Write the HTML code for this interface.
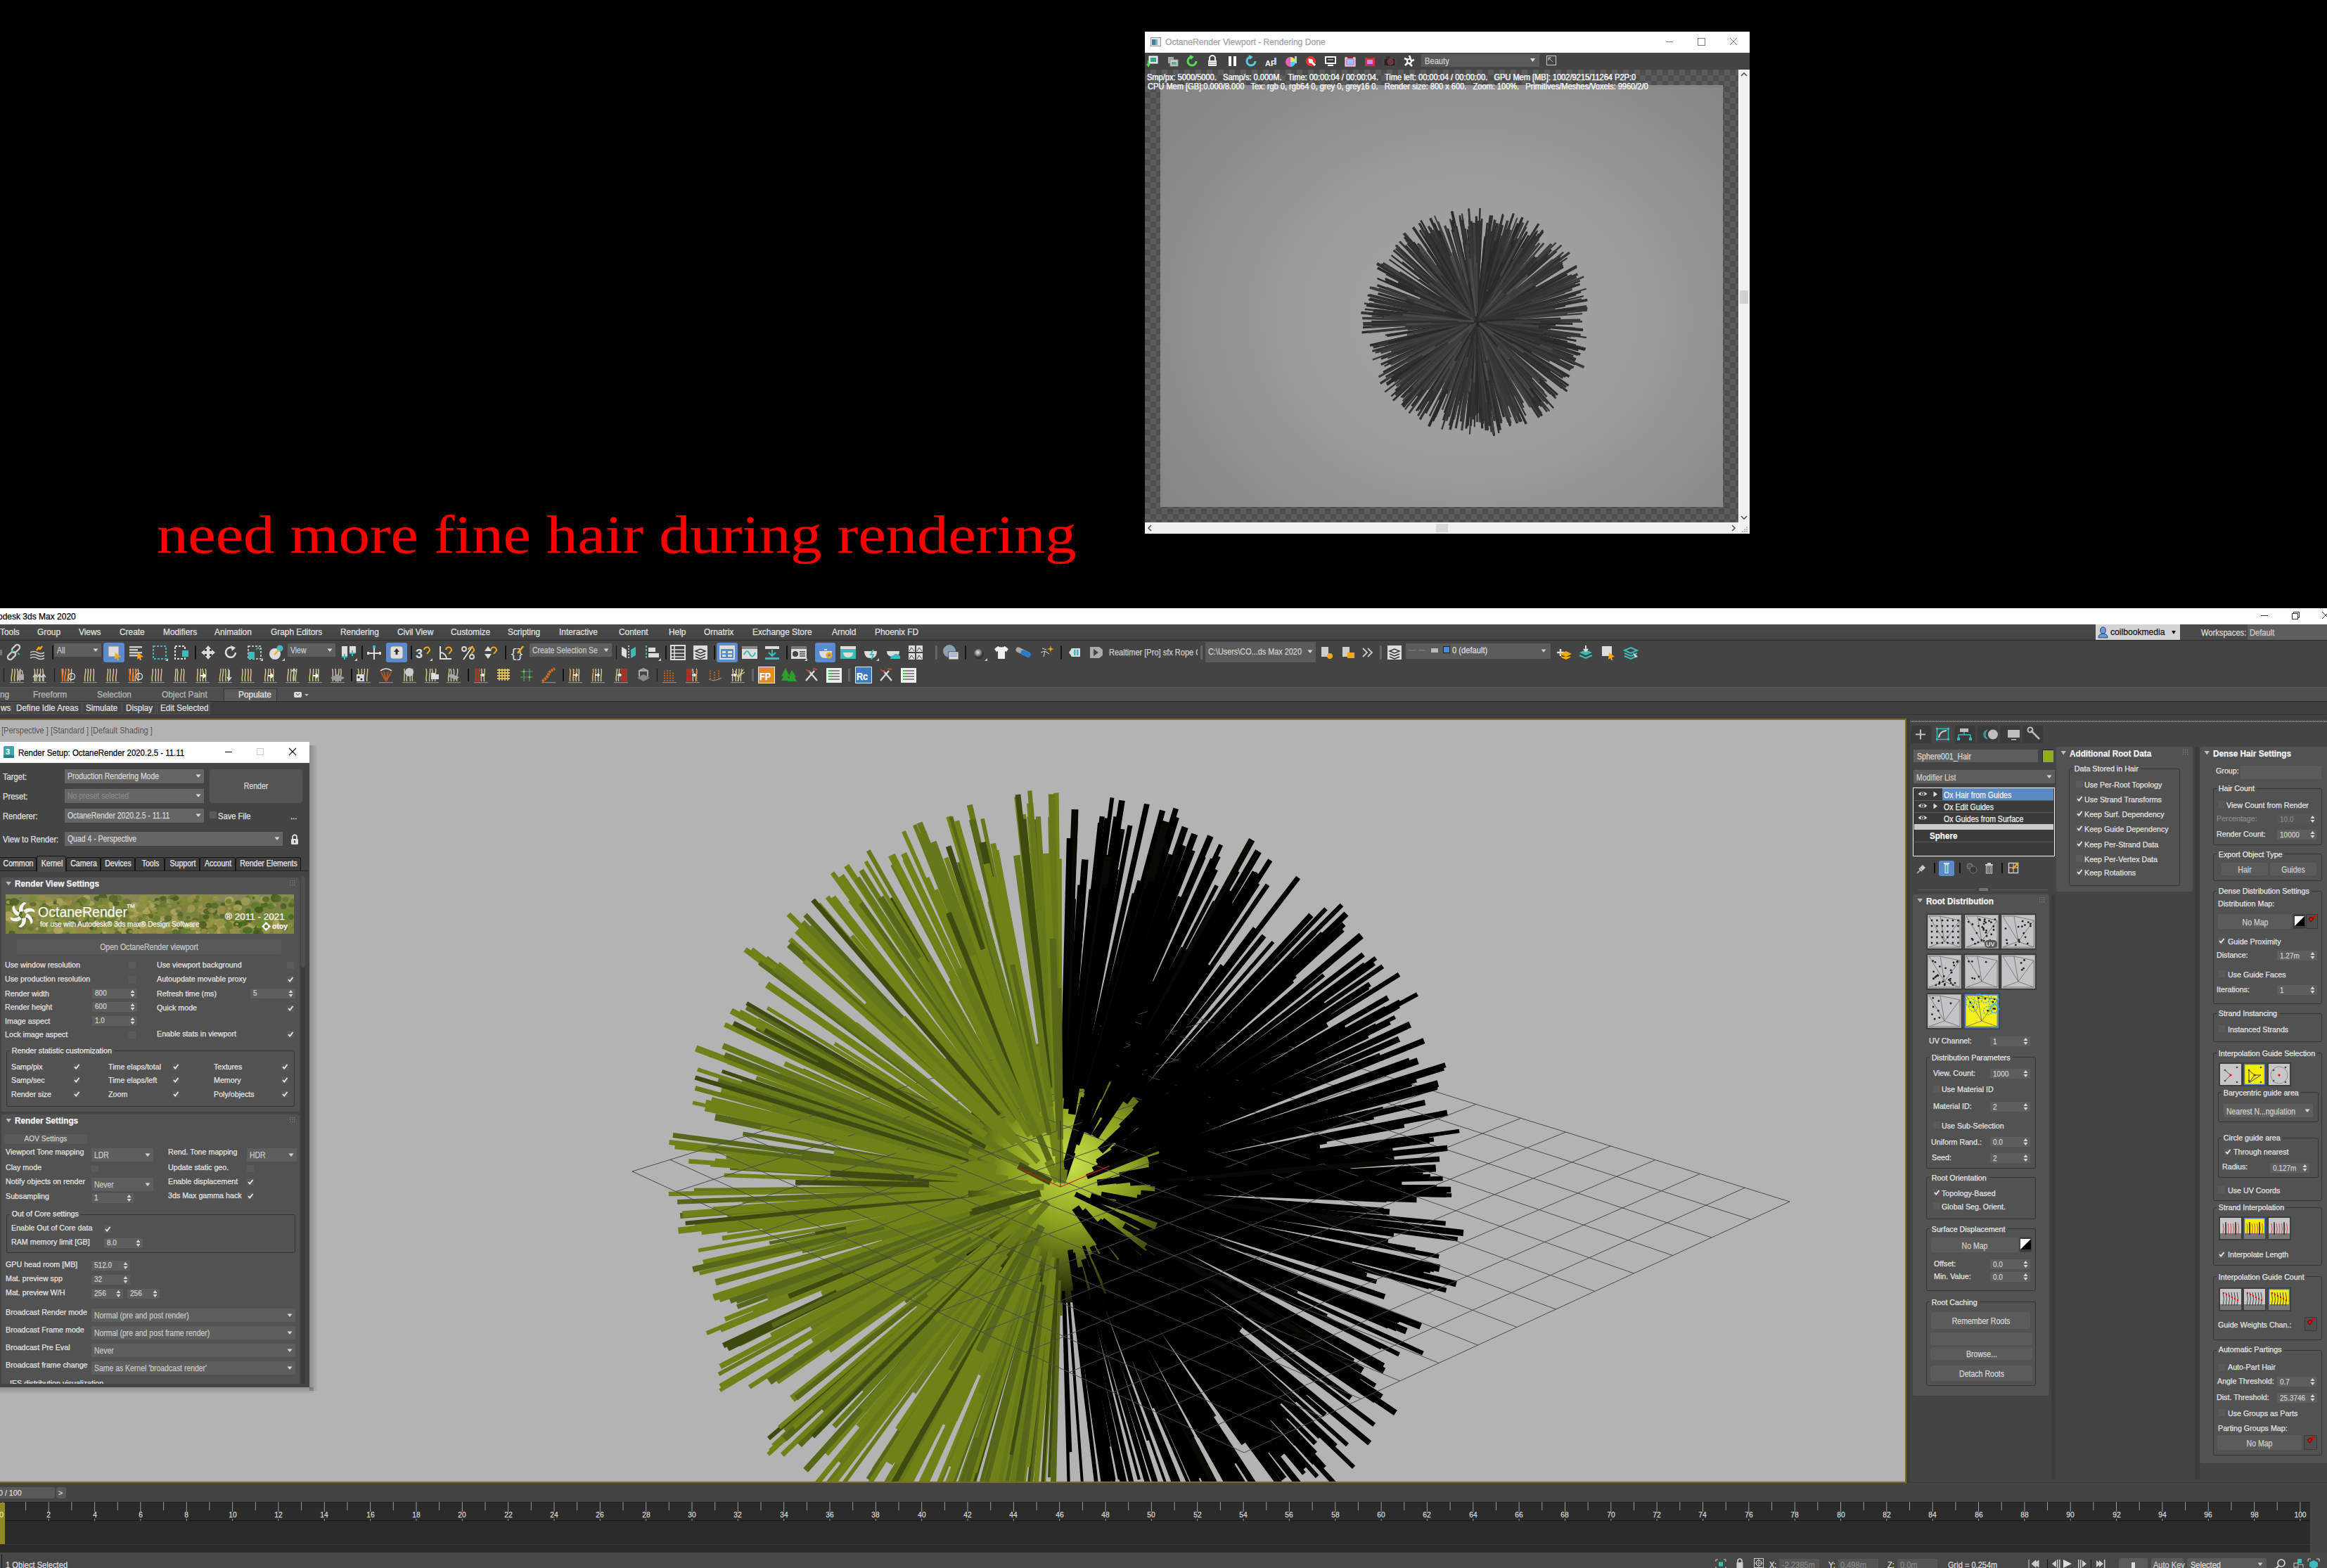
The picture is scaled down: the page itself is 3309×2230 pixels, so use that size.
<!DOCTYPE html>
<html><head><meta charset="utf-8"><style>
html,body{margin:0;padding:0;}
body{width:3309px;height:2230px;background:#000;position:relative;overflow:hidden;font-family:"Liberation Sans",sans-serif;}
.a{position:absolute;box-sizing:border-box;}
svg.a{box-sizing:content-box;overflow:visible;}
.t{position:absolute;white-space:nowrap;font-family:"Liberation Sans",sans-serif;-webkit-text-stroke:0.25px currentColor;}
</style></head><body>
<div class="a" style="left:1628px;top:45px;width:860px;height:30px;background:#ffffff;"></div>
<svg class="a" style="left:1636px;top:52px;" width="16" height="16" viewBox="0 0 16 16"><rect x="0.5" y="1.5" width="14" height="12" fill="#e8e8e8" stroke="#999"/><rect x="2" y="4" width="5" height="8" fill="#3f7f8f"/><rect x="7" y="4" width="3" height="8" fill="#7fb0c0"/></svg>
<div class="t" style="left:1657px;top:53.00px;font-size:13px;line-height:13px;color:#a0a0a8;font-family:'Liberation Sans', sans-serif;transform:scaleX(0.93);transform-origin:0 0;">OctaneRender Viewport - Rendering Done</div>
<svg class="a" style="left:2360px;top:50px;" width="120" height="20" viewBox="0 0 120 20"><line x1="9" y1="9.5" x2="19" y2="9.5" stroke="#777" stroke-width="1"/><rect x="54.5" y="4.5" width="10" height="10" fill="none" stroke="#777"/><line x1="100" y1="4" x2="110" y2="14" stroke="#777"/><line x1="110" y1="4" x2="100" y2="14" stroke="#777"/></svg>
<div class="a" style="left:1628px;top:75px;width:860px;height:24px;background:#444444;"></div>
<svg class="a" style="left:1631px;top:78px;" width="18" height="18" viewBox="0 0 18 18"><rect x="3" y="2" width="12" height="10" fill="#cde" stroke="#fff"/><rect x="5" y="4" width="8" height="6" fill="#3a7"/><path d="M2 8 L2 15 M0 13 L2 16 L4 13" stroke="#5d5" stroke-width="2" fill="none"/></svg>
<svg class="a" style="left:1659px;top:78px;" width="18" height="18" viewBox="0 0 18 18"><rect x="2" y="3" width="8" height="9" fill="#aaa"/><rect x="5" y="7" width="11" height="9" fill="#ccc" stroke="#999"/><rect x="7" y="10" width="7" height="4" fill="#6a8"/></svg>
<svg class="a" style="left:1687px;top:78px;" width="18" height="18" viewBox="0 0 18 18"><path d="M8 3 A6 6 0 1 0 14 9" stroke="#5d5" stroke-width="3" fill="none"/><path d="M5 1 L9 3 L6 6" stroke="#5d5" stroke-width="2" fill="none"/></svg>
<svg class="a" style="left:1715px;top:78px;" width="18" height="18" viewBox="0 0 18 18"><path d="M5 8 V5 A4 4 0 0 1 13 5 V8" stroke="#eee" stroke-width="2" fill="none"/><rect x="3" y="8" width="12" height="8" fill="#eee"/><rect x="4" y="10" width="10" height="1" fill="#999"/><rect x="4" y="13" width="10" height="1" fill="#999"/></svg>
<svg class="a" style="left:1743px;top:78px;" width="18" height="18" viewBox="0 0 18 18"><rect x="4" y="2" width="4" height="14" fill="#fff"/><rect x="11" y="2" width="4" height="14" fill="#fff"/></svg>
<svg class="a" style="left:1771px;top:78px;" width="18" height="18" viewBox="0 0 18 18"><path d="M8 3 A6 6 0 1 0 14 9" stroke="#5cd" stroke-width="3" fill="none"/><path d="M5 1 L9 3 L6 6" stroke="#5cd" stroke-width="2" fill="none"/></svg>
<svg class="a" style="left:1799px;top:78px;" width="18" height="18" viewBox="0 0 18 18"><text x="0" y="16" font-size="11" font-weight="bold" fill="#fff" font-family="Liberation Sans">AF</text><rect x="13" y="4" width="3" height="10" fill="#acf"/></svg>
<svg class="a" style="left:1827px;top:78px;" width="18" height="18" viewBox="0 0 18 18"><circle cx="8" cy="10" r="7" fill="#d6a"/><path d="M8 10 L8 3 A7 7 0 0 1 15 10 Z" fill="#fd4"/><path d="M8 10 L15 10 A7 7 0 0 1 8 17 Z" fill="#4cf"/><rect x="14" y="2" width="3" height="10" fill="#acf"/></svg>
<svg class="a" style="left:1855px;top:78px;" width="18" height="18" viewBox="0 0 18 18"><circle cx="9" cy="9" r="7" fill="#e33"/><circle cx="9" cy="9" r="3" fill="#fff"/><path d="M6 6 L15 15" stroke="#fff" stroke-width="3"/></svg>
<svg class="a" style="left:1883px;top:78px;" width="18" height="18" viewBox="0 0 18 18"><rect x="1" y="2" width="16" height="11" fill="#fff"/><rect x="3" y="4" width="12" height="7" fill="#333"/><rect x="5" y="14" width="8" height="2" fill="#fff"/><path d="M5 7 H13" stroke="#fff"/></svg>
<svg class="a" style="left:1911px;top:78px;" width="18" height="18" viewBox="0 0 18 18"><rect x="2" y="4" width="14" height="12" fill="#d8c" stroke="#fff"/><rect x="5" y="7" width="8" height="6" fill="#8cf"/><rect x="5" y="1" width="8" height="4" fill="#733"/></svg>
<svg class="a" style="left:1939px;top:78px;" width="18" height="18" viewBox="0 0 18 18"><rect x="2" y="4" width="14" height="12" fill="#c34"/><rect x="5" y="7" width="8" height="6" fill="#c8f"/><rect x="5" y="1" width="8" height="4" fill="#733"/></svg>
<svg class="a" style="left:1967px;top:78px;" width="18" height="18" viewBox="0 0 18 18"><rect x="1" y="5" width="16" height="11" rx="2" fill="#222" stroke="#555"/><circle cx="10" cy="10" r="4" fill="#444" stroke="#d22"/><rect x="4" y="2" width="6" height="3" fill="#333"/></svg>
<svg class="a" style="left:1995px;top:78px;" width="18" height="18" viewBox="0 0 18 18"><circle cx="9" cy="9" r="3" fill="none" stroke="#fff" stroke-width="2"/><path d="M9 1 L11 6 M16 7 L11 9 M13 16 L9 12 M3 15 L7 11 M2 5 L7 7" stroke="#fff" stroke-width="2.5"/></svg>
<div class="a" style="left:2021px;top:77px;width:168px;height:18px;background:#5a5a5a;"></div>
<div class="t" style="left:2026px;top:80.84px;font-size:12px;line-height:12px;color:#cfcfcf;font-family:'Liberation Sans', sans-serif;transform:scaleX(0.93);transform-origin:0 0;">Beauty</div>
<svg class="a" style="left:2176px;top:83px;" width="8" height="6" viewBox="0 0 8 6"><path d="M0 0 H7 L3.5 5 Z" fill="#ddd"/></svg>
<svg class="a" style="left:2199px;top:79px;" width="15" height="15" viewBox="0 0 15 15"><rect x="0.5" y="0.5" width="13" height="13" fill="none" stroke="#ccc"/><path d="M3 3 L9 9 M3 3 H7 M3 3 V7" stroke="#ccc"/></svg>
<div class="a" style="left:1628px;top:99px;width:844px;height:644px;background-color:#4d4d4d;background-image:linear-gradient(45deg,#5d5d5d 25%,transparent 25%,transparent 75%,#5d5d5d 75%),linear-gradient(45deg,#5d5d5d 25%,transparent 25%,transparent 75%,#5d5d5d 75%);background-size:16px 16px;background-position:0 0,8px 8px;"></div>
<div class="a" style="left:1650px;top:121px;width:800px;height:600px;background:radial-gradient(ellipse 520px 440px at 440px 330px,#a6a6a6 0%,#9c9c9c 45%,#868686 100%);"></div>
<svg class="a" style="left:1900px;top:257px;" width="400" height="400" viewBox="0 0 400 400"><circle cx="200" cy="200" r="60" fill="#303030"/><line x1="199.5" y1="200.4" x2="196.6" y2="202.8" stroke="#282828" stroke-width="3.5"/><line x1="200.4" y1="200.6" x2="202.6" y2="203.7" stroke="#282828" stroke-width="2.0"/><line x1="200.5" y1="201.7" x2="203.5" y2="211.1" stroke="#282828" stroke-width="2.0"/><line x1="201.9" y1="200.4" x2="212.4" y2="202.7" stroke="#282828" stroke-width="2.8"/><line x1="201.4" y1="197.8" x2="209.3" y2="185.5" stroke="#282828" stroke-width="2.8"/><line x1="199.5" y1="202.4" x2="196.9" y2="216.1" stroke="#282828" stroke-width="2.2"/><line x1="200.8" y1="197.3" x2="205.5" y2="182.3" stroke="#282828" stroke-width="3.0"/><line x1="197.2" y1="200.1" x2="181.4" y2="201.0" stroke="#282828" stroke-width="2.3"/><line x1="200.3" y1="196.9" x2="202.0" y2="179.3" stroke="#282828" stroke-width="3.7"/><line x1="197.1" y1="200.2" x2="180.4" y2="201.4" stroke="#282828" stroke-width="3.5"/><line x1="201.5" y1="202.9" x2="210.2" y2="219.5" stroke="#282828" stroke-width="2.4"/><line x1="197.2" y1="197.8" x2="181.4" y2="185.1" stroke="#282828" stroke-width="3.1"/><line x1="202.9" y1="197.9" x2="219.3" y2="186.3" stroke="#282828" stroke-width="2.7"/><line x1="203.3" y1="201.7" x2="222.0" y2="211.2" stroke="#282828" stroke-width="3.1"/><line x1="200.4" y1="195.2" x2="202.7" y2="167.9" stroke="#282828" stroke-width="3.7"/><line x1="197.6" y1="204.5" x2="184.2" y2="230.0" stroke="#282828" stroke-width="2.6"/><line x1="201.2" y1="205.2" x2="208.0" y2="234.8" stroke="#282828" stroke-width="2.0"/><line x1="204.9" y1="197.5" x2="232.6" y2="183.5" stroke="#282828" stroke-width="2.1"/><line x1="195.7" y1="203.6" x2="171.6" y2="224.3" stroke="#282828" stroke-width="3.8"/><line x1="194.3" y1="198.7" x2="161.8" y2="191.5" stroke="#282828" stroke-width="2.1"/><line x1="205.4" y1="198.0" x2="235.7" y2="186.7" stroke="#282828" stroke-width="3.0"/><line x1="200.0" y1="205.9" x2="199.9" y2="239.3" stroke="#282828" stroke-width="3.0"/><line x1="204.5" y1="205.5" x2="230.3" y2="236.3" stroke="#282828" stroke-width="3.7"/><line x1="205.4" y1="204.5" x2="235.8" y2="229.7" stroke="#282828" stroke-width="3.0"/><line x1="206.8" y1="200.1" x2="245.4" y2="200.7" stroke="#282828" stroke-width="2.6"/><line x1="203.5" y1="205.9" x2="223.3" y2="239.2" stroke="#282828" stroke-width="2.4"/><line x1="198.6" y1="207.4" x2="190.8" y2="249.2" stroke="#282828" stroke-width="3.7"/><line x1="196.5" y1="192.7" x2="176.8" y2="151.1" stroke="#282828" stroke-width="2.7"/><line x1="193.6" y1="205.1" x2="157.5" y2="233.7" stroke="#282828" stroke-width="3.6"/><line x1="205.4" y1="205.9" x2="235.8" y2="239.7" stroke="#282828" stroke-width="3.5"/><line x1="197.8" y1="191.6" x2="185.4" y2="143.8" stroke="#282828" stroke-width="3.1"/><line x1="192.9" y1="205.2" x2="152.7" y2="234.8" stroke="#282828" stroke-width="2.9"/><line x1="191.8" y1="196.7" x2="145.5" y2="178.2" stroke="#292929" stroke-width="3.4"/><line x1="205.1" y1="192.7" x2="234.2" y2="151.5" stroke="#282828" stroke-width="3.5"/><line x1="195.7" y1="192.7" x2="171.1" y2="151.7" stroke="#282828" stroke-width="3.3"/><line x1="203.7" y1="208.2" x2="224.8" y2="254.8" stroke="#282828" stroke-width="2.7"/><line x1="209.3" y1="198.9" x2="262.0" y2="192.6" stroke="#282828" stroke-width="2.8"/><line x1="191.7" y1="197.7" x2="144.7" y2="184.6" stroke="#292929" stroke-width="3.7"/><line x1="204.1" y1="192.3" x2="227.1" y2="148.7" stroke="#282828" stroke-width="3.1"/><line x1="191.1" y1="196.3" x2="140.7" y2="175.5" stroke="#282828" stroke-width="3.5"/><line x1="193.0" y1="193.5" x2="153.1" y2="156.9" stroke="#292929" stroke-width="2.6"/><line x1="204.4" y1="191.6" x2="229.1" y2="144.3" stroke="#282828" stroke-width="3.7"/><line x1="192.7" y1="206.8" x2="151.3" y2="245.0" stroke="#292929" stroke-width="2.2"/><line x1="200.3" y1="209.5" x2="202.2" y2="263.2" stroke="#292929" stroke-width="2.4"/><line x1="206.2" y1="192.7" x2="241.6" y2="151.4" stroke="#292929" stroke-width="2.3"/><line x1="197.5" y1="210.4" x2="183.1" y2="269.3" stroke="#282828" stroke-width="2.2"/><line x1="190.0" y1="197.6" x2="133.4" y2="184.3" stroke="#282828" stroke-width="2.9"/><line x1="208.9" y1="193.5" x2="259.1" y2="156.8" stroke="#292929" stroke-width="3.4"/><line x1="190.1" y1="197.1" x2="133.8" y2="180.5" stroke="#282828" stroke-width="2.0"/><line x1="208.3" y1="193.2" x2="255.5" y2="154.4" stroke="#2a2a2a" stroke-width="2.8"/><line x1="208.8" y1="193.2" x2="258.5" y2="154.7" stroke="#282828" stroke-width="2.9"/><line x1="205.7" y1="190.4" x2="237.7" y2="136.1" stroke="#292929" stroke-width="2.8"/><line x1="198.4" y1="189.5" x2="189.5" y2="129.8" stroke="#2a2a2a" stroke-width="2.0"/><line x1="195.9" y1="190.0" x2="172.7" y2="133.2" stroke="#282828" stroke-width="3.7"/><line x1="200.9" y1="210.7" x2="205.9" y2="271.5" stroke="#282828" stroke-width="3.1"/><line x1="201.9" y1="189.8" x2="212.4" y2="132.2" stroke="#292929" stroke-width="3.7"/><line x1="189.7" y1="202.2" x2="131.3" y2="214.4" stroke="#292929" stroke-width="2.9"/><line x1="195.0" y1="189.9" x2="166.4" y2="132.6" stroke="#282828" stroke-width="3.0"/><line x1="188.8" y1="199.9" x2="125.1" y2="199.1" stroke="#282828" stroke-width="3.7"/><line x1="197.9" y1="210.6" x2="186.2" y2="270.3" stroke="#292929" stroke-width="2.8"/><line x1="196.6" y1="189.1" x2="177.2" y2="127.4" stroke="#2a2a2a" stroke-width="3.5"/><line x1="208.3" y1="191.5" x2="255.3" y2="143.2" stroke="#292929" stroke-width="2.9"/><line x1="191.4" y1="207.3" x2="142.9" y2="248.5" stroke="#292929" stroke-width="2.2"/><line x1="202.9" y1="210.3" x2="219.6" y2="268.5" stroke="#2a2a2a" stroke-width="3.3"/><line x1="190.0" y1="206.0" x2="133.6" y2="240.3" stroke="#2a2a2a" stroke-width="3.2"/><line x1="211.5" y1="201.1" x2="276.5" y2="207.0" stroke="#282828" stroke-width="2.2"/><line x1="202.9" y1="210.9" x2="219.2" y2="272.6" stroke="#282828" stroke-width="2.1"/><line x1="198.2" y1="189.0" x2="188.2" y2="126.8" stroke="#292929" stroke-width="2.7"/><line x1="187.7" y1="201.2" x2="117.8" y2="208.0" stroke="#282828" stroke-width="2.5"/><line x1="192.4" y1="209.0" x2="149.6" y2="260.1" stroke="#2a2a2a" stroke-width="3.0"/><line x1="203.5" y1="188.3" x2="223.6" y2="122.1" stroke="#282828" stroke-width="2.8"/><line x1="210.0" y1="206.4" x2="266.5" y2="242.6" stroke="#2a2a2a" stroke-width="2.2"/><line x1="206.2" y1="210.4" x2="241.4" y2="269.0" stroke="#2a2a2a" stroke-width="2.3"/><line x1="211.3" y1="205.1" x2="275.3" y2="234.1" stroke="#282828" stroke-width="2.8"/><line x1="199.3" y1="188.4" x2="195.5" y2="122.3" stroke="#282828" stroke-width="2.2"/><line x1="202.2" y1="212.3" x2="214.3" y2="281.9" stroke="#292929" stroke-width="3.6"/><line x1="212.8" y1="200.9" x2="285.6" y2="205.8" stroke="#2a2a2a" stroke-width="2.2"/><line x1="188.5" y1="193.4" x2="123.1" y2="156.2" stroke="#292929" stroke-width="2.6"/><line x1="189.9" y1="206.6" x2="132.6" y2="244.0" stroke="#292929" stroke-width="3.6"/><line x1="195.4" y1="188.7" x2="169.1" y2="124.7" stroke="#292929" stroke-width="3.7"/><line x1="203.1" y1="187.3" x2="220.6" y2="115.0" stroke="#2a2a2a" stroke-width="3.1"/><line x1="212.4" y1="204.1" x2="282.8" y2="227.5" stroke="#2a2a2a" stroke-width="2.8"/><line x1="206.5" y1="210.5" x2="243.0" y2="270.2" stroke="#2a2a2a" stroke-width="3.3"/><line x1="188.9" y1="194.0" x2="126.0" y2="160.2" stroke="#2a2a2a" stroke-width="3.4"/><line x1="192.7" y1="188.4" x2="151.2" y2="122.4" stroke="#2a2a2a" stroke-width="3.4"/><line x1="194.2" y1="211.7" x2="161.2" y2="277.7" stroke="#2b2b2b" stroke-width="3.6"/><line x1="193.1" y1="189.1" x2="154.2" y2="127.3" stroke="#292929" stroke-width="2.7"/><line x1="212.8" y1="204.1" x2="285.1" y2="227.1" stroke="#282828" stroke-width="3.7"/><line x1="212.9" y1="203.3" x2="286.0" y2="222.0" stroke="#282828" stroke-width="3.3"/><line x1="189.8" y1="207.5" x2="131.9" y2="249.8" stroke="#282828" stroke-width="2.5"/><line x1="197.3" y1="186.9" x2="181.9" y2="112.9" stroke="#282828" stroke-width="3.7"/><line x1="198.3" y1="214.1" x2="188.3" y2="293.8" stroke="#282828" stroke-width="2.8"/><line x1="186.9" y1="197.4" x2="112.8" y2="182.9" stroke="#292929" stroke-width="3.0"/><line x1="190.7" y1="189.0" x2="137.7" y2="126.4" stroke="#2a2a2a" stroke-width="2.7"/><line x1="185.8" y1="200.1" x2="105.2" y2="200.9" stroke="#292929" stroke-width="2.4"/><line x1="195.8" y1="187.3" x2="172.0" y2="115.7" stroke="#282828" stroke-width="3.1"/><line x1="190.2" y1="209.8" x2="135.0" y2="265.5" stroke="#2a2a2a" stroke-width="3.0"/><line x1="206.8" y1="212.4" x2="245.1" y2="282.7" stroke="#2b2b2b" stroke-width="3.1"/><line x1="193.8" y1="211.7" x2="158.8" y2="278.3" stroke="#2b2b2b" stroke-width="2.4"/><line x1="205.6" y1="212.1" x2="237.2" y2="280.8" stroke="#2b2b2b" stroke-width="3.6"/><line x1="212.4" y1="207.7" x2="283.0" y2="251.4" stroke="#2a2a2a" stroke-width="2.1"/><line x1="214.5" y1="197.5" x2="296.6" y2="183.6" stroke="#282828" stroke-width="3.5"/><line x1="198.7" y1="213.5" x2="191.2" y2="289.9" stroke="#2b2b2b" stroke-width="2.5"/><line x1="215.1" y1="201.9" x2="301.0" y2="212.7" stroke="#292929" stroke-width="3.6"/><line x1="201.5" y1="213.5" x2="210.0" y2="290.0" stroke="#292929" stroke-width="3.3"/><line x1="212.9" y1="206.1" x2="286.0" y2="240.5" stroke="#2a2a2a" stroke-width="2.5"/><line x1="210.0" y1="210.4" x2="266.3" y2="269.3" stroke="#282828" stroke-width="2.8"/><line x1="184.9" y1="200.9" x2="99.0" y2="206.0" stroke="#2c2c2c" stroke-width="2.4"/><line x1="200.2" y1="215.3" x2="201.1" y2="302.1" stroke="#292929" stroke-width="2.7"/><line x1="193.3" y1="213.2" x2="155.5" y2="288.1" stroke="#292929" stroke-width="2.3"/><line x1="185.1" y1="203.8" x2="100.4" y2="225.6" stroke="#282828" stroke-width="2.2"/><line x1="187.7" y1="191.1" x2="117.7" y2="140.6" stroke="#2a2a2a" stroke-width="2.6"/><line x1="194.3" y1="214.7" x2="162.3" y2="297.9" stroke="#282828" stroke-width="3.0"/><line x1="205.7" y1="185.8" x2="237.8" y2="105.0" stroke="#2c2c2c" stroke-width="2.8"/><line x1="215.1" y1="198.5" x2="300.9" y2="189.9" stroke="#282828" stroke-width="2.0"/><line x1="214.3" y1="196.3" x2="295.4" y2="175.1" stroke="#2a2a2a" stroke-width="3.2"/><line x1="185.5" y1="201.2" x2="103.1" y2="207.7" stroke="#2a2a2a" stroke-width="2.3"/><line x1="194.1" y1="186.8" x2="160.7" y2="112.3" stroke="#2b2b2b" stroke-width="2.3"/><line x1="191.3" y1="188.0" x2="142.0" y2="120.1" stroke="#2a2a2a" stroke-width="2.2"/><line x1="215.0" y1="198.5" x2="300.2" y2="190.2" stroke="#282828" stroke-width="2.5"/><line x1="185.3" y1="201.7" x2="101.8" y2="211.6" stroke="#292929" stroke-width="2.3"/><line x1="212.5" y1="192.5" x2="283.7" y2="150.0" stroke="#2a2a2a" stroke-width="2.8"/><line x1="207.7" y1="186.8" x2="251.1" y2="112.1" stroke="#2c2c2c" stroke-width="2.5"/><line x1="196.9" y1="185.2" x2="179.0" y2="101.1" stroke="#2a2a2a" stroke-width="3.6"/><line x1="215.5" y1="194.2" x2="303.3" y2="161.4" stroke="#2a2a2a" stroke-width="2.1"/><line x1="201.0" y1="216.3" x2="206.9" y2="308.9" stroke="#2a2a2a" stroke-width="3.6"/><line x1="202.7" y1="183.9" x2="218.1" y2="92.4" stroke="#2b2b2b" stroke-width="2.8"/><line x1="185.4" y1="207.8" x2="102.4" y2="251.9" stroke="#2c2c2c" stroke-width="2.5"/><line x1="184.3" y1="204.7" x2="95.6" y2="231.1" stroke="#2b2b2b" stroke-width="2.8"/><line x1="216.8" y1="200.8" x2="312.0" y2="205.1" stroke="#2a2a2a" stroke-width="2.8"/><line x1="203.7" y1="184.7" x2="224.7" y2="98.3" stroke="#2a2a2a" stroke-width="2.9"/><line x1="185.4" y1="205.0" x2="102.6" y2="233.5" stroke="#2d2d2d" stroke-width="3.5"/><line x1="183.0" y1="198.3" x2="86.9" y2="188.6" stroke="#282828" stroke-width="3.3"/><line x1="208.1" y1="185.5" x2="254.1" y2="103.6" stroke="#282828" stroke-width="2.0"/><line x1="206.0" y1="215.7" x2="240.3" y2="304.7" stroke="#2b2b2b" stroke-width="3.7"/><line x1="215.2" y1="202.8" x2="301.3" y2="218.5" stroke="#2b2b2b" stroke-width="3.1"/><line x1="205.2" y1="215.8" x2="234.6" y2="305.3" stroke="#2a2a2a" stroke-width="3.2"/><line x1="201.7" y1="184.5" x2="211.2" y2="96.8" stroke="#2c2c2c" stroke-width="2.8"/><line x1="216.8" y1="195.3" x2="312.2" y2="168.7" stroke="#2b2b2b" stroke-width="3.4"/><line x1="215.5" y1="202.6" x2="303.2" y2="217.6" stroke="#2d2d2d" stroke-width="2.6"/><line x1="207.6" y1="213.7" x2="250.7" y2="291.1" stroke="#2c2c2c" stroke-width="3.7"/><line x1="200.5" y1="182.6" x2="203.6" y2="83.9" stroke="#2b2b2b" stroke-width="2.5"/><line x1="185.1" y1="192.4" x2="101.0" y2="149.2" stroke="#282828" stroke-width="3.7"/><line x1="205.8" y1="183.5" x2="238.5" y2="90.2" stroke="#2c2c2c" stroke-width="3.5"/><line x1="191.6" y1="214.3" x2="144.1" y2="295.4" stroke="#282828" stroke-width="3.8"/><line x1="192.3" y1="185.8" x2="148.9" y2="105.6" stroke="#292929" stroke-width="2.9"/><line x1="208.1" y1="184.4" x2="254.2" y2="96.1" stroke="#2b2b2b" stroke-width="2.6"/><line x1="184.9" y1="195.8" x2="99.7" y2="172.1" stroke="#2b2b2b" stroke-width="3.8"/><line x1="214.5" y1="209.8" x2="297.0" y2="265.0" stroke="#282828" stroke-width="2.9"/><line x1="214.8" y1="191.8" x2="298.3" y2="145.3" stroke="#2c2c2c" stroke-width="2.2"/><line x1="197.2" y1="183.2" x2="181.6" y2="87.9" stroke="#282828" stroke-width="3.5"/><line x1="193.0" y1="185.1" x2="153.3" y2="100.5" stroke="#2b2b2b" stroke-width="2.4"/><line x1="215.7" y1="201.5" x2="304.8" y2="210.3" stroke="#2c2c2c" stroke-width="2.2"/><line x1="205.5" y1="183.0" x2="236.3" y2="86.6" stroke="#2a2a2a" stroke-width="2.1"/><line x1="212.8" y1="188.6" x2="285.0" y2="124.3" stroke="#2a2a2a" stroke-width="2.7"/><line x1="199.9" y1="216.1" x2="199.0" y2="307.3" stroke="#2a2a2a" stroke-width="3.4"/><line x1="202.9" y1="183.4" x2="219.3" y2="89.2" stroke="#2e2e2e" stroke-width="3.6"/><line x1="196.3" y1="183.1" x2="175.6" y2="87.2" stroke="#282828" stroke-width="3.6"/><line x1="197.7" y1="217.6" x2="184.4" y2="317.2" stroke="#2a2a2a" stroke-width="2.3"/><line x1="203.7" y1="183.8" x2="224.7" y2="92.0" stroke="#2a2a2a" stroke-width="3.5"/><line x1="216.3" y1="193.1" x2="308.4" y2="154.2" stroke="#2d2d2d" stroke-width="2.3"/><line x1="215.8" y1="205.2" x2="305.4" y2="234.5" stroke="#2a2a2a" stroke-width="2.5"/><line x1="184.0" y1="191.8" x2="93.2" y2="145.4" stroke="#2d2d2d" stroke-width="2.6"/><line x1="203.2" y1="216.1" x2="221.5" y2="307.2" stroke="#292929" stroke-width="2.6"/><line x1="217.6" y1="203.2" x2="317.4" y2="221.7" stroke="#292929" stroke-width="3.8"/><line x1="183.6" y1="198.7" x2="90.5" y2="191.6" stroke="#2d2d2d" stroke-width="3.6"/><line x1="187.9" y1="212.7" x2="119.2" y2="284.8" stroke="#282828" stroke-width="2.9"/><line x1="208.9" y1="214.3" x2="259.3" y2="295.7" stroke="#2e2e2e" stroke-width="2.9"/><line x1="199.5" y1="182.8" x2="196.7" y2="85.4" stroke="#2d2d2d" stroke-width="3.2"/><line x1="212.3" y1="211.1" x2="282.0" y2="274.2" stroke="#2d2d2d" stroke-width="2.2"/><line x1="203.9" y1="182.1" x2="226.3" y2="80.9" stroke="#2d2d2d" stroke-width="2.6"/><line x1="191.1" y1="184.6" x2="140.5" y2="97.2" stroke="#2b2b2b" stroke-width="3.4"/><line x1="183.1" y1="206.8" x2="87.4" y2="245.6" stroke="#2b2b2b" stroke-width="2.2"/><line x1="211.8" y1="212.1" x2="278.5" y2="280.5" stroke="#2e2e2e" stroke-width="3.5"/><line x1="193.7" y1="215.4" x2="157.8" y2="302.9" stroke="#2a2a2a" stroke-width="2.7"/><line x1="201.7" y1="182.5" x2="211.0" y2="83.1" stroke="#2a2a2a" stroke-width="2.2"/><line x1="202.0" y1="217.2" x2="213.0" y2="314.5" stroke="#2b2b2b" stroke-width="3.1"/><line x1="183.1" y1="207.0" x2="87.1" y2="246.4" stroke="#2c2c2c" stroke-width="3.3"/><line x1="199.3" y1="183.1" x2="195.5" y2="87.4" stroke="#2d2d2d" stroke-width="2.5"/><line x1="214.2" y1="210.3" x2="294.4" y2="268.7" stroke="#2a2a2a" stroke-width="3.2"/><line x1="209.7" y1="184.6" x2="264.6" y2="97.4" stroke="#2d2d2d" stroke-width="2.5"/><line x1="210.6" y1="213.5" x2="270.8" y2="289.7" stroke="#2f2f2f" stroke-width="2.7"/><line x1="214.0" y1="210.6" x2="293.6" y2="270.4" stroke="#2d2d2d" stroke-width="2.1"/><line x1="218.8" y1="200.5" x2="325.5" y2="203.1" stroke="#292929" stroke-width="2.9"/><line x1="215.4" y1="190.2" x2="303.0" y2="134.8" stroke="#2d2d2d" stroke-width="3.6"/><line x1="208.1" y1="184.2" x2="254.1" y2="94.4" stroke="#2a2a2a" stroke-width="3.0"/><line x1="183.4" y1="209.3" x2="89.3" y2="262.3" stroke="#2e2e2e" stroke-width="3.0"/><line x1="207.7" y1="217.0" x2="251.2" y2="313.3" stroke="#2c2c2c" stroke-width="2.6"/><line x1="216.7" y1="192.0" x2="311.2" y2="146.8" stroke="#282828" stroke-width="2.3"/><line x1="180.8" y1="203.1" x2="72.3" y2="220.4" stroke="#282828" stroke-width="3.5"/><line x1="208.0" y1="217.2" x2="253.3" y2="314.6" stroke="#2a2a2a" stroke-width="3.0"/><line x1="215.3" y1="209.8" x2="301.8" y2="265.3" stroke="#282828" stroke-width="2.4"/><line x1="217.3" y1="208.9" x2="315.1" y2="259.6" stroke="#2c2c2c" stroke-width="2.3"/><line x1="187.2" y1="214.6" x2="114.7" y2="297.7" stroke="#282828" stroke-width="2.7"/><line x1="181.8" y1="206.3" x2="78.4" y2="242.3" stroke="#2c2c2c" stroke-width="2.2"/><line x1="217.0" y1="195.4" x2="313.6" y2="169.5" stroke="#2e2e2e" stroke-width="2.6"/><line x1="188.5" y1="186.5" x2="123.5" y2="109.9" stroke="#292929" stroke-width="2.7"/><line x1="201.8" y1="181.9" x2="212.3" y2="79.4" stroke="#2a2a2a" stroke-width="3.5"/><line x1="198.0" y1="180.4" x2="186.7" y2="69.1" stroke="#2c2c2c" stroke-width="2.1"/><line x1="215.5" y1="208.5" x2="303.7" y2="256.4" stroke="#2c2c2c" stroke-width="2.9"/><line x1="198.2" y1="218.7" x2="187.7" y2="324.7" stroke="#2d2d2d" stroke-width="3.8"/><line x1="192.0" y1="216.7" x2="146.7" y2="311.5" stroke="#282828" stroke-width="2.5"/><line x1="209.8" y1="215.7" x2="265.4" y2="304.8" stroke="#2c2c2c" stroke-width="2.5"/><line x1="219.6" y1="197.3" x2="330.6" y2="181.9" stroke="#282828" stroke-width="2.8"/><line x1="205.3" y1="181.8" x2="235.6" y2="78.4" stroke="#282828" stroke-width="2.2"/><line x1="199.4" y1="219.1" x2="196.1" y2="327.6" stroke="#2d2d2d" stroke-width="2.4"/><line x1="192.1" y1="217.0" x2="147.3" y2="313.5" stroke="#282828" stroke-width="2.5"/><line x1="192.0" y1="183.0" x2="146.9" y2="86.4" stroke="#2a2a2a" stroke-width="3.1"/><line x1="187.9" y1="214.2" x2="119.0" y2="295.0" stroke="#2f2f2f" stroke-width="3.3"/><line x1="210.6" y1="183.2" x2="270.4" y2="88.2" stroke="#2c2c2c" stroke-width="2.1"/><line x1="198.8" y1="220.2" x2="191.9" y2="334.4" stroke="#2d2d2d" stroke-width="3.1"/><line x1="199.8" y1="218.7" x2="198.6" y2="324.4" stroke="#2a2a2a" stroke-width="3.1"/><line x1="212.7" y1="186.8" x2="284.8" y2="112.3" stroke="#2c2c2c" stroke-width="3.0"/><line x1="193.9" y1="218.8" x2="159.4" y2="325.1" stroke="#2b2b2b" stroke-width="3.6"/><line x1="194.0" y1="181.7" x2="159.9" y2="77.9" stroke="#282828" stroke-width="3.1"/><line x1="211.9" y1="186.0" x2="279.3" y2="106.9" stroke="#2f2f2f" stroke-width="2.3"/><line x1="215.3" y1="186.2" x2="302.0" y2="107.9" stroke="#2b2b2b" stroke-width="2.7"/><line x1="190.0" y1="218.0" x2="133.1" y2="319.9" stroke="#303030" stroke-width="3.4"/><line x1="217.2" y1="188.5" x2="314.5" y2="123.5" stroke="#2b2b2b" stroke-width="2.3"/><line x1="202.7" y1="218.5" x2="218.1" y2="323.5" stroke="#292929" stroke-width="3.1"/><line x1="212.9" y1="216.0" x2="285.8" y2="306.6" stroke="#2c2c2c" stroke-width="2.9"/><line x1="185.6" y1="185.2" x2="104.2" y2="101.2" stroke="#2d2d2d" stroke-width="2.7"/><line x1="182.9" y1="190.1" x2="85.8" y2="133.8" stroke="#292929" stroke-width="3.1"/><line x1="219.5" y1="194.9" x2="330.2" y2="166.0" stroke="#292929" stroke-width="2.6"/><line x1="183.2" y1="191.8" x2="88.1" y2="145.0" stroke="#2c2c2c" stroke-width="3.1"/><line x1="182.1" y1="205.5" x2="80.4" y2="236.6" stroke="#2e2e2e" stroke-width="2.5"/><line x1="200.8" y1="181.3" x2="205.2" y2="75.5" stroke="#282828" stroke-width="2.2"/><line x1="182.9" y1="189.8" x2="86.0" y2="132.0" stroke="#2e2e2e" stroke-width="3.2"/><line x1="181.0" y1="208.9" x2="73.2" y2="259.0" stroke="#292929" stroke-width="2.7"/><line x1="203.2" y1="180.8" x2="221.4" y2="71.9" stroke="#292929" stroke-width="3.6"/><line x1="184.1" y1="187.4" x2="94.0" y2="115.7" stroke="#2c2c2c" stroke-width="2.4"/><line x1="185.9" y1="185.1" x2="106.2" y2="100.7" stroke="#2b2b2b" stroke-width="3.3"/><line x1="199.2" y1="179.0" x2="194.6" y2="59.8" stroke="#2f2f2f" stroke-width="2.6"/><line x1="219.3" y1="198.4" x2="328.4" y2="189.4" stroke="#2b2b2b" stroke-width="3.4"/><line x1="210.0" y1="218.4" x2="266.8" y2="322.7" stroke="#2a2a2a" stroke-width="2.1"/><line x1="189.9" y1="217.1" x2="132.4" y2="314.1" stroke="#313131" stroke-width="3.4"/><line x1="218.4" y1="209.1" x2="322.4" y2="260.6" stroke="#2f2f2f" stroke-width="3.6"/><line x1="218.9" y1="196.6" x2="325.8" y2="177.4" stroke="#2a2a2a" stroke-width="3.3"/><line x1="218.3" y1="189.9" x2="322.2" y2="132.4" stroke="#313131" stroke-width="3.3"/><line x1="212.2" y1="214.6" x2="281.7" y2="297.0" stroke="#2f2f2f" stroke-width="3.5"/><line x1="217.5" y1="207.5" x2="316.8" y2="250.3" stroke="#2d2d2d" stroke-width="2.6"/><line x1="183.6" y1="213.4" x2="90.5" y2="289.5" stroke="#282828" stroke-width="2.8"/><line x1="199.3" y1="220.2" x2="195.6" y2="334.5" stroke="#313131" stroke-width="2.3"/><line x1="198.4" y1="220.2" x2="189.6" y2="334.3" stroke="#2a2a2a" stroke-width="2.4"/><line x1="193.8" y1="219.0" x2="158.3" y2="326.7" stroke="#2b2b2b" stroke-width="2.2"/><line x1="200.2" y1="178.8" x2="201.0" y2="58.7" stroke="#2c2c2c" stroke-width="2.2"/><line x1="189.3" y1="181.2" x2="128.5" y2="74.9" stroke="#2a2a2a" stroke-width="2.1"/><line x1="193.5" y1="219.3" x2="156.4" y2="328.4" stroke="#2b2b2b" stroke-width="2.8"/><line x1="180.5" y1="190.9" x2="69.9" y2="139.2" stroke="#2f2f2f" stroke-width="2.7"/><line x1="182.9" y1="209.6" x2="85.7" y2="263.7" stroke="#313131" stroke-width="2.6"/><line x1="188.8" y1="183.3" x2="125.4" y2="88.8" stroke="#2d2d2d" stroke-width="2.7"/><line x1="181.2" y1="191.3" x2="74.7" y2="142.0" stroke="#323232" stroke-width="3.8"/><line x1="220.4" y1="200.5" x2="336.3" y2="203.5" stroke="#2b2b2b" stroke-width="3.0"/><line x1="179.8" y1="199.2" x2="65.4" y2="194.9" stroke="#282828" stroke-width="2.3"/><line x1="205.5" y1="179.5" x2="236.7" y2="63.1" stroke="#2b2b2b" stroke-width="2.9"/><line x1="221.0" y1="201.5" x2="340.1" y2="210.1" stroke="#2d2d2d" stroke-width="2.6"/><line x1="217.7" y1="208.2" x2="318.2" y2="254.6" stroke="#2d2d2d" stroke-width="2.7"/><line x1="194.7" y1="178.7" x2="164.5" y2="57.8" stroke="#282828" stroke-width="2.2"/><line x1="218.3" y1="190.5" x2="322.2" y2="136.9" stroke="#2f2f2f" stroke-width="2.1"/><line x1="200.8" y1="219.6" x2="205.4" y2="330.7" stroke="#2d2d2d" stroke-width="3.4"/><line x1="197.4" y1="180.2" x2="182.8" y2="68.0" stroke="#2f2f2f" stroke-width="3.8"/><line x1="187.4" y1="183.4" x2="116.2" y2="89.3" stroke="#323232" stroke-width="3.0"/><line x1="219.3" y1="204.4" x2="328.7" y2="229.3" stroke="#2c2c2c" stroke-width="2.8"/><line x1="214.4" y1="215.1" x2="295.7" y2="300.9" stroke="#2a2a2a" stroke-width="2.2"/><line x1="190.0" y1="181.2" x2="133.1" y2="74.6" stroke="#2f2f2f" stroke-width="2.5"/><line x1="202.8" y1="179.6" x2="218.7" y2="64.3" stroke="#2f2f2f" stroke-width="3.0"/><line x1="193.7" y1="180.3" x2="158.3" y2="68.4" stroke="#2f2f2f" stroke-width="3.5"/><line x1="219.8" y1="194.6" x2="332.0" y2="164.1" stroke="#2a2a2a" stroke-width="3.6"/><line x1="220.5" y1="194.4" x2="336.4" y2="162.9" stroke="#2a2a2a" stroke-width="3.3"/><line x1="204.6" y1="219.7" x2="230.9" y2="331.0" stroke="#292929" stroke-width="3.2"/><line x1="205.8" y1="220.4" x2="238.6" y2="336.2" stroke="#2f2f2f" stroke-width="3.5"/><line x1="198.4" y1="220.4" x2="189.4" y2="336.0" stroke="#2a2a2a" stroke-width="3.5"/><line x1="219.4" y1="207.6" x2="329.3" y2="250.4" stroke="#2e2e2e" stroke-width="3.5"/><line x1="219.6" y1="196.0" x2="330.8" y2="173.1" stroke="#2d2d2d" stroke-width="3.1"/><line x1="178.0" y1="196.8" x2="53.6" y2="178.4" stroke="#292929" stroke-width="2.0"/><line x1="215.0" y1="214.4" x2="300.0" y2="296.3" stroke="#292929" stroke-width="3.1"/><line x1="195.6" y1="179.7" x2="170.4" y2="64.6" stroke="#2b2b2b" stroke-width="3.7"/><line x1="188.8" y1="182.0" x2="125.5" y2="80.0" stroke="#2c2c2c" stroke-width="2.6"/><line x1="183.7" y1="214.2" x2="91.4" y2="294.8" stroke="#282828" stroke-width="2.8"/><line x1="199.0" y1="220.4" x2="193.3" y2="336.0" stroke="#2c2c2c" stroke-width="3.8"/><line x1="178.7" y1="204.7" x2="57.8" y2="231.6" stroke="#303030" stroke-width="2.2"/><line x1="185.4" y1="215.1" x2="102.7" y2="300.8" stroke="#333333" stroke-width="3.1"/><line x1="191.9" y1="180.6" x2="146.2" y2="70.9" stroke="#292929" stroke-width="3.6"/><line x1="180.2" y1="205.2" x2="68.1" y2="234.4" stroke="#2d2d2d" stroke-width="2.5"/><line x1="181.7" y1="211.9" x2="78.3" y2="279.5" stroke="#313131" stroke-width="2.6"/><line x1="179.8" y1="207.5" x2="65.1" y2="250.3" stroke="#2c2c2c" stroke-width="2.4"/><line x1="208.6" y1="220.1" x2="257.1" y2="333.7" stroke="#323232" stroke-width="3.7"/><line x1="220.2" y1="203.1" x2="334.5" y2="220.8" stroke="#333333" stroke-width="2.0"/><line x1="177.9" y1="205.6" x2="52.7" y2="237.1" stroke="#2f2f2f" stroke-width="3.6"/><line x1="185.1" y1="213.8" x2="100.8" y2="292.3" stroke="#2b2b2b" stroke-width="3.1"/><line x1="192.6" y1="181.1" x2="150.7" y2="73.9" stroke="#2b2b2b" stroke-width="3.5"/><line x1="221.5" y1="203.0" x2="343.0" y2="219.7" stroke="#303030" stroke-width="2.8"/><line x1="205.2" y1="221.4" x2="234.7" y2="342.5" stroke="#282828" stroke-width="3.6"/><line x1="196.8" y1="178.4" x2="178.7" y2="56.1" stroke="#333333" stroke-width="2.6"/><line x1="187.4" y1="216.0" x2="115.8" y2="306.4" stroke="#2c2c2c" stroke-width="2.9"/><line x1="191.1" y1="220.4" x2="140.6" y2="336.3" stroke="#282828" stroke-width="3.1"/><line x1="201.0" y1="220.9" x2="206.8" y2="339.6" stroke="#2e2e2e" stroke-width="2.7"/><line x1="184.1" y1="213.1" x2="94.2" y2="287.6" stroke="#2a2a2a" stroke-width="3.5"/><line x1="189.0" y1="182.0" x2="126.6" y2="80.1" stroke="#292929" stroke-width="2.4"/><line x1="180.5" y1="191.3" x2="69.8" y2="142.2" stroke="#2d2d2d" stroke-width="3.6"/><line x1="185.7" y1="185.1" x2="104.6" y2="100.6" stroke="#2d2d2d" stroke-width="3.4"/><line x1="213.0" y1="218.4" x2="286.6" y2="322.5" stroke="#2d2d2d" stroke-width="3.0"/><line x1="218.2" y1="186.5" x2="321.6" y2="110.3" stroke="#2b2b2b" stroke-width="3.1"/><line x1="196.7" y1="220.2" x2="178.1" y2="334.8" stroke="#313131" stroke-width="3.6"/><line x1="222.5" y1="196.9" x2="350.3" y2="179.5" stroke="#2e2e2e" stroke-width="2.2"/><line x1="181.0" y1="210.8" x2="73.6" y2="272.2" stroke="#2b2b2b" stroke-width="2.1"/><line x1="189.1" y1="182.2" x2="127.6" y2="81.4" stroke="#2f2f2f" stroke-width="2.7"/><line x1="217.2" y1="188.1" x2="314.4" y2="120.6" stroke="#313131" stroke-width="2.1"/><line x1="213.1" y1="218.2" x2="287.1" y2="321.2" stroke="#282828" stroke-width="3.0"/><line x1="212.7" y1="180.9" x2="284.5" y2="72.9" stroke="#343434" stroke-width="2.4"/><line x1="201.2" y1="222.9" x2="207.8" y2="352.4" stroke="#292929" stroke-width="3.1"/><line x1="215.1" y1="217.6" x2="301.0" y2="317.5" stroke="#333333" stroke-width="2.3"/><line x1="179.1" y1="197.1" x2="60.8" y2="180.5" stroke="#2c2c2c" stroke-width="2.3"/><line x1="212.9" y1="219.0" x2="285.8" y2="326.8" stroke="#303030" stroke-width="3.3"/><line x1="199.9" y1="177.6" x2="199.4" y2="50.5" stroke="#2d2d2d" stroke-width="3.2"/><line x1="213.3" y1="181.3" x2="288.6" y2="75.6" stroke="#2b2b2b" stroke-width="2.7"/><line x1="202.9" y1="177.4" x2="219.5" y2="49.2" stroke="#333333" stroke-width="3.4"/><line x1="209.2" y1="221.4" x2="261.1" y2="342.5" stroke="#313131" stroke-width="2.1"/><line x1="198.8" y1="178.6" x2="192.0" y2="57.4" stroke="#313131" stroke-width="3.4"/><line x1="179.6" y1="206.7" x2="64.2" y2="244.5" stroke="#313131" stroke-width="2.3"/><line x1="221.8" y1="202.8" x2="345.6" y2="218.9" stroke="#353535" stroke-width="2.1"/><line x1="177.6" y1="200.8" x2="50.6" y2="205.3" stroke="#2b2b2b" stroke-width="2.8"/><line x1="220.5" y1="207.8" x2="337.0" y2="251.7" stroke="#282828" stroke-width="3.1"/><line x1="180.1" y1="210.9" x2="67.1" y2="272.5" stroke="#2a2a2a" stroke-width="3.4"/><line x1="207.3" y1="220.5" x2="248.4" y2="336.5" stroke="#313131" stroke-width="2.0"/><line x1="189.1" y1="219.6" x2="127.1" y2="330.6" stroke="#2a2a2a" stroke-width="3.4"/><line x1="208.1" y1="220.4" x2="254.1" y2="336.3" stroke="#2b2b2b" stroke-width="2.3"/><line x1="213.0" y1="218.1" x2="286.6" y2="320.7" stroke="#333333" stroke-width="3.4"/><line x1="189.7" y1="181.7" x2="131.7" y2="78.1" stroke="#2d2d2d" stroke-width="2.3"/><line x1="190.6" y1="221.3" x2="137.5" y2="341.8" stroke="#282828" stroke-width="3.4"/><line x1="213.0" y1="180.6" x2="286.4" y2="71.0" stroke="#343434" stroke-width="2.3"/><line x1="210.7" y1="181.1" x2="271.1" y2="74.2" stroke="#353535" stroke-width="2.5"/><line x1="200.8" y1="178.6" x2="205.6" y2="57.1" stroke="#343434" stroke-width="2.5"/><line x1="200.7" y1="221.5" x2="204.6" y2="343.6" stroke="#2b2b2b" stroke-width="2.4"/><line x1="219.3" y1="186.5" x2="328.6" y2="109.9" stroke="#333333" stroke-width="2.1"/><line x1="197.9" y1="221.6" x2="186.3" y2="343.7" stroke="#323232" stroke-width="3.7"/><line x1="189.7" y1="179.7" x2="131.4" y2="64.7" stroke="#333333" stroke-width="3.5"/><line x1="183.8" y1="216.2" x2="92.3" y2="308.1" stroke="#2a2a2a" stroke-width="2.3"/><line x1="176.4" y1="200.6" x2="42.6" y2="203.7" stroke="#2c2c2c" stroke-width="2.4"/><line x1="212.7" y1="181.1" x2="285.0" y2="74.1" stroke="#2c2c2c" stroke-width="2.2"/><line x1="182.0" y1="212.9" x2="79.7" y2="285.9" stroke="#343434" stroke-width="2.2"/><line x1="180.3" y1="209.6" x2="68.6" y2="263.8" stroke="#282828" stroke-width="2.2"/><line x1="219.3" y1="190.0" x2="328.7" y2="133.4" stroke="#282828" stroke-width="2.9"/><line x1="187.9" y1="180.6" x2="119.0" y2="70.3" stroke="#2d2d2d" stroke-width="2.9"/><line x1="204.3" y1="179.1" x2="228.7" y2="60.4" stroke="#2a2a2a" stroke-width="3.4"/><line x1="216.9" y1="216.4" x2="312.6" y2="309.6" stroke="#363636" stroke-width="2.8"/><line x1="179.0" y1="195.9" x2="60.2" y2="172.6" stroke="#2e2e2e" stroke-width="2.9"/><line x1="185.8" y1="182.5" x2="105.3" y2="83.4" stroke="#343434" stroke-width="2.1"/><line x1="212.8" y1="217.5" x2="285.5" y2="316.7" stroke="#323232" stroke-width="3.7"/><line x1="221.1" y1="208.1" x2="341.0" y2="253.8" stroke="#282828" stroke-width="2.8"/><line x1="176.7" y1="194.4" x2="44.7" y2="162.9" stroke="#2a2a2a" stroke-width="3.0"/><line x1="217.8" y1="187.5" x2="318.7" y2="116.8" stroke="#2b2b2b" stroke-width="3.1"/><line x1="210.7" y1="180.9" x2="271.5" y2="72.6" stroke="#282828" stroke-width="3.0"/><line x1="188.0" y1="218.9" x2="120.1" y2="325.7" stroke="#282828" stroke-width="2.4"/><line x1="221.7" y1="206.1" x2="344.5" y2="240.9" stroke="#2d2d2d" stroke-width="3.3"/><line x1="198.4" y1="178.2" x2="189.1" y2="54.8" stroke="#2b2b2b" stroke-width="2.4"/><line x1="218.1" y1="214.3" x2="321.0" y2="295.2" stroke="#333333" stroke-width="2.3"/><line x1="186.5" y1="217.9" x2="110.1" y2="319.1" stroke="#292929" stroke-width="2.4"/><line x1="199.5" y1="222.5" x2="196.7" y2="350.2" stroke="#2a2a2a" stroke-width="2.0"/><line x1="221.2" y1="194.3" x2="341.2" y2="162.2" stroke="#363636" stroke-width="2.9"/><line x1="201.3" y1="221.9" x2="208.5" y2="345.7" stroke="#292929" stroke-width="3.5"/><line x1="178.3" y1="206.7" x2="55.7" y2="244.6" stroke="#323232" stroke-width="2.5"/><line x1="186.1" y1="183.0" x2="107.1" y2="86.5" stroke="#303030" stroke-width="2.2"/><line x1="222.8" y1="194.6" x2="351.7" y2="164.1" stroke="#323232" stroke-width="2.5"/><line x1="218.3" y1="214.0" x2="322.1" y2="293.5" stroke="#292929" stroke-width="2.4"/><line x1="215.8" y1="215.4" x2="305.5" y2="302.9" stroke="#333333" stroke-width="3.6"/><line x1="223.6" y1="197.6" x2="357.0" y2="184.0" stroke="#333333" stroke-width="2.8"/><line x1="178.8" y1="188.6" x2="58.8" y2="123.9" stroke="#2a2a2a" stroke-width="3.7"/><line x1="182.3" y1="212.3" x2="81.8" y2="282.3" stroke="#292929" stroke-width="3.5"/><line x1="183.0" y1="214.9" x2="86.7" y2="299.4" stroke="#2a2a2a" stroke-width="3.8"/><line x1="178.8" y1="192.3" x2="58.5" y2="148.7" stroke="#2d2d2d" stroke-width="3.4"/><line x1="213.8" y1="219.6" x2="292.0" y2="330.6" stroke="#303030" stroke-width="2.0"/><line x1="182.5" y1="212.9" x2="83.0" y2="286.1" stroke="#313131" stroke-width="2.1"/><line x1="177.1" y1="196.2" x2="47.1" y2="174.5" stroke="#323232" stroke-width="2.6"/><line x1="181.7" y1="216.0" x2="78.3" y2="306.6" stroke="#2c2c2c" stroke-width="2.4"/><line x1="222.0" y1="191.3" x2="346.7" y2="142.3" stroke="#2d2d2d" stroke-width="2.7"/><line x1="177.8" y1="192.8" x2="52.0" y2="151.8" stroke="#292929" stroke-width="2.3"/><line x1="207.1" y1="222.2" x2="247.7" y2="347.8" stroke="#353535" stroke-width="3.2"/><line x1="222.7" y1="201.9" x2="351.2" y2="212.7" stroke="#2e2e2e" stroke-width="3.3"/><line x1="179.6" y1="209.2" x2="63.7" y2="261.5" stroke="#303030" stroke-width="3.2"/><line x1="222.8" y1="205.9" x2="351.8" y2="239.6" stroke="#303030" stroke-width="3.4"/><line x1="207.9" y1="177.0" x2="252.4" y2="46.6" stroke="#2c2c2c" stroke-width="3.1"/><line x1="190.7" y1="180.5" x2="137.9" y2="70.0" stroke="#373737" stroke-width="2.4"/><line x1="178.1" y1="197.6" x2="54.1" y2="184.2" stroke="#282828" stroke-width="3.8"/><line x1="186.1" y1="218.1" x2="107.5" y2="320.7" stroke="#2d2d2d" stroke-width="3.2"/><line x1="221.0" y1="208.4" x2="339.8" y2="255.8" stroke="#2d2d2d" stroke-width="3.8"/><line x1="194.7" y1="221.7" x2="164.5" y2="344.5" stroke="#292929" stroke-width="3.0"/><line x1="221.3" y1="188.1" x2="342.0" y2="120.9" stroke="#323232" stroke-width="2.4"/><line x1="216.0" y1="215.3" x2="306.5" y2="301.9" stroke="#343434" stroke-width="2.2"/><line x1="206.8" y1="221.5" x2="245.2" y2="343.4" stroke="#2a2a2a" stroke-width="3.3"/><line x1="181.7" y1="212.1" x2="78.1" y2="280.5" stroke="#2c2c2c" stroke-width="3.3"/><line x1="222.1" y1="202.9" x2="347.6" y2="219.5" stroke="#363636" stroke-width="3.7"/><line x1="177.5" y1="196.6" x2="50.0" y2="177.0" stroke="#2d2d2d" stroke-width="2.1"/><line x1="184.7" y1="218.8" x2="97.9" y2="325.3" stroke="#373737" stroke-width="2.3"/><line x1="182.8" y1="183.8" x2="85.3" y2="91.9" stroke="#343434" stroke-width="3.5"/><line x1="178.7" y1="187.6" x2="58.3" y2="117.5" stroke="#353535" stroke-width="3.6"/><line x1="181.8" y1="185.9" x2="78.5" y2="106.1" stroke="#2d2d2d" stroke-width="2.4"/><line x1="180.1" y1="188.6" x2="67.1" y2="124.1" stroke="#333333" stroke-width="2.8"/><line x1="223.4" y1="196.8" x2="355.9" y2="178.5" stroke="#353535" stroke-width="3.2"/><line x1="212.5" y1="218.8" x2="283.5" y2="325.2" stroke="#303030" stroke-width="2.9"/><line x1="203.2" y1="223.6" x2="221.3" y2="357.4" stroke="#363636" stroke-width="3.4"/><line x1="221.5" y1="189.9" x2="343.4" y2="132.8" stroke="#343434" stroke-width="3.5"/><line x1="218.4" y1="188.4" x2="323.0" y2="122.6" stroke="#282828" stroke-width="3.0"/><line x1="184.6" y1="182.0" x2="97.3" y2="80.0" stroke="#2e2e2e" stroke-width="3.7"/><line x1="175.8" y1="200.8" x2="38.6" y2="205.1" stroke="#2e2e2e" stroke-width="2.9"/><line x1="222.1" y1="207.1" x2="347.2" y2="247.1" stroke="#2e2e2e" stroke-width="3.7"/><line x1="208.6" y1="221.7" x2="257.6" y2="344.9" stroke="#282828" stroke-width="3.7"/><line x1="190.8" y1="179.1" x2="139.0" y2="60.6" stroke="#282828" stroke-width="3.5"/><line x1="211.0" y1="178.5" x2="273.1" y2="56.9" stroke="#373737" stroke-width="2.5"/><line x1="205.6" y1="177.3" x2="237.2" y2="48.9" stroke="#2c2c2c" stroke-width="3.2"/><line x1="203.3" y1="177.4" x2="221.9" y2="49.4" stroke="#343434" stroke-width="3.0"/><line x1="219.7" y1="211.8" x2="331.5" y2="278.6" stroke="#292929" stroke-width="3.7"/><line x1="223.4" y1="203.5" x2="355.9" y2="223.1" stroke="#303030" stroke-width="2.4"/><line x1="187.8" y1="179.0" x2="118.7" y2="60.3" stroke="#373737" stroke-width="2.3"/><line x1="190.1" y1="180.0" x2="134.2" y2="67.0" stroke="#353535" stroke-width="2.7"/><line x1="223.6" y1="197.2" x2="357.3" y2="181.0" stroke="#383838" stroke-width="3.4"/><line x1="182.3" y1="184.8" x2="81.7" y2="98.9" stroke="#313131" stroke-width="3.2"/><line x1="215.9" y1="184.7" x2="305.9" y2="98.1" stroke="#2f2f2f" stroke-width="3.2"/><line x1="197.0" y1="178.1" x2="179.9" y2="53.7" stroke="#383838" stroke-width="2.6"/><line x1="177.9" y1="197.8" x2="52.5" y2="185.5" stroke="#343434" stroke-width="3.5"/><line x1="223.3" y1="193.1" x2="355.6" y2="153.7" stroke="#373737" stroke-width="2.0"/><line x1="222.9" y1="190.5" x2="352.3" y2="136.4" stroke="#393939" stroke-width="2.7"/><line x1="198.5" y1="224.1" x2="189.9" y2="360.8" stroke="#383838" stroke-width="2.2"/><line x1="177.2" y1="195.2" x2="48.0" y2="167.7" stroke="#393939" stroke-width="3.3"/><line x1="179.4" y1="213.3" x2="62.7" y2="288.4" stroke="#333333" stroke-width="3.5"/><line x1="190.7" y1="220.5" x2="138.0" y2="336.6" stroke="#343434" stroke-width="2.7"/><line x1="192.5" y1="223.1" x2="150.3" y2="353.7" stroke="#343434" stroke-width="2.4"/><line x1="213.2" y1="179.2" x2="288.1" y2="61.1" stroke="#303030" stroke-width="3.2"/><line x1="179.6" y1="187.8" x2="63.8" y2="118.8" stroke="#343434" stroke-width="2.8"/><line x1="203.7" y1="224.5" x2="224.5" y2="363.0" stroke="#2d2d2d" stroke-width="2.7"/><line x1="179.1" y1="193.0" x2="60.7" y2="153.3" stroke="#363636" stroke-width="2.4"/><line x1="202.0" y1="223.3" x2="213.1" y2="355.2" stroke="#383838" stroke-width="3.2"/><line x1="178.7" y1="187.7" x2="58.1" y2="118.1" stroke="#2f2f2f" stroke-width="3.7"/><line x1="184.5" y1="181.2" x2="96.9" y2="74.6" stroke="#383838" stroke-width="3.6"/><line x1="217.0" y1="185.0" x2="313.3" y2="100.3" stroke="#2b2b2b" stroke-width="2.5"/><line x1="196.8" y1="177.0" x2="178.9" y2="46.7" stroke="#343434" stroke-width="2.2"/><line x1="218.4" y1="212.0" x2="322.5" y2="280.3" stroke="#2e2e2e" stroke-width="3.3"/><line x1="215.5" y1="219.2" x2="303.3" y2="327.7" stroke="#333333" stroke-width="2.1"/><line x1="187.3" y1="219.0" x2="115.5" y2="326.7" stroke="#353535" stroke-width="3.8"/><line x1="216.4" y1="218.5" x2="309.2" y2="323.5" stroke="#2c2c2c" stroke-width="2.3"/><line x1="202.2" y1="222.6" x2="214.5" y2="350.7" stroke="#3a3a3a" stroke-width="3.3"/><line x1="181.0" y1="211.6" x2="73.4" y2="277.7" stroke="#343434" stroke-width="2.4"/><line x1="213.3" y1="220.5" x2="288.8" y2="336.7" stroke="#2f2f2f" stroke-width="3.6"/><line x1="186.4" y1="179.9" x2="109.4" y2="66.1" stroke="#2e2e2e" stroke-width="3.8"/><line x1="175.3" y1="198.2" x2="35.4" y2="187.9" stroke="#313131" stroke-width="3.8"/><line x1="210.5" y1="221.9" x2="270.3" y2="345.9" stroke="#2e2e2e" stroke-width="3.4"/><line x1="210.4" y1="220.1" x2="269.6" y2="334.1" stroke="#303030" stroke-width="2.2"/><line x1="175.7" y1="200.4" x2="38.2" y2="202.7" stroke="#393939" stroke-width="3.4"/><line x1="184.7" y1="216.8" x2="98.3" y2="312.1" stroke="#2c2c2c" stroke-width="2.6"/><line x1="219.1" y1="211.5" x2="327.5" y2="276.4" stroke="#2e2e2e" stroke-width="2.5"/><line x1="185.5" y1="182.6" x2="103.6" y2="84.2" stroke="#2c2c2c" stroke-width="3.6"/><line x1="222.0" y1="192.1" x2="346.6" y2="147.0" stroke="#2b2b2b" stroke-width="3.1"/><line x1="223.2" y1="205.8" x2="354.9" y2="239.0" stroke="#363636" stroke-width="3.0"/><line x1="175.7" y1="201.3" x2="38.0" y2="208.7" stroke="#2b2b2b" stroke-width="2.9"/><line x1="189.8" y1="222.4" x2="131.8" y2="349.5" stroke="#2a2a2a" stroke-width="3.8"/><line x1="175.6" y1="198.2" x2="37.6" y2="187.9" stroke="#353535" stroke-width="3.3"/><line x1="220.3" y1="190.2" x2="335.2" y2="134.4" stroke="#373737" stroke-width="3.3"/><line x1="223.6" y1="195.4" x2="357.2" y2="169.5" stroke="#2d2d2d" stroke-width="3.4"/><line x1="182.7" y1="215.7" x2="84.5" y2="305.0" stroke="#353535" stroke-width="3.4"/><line x1="177.5" y1="200.1" x2="50.2" y2="200.4" stroke="#2d2d2d" stroke-width="3.0"/><line x1="221.3" y1="188.3" x2="342.0" y2="122.3" stroke="#323232" stroke-width="3.8"/><line x1="184.9" y1="182.6" x2="99.3" y2="84.2" stroke="#373737" stroke-width="2.8"/><line x1="193.5" y1="221.2" x2="157.0" y2="341.6" stroke="#2e2e2e" stroke-width="2.4"/><line x1="219.8" y1="185.3" x2="331.9" y2="102.1" stroke="#363636" stroke-width="3.5"/><line x1="182.1" y1="216.9" x2="80.9" y2="312.8" stroke="#2c2c2c" stroke-width="2.8"/><line x1="176.9" y1="195.3" x2="46.2" y2="168.8" stroke="#282828" stroke-width="2.8"/><line x1="182.7" y1="183.8" x2="84.5" y2="91.7" stroke="#383838" stroke-width="2.1"/><line x1="207.1" y1="222.4" x2="247.5" y2="349.2" stroke="#282828" stroke-width="2.5"/><line x1="214.2" y1="180.9" x2="294.4" y2="72.3" stroke="#282828" stroke-width="2.7"/><line x1="196.8" y1="223.3" x2="178.7" y2="355.1" stroke="#3b3b3b" stroke-width="3.2"/><line x1="213.9" y1="218.1" x2="292.6" y2="320.8" stroke="#323232" stroke-width="3.7"/><line x1="209.5" y1="221.4" x2="263.2" y2="342.7" stroke="#303030" stroke-width="3.8"/><line x1="222.5" y1="198.4" x2="350.0" y2="189.2" stroke="#383838" stroke-width="2.3"/><line x1="184.9" y1="216.8" x2="99.1" y2="311.7" stroke="#303030" stroke-width="2.4"/><line x1="223.1" y1="206.0" x2="353.9" y2="240.3" stroke="#292929" stroke-width="3.3"/><line x1="175.5" y1="202.4" x2="36.5" y2="215.8" stroke="#282828" stroke-width="3.3"/><line x1="208.5" y1="221.5" x2="256.8" y2="343.1" stroke="#3b3b3b" stroke-width="3.6"/><line x1="220.1" y1="190.2" x2="334.2" y2="134.9" stroke="#373737" stroke-width="2.1"/><line x1="184.3" y1="181.2" x2="95.6" y2="75.0" stroke="#323232" stroke-width="2.7"/><line x1="222.9" y1="209.8" x2="352.6" y2="265.2" stroke="#383838" stroke-width="3.7"/><line x1="217.7" y1="186.3" x2="318.2" y2="108.9" stroke="#2c2c2c" stroke-width="3.2"/><line x1="219.6" y1="213.7" x2="330.5" y2="291.4" stroke="#2a2a2a" stroke-width="3.0"/><line x1="177.2" y1="205.1" x2="48.1" y2="234.3" stroke="#2a2a2a" stroke-width="3.6"/><line x1="176.1" y1="197.4" x2="40.9" y2="182.7" stroke="#303030" stroke-width="2.6"/><line x1="198.3" y1="175.9" x2="188.6" y2="39.3" stroke="#373737" stroke-width="2.9"/><line x1="176.9" y1="202.3" x2="46.0" y2="215.5" stroke="#3a3a3a" stroke-width="3.2"/><line x1="219.1" y1="214.0" x2="327.0" y2="293.6" stroke="#333333" stroke-width="3.3"/><line x1="177.7" y1="206.4" x2="51.4" y2="242.5" stroke="#343434" stroke-width="3.2"/><line x1="188.1" y1="178.5" x2="120.4" y2="56.4" stroke="#2a2a2a" stroke-width="2.6"/><line x1="184.3" y1="218.3" x2="95.5" y2="321.9" stroke="#333333" stroke-width="3.4"/><line x1="178.7" y1="206.5" x2="58.2" y2="243.3" stroke="#303030" stroke-width="3.8"/><line x1="175.6" y1="199.3" x2="37.2" y2="195.5" stroke="#383838" stroke-width="3.5"/><line x1="202.9" y1="177.6" x2="219.4" y2="50.6" stroke="#313131" stroke-width="2.8"/><line x1="180.4" y1="215.1" x2="69.3" y2="300.5" stroke="#383838" stroke-width="2.6"/><line x1="194.2" y1="222.2" x2="161.2" y2="348.3" stroke="#373737" stroke-width="2.9"/><line x1="221.3" y1="190.6" x2="341.7" y2="137.2" stroke="#3a3a3a" stroke-width="3.5"/><line x1="209.1" y1="221.4" x2="260.8" y2="342.6" stroke="#3b3b3b" stroke-width="2.4"/><line x1="204.7" y1="223.9" x2="231.5" y2="359.1" stroke="#303030" stroke-width="2.4"/><line x1="222.5" y1="200.0" x2="349.9" y2="200.3" stroke="#3b3b3b" stroke-width="2.8"/><line x1="208.8" y1="179.1" x2="258.6" y2="60.7" stroke="#2b2b2b" stroke-width="3.5"/><line x1="194.3" y1="223.1" x2="162.1" y2="354.2" stroke="#2d2d2d" stroke-width="3.4"/><line x1="178.8" y1="190.8" x2="58.4" y2="138.9" stroke="#2a2a2a" stroke-width="2.3"/><line x1="178.6" y1="194.9" x2="57.2" y2="165.9" stroke="#3c3c3c" stroke-width="2.4"/><line x1="200.7" y1="175.8" x2="204.5" y2="39.0" stroke="#353535" stroke-width="2.6"/><line x1="219.3" y1="214.9" x2="328.5" y2="299.5" stroke="#2e2e2e" stroke-width="3.1"/><line x1="213.3" y1="217.9" x2="288.7" y2="319.5" stroke="#2a2a2a" stroke-width="2.5"/><line x1="220.7" y1="209.9" x2="337.7" y2="265.9" stroke="#353535" stroke-width="3.6"/><line x1="217.2" y1="215.7" x2="314.9" y2="304.7" stroke="#2b2b2b" stroke-width="3.0"/><line x1="216.9" y1="183.2" x2="312.6" y2="88.0" stroke="#3b3b3b" stroke-width="2.4"/><line x1="202.3" y1="223.3" x2="215.6" y2="355.2" stroke="#343434" stroke-width="3.2"/><line x1="191.0" y1="177.4" x2="139.9" y2="49.5" stroke="#3c3c3c" stroke-width="2.0"/><line x1="180.0" y1="187.6" x2="66.6" y2="117.1" stroke="#363636" stroke-width="3.1"/><line x1="214.3" y1="183.3" x2="295.3" y2="88.9" stroke="#3a3a3a" stroke-width="2.8"/><line x1="219.0" y1="211.8" x2="326.5" y2="278.6" stroke="#2d2d2d" stroke-width="3.6"/><line x1="177.2" y1="192.8" x2="47.9" y2="151.8" stroke="#3d3d3d" stroke-width="3.6"/><line x1="221.7" y1="207.0" x2="344.6" y2="246.7" stroke="#282828" stroke-width="2.3"/><line x1="214.9" y1="216.1" x2="299.5" y2="307.3" stroke="#3d3d3d" stroke-width="3.2"/><line x1="218.1" y1="183.8" x2="320.4" y2="91.7" stroke="#3a3a3a" stroke-width="2.5"/><line x1="194.7" y1="176.5" x2="164.6" y2="43.3" stroke="#2a2a2a" stroke-width="3.8"/><line x1="205.6" y1="177.0" x2="237.2" y2="47.0" stroke="#323232" stroke-width="2.1"/><line x1="215.0" y1="219.3" x2="300.0" y2="328.5" stroke="#2d2d2d" stroke-width="2.7"/><line x1="206.6" y1="178.5" x2="243.9" y2="56.8" stroke="#383838" stroke-width="3.7"/><line x1="210.5" y1="179.9" x2="270.3" y2="65.7" stroke="#3a3a3a" stroke-width="2.7"/><line x1="179.6" y1="208.0" x2="63.9" y2="253.4" stroke="#2f2f2f" stroke-width="3.1"/><line x1="197.9" y1="222.5" x2="186.3" y2="349.7" stroke="#2b2b2b" stroke-width="2.9"/><line x1="177.0" y1="198.4" x2="46.4" y2="189.4" stroke="#292929" stroke-width="2.5"/><line x1="221.6" y1="207.2" x2="344.1" y2="248.0" stroke="#333333" stroke-width="2.7"/><line x1="185.8" y1="216.6" x2="105.1" y2="310.9" stroke="#373737" stroke-width="3.2"/><line x1="177.3" y1="201.2" x2="48.9" y2="208.2" stroke="#3d3d3d" stroke-width="2.5"/><line x1="183.6" y1="183.0" x2="90.3" y2="86.5" stroke="#373737" stroke-width="2.9"/><line x1="214.7" y1="218.6" x2="297.8" y2="324.0" stroke="#393939" stroke-width="2.8"/><line x1="213.9" y1="220.2" x2="292.7" y2="334.5" stroke="#2f2f2f" stroke-width="3.5"/><line x1="194.7" y1="178.4" x2="164.7" y2="56.0" stroke="#2d2d2d" stroke-width="2.2"/><line x1="203.7" y1="224.4" x2="224.7" y2="362.4" stroke="#2f2f2f" stroke-width="3.1"/><line x1="187.7" y1="179.1" x2="117.9" y2="60.5" stroke="#303030" stroke-width="2.8"/><line x1="187.9" y1="220.9" x2="119.1" y2="339.6" stroke="#343434" stroke-width="3.4"/><line x1="177.6" y1="198.9" x2="50.6" y2="192.5" stroke="#2d2d2d" stroke-width="2.0"/><line x1="189.9" y1="220.2" x2="132.8" y2="334.9" stroke="#393939" stroke-width="2.5"/><line x1="214.5" y1="217.1" x2="296.4" y2="313.9" stroke="#353535" stroke-width="2.2"/><line x1="192.8" y1="221.1" x2="152.0" y2="340.6" stroke="#292929" stroke-width="2.5"/><line x1="213.4" y1="220.2" x2="289.6" y2="335.0" stroke="#3b3b3b" stroke-width="2.5"/><line x1="220.9" y1="207.9" x2="339.0" y2="252.8" stroke="#383838" stroke-width="2.5"/><line x1="214.4" y1="217.0" x2="296.2" y2="313.4" stroke="#393939" stroke-width="3.3"/><line x1="179.1" y1="211.9" x2="60.5" y2="279.1" stroke="#3b3b3b" stroke-width="3.1"/><line x1="176.0" y1="196.2" x2="40.0" y2="174.5" stroke="#383838" stroke-width="2.5"/><line x1="176.5" y1="196.6" x2="43.1" y2="177.3" stroke="#2a2a2a" stroke-width="3.6"/><line x1="182.7" y1="214.7" x2="84.3" y2="298.3" stroke="#282828" stroke-width="3.0"/><line x1="180.8" y1="213.3" x2="71.7" y2="288.8" stroke="#2e2e2e" stroke-width="3.5"/><line x1="216.6" y1="185.0" x2="310.4" y2="100.0" stroke="#3c3c3c" stroke-width="2.6"/><line x1="183.0" y1="214.5" x2="86.4" y2="296.3" stroke="#363636" stroke-width="2.0"/><line x1="206.5" y1="220.9" x2="243.1" y2="339.4" stroke="#393939" stroke-width="2.7"/><line x1="184.0" y1="217.9" x2="93.6" y2="319.6" stroke="#2c2c2c" stroke-width="3.7"/><line x1="218.5" y1="185.2" x2="323.3" y2="101.6" stroke="#383838" stroke-width="2.4"/><line x1="222.6" y1="201.7" x2="350.9" y2="211.3" stroke="#3c3c3c" stroke-width="2.4"/><line x1="189.1" y1="180.6" x2="127.0" y2="70.9" stroke="#333333" stroke-width="3.0"/><line x1="209.8" y1="177.8" x2="265.1" y2="52.1" stroke="#282828" stroke-width="3.5"/><line x1="180.7" y1="189.9" x2="71.2" y2="132.6" stroke="#313131" stroke-width="3.3"/><line x1="203.6" y1="223.9" x2="223.9" y2="359.3" stroke="#3f3f3f" stroke-width="3.4"/><line x1="221.3" y1="206.0" x2="342.1" y2="240.0" stroke="#303030" stroke-width="2.8"/><line x1="201.1" y1="178.1" x2="207.3" y2="53.9" stroke="#2f2f2f" stroke-width="2.5"/><line x1="222.2" y1="193.7" x2="348.1" y2="158.1" stroke="#2e2e2e" stroke-width="2.8"/><line x1="185.6" y1="219.6" x2="103.7" y2="330.6" stroke="#383838" stroke-width="2.9"/><line x1="183.8" y1="184.8" x2="92.0" y2="98.6" stroke="#303030" stroke-width="2.3"/><line x1="187.0" y1="219.1" x2="113.6" y2="327.3" stroke="#282828" stroke-width="2.1"/><line x1="214.1" y1="180.5" x2="294.0" y2="70.0" stroke="#363636" stroke-width="2.4"/><line x1="198.7" y1="222.3" x2="191.5" y2="348.6" stroke="#323232" stroke-width="2.9"/><line x1="218.2" y1="187.5" x2="321.5" y2="116.5" stroke="#363636" stroke-width="3.3"/><line x1="190.1" y1="178.0" x2="133.9" y2="53.3" stroke="#303030" stroke-width="3.8"/><line x1="217.8" y1="186.0" x2="318.4" y2="106.9" stroke="#343434" stroke-width="3.7"/><line x1="219.9" y1="210.3" x2="332.7" y2="268.5" stroke="#2d2d2d" stroke-width="3.6"/><line x1="182.7" y1="184.4" x2="84.9" y2="96.3" stroke="#393939" stroke-width="3.1"/><line x1="196.6" y1="221.4" x2="177.4" y2="342.4" stroke="#363636" stroke-width="3.5"/><line x1="196.4" y1="177.9" x2="175.9" y2="52.9" stroke="#2a2a2a" stroke-width="2.3"/><line x1="186.5" y1="183.1" x2="110.1" y2="87.4" stroke="#2b2b2b" stroke-width="2.5"/><line x1="217.9" y1="213.9" x2="319.5" y2="292.6" stroke="#373737" stroke-width="2.5"/><line x1="193.3" y1="220.5" x2="155.6" y2="336.7" stroke="#3a3a3a" stroke-width="3.4"/><line x1="200.1" y1="221.5" x2="200.6" y2="343.2" stroke="#3f3f3f" stroke-width="3.5"/><line x1="215.9" y1="183.5" x2="306.2" y2="89.9" stroke="#3e3e3e" stroke-width="3.6"/><line x1="205.0" y1="223.2" x2="233.2" y2="354.6" stroke="#2d2d2d" stroke-width="3.8"/><line x1="180.4" y1="212.5" x2="69.4" y2="283.7" stroke="#3f3f3f" stroke-width="2.3"/><line x1="187.4" y1="220.2" x2="116.3" y2="334.4" stroke="#313131" stroke-width="2.9"/><line x1="179.5" y1="206.3" x2="63.4" y2="241.8" stroke="#393939" stroke-width="2.8"/><line x1="213.7" y1="217.1" x2="291.1" y2="314.1" stroke="#292929" stroke-width="3.3"/><line x1="209.9" y1="178.9" x2="265.8" y2="59.5" stroke="#3e3e3e" stroke-width="3.7"/><line x1="178.8" y1="206.6" x2="58.4" y2="243.7" stroke="#3c3c3c" stroke-width="2.9"/><line x1="194.3" y1="178.2" x2="161.9" y2="54.4" stroke="#3f3f3f" stroke-width="2.5"/><line x1="209.0" y1="219.6" x2="259.9" y2="330.9" stroke="#3e3e3e" stroke-width="3.3"/><line x1="178.9" y1="194.1" x2="59.4" y2="161.0" stroke="#373737" stroke-width="2.5"/><line x1="196.4" y1="177.4" x2="175.7" y2="49.2" stroke="#323232" stroke-width="2.9"/><line x1="198.1" y1="222.2" x2="187.2" y2="347.8" stroke="#2c2c2c" stroke-width="3.1"/><line x1="195.0" y1="220.9" x2="166.6" y2="339.5" stroke="#2a2a2a" stroke-width="3.4"/><line x1="179.0" y1="204.9" x2="59.7" y2="233.0" stroke="#373737" stroke-width="2.7"/><line x1="185.3" y1="183.4" x2="101.7" y2="89.0" stroke="#2f2f2f" stroke-width="3.4"/><line x1="208.6" y1="177.9" x2="257.5" y2="52.8" stroke="#3e3e3e" stroke-width="2.1"/><line x1="201.3" y1="221.9" x2="208.3" y2="346.0" stroke="#323232" stroke-width="3.0"/><line x1="219.9" y1="192.6" x2="332.9" y2="150.5" stroke="#2d2d2d" stroke-width="2.9"/><line x1="206.8" y1="179.7" x2="245.5" y2="64.6" stroke="#3d3d3d" stroke-width="2.1"/><line x1="204.5" y1="179.2" x2="230.3" y2="61.2" stroke="#3a3a3a" stroke-width="3.6"/><line x1="181.7" y1="212.5" x2="78.0" y2="283.3" stroke="#292929" stroke-width="2.2"/><line x1="193.2" y1="179.6" x2="154.5" y2="64.2" stroke="#292929" stroke-width="2.9"/><line x1="207.2" y1="221.8" x2="248.1" y2="345.1" stroke="#3d3d3d" stroke-width="3.4"/><line x1="179.0" y1="194.0" x2="59.8" y2="160.3" stroke="#292929" stroke-width="2.6"/><line x1="222.1" y1="199.7" x2="347.2" y2="197.8" stroke="#3b3b3b" stroke-width="2.4"/><line x1="184.2" y1="216.3" x2="94.8" y2="308.7" stroke="#292929" stroke-width="2.1"/><line x1="222.7" y1="197.7" x2="351.1" y2="184.8" stroke="#383838" stroke-width="2.6"/><line x1="191.7" y1="178.7" x2="145.0" y2="57.9" stroke="#3f3f3f" stroke-width="2.4"/><line x1="218.0" y1="188.5" x2="320.2" y2="123.5" stroke="#373737" stroke-width="2.7"/><line x1="195.5" y1="222.8" x2="170.1" y2="352.1" stroke="#2f2f2f" stroke-width="3.0"/><line x1="197.7" y1="222.9" x2="184.8" y2="352.7" stroke="#2f2f2f" stroke-width="3.0"/><line x1="219.4" y1="191.4" x2="329.6" y2="142.8" stroke="#363636" stroke-width="2.1"/><line x1="195.2" y1="220.7" x2="168.1" y2="337.7" stroke="#3f3f3f" stroke-width="2.2"/><line x1="183.5" y1="183.0" x2="90.3" y2="86.4" stroke="#383838" stroke-width="2.5"/><line x1="222.4" y1="195.3" x2="349.1" y2="168.9" stroke="#393939" stroke-width="3.4"/><line x1="184.7" y1="183.8" x2="98.3" y2="92.1" stroke="#313131" stroke-width="3.4"/><line x1="180.8" y1="213.6" x2="72.3" y2="290.5" stroke="#292929" stroke-width="3.0"/><line x1="177.8" y1="208.2" x2="51.9" y2="254.6" stroke="#3a3a3a" stroke-width="2.4"/><line x1="179.1" y1="193.4" x2="60.7" y2="155.7" stroke="#414141" stroke-width="2.0"/><line x1="215.5" y1="185.2" x2="303.1" y2="101.6" stroke="#3a3a3a" stroke-width="3.3"/><line x1="177.1" y1="194.4" x2="47.1" y2="162.4" stroke="#323232" stroke-width="3.6"/><line x1="180.4" y1="190.9" x2="69.7" y2="139.0" stroke="#292929" stroke-width="2.0"/><line x1="179.1" y1="198.1" x2="60.5" y2="187.1" stroke="#343434" stroke-width="3.3"/><line x1="203.9" y1="178.3" x2="225.8" y2="55.5" stroke="#343434" stroke-width="3.8"/><line x1="184.2" y1="217.0" x2="94.9" y2="313.5" stroke="#3c3c3c" stroke-width="3.0"/><line x1="181.3" y1="186.8" x2="75.6" y2="112.2" stroke="#2f2f2f" stroke-width="2.1"/><line x1="180.2" y1="188.1" x2="68.1" y2="120.5" stroke="#3f3f3f" stroke-width="3.7"/><line x1="193.2" y1="179.5" x2="155.0" y2="63.6" stroke="#3e3e3e" stroke-width="2.6"/><line x1="221.0" y1="209.2" x2="339.8" y2="261.6" stroke="#2e2e2e" stroke-width="2.1"/><line x1="202.2" y1="179.0" x2="214.9" y2="59.8" stroke="#2d2d2d" stroke-width="2.4"/><line x1="211.1" y1="181.6" x2="273.9" y2="77.6" stroke="#282828" stroke-width="2.8"/><line x1="216.7" y1="215.9" x2="311.5" y2="306.3" stroke="#2f2f2f" stroke-width="3.0"/><line x1="184.2" y1="215.1" x2="94.8" y2="300.5" stroke="#303030" stroke-width="2.3"/><line x1="220.1" y1="193.3" x2="333.9" y2="155.3" stroke="#323232" stroke-width="2.4"/><line x1="220.0" y1="210.3" x2="333.1" y2="268.8" stroke="#333333" stroke-width="3.7"/><line x1="218.0" y1="185.8" x2="320.0" y2="105.6" stroke="#3e3e3e" stroke-width="2.4"/><line x1="203.8" y1="221.3" x2="225.3" y2="341.7" stroke="#343434" stroke-width="3.3"/><line x1="201.6" y1="221.3" x2="210.8" y2="342.0" stroke="#353535" stroke-width="2.8"/><line x1="200.4" y1="178.6" x2="202.4" y2="57.1" stroke="#313131" stroke-width="3.7"/><line x1="206.3" y1="180.3" x2="242.3" y2="68.7" stroke="#343434" stroke-width="3.2"/><line x1="199.4" y1="179.0" x2="196.1" y2="59.9" stroke="#3e3e3e" stroke-width="3.7"/><line x1="195.2" y1="179.2" x2="167.9" y2="61.6" stroke="#393939" stroke-width="3.2"/><line x1="194.1" y1="220.4" x2="160.7" y2="335.7" stroke="#3e3e3e" stroke-width="2.3"/><line x1="211.5" y1="218.3" x2="276.5" y2="322.1" stroke="#424242" stroke-width="3.4"/><line x1="218.3" y1="187.9" x2="322.2" y2="119.4" stroke="#313131" stroke-width="3.8"/><line x1="220.2" y1="210.1" x2="335.0" y2="267.1" stroke="#383838" stroke-width="2.8"/><line x1="222.5" y1="201.8" x2="349.8" y2="211.9" stroke="#2d2d2d" stroke-width="2.1"/><line x1="180.6" y1="211.9" x2="70.4" y2="279.1" stroke="#2b2b2b" stroke-width="2.6"/><line x1="212.5" y1="217.5" x2="283.3" y2="316.6" stroke="#2b2b2b" stroke-width="2.4"/><line x1="205.2" y1="221.7" x2="234.8" y2="344.8" stroke="#343434" stroke-width="3.4"/><line x1="194.7" y1="178.8" x2="164.7" y2="58.8" stroke="#292929" stroke-width="3.2"/><line x1="221.0" y1="191.9" x2="339.8" y2="146.2" stroke="#393939" stroke-width="3.4"/><line x1="218.1" y1="211.5" x2="320.4" y2="276.7" stroke="#414141" stroke-width="3.3"/><line x1="213.4" y1="218.0" x2="289.5" y2="319.9" stroke="#353535" stroke-width="2.2"/><line x1="211.6" y1="217.0" x2="277.2" y2="313.4" stroke="#3b3b3b" stroke-width="2.1"/><line x1="221.2" y1="197.7" x2="341.3" y2="184.3" stroke="#3e3e3e" stroke-width="3.3"/><line x1="202.9" y1="222.2" x2="219.4" y2="348.1" stroke="#2c2c2c" stroke-width="2.5"/><line x1="221.1" y1="205.1" x2="340.8" y2="234.2" stroke="#2e2e2e" stroke-width="2.8"/><line x1="220.2" y1="195.8" x2="334.5" y2="172.1" stroke="#2d2d2d" stroke-width="2.5"/><line x1="199.3" y1="220.9" x2="195.0" y2="339.6" stroke="#323232" stroke-width="2.9"/><line x1="183.3" y1="214.7" x2="88.6" y2="297.9" stroke="#2e2e2e" stroke-width="3.4"/><line x1="178.1" y1="195.7" x2="54.0" y2="171.4" stroke="#343434" stroke-width="3.6"/><line x1="188.3" y1="180.2" x2="122.3" y2="68.2" stroke="#353535" stroke-width="3.5"/><line x1="179.5" y1="206.7" x2="63.5" y2="245.0" stroke="#3e3e3e" stroke-width="3.4"/><line x1="212.5" y1="181.7" x2="283.4" y2="77.9" stroke="#2f2f2f" stroke-width="3.0"/><line x1="182.3" y1="211.3" x2="81.8" y2="275.2" stroke="#303030" stroke-width="3.7"/><line x1="198.3" y1="179.7" x2="188.7" y2="64.5" stroke="#383838" stroke-width="2.7"/><line x1="213.4" y1="183.3" x2="289.2" y2="88.7" stroke="#3c3c3c" stroke-width="3.0"/><line x1="213.2" y1="182.4" x2="288.0" y2="82.7" stroke="#393939" stroke-width="2.8"/><line x1="207.1" y1="180.4" x2="247.6" y2="69.7" stroke="#373737" stroke-width="3.7"/><line x1="211.4" y1="182.9" x2="275.9" y2="86.2" stroke="#2c2c2c" stroke-width="2.4"/><line x1="202.6" y1="222.4" x2="217.5" y2="349.0" stroke="#353535" stroke-width="2.0"/><line x1="181.0" y1="207.9" x2="73.5" y2="252.7" stroke="#353535" stroke-width="2.0"/><line x1="187.7" y1="183.6" x2="118.1" y2="90.9" stroke="#434343" stroke-width="3.4"/><line x1="218.5" y1="191.2" x2="323.6" y2="141.6" stroke="#303030" stroke-width="2.6"/><line x1="179.2" y1="205.2" x2="61.5" y2="234.7" stroke="#393939" stroke-width="2.8"/><line x1="182.8" y1="213.8" x2="85.6" y2="292.3" stroke="#3e3e3e" stroke-width="3.2"/><line x1="207.0" y1="179.6" x2="246.5" y2="64.2" stroke="#343434" stroke-width="3.7"/><line x1="219.1" y1="207.8" x2="327.0" y2="252.3" stroke="#393939" stroke-width="3.8"/><line x1="184.9" y1="215.6" x2="99.4" y2="304.0" stroke="#313131" stroke-width="2.1"/><line x1="219.4" y1="205.0" x2="329.2" y2="233.6" stroke="#2c2c2c" stroke-width="2.4"/><line x1="185.9" y1="185.0" x2="105.9" y2="100.3" stroke="#343434" stroke-width="2.8"/><line x1="187.7" y1="216.1" x2="117.8" y2="307.6" stroke="#2f2f2f" stroke-width="2.2"/><line x1="215.1" y1="185.6" x2="300.9" y2="104.1" stroke="#313131" stroke-width="3.8"/><line x1="221.2" y1="204.1" x2="341.6" y2="227.6" stroke="#404040" stroke-width="2.8"/><line x1="219.3" y1="205.6" x2="328.9" y2="237.6" stroke="#363636" stroke-width="2.9"/><line x1="221.1" y1="197.4" x2="341.0" y2="182.4" stroke="#2b2b2b" stroke-width="2.9"/><line x1="181.9" y1="208.6" x2="79.2" y2="257.5" stroke="#373737" stroke-width="3.5"/><line x1="183.3" y1="212.2" x2="89.0" y2="281.4" stroke="#343434" stroke-width="3.8"/><line x1="203.7" y1="220.3" x2="224.6" y2="335.2" stroke="#414141" stroke-width="2.9"/><line x1="201.1" y1="221.7" x2="207.0" y2="344.6" stroke="#2d2d2d" stroke-width="2.1"/><line x1="220.7" y1="206.6" x2="337.7" y2="244.3" stroke="#343434" stroke-width="3.4"/><line x1="217.6" y1="213.1" x2="317.0" y2="287.4" stroke="#333333" stroke-width="2.3"/><line x1="220.5" y1="207.5" x2="337.0" y2="249.7" stroke="#313131" stroke-width="3.5"/><line x1="220.5" y1="205.8" x2="336.8" y2="238.4" stroke="#2a2a2a" stroke-width="3.0"/><line x1="196.0" y1="220.0" x2="173.5" y2="333.2" stroke="#303030" stroke-width="2.9"/><line x1="221.2" y1="204.2" x2="341.1" y2="227.7" stroke="#2e2e2e" stroke-width="2.5"/><line x1="180.8" y1="192.9" x2="71.8" y2="152.5" stroke="#373737" stroke-width="3.0"/><line x1="208.1" y1="219.3" x2="253.9" y2="328.6" stroke="#363636" stroke-width="3.2"/><line x1="183.9" y1="214.4" x2="92.5" y2="295.8" stroke="#404040" stroke-width="2.2"/><line x1="218.8" y1="193.8" x2="325.3" y2="158.7" stroke="#323232" stroke-width="3.5"/><line x1="179.6" y1="197.9" x2="63.8" y2="186.1" stroke="#2d2d2d" stroke-width="3.3"/><line x1="180.2" y1="199.4" x2="67.7" y2="195.9" stroke="#444444" stroke-width="2.6"/><line x1="179.1" y1="198.8" x2="60.5" y2="192.2" stroke="#323232" stroke-width="3.0"/><line x1="203.0" y1="220.4" x2="220.0" y2="336.1" stroke="#323232" stroke-width="2.1"/><line x1="217.1" y1="188.9" x2="313.8" y2="125.7" stroke="#393939" stroke-width="3.3"/><line x1="193.1" y1="219.5" x2="153.8" y2="329.9" stroke="#282828" stroke-width="2.1"/><line x1="221.1" y1="203.2" x2="340.4" y2="221.4" stroke="#404040" stroke-width="2.8"/><line x1="179.4" y1="204.6" x2="62.8" y2="230.4" stroke="#353535" stroke-width="2.4"/><line x1="212.4" y1="183.7" x2="282.5" y2="91.5" stroke="#393939" stroke-width="3.8"/><line x1="209.4" y1="182.5" x2="262.8" y2="83.6" stroke="#2a2a2a" stroke-width="3.7"/><line x1="220.3" y1="193.2" x2="335.6" y2="154.3" stroke="#3d3d3d" stroke-width="3.3"/><line x1="201.6" y1="219.7" x2="210.7" y2="331.2" stroke="#373737" stroke-width="2.3"/><line x1="195.1" y1="179.7" x2="167.1" y2="64.7" stroke="#303030" stroke-width="3.5"/><line x1="216.2" y1="186.8" x2="307.9" y2="112.0" stroke="#3e3e3e" stroke-width="2.1"/><line x1="208.7" y1="182.3" x2="258.1" y2="82.0" stroke="#313131" stroke-width="2.9"/><line x1="200.2" y1="219.6" x2="201.2" y2="330.8" stroke="#282828" stroke-width="3.2"/><line x1="207.5" y1="181.9" x2="250.3" y2="79.6" stroke="#3b3b3b" stroke-width="2.7"/><line x1="185.3" y1="213.9" x2="102.1" y2="292.7" stroke="#373737" stroke-width="3.6"/><line x1="220.1" y1="203.3" x2="334.0" y2="221.7" stroke="#363636" stroke-width="2.8"/><line x1="187.8" y1="184.7" x2="118.6" y2="98.1" stroke="#464646" stroke-width="2.4"/><line x1="195.0" y1="219.4" x2="166.8" y2="329.6" stroke="#2d2d2d" stroke-width="2.6"/><line x1="212.1" y1="216.2" x2="280.8" y2="308.1" stroke="#454545" stroke-width="3.4"/><line x1="203.7" y1="180.5" x2="224.8" y2="70.1" stroke="#2d2d2d" stroke-width="2.9"/><line x1="203.1" y1="218.9" x2="220.8" y2="326.0" stroke="#2e2e2e" stroke-width="2.7"/><line x1="214.1" y1="212.9" x2="293.7" y2="285.9" stroke="#2a2a2a" stroke-width="3.5"/><line x1="186.4" y1="214.2" x2="109.5" y2="294.4" stroke="#444444" stroke-width="3.7"/><line x1="209.4" y1="182.1" x2="262.8" y2="80.5" stroke="#454545" stroke-width="3.4"/><line x1="180.0" y1="195.9" x2="66.9" y2="172.4" stroke="#323232" stroke-width="2.4"/><line x1="210.1" y1="215.6" x2="267.5" y2="304.2" stroke="#424242" stroke-width="2.8"/><line x1="180.2" y1="199.0" x2="67.9" y2="193.6" stroke="#3f3f3f" stroke-width="3.6"/><line x1="195.3" y1="180.0" x2="169.0" y2="66.9" stroke="#3e3e3e" stroke-width="2.2"/><line x1="215.2" y1="186.2" x2="301.2" y2="108.2" stroke="#2c2c2c" stroke-width="2.5"/><line x1="192.6" y1="218.9" x2="150.9" y2="325.7" stroke="#464646" stroke-width="2.8"/><line x1="195.8" y1="218.0" x2="172.2" y2="319.7" stroke="#424242" stroke-width="3.1"/><line x1="181.6" y1="198.7" x2="77.4" y2="191.1" stroke="#373737" stroke-width="2.7"/><line x1="219.2" y1="203.5" x2="328.1" y2="223.1" stroke="#353535" stroke-width="2.1"/><line x1="181.6" y1="209.2" x2="77.5" y2="261.5" stroke="#3f3f3f" stroke-width="3.5"/><line x1="212.2" y1="185.9" x2="281.4" y2="105.7" stroke="#424242" stroke-width="3.8"/><line x1="212.8" y1="186.4" x2="285.2" y2="109.1" stroke="#323232" stroke-width="2.4"/><line x1="215.3" y1="190.1" x2="302.0" y2="133.9" stroke="#3d3d3d" stroke-width="2.6"/><line x1="215.3" y1="212.0" x2="301.9" y2="280.2" stroke="#2f2f2f" stroke-width="2.5"/><line x1="214.5" y1="212.8" x2="296.8" y2="285.4" stroke="#3b3b3b" stroke-width="2.6"/><line x1="194.8" y1="180.4" x2="165.2" y2="69.3" stroke="#2b2b2b" stroke-width="3.6"/><line x1="195.1" y1="181.0" x2="167.2" y2="73.6" stroke="#464646" stroke-width="2.1"/><line x1="199.7" y1="220.0" x2="198.3" y2="333.4" stroke="#2f2f2f" stroke-width="2.4"/><line x1="194.6" y1="217.3" x2="163.9" y2="315.6" stroke="#393939" stroke-width="2.2"/><line x1="209.7" y1="184.4" x2="264.5" y2="96.1" stroke="#3d3d3d" stroke-width="3.4"/><line x1="188.5" y1="214.5" x2="123.5" y2="296.6" stroke="#3f3f3f" stroke-width="3.4"/><line x1="183.5" y1="189.5" x2="90.2" y2="130.3" stroke="#323232" stroke-width="3.7"/><line x1="209.9" y1="217.4" x2="265.7" y2="316.0" stroke="#3b3b3b" stroke-width="3.4"/><line x1="190.9" y1="216.3" x2="139.6" y2="308.4" stroke="#313131" stroke-width="3.1"/><line x1="200.8" y1="218.2" x2="205.1" y2="321.6" stroke="#333333" stroke-width="2.3"/><line x1="180.5" y1="202.9" x2="70.0" y2="219.6" stroke="#2c2c2c" stroke-width="2.2"/><line x1="215.7" y1="210.6" x2="304.6" y2="270.3" stroke="#2e2e2e" stroke-width="3.3"/><line x1="191.3" y1="184.0" x2="142.2" y2="93.7" stroke="#282828" stroke-width="2.3"/><line x1="214.9" y1="212.8" x2="299.4" y2="285.4" stroke="#3d3d3d" stroke-width="2.5"/><line x1="204.6" y1="182.6" x2="230.8" y2="84.0" stroke="#2b2b2b" stroke-width="3.2"/><line x1="189.5" y1="214.5" x2="130.2" y2="296.4" stroke="#444444" stroke-width="3.0"/><line x1="202.5" y1="182.3" x2="216.6" y2="81.7" stroke="#3a3a3a" stroke-width="3.6"/><line x1="216.1" y1="206.6" x2="307.3" y2="244.2" stroke="#404040" stroke-width="2.6"/><line x1="190.4" y1="214.9" x2="136.2" y2="299.2" stroke="#282828" stroke-width="3.5"/><line x1="192.2" y1="182.1" x2="148.1" y2="80.9" stroke="#333333" stroke-width="2.2"/><line x1="189.4" y1="184.8" x2="129.5" y2="98.4" stroke="#2b2b2b" stroke-width="2.4"/><line x1="196.4" y1="217.0" x2="176.0" y2="313.2" stroke="#303030" stroke-width="2.8"/><line x1="199.9" y1="218.1" x2="199.4" y2="320.7" stroke="#2b2b2b" stroke-width="3.0"/><line x1="212.8" y1="187.3" x2="285.5" y2="115.1" stroke="#2c2c2c" stroke-width="2.3"/><line x1="181.2" y1="204.6" x2="74.6" y2="230.7" stroke="#282828" stroke-width="3.7"/><line x1="219.1" y1="198.2" x2="327.2" y2="187.9" stroke="#424242" stroke-width="3.5"/><line x1="212.4" y1="186.3" x2="282.9" y2="108.5" stroke="#303030" stroke-width="3.5"/><line x1="201.8" y1="182.8" x2="212.1" y2="85.3" stroke="#292929" stroke-width="2.1"/><line x1="186.9" y1="185.9" x2="112.5" y2="105.8" stroke="#464646" stroke-width="3.0"/><line x1="208.1" y1="215.9" x2="254.3" y2="305.9" stroke="#313131" stroke-width="2.1"/><line x1="206.7" y1="218.1" x2="244.6" y2="320.9" stroke="#383838" stroke-width="3.7"/><line x1="211.3" y1="214.3" x2="275.3" y2="295.3" stroke="#464646" stroke-width="2.4"/><line x1="215.5" y1="208.5" x2="303.6" y2="256.7" stroke="#3f3f3f" stroke-width="2.3"/><line x1="208.0" y1="182.8" x2="253.7" y2="85.1" stroke="#2a2a2a" stroke-width="3.6"/><line x1="207.3" y1="183.5" x2="248.5" y2="90.2" stroke="#313131" stroke-width="3.0"/><line x1="217.6" y1="196.4" x2="317.1" y2="176.2" stroke="#303030" stroke-width="2.4"/><line x1="202.1" y1="217.3" x2="214.0" y2="315.2" stroke="#404040" stroke-width="2.5"/><line x1="202.6" y1="182.0" x2="217.3" y2="80.1" stroke="#323232" stroke-width="2.6"/><line x1="187.7" y1="186.3" x2="118.1" y2="108.4" stroke="#292929" stroke-width="2.2"/><line x1="212.6" y1="212.2" x2="283.8" y2="281.4" stroke="#404040" stroke-width="3.7"/><line x1="216.2" y1="193.3" x2="308.1" y2="155.3" stroke="#353535" stroke-width="3.5"/><line x1="218.0" y1="200.0" x2="319.7" y2="200.1" stroke="#303030" stroke-width="2.8"/><line x1="213.4" y1="212.9" x2="289.4" y2="286.2" stroke="#494949" stroke-width="3.7"/><line x1="208.8" y1="214.1" x2="258.5" y2="294.1" stroke="#474747" stroke-width="3.0"/><line x1="207.0" y1="215.6" x2="246.5" y2="303.7" stroke="#353535" stroke-width="2.9"/><line x1="203.9" y1="182.9" x2="226.3" y2="86.0" stroke="#292929" stroke-width="3.6"/><line x1="212.9" y1="211.3" x2="285.9" y2="275.2" stroke="#333333" stroke-width="2.4"/><line x1="217.9" y1="203.5" x2="319.5" y2="223.3" stroke="#2f2f2f" stroke-width="3.5"/><line x1="195.9" y1="217.9" x2="172.8" y2="319.5" stroke="#303030" stroke-width="2.5"/><line x1="188.9" y1="186.2" x2="126.0" y2="108.1" stroke="#3f3f3f" stroke-width="3.7"/><line x1="195.5" y1="216.2" x2="169.7" y2="307.8" stroke="#3b3b3b" stroke-width="2.6"/><line x1="190.6" y1="214.9" x2="137.5" y2="299.1" stroke="#434343" stroke-width="3.4"/><line x1="205.6" y1="184.4" x2="237.5" y2="95.7" stroke="#333333" stroke-width="3.3"/><line x1="217.9" y1="199.4" x2="319.2" y2="195.7" stroke="#313131" stroke-width="2.4"/><line x1="192.6" y1="214.4" x2="150.9" y2="296.2" stroke="#3d3d3d" stroke-width="2.2"/><line x1="213.2" y1="212.4" x2="288.3" y2="282.9" stroke="#3f3f3f" stroke-width="3.6"/><line x1="185.2" y1="208.8" x2="101.5" y2="258.3" stroke="#454545" stroke-width="2.8"/><line x1="211.6" y1="212.9" x2="277.1" y2="285.9" stroke="#333333" stroke-width="3.5"/><line x1="186.6" y1="188.9" x2="110.7" y2="126.2" stroke="#3d3d3d" stroke-width="2.4"/><line x1="210.7" y1="212.4" x2="271.2" y2="283.0" stroke="#363636" stroke-width="2.1"/><line x1="212.0" y1="187.3" x2="280.2" y2="115.1" stroke="#313131" stroke-width="2.4"/><line x1="202.6" y1="217.7" x2="217.0" y2="317.9" stroke="#292929" stroke-width="3.1"/><line x1="197.8" y1="183.7" x2="185.2" y2="91.1" stroke="#3d3d3d" stroke-width="3.7"/><line x1="183.3" y1="200.0" x2="88.9" y2="200.3" stroke="#2e2e2e" stroke-width="2.5"/><line x1="209.2" y1="187.0" x2="261.5" y2="113.4" stroke="#343434" stroke-width="2.5"/><line x1="212.0" y1="212.8" x2="280.3" y2="285.6" stroke="#343434" stroke-width="3.3"/><line x1="216.1" y1="206.0" x2="307.6" y2="240.3" stroke="#464646" stroke-width="3.4"/><line x1="193.1" y1="214.3" x2="154.2" y2="295.4" stroke="#414141" stroke-width="2.6"/><line x1="204.8" y1="215.4" x2="232.3" y2="303.0" stroke="#434343" stroke-width="3.1"/><line x1="184.7" y1="201.3" x2="98.1" y2="208.8" stroke="#343434" stroke-width="3.0"/><line x1="209.9" y1="213.1" x2="265.7" y2="287.2" stroke="#414141" stroke-width="2.3"/><line x1="184.1" y1="198.6" x2="94.2" y2="190.8" stroke="#484848" stroke-width="3.6"/><line x1="184.8" y1="204.5" x2="98.9" y2="230.2" stroke="#3b3b3b" stroke-width="3.7"/><line x1="203.3" y1="215.3" x2="222.2" y2="302.2" stroke="#303030" stroke-width="2.7"/><line x1="194.8" y1="185.2" x2="165.4" y2="101.6" stroke="#343434" stroke-width="2.3"/><line x1="184.9" y1="200.7" x2="99.5" y2="204.4" stroke="#474747" stroke-width="2.9"/><line x1="216.7" y1="197.3" x2="311.5" y2="181.9" stroke="#3d3d3d" stroke-width="3.5"/><line x1="192.9" y1="214.8" x2="152.7" y2="298.9" stroke="#353535" stroke-width="3.4"/><line x1="205.3" y1="184.2" x2="235.6" y2="94.8" stroke="#303030" stroke-width="2.4"/><line x1="185.0" y1="195.4" x2="100.1" y2="169.1" stroke="#333333" stroke-width="3.4"/><line x1="198.5" y1="215.0" x2="189.8" y2="299.9" stroke="#454545" stroke-width="2.7"/><line x1="214.8" y1="194.0" x2="298.8" y2="159.9" stroke="#323232" stroke-width="3.4"/><line x1="185.1" y1="194.6" x2="101.0" y2="164.2" stroke="#464646" stroke-width="2.2"/><line x1="186.7" y1="193.4" x2="111.5" y2="156.1" stroke="#3c3c3c" stroke-width="3.5"/><line x1="188.8" y1="190.2" x2="125.2" y2="134.8" stroke="#303030" stroke-width="2.6"/><line x1="193.8" y1="214.6" x2="158.7" y2="297.5" stroke="#3c3c3c" stroke-width="3.0"/><line x1="214.0" y1="194.7" x2="293.3" y2="164.5" stroke="#3b3b3b" stroke-width="3.7"/><line x1="185.6" y1="203.5" x2="104.0" y2="223.5" stroke="#2c2c2c" stroke-width="2.9"/><line x1="206.9" y1="214.7" x2="246.1" y2="297.7" stroke="#373737" stroke-width="3.3"/><line x1="214.9" y1="196.6" x2="299.1" y2="177.5" stroke="#373737" stroke-width="3.1"/><line x1="193.0" y1="213.0" x2="153.4" y2="286.6" stroke="#474747" stroke-width="3.1"/><line x1="214.1" y1="198.2" x2="294.3" y2="187.9" stroke="#303030" stroke-width="3.4"/><line x1="186.0" y1="203.5" x2="106.5" y2="223.4" stroke="#282828" stroke-width="3.0"/><line x1="185.2" y1="198.0" x2="101.4" y2="186.4" stroke="#3c3c3c" stroke-width="2.3"/><line x1="214.2" y1="202.5" x2="294.5" y2="216.7" stroke="#404040" stroke-width="2.8"/><line x1="213.5" y1="205.0" x2="289.9" y2="233.6" stroke="#2d2d2d" stroke-width="3.1"/><line x1="189.2" y1="210.6" x2="127.9" y2="270.6" stroke="#3d3d3d" stroke-width="3.6"/><line x1="214.1" y1="202.2" x2="293.7" y2="214.9" stroke="#313131" stroke-width="3.6"/><line x1="203.1" y1="185.2" x2="220.7" y2="101.3" stroke="#282828" stroke-width="3.5"/><line x1="186.7" y1="195.8" x2="111.0" y2="172.3" stroke="#464646" stroke-width="2.5"/><line x1="207.9" y1="212.7" x2="252.6" y2="284.8" stroke="#3d3d3d" stroke-width="2.8"/><line x1="212.0" y1="191.8" x2="279.9" y2="145.2" stroke="#4a4a4a" stroke-width="3.1"/><line x1="189.5" y1="189.2" x2="130.3" y2="128.3" stroke="#444444" stroke-width="2.3"/><line x1="194.5" y1="186.1" x2="163.1" y2="107.1" stroke="#4b4b4b" stroke-width="3.6"/><line x1="185.1" y1="202.8" x2="100.9" y2="218.6" stroke="#424242" stroke-width="2.6"/><line x1="210.9" y1="190.2" x2="272.5" y2="134.9" stroke="#4b4b4b" stroke-width="3.7"/><line x1="212.1" y1="191.2" x2="280.9" y2="141.6" stroke="#3a3a3a" stroke-width="3.7"/><line x1="204.7" y1="186.7" x2="231.5" y2="111.7" stroke="#2b2b2b" stroke-width="2.2"/><line x1="188.2" y1="192.7" x2="121.2" y2="151.6" stroke="#303030" stroke-width="3.1"/><line x1="207.5" y1="188.2" x2="250.3" y2="121.2" stroke="#3f3f3f" stroke-width="3.4"/><line x1="211.7" y1="206.6" x2="278.3" y2="244.3" stroke="#292929" stroke-width="2.8"/><line x1="213.4" y1="203.8" x2="289.2" y2="225.3" stroke="#363636" stroke-width="2.4"/><line x1="188.2" y1="193.3" x2="121.3" y2="155.3" stroke="#383838" stroke-width="2.7"/><line x1="199.5" y1="185.7" x2="197.0" y2="104.4" stroke="#454545" stroke-width="3.1"/><line x1="207.7" y1="211.8" x2="251.1" y2="278.4" stroke="#3d3d3d" stroke-width="3.2"/><line x1="213.2" y1="201.1" x2="288.0" y2="207.6" stroke="#414141" stroke-width="3.8"/><line x1="186.3" y1="202.3" x2="108.7" y2="215.5" stroke="#3a3a3a" stroke-width="2.9"/><line x1="186.6" y1="204.3" x2="110.6" y2="228.9" stroke="#3f3f3f" stroke-width="3.4"/><line x1="196.5" y1="186.2" x2="176.5" y2="107.9" stroke="#4b4b4b" stroke-width="2.8"/><line x1="188.4" y1="207.3" x2="122.7" y2="248.6" stroke="#484848" stroke-width="3.4"/><line x1="208.0" y1="211.1" x2="253.4" y2="274.3" stroke="#2b2b2b" stroke-width="2.3"/><line x1="205.5" y1="187.3" x2="236.6" y2="115.4" stroke="#292929" stroke-width="2.9"/><line x1="212.4" y1="203.2" x2="282.6" y2="221.4" stroke="#2c2c2c" stroke-width="2.3"/><line x1="211.7" y1="195.7" x2="278.2" y2="171.5" stroke="#2f2f2f" stroke-width="2.2"/><line x1="200.0" y1="187.6" x2="199.8" y2="117.0" stroke="#414141" stroke-width="2.7"/><line x1="209.8" y1="207.5" x2="265.2" y2="250.0" stroke="#323232" stroke-width="2.5"/><line x1="206.9" y1="211.6" x2="245.7" y2="277.4" stroke="#4a4a4a" stroke-width="2.1"/><line x1="213.6" y1="200.2" x2="290.4" y2="201.3" stroke="#3c3c3c" stroke-width="3.5"/><line x1="198.5" y1="186.6" x2="190.2" y2="110.7" stroke="#494949" stroke-width="3.5"/><line x1="203.3" y1="211.8" x2="221.8" y2="278.7" stroke="#2b2b2b" stroke-width="3.4"/><line x1="199.0" y1="212.2" x2="193.4" y2="281.3" stroke="#282828" stroke-width="3.4"/><line x1="192.4" y1="190.2" x2="149.4" y2="134.4" stroke="#2c2c2c" stroke-width="2.5"/><line x1="199.4" y1="213.1" x2="196.1" y2="287.4" stroke="#494949" stroke-width="2.6"/><line x1="189.6" y1="194.0" x2="130.8" y2="160.1" stroke="#2e2e2e" stroke-width="3.0"/><line x1="190.0" y1="191.9" x2="133.4" y2="145.8" stroke="#454545" stroke-width="3.6"/><line x1="187.9" y1="195.1" x2="119.4" y2="167.5" stroke="#3a3a3a" stroke-width="3.2"/><line x1="191.3" y1="191.7" x2="142.0" y2="144.7" stroke="#3b3b3b" stroke-width="2.8"/><line x1="212.3" y1="204.2" x2="282.3" y2="228.2" stroke="#383838" stroke-width="2.2"/><line x1="190.2" y1="208.4" x2="134.5" y2="255.7" stroke="#3e3e3e" stroke-width="3.5"/><line x1="202.4" y1="212.6" x2="215.7" y2="284.0" stroke="#484848" stroke-width="3.6"/><line x1="210.0" y1="206.6" x2="266.6" y2="244.0" stroke="#484848" stroke-width="3.1"/><line x1="202.3" y1="212.0" x2="215.4" y2="279.7" stroke="#4a4a4a" stroke-width="3.1"/><line x1="210.9" y1="197.9" x2="272.7" y2="186.1" stroke="#343434" stroke-width="2.9"/><line x1="193.3" y1="209.0" x2="155.5" y2="260.1" stroke="#494949" stroke-width="2.3"/><line x1="199.6" y1="188.5" x2="197.2" y2="123.1" stroke="#404040" stroke-width="2.1"/><line x1="194.4" y1="210.0" x2="162.4" y2="266.7" stroke="#484848" stroke-width="2.9"/><line x1="205.0" y1="190.3" x2="233.2" y2="135.6" stroke="#2b2b2b" stroke-width="3.2"/><line x1="202.3" y1="189.5" x2="215.5" y2="129.7" stroke="#333333" stroke-width="2.1"/><line x1="202.6" y1="210.4" x2="217.5" y2="269.5" stroke="#2d2d2d" stroke-width="2.9"/><line x1="208.4" y1="194.7" x2="255.9" y2="164.5" stroke="#3e3e3e" stroke-width="2.7"/><line x1="202.6" y1="210.3" x2="217.6" y2="268.9" stroke="#363636" stroke-width="3.4"/><line x1="197.7" y1="209.6" x2="184.6" y2="264.2" stroke="#404040" stroke-width="2.2"/><line x1="207.0" y1="208.0" x2="246.3" y2="253.4" stroke="#4d4d4d" stroke-width="3.3"/><line x1="191.1" y1="205.3" x2="140.7" y2="235.2" stroke="#313131" stroke-width="3.6"/><line x1="194.6" y1="191.9" x2="163.8" y2="146.1" stroke="#2b2b2b" stroke-width="2.3"/><line x1="190.4" y1="200.3" x2="135.7" y2="201.7" stroke="#303030" stroke-width="2.8"/><line x1="207.0" y1="207.7" x2="246.4" y2="251.1" stroke="#3b3b3b" stroke-width="3.6"/><line x1="189.9" y1="201.2" x2="132.9" y2="208.2" stroke="#333333" stroke-width="2.6"/><line x1="196.4" y1="190.7" x2="175.8" y2="138.3" stroke="#3f3f3f" stroke-width="3.2"/><line x1="195.4" y1="191.7" x2="169.5" y2="144.8" stroke="#393939" stroke-width="2.3"/><line x1="209.0" y1="197.3" x2="260.1" y2="182.1" stroke="#313131" stroke-width="2.8"/><line x1="198.8" y1="210.0" x2="192.0" y2="266.6" stroke="#373737" stroke-width="2.1"/><line x1="208.4" y1="196.3" x2="255.8" y2="175.6" stroke="#383838" stroke-width="3.1"/><line x1="190.3" y1="200.3" x2="135.3" y2="201.8" stroke="#313131" stroke-width="2.7"/><line x1="191.2" y1="196.3" x2="141.5" y2="175.5" stroke="#2d2d2d" stroke-width="3.4"/><line x1="205.2" y1="207.1" x2="234.6" y2="247.0" stroke="#3c3c3c" stroke-width="3.0"/><line x1="208.3" y1="204.2" x2="255.1" y2="228.2" stroke="#404040" stroke-width="2.1"/><line x1="190.6" y1="198.1" x2="137.2" y2="187.3" stroke="#2c2c2c" stroke-width="3.7"/><line x1="195.4" y1="208.4" x2="169.4" y2="256.2" stroke="#2a2a2a" stroke-width="2.9"/><line x1="207.1" y1="194.9" x2="247.1" y2="165.9" stroke="#444444" stroke-width="2.6"/><line x1="208.9" y1="198.5" x2="259.5" y2="189.7" stroke="#313131" stroke-width="3.7"/><line x1="205.3" y1="193.4" x2="235.5" y2="155.9" stroke="#4c4c4c" stroke-width="2.9"/><line x1="199.8" y1="208.3" x2="198.6" y2="255.3" stroke="#2f2f2f" stroke-width="2.3"/><line x1="202.3" y1="208.3" x2="215.1" y2="255.0" stroke="#474747" stroke-width="3.5"/><line x1="198.3" y1="192.0" x2="188.8" y2="146.6" stroke="#282828" stroke-width="3.2"/><line x1="201.9" y1="208.8" x2="212.4" y2="258.8" stroke="#282828" stroke-width="2.5"/><line x1="208.2" y1="199.6" x2="254.8" y2="197.1" stroke="#292929" stroke-width="2.5"/><line x1="207.5" y1="204.7" x2="250.2" y2="231.1" stroke="#2c2c2c" stroke-width="2.0"/><line x1="205.7" y1="194.0" x2="238.1" y2="159.7" stroke="#3c3c3c" stroke-width="3.5"/><line x1="207.8" y1="198.1" x2="252.3" y2="187.3" stroke="#333333" stroke-width="3.7"/><line x1="195.1" y1="207.3" x2="167.2" y2="248.7" stroke="#414141" stroke-width="2.1"/><line x1="206.4" y1="194.3" x2="242.4" y2="161.7" stroke="#323232" stroke-width="2.3"/><line x1="201.7" y1="208.6" x2="211.1" y2="257.5" stroke="#373737" stroke-width="2.9"/><line x1="198.0" y1="207.6" x2="186.7" y2="250.7" stroke="#2c2c2c" stroke-width="3.0"/><line x1="193.9" y1="204.7" x2="159.3" y2="231.2" stroke="#4c4c4c" stroke-width="3.3"/><line x1="200.1" y1="207.3" x2="200.5" y2="248.9" stroke="#2e2e2e" stroke-width="2.9"/><line x1="193.0" y1="196.0" x2="153.7" y2="173.3" stroke="#363636" stroke-width="3.6"/><line x1="197.7" y1="192.5" x2="185.0" y2="150.3" stroke="#343434" stroke-width="3.1"/><line x1="204.4" y1="205.5" x2="229.5" y2="236.5" stroke="#2a2a2a" stroke-width="2.7"/><line x1="202.3" y1="193.2" x2="215.5" y2="154.4" stroke="#434343" stroke-width="2.1"/><line x1="199.1" y1="193.1" x2="193.8" y2="154.1" stroke="#4d4d4d" stroke-width="2.2"/><line x1="202.2" y1="193.6" x2="214.6" y2="157.5" stroke="#292929" stroke-width="2.4"/><line x1="207.2" y1="202.2" x2="247.7" y2="214.4" stroke="#333333" stroke-width="2.3"/><line x1="193.3" y1="198.0" x2="155.4" y2="186.7" stroke="#2b2b2b" stroke-width="3.3"/><line x1="203.5" y1="193.8" x2="223.0" y2="159.0" stroke="#343434" stroke-width="2.8"/><line x1="204.8" y1="204.4" x2="231.8" y2="229.2" stroke="#454545" stroke-width="2.3"/><line x1="205.2" y1="195.4" x2="234.4" y2="169.1" stroke="#323232" stroke-width="2.2"/><line x1="196.6" y1="204.2" x2="177.6" y2="228.2" stroke="#383838" stroke-width="3.6"/><line x1="202.2" y1="196.1" x2="214.9" y2="173.9" stroke="#393939" stroke-width="2.9"/><line x1="203.0" y1="196.6" x2="220.3" y2="177.3" stroke="#3e3e3e" stroke-width="2.5"/><line x1="196.0" y1="197.9" x2="173.6" y2="186.1" stroke="#464646" stroke-width="2.8"/><line x1="203.5" y1="202.7" x2="223.6" y2="217.7" stroke="#484848" stroke-width="3.5"/><line x1="198.6" y1="203.8" x2="190.7" y2="225.5" stroke="#2e2e2e" stroke-width="2.6"/><line x1="196.1" y1="199.8" x2="173.8" y2="198.8" stroke="#484848" stroke-width="3.2"/><line x1="197.3" y1="197.2" x2="182.3" y2="181.2" stroke="#474747" stroke-width="2.5"/><line x1="197.7" y1="197.4" x2="184.8" y2="182.4" stroke="#383838" stroke-width="3.4"/><line x1="198.4" y1="202.4" x2="189.2" y2="216.3" stroke="#484848" stroke-width="2.3"/><line x1="198.3" y1="202.0" x2="188.5" y2="213.2" stroke="#454545" stroke-width="2.4"/><line x1="201.7" y1="199.1" x2="211.6" y2="194.1" stroke="#333333" stroke-width="3.6"/></svg>
<div class="t" style="left:1631px;top:103.84px;font-size:12px;line-height:12px;color:#f6f6f6;font-family:'Liberation Sans', sans-serif;white-space:pre;text-shadow:0.6px 0 0 rgba(230,200,120,0.6),-0.6px 0 0 rgba(100,160,255,0.6);transform:scaleX(0.92);transform-origin:0 0;">Smp/px: 5000/5000.   Samp/s: 0.000M.   Time: 00:00:04 / 00:00:04.   Time left: 00:00:04 / 00:00:00.   GPU Mem [MB]: 1002/9215/11264 P2P:0</div>
<div class="t" style="left:1632px;top:116.84px;font-size:12px;line-height:12px;color:#f6f6f6;font-family:'Liberation Sans', sans-serif;white-space:pre;text-shadow:0.6px 0 0 rgba(230,200,120,0.6),-0.6px 0 0 rgba(100,160,255,0.6);transform:scaleX(0.92);transform-origin:0 0;">CPU Mem [GB]:0.000/8.000   Tex: rgb 0, rgb64 0, grey 0, grey16 0.   Render size: 800 x 600.   Zoom: 100%.   Primitives/Meshes/Voxels: 9960/2/0</div>
<div class="a" style="left:2472px;top:99px;width:16px;height:644px;background:#f0f0f0;"></div>
<svg class="a" style="left:2475px;top:101px;" width="10" height="10" viewBox="0 0 10 10"><path d="M1 7 L5 3 L9 7" stroke="#555" stroke-width="1.6" fill="none"/></svg>
<svg class="a" style="left:2475px;top:731px;" width="10" height="10" viewBox="0 0 10 10"><path d="M1 3 L5 7 L9 3" stroke="#555" stroke-width="1.6" fill="none"/></svg>
<div class="a" style="left:2474px;top:413px;width:12px;height:19px;background:#d0d0d0;"></div>
<div class="a" style="left:1628px;top:743px;width:844px;height:16px;background:#f0f0f0;"></div>
<svg class="a" style="left:1630px;top:746px;" width="10" height="10" viewBox="0 0 10 10"><path d="M7 1 L3 5 L7 9" stroke="#555" stroke-width="1.6" fill="none"/></svg>
<svg class="a" style="left:2460px;top:746px;" width="10" height="10" viewBox="0 0 10 10"><path d="M3 1 L7 5 L3 9" stroke="#555" stroke-width="1.6" fill="none"/></svg>
<div class="a" style="left:2042px;top:745px;width:17px;height:12px;background:#d8d8d8;"></div>
<div class="a" style="left:2472px;top:743px;width:16px;height:16px;background:#f0f0f0;"></div>
<div class="a" style="left:2472px;top:99px;width:1px;height:660px;background:#ffffff;"></div>
<div class="a" style="left:1628px;top:743px;width:860px;height:1px;background:#ffffff;"></div>
<svg class="a" style="left:2478px;top:749px;" width="8" height="8" viewBox="0 0 8 8"><rect x="5" y="0" width="2" height="2" fill="#bbb"/><rect x="2" y="3" width="2" height="2" fill="#bbb"/><rect x="5" y="3" width="2" height="2" fill="#bbb"/><rect x="-1" y="6" width="2" height="2" fill="#bbb"/><rect x="2" y="6" width="2" height="2" fill="#bbb"/><rect x="5" y="6" width="2" height="2" fill="#bbb"/></svg>
<div class="t" style="left:223px;top:722.35px;font-size:76px;line-height:76px;color:#ff0000;font-family:'Liberation Serif', serif;white-space:pre;transform:scaleX(1.167);transform-origin:0 0;">need more fine hair during rendering</div>
<div class="a" style="left:0px;top:865px;width:3309px;height:23px;background:#ffffff;"></div>
<div class="t" style="left:-3px;top:871.42px;font-size:12.5px;line-height:12.5px;color:#000;font-family:'Liberation Sans', sans-serif;transform:scaleX(0.96);transform-origin:0 0;">odesk 3ds Max 2020</div>
<svg class="a" style="left:3205px;top:866px;" width="104" height="18" viewBox="0 0 104 18"><line x1="10" y1="9.5" x2="20" y2="9.5" stroke="#333"/><rect x="54.5" y="6.5" width="8" height="8" fill="none" stroke="#333"/><path d="M56.5 6.5 V4.5 H64.5 V12.5 H62.5" fill="none" stroke="#333"/><line x1="97" y1="4" x2="107" y2="14" stroke="#333"/><line x1="107" y1="4" x2="97" y2="14" stroke="#333"/></svg>
<div class="a" style="left:0px;top:888px;width:3309px;height:22px;background:linear-gradient(#4a4a4a,#434343);"></div>
<div class="a" style="left:0px;top:910px;width:3309px;height:1px;background:#2a2a2a;"></div>
<div class="t" style="left:0px;top:893.42px;font-size:12.5px;line-height:12.5px;color:#e0e0e0;font-family:'Liberation Sans', sans-serif;transform:scaleX(0.95);transform-origin:0 0;">Tools</div>
<div class="t" style="left:53px;top:893.42px;font-size:12.5px;line-height:12.5px;color:#e0e0e0;font-family:'Liberation Sans', sans-serif;transform:scaleX(0.95);transform-origin:0 0;">Group</div>
<div class="t" style="left:112px;top:893.42px;font-size:12.5px;line-height:12.5px;color:#e0e0e0;font-family:'Liberation Sans', sans-serif;transform:scaleX(0.95);transform-origin:0 0;">Views</div>
<div class="t" style="left:170px;top:893.42px;font-size:12.5px;line-height:12.5px;color:#e0e0e0;font-family:'Liberation Sans', sans-serif;transform:scaleX(0.95);transform-origin:0 0;">Create</div>
<div class="t" style="left:232px;top:893.42px;font-size:12.5px;line-height:12.5px;color:#e0e0e0;font-family:'Liberation Sans', sans-serif;transform:scaleX(0.95);transform-origin:0 0;">Modifiers</div>
<div class="t" style="left:305px;top:893.42px;font-size:12.5px;line-height:12.5px;color:#e0e0e0;font-family:'Liberation Sans', sans-serif;transform:scaleX(0.95);transform-origin:0 0;">Animation</div>
<div class="t" style="left:385px;top:893.42px;font-size:12.5px;line-height:12.5px;color:#e0e0e0;font-family:'Liberation Sans', sans-serif;transform:scaleX(0.95);transform-origin:0 0;">Graph Editors</div>
<div class="t" style="left:484px;top:893.42px;font-size:12.5px;line-height:12.5px;color:#e0e0e0;font-family:'Liberation Sans', sans-serif;transform:scaleX(0.95);transform-origin:0 0;">Rendering</div>
<div class="t" style="left:565px;top:893.42px;font-size:12.5px;line-height:12.5px;color:#e0e0e0;font-family:'Liberation Sans', sans-serif;transform:scaleX(0.95);transform-origin:0 0;">Civil View</div>
<div class="t" style="left:641px;top:893.42px;font-size:12.5px;line-height:12.5px;color:#e0e0e0;font-family:'Liberation Sans', sans-serif;transform:scaleX(0.95);transform-origin:0 0;">Customize</div>
<div class="t" style="left:722px;top:893.42px;font-size:12.5px;line-height:12.5px;color:#e0e0e0;font-family:'Liberation Sans', sans-serif;transform:scaleX(0.95);transform-origin:0 0;">Scripting</div>
<div class="t" style="left:795px;top:893.42px;font-size:12.5px;line-height:12.5px;color:#e0e0e0;font-family:'Liberation Sans', sans-serif;transform:scaleX(0.95);transform-origin:0 0;">Interactive</div>
<div class="t" style="left:880px;top:893.42px;font-size:12.5px;line-height:12.5px;color:#e0e0e0;font-family:'Liberation Sans', sans-serif;transform:scaleX(0.95);transform-origin:0 0;">Content</div>
<div class="t" style="left:951px;top:893.42px;font-size:12.5px;line-height:12.5px;color:#e0e0e0;font-family:'Liberation Sans', sans-serif;transform:scaleX(0.95);transform-origin:0 0;">Help</div>
<div class="t" style="left:1001px;top:893.42px;font-size:12.5px;line-height:12.5px;color:#e0e0e0;font-family:'Liberation Sans', sans-serif;transform:scaleX(0.95);transform-origin:0 0;">Ornatrix</div>
<div class="t" style="left:1070px;top:893.42px;font-size:12.5px;line-height:12.5px;color:#e0e0e0;font-family:'Liberation Sans', sans-serif;transform:scaleX(0.95);transform-origin:0 0;">Exchange Store</div>
<div class="t" style="left:1183px;top:893.42px;font-size:12.5px;line-height:12.5px;color:#e0e0e0;font-family:'Liberation Sans', sans-serif;transform:scaleX(0.95);transform-origin:0 0;">Arnold</div>
<div class="t" style="left:1244px;top:893.42px;font-size:12.5px;line-height:12.5px;color:#e0e0e0;font-family:'Liberation Sans', sans-serif;transform:scaleX(0.95);transform-origin:0 0;">Phoenix FD</div>
<div class="a" style="left:2980px;top:888px;width:120px;height:22px;background:#d4d4d4;"></div>
<svg class="a" style="left:2983px;top:891px;" width="15" height="17" viewBox="0 0 15 17"><ellipse cx="7.5" cy="5.5" rx="4" ry="4.8" fill="#6a9ae0" stroke="#223" stroke-width="0.8"/><path d="M1 16 Q1 10 7.5 10.5 Q14 10 14 16Z" fill="#6a9ae0" stroke="#223" stroke-width="0.8"/></svg>
<div class="t" style="left:3001px;top:893.42px;font-size:12.5px;line-height:12.5px;color:#111;font-family:'Liberation Sans', sans-serif;transform:scaleX(0.97);transform-origin:0 0;">coilbookmedia</div>
<svg class="a" style="left:3088px;top:897px;" width="7" height="6" viewBox="0 0 7 6"><path d="M0 0 H6 L3 5Z" fill="#111"/></svg>
<div class="a" style="left:3100px;top:888px;width:95px;height:22px;background:#4a4a4a;"></div>
<div class="t" style="left:3130px;top:893.84px;font-size:12px;line-height:12px;color:#ddd;font-family:'Liberation Sans', sans-serif;transform:scaleX(0.93);transform-origin:0 0;">Workspaces:</div>
<div class="a" style="left:3196px;top:888px;width:113px;height:22px;background:#5e5e5e;"></div>
<div class="t" style="left:3199px;top:893.84px;font-size:12px;line-height:12px;color:#d0d0d0;font-family:'Liberation Sans', sans-serif;transform:scaleX(0.93);transform-origin:0 0;">Default</div>
<div class="a" style="left:0px;top:911px;width:3309px;height:66px;background:#444444;"></div>
<div class="a" style="left:0px;top:977px;width:3309px;height:1px;background:#5a5a5a;"></div>
<div class="a" style="left:0px;top:978px;width:3309px;height:19px;background:#4e4e4e;"></div>
<div class="t" style="left:0px;top:982.42px;font-size:12.5px;line-height:12.5px;color:#bbb;font-family:'Liberation Sans', sans-serif;transform:scaleX(0.95);transform-origin:0 0;">ng</div>
<div class="t" style="left:47px;top:982.42px;font-size:12.5px;line-height:12.5px;color:#bbb;font-family:'Liberation Sans', sans-serif;transform:scaleX(0.95);transform-origin:0 0;">Freeform</div>
<div class="t" style="left:138px;top:982.42px;font-size:12.5px;line-height:12.5px;color:#bbb;font-family:'Liberation Sans', sans-serif;transform:scaleX(0.95);transform-origin:0 0;">Selection</div>
<div class="t" style="left:230px;top:982.42px;font-size:12.5px;line-height:12.5px;color:#bbb;font-family:'Liberation Sans', sans-serif;transform:scaleX(0.95);transform-origin:0 0;">Object Paint</div>
<div class="a" style="left:318px;top:979px;width:76px;height:18px;background:#5a5a5a;border:1px solid #3a3a3a;border-bottom:none;"></div>
<div class="t" style="left:339px;top:982.42px;font-size:12.5px;line-height:12.5px;color:#e8e8e8;font-family:'Liberation Sans', sans-serif;transform:scaleX(0.95);transform-origin:0 0;">Populate</div>
<svg class="a" style="left:418px;top:983px;" width="24" height="10" viewBox="0 0 24 10"><rect x="0" y="1" width="11" height="8" rx="2" fill="#ddd"/><path d="M3 3 L5.5 6 L8 3" stroke="#444" fill="none"/><path d="M15 4 H21 L18 7Z" fill="#bbb"/></svg>
<div class="a" style="left:0px;top:997px;width:3309px;height:1px;background:#2c2c2c;"></div>
<div class="a" style="left:0px;top:998px;width:3309px;height:19px;background:#3e3e3e;"></div>
<div class="a" style="left:-4px;top:998px;width:21px;height:18px;background:#444444;border:1px solid #565656;"></div>
<div class="t" style="left:1px;top:1001.42px;font-size:12.5px;line-height:12.5px;color:#e0e0e0;font-family:'Liberation Sans', sans-serif;transform:scaleX(0.93);transform-origin:0 0;">ws</div>
<div class="a" style="left:18px;top:998px;width:98px;height:18px;background:#444444;border:1px solid #565656;"></div>
<div class="t" style="left:23px;top:1001.42px;font-size:12.5px;line-height:12.5px;color:#e0e0e0;font-family:'Liberation Sans', sans-serif;transform:scaleX(0.93);transform-origin:0 0;">Define Idle Areas</div>
<div class="a" style="left:117px;top:998px;width:56px;height:18px;background:#444444;border:1px solid #565656;"></div>
<div class="t" style="left:122px;top:1001.42px;font-size:12.5px;line-height:12.5px;color:#e0e0e0;font-family:'Liberation Sans', sans-serif;transform:scaleX(0.93);transform-origin:0 0;">Simulate</div>
<div class="a" style="left:174px;top:998px;width:48px;height:18px;background:#444444;border:1px solid #565656;"></div>
<div class="t" style="left:179px;top:1001.42px;font-size:12.5px;line-height:12.5px;color:#e0e0e0;font-family:'Liberation Sans', sans-serif;transform:scaleX(0.93);transform-origin:0 0;">Display</div>
<div class="a" style="left:223px;top:998px;width:76px;height:18px;background:#444444;border:1px solid #565656;"></div>
<div class="t" style="left:228px;top:1001.42px;font-size:12.5px;line-height:12.5px;color:#e0e0e0;font-family:'Liberation Sans', sans-serif;transform:scaleX(0.93);transform-origin:0 0;">Edit Selected</div>
<div class="a" style="left:0px;top:1016px;width:3309px;height:1px;background:#333333;"></div>
<div class="a" style="left:0px;top:1017px;width:3309px;height:5px;background:linear-gradient(#444,#3c3c3c);"></div>
<div class="a" style="left:0px;top:1022px;width:2711px;height:2px;background:#7d6a2a;"></div>
<div class="a" style="left:0px;top:2108px;width:3309px;height:28px;background:#444444;"></div>
<div class="a" style="left:0px;top:2115px;width:78px;height:16px;background:#595959;border-radius:0 3px 3px 0;"></div>
<div class="t" style="left:-2px;top:2118.27px;font-size:11.5px;line-height:11.5px;color:#ddd;font-family:'Liberation Sans', sans-serif;transform:scaleX(0.93);transform-origin:0 0;">0 / 100</div>
<div class="a" style="left:80px;top:2115px;width:14px;height:16px;background:#595959;border-radius:3px;"></div>
<div class="t" style="left:83px;top:2118.27px;font-size:11.5px;line-height:11.5px;color:#ddd;font-family:'Liberation Sans', sans-serif;transform:scaleX(0.93);transform-origin:0 0;">&gt;</div>
<div class="a" style="left:0px;top:2136px;width:3285px;height:72px;background:#2b2b2b;"></div>
<div class="a" style="left:0px;top:2136px;width:3285px;height:1px;background:#1c1c1c;"></div>
<div class="a" style="left:0px;top:2162px;width:3285px;height:1px;background:#161616;"></div>
<div class="a" style="left:0px;top:2196px;width:3285px;height:1px;background:#3a3a3a;"></div>
<div class="a" style="left:3285px;top:2136px;width:24px;height:72px;background:#444444;"></div>
<svg class="a" style="left:0px;top:2136px;" width="3285" height="27" viewBox="0 0 3285 27"><rect x="3.4" y="0" width="1" height="14" fill="#9a9a9a"/><rect x="3.4" y="24" width="1" height="3" fill="#9a9a9a"/><rect x="36.1" y="0" width="1" height="12" fill="#9a9a9a"/><rect x="68.7" y="0" width="1" height="14" fill="#9a9a9a"/><rect x="68.7" y="24" width="1" height="3" fill="#9a9a9a"/><rect x="101.4" y="0" width="1" height="12" fill="#9a9a9a"/><rect x="134.1" y="0" width="1" height="14" fill="#9a9a9a"/><rect x="134.1" y="24" width="1" height="3" fill="#9a9a9a"/><rect x="166.8" y="0" width="1" height="12" fill="#9a9a9a"/><rect x="199.4" y="0" width="1" height="14" fill="#9a9a9a"/><rect x="199.4" y="24" width="1" height="3" fill="#9a9a9a"/><rect x="232.1" y="0" width="1" height="12" fill="#9a9a9a"/><rect x="264.8" y="0" width="1" height="14" fill="#9a9a9a"/><rect x="264.8" y="24" width="1" height="3" fill="#9a9a9a"/><rect x="297.4" y="0" width="1" height="12" fill="#9a9a9a"/><rect x="330.1" y="0" width="1" height="14" fill="#9a9a9a"/><rect x="330.1" y="24" width="1" height="3" fill="#9a9a9a"/><rect x="362.8" y="0" width="1" height="12" fill="#9a9a9a"/><rect x="395.4" y="0" width="1" height="14" fill="#9a9a9a"/><rect x="395.4" y="24" width="1" height="3" fill="#9a9a9a"/><rect x="428.1" y="0" width="1" height="12" fill="#9a9a9a"/><rect x="460.8" y="0" width="1" height="14" fill="#9a9a9a"/><rect x="460.8" y="24" width="1" height="3" fill="#9a9a9a"/><rect x="493.4" y="0" width="1" height="12" fill="#9a9a9a"/><rect x="526.1" y="0" width="1" height="14" fill="#9a9a9a"/><rect x="526.1" y="24" width="1" height="3" fill="#9a9a9a"/><rect x="558.8" y="0" width="1" height="12" fill="#9a9a9a"/><rect x="591.5" y="0" width="1" height="14" fill="#9a9a9a"/><rect x="591.5" y="24" width="1" height="3" fill="#9a9a9a"/><rect x="624.1" y="0" width="1" height="12" fill="#9a9a9a"/><rect x="656.8" y="0" width="1" height="14" fill="#9a9a9a"/><rect x="656.8" y="24" width="1" height="3" fill="#9a9a9a"/><rect x="689.5" y="0" width="1" height="12" fill="#9a9a9a"/><rect x="722.1" y="0" width="1" height="14" fill="#9a9a9a"/><rect x="722.1" y="24" width="1" height="3" fill="#9a9a9a"/><rect x="754.8" y="0" width="1" height="12" fill="#9a9a9a"/><rect x="787.5" y="0" width="1" height="14" fill="#9a9a9a"/><rect x="787.5" y="24" width="1" height="3" fill="#9a9a9a"/><rect x="820.1" y="0" width="1" height="12" fill="#9a9a9a"/><rect x="852.8" y="0" width="1" height="14" fill="#9a9a9a"/><rect x="852.8" y="24" width="1" height="3" fill="#9a9a9a"/><rect x="885.5" y="0" width="1" height="12" fill="#9a9a9a"/><rect x="918.2" y="0" width="1" height="14" fill="#9a9a9a"/><rect x="918.2" y="24" width="1" height="3" fill="#9a9a9a"/><rect x="950.8" y="0" width="1" height="12" fill="#9a9a9a"/><rect x="983.5" y="0" width="1" height="14" fill="#9a9a9a"/><rect x="983.5" y="24" width="1" height="3" fill="#9a9a9a"/><rect x="1016.2" y="0" width="1" height="12" fill="#9a9a9a"/><rect x="1048.8" y="0" width="1" height="14" fill="#9a9a9a"/><rect x="1048.8" y="24" width="1" height="3" fill="#9a9a9a"/><rect x="1081.5" y="0" width="1" height="12" fill="#9a9a9a"/><rect x="1114.2" y="0" width="1" height="14" fill="#9a9a9a"/><rect x="1114.2" y="24" width="1" height="3" fill="#9a9a9a"/><rect x="1146.9" y="0" width="1" height="12" fill="#9a9a9a"/><rect x="1179.5" y="0" width="1" height="14" fill="#9a9a9a"/><rect x="1179.5" y="24" width="1" height="3" fill="#9a9a9a"/><rect x="1212.2" y="0" width="1" height="12" fill="#9a9a9a"/><rect x="1244.9" y="0" width="1" height="14" fill="#9a9a9a"/><rect x="1244.9" y="24" width="1" height="3" fill="#9a9a9a"/><rect x="1277.5" y="0" width="1" height="12" fill="#9a9a9a"/><rect x="1310.2" y="0" width="1" height="14" fill="#9a9a9a"/><rect x="1310.2" y="24" width="1" height="3" fill="#9a9a9a"/><rect x="1342.9" y="0" width="1" height="12" fill="#9a9a9a"/><rect x="1375.5" y="0" width="1" height="14" fill="#9a9a9a"/><rect x="1375.5" y="24" width="1" height="3" fill="#9a9a9a"/><rect x="1408.2" y="0" width="1" height="12" fill="#9a9a9a"/><rect x="1440.9" y="0" width="1" height="14" fill="#9a9a9a"/><rect x="1440.9" y="24" width="1" height="3" fill="#9a9a9a"/><rect x="1473.6" y="0" width="1" height="12" fill="#9a9a9a"/><rect x="1506.2" y="0" width="1" height="14" fill="#9a9a9a"/><rect x="1506.2" y="24" width="1" height="3" fill="#9a9a9a"/><rect x="1538.9" y="0" width="1" height="12" fill="#9a9a9a"/><rect x="1571.6" y="0" width="1" height="14" fill="#9a9a9a"/><rect x="1571.6" y="24" width="1" height="3" fill="#9a9a9a"/><rect x="1604.2" y="0" width="1" height="12" fill="#9a9a9a"/><rect x="1636.9" y="0" width="1" height="14" fill="#9a9a9a"/><rect x="1636.9" y="24" width="1" height="3" fill="#9a9a9a"/><rect x="1669.6" y="0" width="1" height="12" fill="#9a9a9a"/><rect x="1702.2" y="0" width="1" height="14" fill="#9a9a9a"/><rect x="1702.2" y="24" width="1" height="3" fill="#9a9a9a"/><rect x="1734.9" y="0" width="1" height="12" fill="#9a9a9a"/><rect x="1767.6" y="0" width="1" height="14" fill="#9a9a9a"/><rect x="1767.6" y="24" width="1" height="3" fill="#9a9a9a"/><rect x="1800.3" y="0" width="1" height="12" fill="#9a9a9a"/><rect x="1832.9" y="0" width="1" height="14" fill="#9a9a9a"/><rect x="1832.9" y="24" width="1" height="3" fill="#9a9a9a"/><rect x="1865.6" y="0" width="1" height="12" fill="#9a9a9a"/><rect x="1898.3" y="0" width="1" height="14" fill="#9a9a9a"/><rect x="1898.3" y="24" width="1" height="3" fill="#9a9a9a"/><rect x="1930.9" y="0" width="1" height="12" fill="#9a9a9a"/><rect x="1963.6" y="0" width="1" height="14" fill="#9a9a9a"/><rect x="1963.6" y="24" width="1" height="3" fill="#9a9a9a"/><rect x="1996.3" y="0" width="1" height="12" fill="#9a9a9a"/><rect x="2028.9" y="0" width="1" height="14" fill="#9a9a9a"/><rect x="2028.9" y="24" width="1" height="3" fill="#9a9a9a"/><rect x="2061.6" y="0" width="1" height="12" fill="#9a9a9a"/><rect x="2094.3" y="0" width="1" height="14" fill="#9a9a9a"/><rect x="2094.3" y="24" width="1" height="3" fill="#9a9a9a"/><rect x="2127.0" y="0" width="1" height="12" fill="#9a9a9a"/><rect x="2159.6" y="0" width="1" height="14" fill="#9a9a9a"/><rect x="2159.6" y="24" width="1" height="3" fill="#9a9a9a"/><rect x="2192.3" y="0" width="1" height="12" fill="#9a9a9a"/><rect x="2225.0" y="0" width="1" height="14" fill="#9a9a9a"/><rect x="2225.0" y="24" width="1" height="3" fill="#9a9a9a"/><rect x="2257.6" y="0" width="1" height="12" fill="#9a9a9a"/><rect x="2290.3" y="0" width="1" height="14" fill="#9a9a9a"/><rect x="2290.3" y="24" width="1" height="3" fill="#9a9a9a"/><rect x="2323.0" y="0" width="1" height="12" fill="#9a9a9a"/><rect x="2355.6" y="0" width="1" height="14" fill="#9a9a9a"/><rect x="2355.6" y="24" width="1" height="3" fill="#9a9a9a"/><rect x="2388.3" y="0" width="1" height="12" fill="#9a9a9a"/><rect x="2421.0" y="0" width="1" height="14" fill="#9a9a9a"/><rect x="2421.0" y="24" width="1" height="3" fill="#9a9a9a"/><rect x="2453.7" y="0" width="1" height="12" fill="#9a9a9a"/><rect x="2486.3" y="0" width="1" height="14" fill="#9a9a9a"/><rect x="2486.3" y="24" width="1" height="3" fill="#9a9a9a"/><rect x="2519.0" y="0" width="1" height="12" fill="#9a9a9a"/><rect x="2551.7" y="0" width="1" height="14" fill="#9a9a9a"/><rect x="2551.7" y="24" width="1" height="3" fill="#9a9a9a"/><rect x="2584.3" y="0" width="1" height="12" fill="#9a9a9a"/><rect x="2617.0" y="0" width="1" height="14" fill="#9a9a9a"/><rect x="2617.0" y="24" width="1" height="3" fill="#9a9a9a"/><rect x="2649.7" y="0" width="1" height="12" fill="#9a9a9a"/><rect x="2682.3" y="0" width="1" height="14" fill="#9a9a9a"/><rect x="2682.3" y="24" width="1" height="3" fill="#9a9a9a"/><rect x="2715.0" y="0" width="1" height="12" fill="#9a9a9a"/><rect x="2747.7" y="0" width="1" height="14" fill="#9a9a9a"/><rect x="2747.7" y="24" width="1" height="3" fill="#9a9a9a"/><rect x="2780.4" y="0" width="1" height="12" fill="#9a9a9a"/><rect x="2813.0" y="0" width="1" height="14" fill="#9a9a9a"/><rect x="2813.0" y="24" width="1" height="3" fill="#9a9a9a"/><rect x="2845.7" y="0" width="1" height="12" fill="#9a9a9a"/><rect x="2878.4" y="0" width="1" height="14" fill="#9a9a9a"/><rect x="2878.4" y="24" width="1" height="3" fill="#9a9a9a"/><rect x="2911.0" y="0" width="1" height="12" fill="#9a9a9a"/><rect x="2943.7" y="0" width="1" height="14" fill="#9a9a9a"/><rect x="2943.7" y="24" width="1" height="3" fill="#9a9a9a"/><rect x="2976.4" y="0" width="1" height="12" fill="#9a9a9a"/><rect x="3009.0" y="0" width="1" height="14" fill="#9a9a9a"/><rect x="3009.0" y="24" width="1" height="3" fill="#9a9a9a"/><rect x="3041.7" y="0" width="1" height="12" fill="#9a9a9a"/><rect x="3074.4" y="0" width="1" height="14" fill="#9a9a9a"/><rect x="3074.4" y="24" width="1" height="3" fill="#9a9a9a"/><rect x="3107.1" y="0" width="1" height="12" fill="#9a9a9a"/><rect x="3139.7" y="0" width="1" height="14" fill="#9a9a9a"/><rect x="3139.7" y="24" width="1" height="3" fill="#9a9a9a"/><rect x="3172.4" y="0" width="1" height="12" fill="#9a9a9a"/><rect x="3205.1" y="0" width="1" height="14" fill="#9a9a9a"/><rect x="3205.1" y="24" width="1" height="3" fill="#9a9a9a"/><rect x="3237.7" y="0" width="1" height="12" fill="#9a9a9a"/><rect x="3270.4" y="0" width="1" height="14" fill="#9a9a9a"/><rect x="3270.4" y="24" width="1" height="3" fill="#9a9a9a"/></svg>
<div class="t" style="left:-296.1px;width:600px;text-align:center;top:2149.19px;font-size:11px;line-height:11px;color:#d8d8d8;transform:scaleX(0.93);transform-origin:50% 0;">0</div>
<div class="t" style="left:-230.76px;width:600px;text-align:center;top:2149.19px;font-size:11px;line-height:11px;color:#d8d8d8;transform:scaleX(0.93);transform-origin:50% 0;">2</div>
<div class="t" style="left:-165.42px;width:600px;text-align:center;top:2149.19px;font-size:11px;line-height:11px;color:#d8d8d8;transform:scaleX(0.93);transform-origin:50% 0;">4</div>
<div class="t" style="left:-100.07999999999998px;width:600px;text-align:center;top:2149.19px;font-size:11px;line-height:11px;color:#d8d8d8;transform:scaleX(0.93);transform-origin:50% 0;">6</div>
<div class="t" style="left:-34.74000000000001px;width:600px;text-align:center;top:2149.19px;font-size:11px;line-height:11px;color:#d8d8d8;transform:scaleX(0.93);transform-origin:50% 0;">8</div>
<div class="t" style="left:30.600000000000023px;width:600px;text-align:center;top:2149.19px;font-size:11px;line-height:11px;color:#d8d8d8;transform:scaleX(0.93);transform-origin:50% 0;">10</div>
<div class="t" style="left:95.94px;width:600px;text-align:center;top:2149.19px;font-size:11px;line-height:11px;color:#d8d8d8;transform:scaleX(0.93);transform-origin:50% 0;">12</div>
<div class="t" style="left:161.27999999999997px;width:600px;text-align:center;top:2149.19px;font-size:11px;line-height:11px;color:#d8d8d8;transform:scaleX(0.93);transform-origin:50% 0;">14</div>
<div class="t" style="left:226.62px;width:600px;text-align:center;top:2149.19px;font-size:11px;line-height:11px;color:#d8d8d8;transform:scaleX(0.93);transform-origin:50% 0;">16</div>
<div class="t" style="left:291.96000000000004px;width:600px;text-align:center;top:2149.19px;font-size:11px;line-height:11px;color:#d8d8d8;transform:scaleX(0.93);transform-origin:50% 0;">18</div>
<div class="t" style="left:357.30000000000007px;width:600px;text-align:center;top:2149.19px;font-size:11px;line-height:11px;color:#d8d8d8;transform:scaleX(0.93);transform-origin:50% 0;">20</div>
<div class="t" style="left:422.64px;width:600px;text-align:center;top:2149.19px;font-size:11px;line-height:11px;color:#d8d8d8;transform:scaleX(0.93);transform-origin:50% 0;">22</div>
<div class="t" style="left:487.98px;width:600px;text-align:center;top:2149.19px;font-size:11px;line-height:11px;color:#d8d8d8;transform:scaleX(0.93);transform-origin:50% 0;">24</div>
<div class="t" style="left:553.32px;width:600px;text-align:center;top:2149.19px;font-size:11px;line-height:11px;color:#d8d8d8;transform:scaleX(0.93);transform-origin:50% 0;">26</div>
<div class="t" style="left:618.66px;width:600px;text-align:center;top:2149.19px;font-size:11px;line-height:11px;color:#d8d8d8;transform:scaleX(0.93);transform-origin:50% 0;">28</div>
<div class="t" style="left:684.0px;width:600px;text-align:center;top:2149.19px;font-size:11px;line-height:11px;color:#d8d8d8;transform:scaleX(0.93);transform-origin:50% 0;">30</div>
<div class="t" style="left:749.3400000000001px;width:600px;text-align:center;top:2149.19px;font-size:11px;line-height:11px;color:#d8d8d8;transform:scaleX(0.93);transform-origin:50% 0;">32</div>
<div class="t" style="left:814.6800000000001px;width:600px;text-align:center;top:2149.19px;font-size:11px;line-height:11px;color:#d8d8d8;transform:scaleX(0.93);transform-origin:50% 0;">34</div>
<div class="t" style="left:880.0200000000002px;width:600px;text-align:center;top:2149.19px;font-size:11px;line-height:11px;color:#d8d8d8;transform:scaleX(0.93);transform-origin:50% 0;">36</div>
<div class="t" style="left:945.3600000000001px;width:600px;text-align:center;top:2149.19px;font-size:11px;line-height:11px;color:#d8d8d8;transform:scaleX(0.93);transform-origin:50% 0;">38</div>
<div class="t" style="left:1010.7000000000003px;width:600px;text-align:center;top:2149.19px;font-size:11px;line-height:11px;color:#d8d8d8;transform:scaleX(0.93);transform-origin:50% 0;">40</div>
<div class="t" style="left:1076.0400000000002px;width:600px;text-align:center;top:2149.19px;font-size:11px;line-height:11px;color:#d8d8d8;transform:scaleX(0.93);transform-origin:50% 0;">42</div>
<div class="t" style="left:1141.38px;width:600px;text-align:center;top:2149.19px;font-size:11px;line-height:11px;color:#d8d8d8;transform:scaleX(0.93);transform-origin:50% 0;">44</div>
<div class="t" style="left:1206.7200000000003px;width:600px;text-align:center;top:2149.19px;font-size:11px;line-height:11px;color:#d8d8d8;transform:scaleX(0.93);transform-origin:50% 0;">46</div>
<div class="t" style="left:1272.0600000000002px;width:600px;text-align:center;top:2149.19px;font-size:11px;line-height:11px;color:#d8d8d8;transform:scaleX(0.93);transform-origin:50% 0;">48</div>
<div class="t" style="left:1337.4px;width:600px;text-align:center;top:2149.19px;font-size:11px;line-height:11px;color:#d8d8d8;transform:scaleX(0.93);transform-origin:50% 0;">50</div>
<div class="t" style="left:1402.7400000000002px;width:600px;text-align:center;top:2149.19px;font-size:11px;line-height:11px;color:#d8d8d8;transform:scaleX(0.93);transform-origin:50% 0;">52</div>
<div class="t" style="left:1468.0800000000002px;width:600px;text-align:center;top:2149.19px;font-size:11px;line-height:11px;color:#d8d8d8;transform:scaleX(0.93);transform-origin:50% 0;">54</div>
<div class="t" style="left:1533.42px;width:600px;text-align:center;top:2149.19px;font-size:11px;line-height:11px;color:#d8d8d8;transform:scaleX(0.93);transform-origin:50% 0;">56</div>
<div class="t" style="left:1598.7600000000002px;width:600px;text-align:center;top:2149.19px;font-size:11px;line-height:11px;color:#d8d8d8;transform:scaleX(0.93);transform-origin:50% 0;">58</div>
<div class="t" style="left:1664.1000000000001px;width:600px;text-align:center;top:2149.19px;font-size:11px;line-height:11px;color:#d8d8d8;transform:scaleX(0.93);transform-origin:50% 0;">60</div>
<div class="t" style="left:1729.4400000000003px;width:600px;text-align:center;top:2149.19px;font-size:11px;line-height:11px;color:#d8d8d8;transform:scaleX(0.93);transform-origin:50% 0;">62</div>
<div class="t" style="left:1794.7800000000002px;width:600px;text-align:center;top:2149.19px;font-size:11px;line-height:11px;color:#d8d8d8;transform:scaleX(0.93);transform-origin:50% 0;">64</div>
<div class="t" style="left:1860.1200000000003px;width:600px;text-align:center;top:2149.19px;font-size:11px;line-height:11px;color:#d8d8d8;transform:scaleX(0.93);transform-origin:50% 0;">66</div>
<div class="t" style="left:1925.46px;width:600px;text-align:center;top:2149.19px;font-size:11px;line-height:11px;color:#d8d8d8;transform:scaleX(0.93);transform-origin:50% 0;">68</div>
<div class="t" style="left:1990.8000000000002px;width:600px;text-align:center;top:2149.19px;font-size:11px;line-height:11px;color:#d8d8d8;transform:scaleX(0.93);transform-origin:50% 0;">70</div>
<div class="t" style="left:2056.1400000000003px;width:600px;text-align:center;top:2149.19px;font-size:11px;line-height:11px;color:#d8d8d8;transform:scaleX(0.93);transform-origin:50% 0;">72</div>
<div class="t" style="left:2121.48px;width:600px;text-align:center;top:2149.19px;font-size:11px;line-height:11px;color:#d8d8d8;transform:scaleX(0.93);transform-origin:50% 0;">74</div>
<div class="t" style="left:2186.82px;width:600px;text-align:center;top:2149.19px;font-size:11px;line-height:11px;color:#d8d8d8;transform:scaleX(0.93);transform-origin:50% 0;">76</div>
<div class="t" style="left:2252.1600000000003px;width:600px;text-align:center;top:2149.19px;font-size:11px;line-height:11px;color:#d8d8d8;transform:scaleX(0.93);transform-origin:50% 0;">78</div>
<div class="t" style="left:2317.5000000000005px;width:600px;text-align:center;top:2149.19px;font-size:11px;line-height:11px;color:#d8d8d8;transform:scaleX(0.93);transform-origin:50% 0;">80</div>
<div class="t" style="left:2382.84px;width:600px;text-align:center;top:2149.19px;font-size:11px;line-height:11px;color:#d8d8d8;transform:scaleX(0.93);transform-origin:50% 0;">82</div>
<div class="t" style="left:2448.1800000000003px;width:600px;text-align:center;top:2149.19px;font-size:11px;line-height:11px;color:#d8d8d8;transform:scaleX(0.93);transform-origin:50% 0;">84</div>
<div class="t" style="left:2513.5200000000004px;width:600px;text-align:center;top:2149.19px;font-size:11px;line-height:11px;color:#d8d8d8;transform:scaleX(0.93);transform-origin:50% 0;">86</div>
<div class="t" style="left:2578.86px;width:600px;text-align:center;top:2149.19px;font-size:11px;line-height:11px;color:#d8d8d8;transform:scaleX(0.93);transform-origin:50% 0;">88</div>
<div class="t" style="left:2644.2000000000003px;width:600px;text-align:center;top:2149.19px;font-size:11px;line-height:11px;color:#d8d8d8;transform:scaleX(0.93);transform-origin:50% 0;">90</div>
<div class="t" style="left:2709.5400000000004px;width:600px;text-align:center;top:2149.19px;font-size:11px;line-height:11px;color:#d8d8d8;transform:scaleX(0.93);transform-origin:50% 0;">92</div>
<div class="t" style="left:2774.88px;width:600px;text-align:center;top:2149.19px;font-size:11px;line-height:11px;color:#d8d8d8;transform:scaleX(0.93);transform-origin:50% 0;">94</div>
<div class="t" style="left:2840.2200000000003px;width:600px;text-align:center;top:2149.19px;font-size:11px;line-height:11px;color:#d8d8d8;transform:scaleX(0.93);transform-origin:50% 0;">96</div>
<div class="t" style="left:2905.5600000000004px;width:600px;text-align:center;top:2149.19px;font-size:11px;line-height:11px;color:#d8d8d8;transform:scaleX(0.93);transform-origin:50% 0;">98</div>
<div class="t" style="left:2970.9px;width:600px;text-align:center;top:2149.19px;font-size:11px;line-height:11px;color:#d8d8d8;transform:scaleX(0.93);transform-origin:50% 0;">100</div>
<div class="a" style="left:0px;top:2137px;width:7px;height:59px;background:#8f8a28;"></div>
<div class="t" style="left:-1px;top:2149.19px;font-size:11px;line-height:11px;color:#e8e0a0;font-family:'Liberation Sans', sans-serif;">0</div>
<div class="a" style="left:0px;top:2208px;width:3309px;height:22px;background:#474747;"></div>
<div class="a" style="left:2px;top:2211px;width:1px;height:19px;background:#111;"></div>
<div class="t" style="left:8px;top:2219.84px;font-size:12px;line-height:12px;color:#ddd;font-family:'Liberation Sans', sans-serif;transform:scaleX(0.93);transform-origin:0 0;">1 Object Selected</div>
<svg class="a" style="left:0.0px;top:915.5px;" width="4" height="24" viewBox="0 0 4 24"><rect x="0" y="8" width="3" height="8" fill="#777"/></svg>
<svg class="a" style="left:10.0px;top:915.5px;" width="24" height="24" viewBox="0 0 24 24"><rect x="9" y="0" width="7" height="13" rx="3.5" transform="rotate(45 12.5 6.5)" fill="none" stroke="#c9c9c9" stroke-width="2.3"/><rect x="3" y="10" width="7" height="13" rx="3.5" transform="rotate(45 6.5 16.5)" fill="none" stroke="#c9c9c9" stroke-width="2.3"/><path d="M6 9 L9 11 M15 13 L18 15" stroke="#3bbcbc" stroke-width="2"/></svg>
<svg class="a" style="left:41.0px;top:915.5px;" width="24" height="24" viewBox="0 0 24 24"><path d="M2 12 Q7 9 12 12 T22 12 M2 16 Q7 13 12 16 T22 16 M2 20 Q7 17 12 20 T22 20" stroke="#c9c9c9" stroke-width="1.6" fill="none"/><path d="M11 9 L15 4 M15 8 L19 3" stroke="#f2a81a" stroke-width="2.5"/></svg>
<div class="a" style="left:74px;top:918px;width:1.5px;height:20px;background:#151515;"></div>
<div class="a" style="left:77px;top:915px;width:67px;height:19px;background:#5e5e5e;"></div>
<div class="t" style="left:81px;top:918.66px;font-size:12px;line-height:12px;color:#c8c8c8;font-family:'Liberation Sans', sans-serif;transform:scaleX(0.87);transform-origin:0 0;">All</div>
<svg class="a" style="left:132px;top:921.5px;" width="8" height="6" viewBox="0 0 8 6"><path d="M0.5 0.5 H7.5 L4 5Z" fill="#d8d8d8"/></svg>
<div class="a" style="left:147px;top:913.5px;width:30px;height:28px;background:#5a8ad0;border-radius:3px;"></div>
<svg class="a" style="left:150.0px;top:915.5px;" width="24" height="24" viewBox="0 0 24 24"><rect x="4" y="3" width="15" height="15" fill="#ddd" stroke="#888"/><path d="M14 12 L22 18 L18 19 L19 23 L17 23 L16 20 L13 22Z" fill="#f2a81a"/></svg>
<svg class="a" style="left:181.5px;top:915.5px;" width="24" height="24" viewBox="0 0 24 24"><rect x="2" y="3" width="18" height="2.5" fill="#c9c9c9"/><rect x="2" y="7" width="12" height="2.5" fill="#c9c9c9"/><rect x="2" y="11" width="18" height="2.5" fill="#c9c9c9"/><rect x="2" y="15" width="12" height="2.5" fill="#c9c9c9"/><path d="M14 12 L22 18 L18 19 L19 23 L17 23 L16 20 L13 22Z" fill="#f2a81a"/></svg>
<svg class="a" style="left:215.0px;top:915.5px;" width="24" height="24" viewBox="0 0 24 24"><rect x="3" y="3" width="18" height="18" fill="none" stroke="#3bbcbc" stroke-width="2" stroke-dasharray="3 2"/><path d="M20 24 L24 20 V24Z" fill="#ccc"/></svg>
<svg class="a" style="left:246.0px;top:915.5px;" width="24" height="24" viewBox="0 0 24 24"><rect x="3" y="3" width="14" height="18" fill="none" stroke="#ddd" stroke-width="2" stroke-dasharray="3 2"/><rect x="13" y="9" width="9" height="9" fill="#3bbcbc"/></svg>
<div class="a" style="left:277px;top:918px;width:1.5px;height:20px;background:#151515;"></div>
<svg class="a" style="left:284.0px;top:915.5px;" width="24" height="24" viewBox="0 0 24 24"><path d="M12 2 L16 7 H14 V10 H17 V8 L22 12 L17 16 V14 H14 V17 H16 L12 22 L8 17 H10 V14 H7 V16 L2 12 L7 8 V10 H10 V7 H8Z" fill="#ddd"/></svg>
<svg class="a" style="left:316.0px;top:915.5px;" width="24" height="24" viewBox="0 0 24 24"><path d="M19 12 A7 7 0 1 1 15 5.5" stroke="#ddd" stroke-width="2.5" fill="none"/><path d="M12 2 L19 5 L14 10Z" fill="#ddd"/></svg>
<svg class="a" style="left:350.0px;top:915.5px;" width="24" height="24" viewBox="0 0 24 24"><rect x="3" y="3" width="18" height="18" fill="none" stroke="#ddd" stroke-width="1.6" stroke-dasharray="3 2"/><rect x="3" y="11" width="9" height="10" fill="#3bbcbc"/><path d="M14 8 L17 5 L20 8" stroke="#3bbcbc" stroke-width="1.4" fill="none"/><path d="M20 24 L24 20 V24Z" fill="#ccc"/></svg>
<svg class="a" style="left:380.5px;top:915.5px;" width="24" height="24" viewBox="0 0 24 24"><circle cx="10" cy="14" r="8" fill="#ddd"/><circle cx="17" cy="6" r="4.5" fill="#3bbcbc"/><path d="M9 15 L16 8" stroke="#f2a81a" stroke-width="2"/><path d="M20 24 L24 20 V24Z" fill="#ccc"/></svg>
<div class="a" style="left:409px;top:915px;width:68px;height:19px;background:#5e5e5e;"></div>
<div class="t" style="left:413px;top:918.66px;font-size:12px;line-height:12px;color:#c8c8c8;font-family:'Liberation Sans', sans-serif;transform:scaleX(0.87);transform-origin:0 0;">View</div>
<svg class="a" style="left:465px;top:921.5px;" width="8" height="6" viewBox="0 0 8 6"><path d="M0.5 0.5 H7.5 L4 5Z" fill="#d8d8d8"/></svg>
<svg class="a" style="left:483.5px;top:915.5px;" width="24" height="24" viewBox="0 0 24 24"><rect x="2" y="3" width="8" height="14" fill="#ddd"/><rect x="13" y="3" width="9" height="10" fill="#ddd"/><path d="M6 14 V22 M2 18 H10 M17 9 V17 M13 13 H21" stroke="#3bbcbc" stroke-width="2"/><path d="M20 24 L24 20 V24Z" fill="#ccc"/></svg>
<div class="a" style="left:514px;top:918px;width:1.5px;height:20px;background:#151515;"></div>
<svg class="a" style="left:519.5px;top:915.5px;" width="24" height="24" viewBox="0 0 24 24"><path d="M12 4 V22 M3 13 H21" stroke="#ddd" stroke-width="2"/><rect x="10" y="2" width="4" height="4" fill="#3bbcbc"/><rect x="2" y="11" width="3" height="4" fill="#ddd"/><rect x="19" y="11" width="3" height="4" fill="#ddd"/></svg>
<div class="a" style="left:549px;top:913.5px;width:30px;height:28px;background:#5a8ad0;border-radius:3px;"></div>
<svg class="a" style="left:552.0px;top:915.5px;" width="24" height="24" viewBox="0 0 24 24"><rect x="3" y="3" width="18" height="18" rx="3" fill="#ddd" stroke="#888"/><path d="M12 6 L16 11 H13.5 V15 H10.5 V11 H8Z" fill="#333"/></svg>
<div class="a" style="left:584px;top:918px;width:1.5px;height:20px;background:#151515;"></div>
<svg class="a" style="left:590.5px;top:915.5px;" width="24" height="24" viewBox="0 0 24 24"><text x="0" y="20" font-size="18" font-weight="bold" fill="#ddd" font-family="Liberation Sans">3</text><path d="M12 8 A4 4 0 1 1 20 9 L16 14" stroke="#f2a81a" stroke-width="2" fill="none"/><path d="M20 24 L24 20 V24Z" fill="#ccc"/></svg>
<svg class="a" style="left:622.0px;top:915.5px;" width="24" height="24" viewBox="0 0 24 24"><path d="M4 3 V21 H20 M4 12 A9 9 0 0 1 13 21" stroke="#ddd" stroke-width="2" fill="none"/><path d="M12 8 A4 4 0 1 1 20 9 L16 14" stroke="#f2a81a" stroke-width="2" fill="none"/></svg>
<svg class="a" style="left:653.5px;top:915.5px;" width="24" height="24" viewBox="0 0 24 24"><circle cx="6" cy="7" r="3" stroke="#ddd" stroke-width="1.8" fill="none"/><circle cx="17" cy="18" r="3" stroke="#ddd" stroke-width="1.8" fill="none"/><path d="M5 22 L18 3" stroke="#ddd" stroke-width="1.8"/><path d="M12 8 A4 4 0 1 1 20 9 L16 14" stroke="#f2a81a" stroke-width="2" fill="none"/></svg>
<svg class="a" style="left:686.0px;top:915.5px;" width="24" height="24" viewBox="0 0 24 24"><path d="M3 10 L8 3 L13 10Z M3 14 L8 21 L13 14Z" fill="#ddd"/><path d="M12 8 A4 4 0 1 1 20 9 L16 14" stroke="#f2a81a" stroke-width="2" fill="none"/></svg>
<div class="a" style="left:718px;top:918px;width:1.5px;height:20px;background:#151515;"></div>
<svg class="a" style="left:724.5px;top:915.5px;" width="24" height="24" viewBox="0 0 24 24"><text x="0" y="19" font-size="18" fill="#ddd" font-family="Liberation Mono">{</text><text x="9" y="19" font-size="18" fill="#ddd" font-family="Liberation Mono">}</text><path d="M11 13 L19 3" stroke="#f2a81a" stroke-width="2.5"/></svg>
<div class="a" style="left:753px;top:915px;width:117px;height:19px;background:#5e5e5e;"></div>
<div class="t" style="left:757px;top:918.66px;font-size:12px;line-height:12px;color:#c8c8c8;font-family:'Liberation Sans', sans-serif;transform:scaleX(0.87);transform-origin:0 0;">Create Selection Se</div>
<svg class="a" style="left:858px;top:921.5px;" width="8" height="6" viewBox="0 0 8 6"><path d="M0.5 0.5 H7.5 L4 5Z" fill="#d8d8d8"/></svg>
<div class="a" style="left:875.5px;top:918px;width:1.5px;height:20px;background:#151515;"></div>
<svg class="a" style="left:882.0px;top:915.5px;" width="24" height="24" viewBox="0 0 24 24"><path d="M2 4 L9 8 V20 L2 16Z" fill="#ddd"/><path d="M22 4 L15 8 V20 L22 16Z" fill="#3bbcbc"/><path d="M12 2 V22" stroke="#ddd" stroke-width="1.5" stroke-dasharray="2 2"/></svg>
<svg class="a" style="left:915.5px;top:915.5px;" width="24" height="24" viewBox="0 0 24 24"><path d="M3 2 V22" stroke="#3bbcbc" stroke-width="2" stroke-dasharray="3 2"/><rect x="6" y="5" width="10" height="6" fill="#ddd"/><rect x="6" y="13" width="15" height="6" fill="#ddd"/><path d="M20 24 L24 20 V24Z" fill="#ccc"/></svg>
<div class="a" style="left:946px;top:918px;width:1.5px;height:20px;background:#151515;"></div>
<svg class="a" style="left:951.5px;top:915.5px;" width="24" height="24" viewBox="0 0 24 24"><rect x="2" y="2" width="20" height="20" fill="none" stroke="#ddd" stroke-width="2"/><path d="M2 8 H22 M2 13 H22 M2 18 H22 M7 2 V22" stroke="#ddd" stroke-width="1.6"/></svg>
<svg class="a" style="left:983.5px;top:915.5px;" width="24" height="24" viewBox="0 0 24 24"><rect x="2" y="2" width="20" height="20" fill="#ddd"/><path d="M5 10 L12 7 L19 10 L12 13Z M5 14 L12 17 L19 14 M5 18 L12 21 L19 18" stroke="#333" stroke-width="1.5" fill="none"/></svg>
<div class="a" style="left:1015px;top:918px;width:1.5px;height:20px;background:#151515;"></div>
<div class="a" style="left:1019px;top:913.5px;width:29.5px;height:28px;background:#5a8ad0;border-radius:3px;"></div>
<svg class="a" style="left:1022.0px;top:915.5px;" width="24" height="24" viewBox="0 0 24 24"><rect x="2" y="3" width="20" height="18" fill="none" stroke="#ddd" stroke-width="2"/><rect x="2" y="3" width="20" height="4" fill="#ddd"/><rect x="5" y="10" width="5" height="3" fill="#ddd"/><rect x="13" y="10" width="6" height="3" fill="#ddd"/><rect x="5" y="15" width="5" height="3" fill="#ddd"/><rect x="13" y="15" width="6" height="3" fill="#ddd"/></svg>
<svg class="a" style="left:1054.0px;top:915.5px;" width="24" height="24" viewBox="0 0 24 24"><rect x="1" y="3" width="22" height="18" fill="#ddd"/><rect x="1" y="3" width="22" height="4" fill="#888"/><path d="M4 15 Q8 6 12 14 T20 12" stroke="#3bbcbc" stroke-width="2" fill="none"/></svg>
<svg class="a" style="left:1085.5px;top:915.5px;" width="24" height="24" viewBox="0 0 24 24"><rect x="2" y="3" width="20" height="4" fill="#ddd"/><path d="M12 8 V17" stroke="#3bbcbc" stroke-width="2"/><path d="M7 12 L12 17 L17 12" stroke="#3bbcbc" stroke-width="2" fill="none"/><rect x="2" y="19" width="20" height="3" fill="#3bbcbc"/></svg>
<div class="a" style="left:1118px;top:918px;width:1.5px;height:20px;background:#151515;"></div>
<svg class="a" style="left:1124.0px;top:915.5px;" width="24" height="24" viewBox="0 0 24 24"><rect x="1" y="3" width="22" height="18" fill="#ddd"/><rect x="1" y="3" width="22" height="4" fill="#777"/><circle cx="7" cy="14" r="4" fill="#444"/><path d="M13 11 H21 M13 14 H21 M13 17 H21" stroke="#444" stroke-width="1.5"/><path d="M20 24 L24 20 V24Z" fill="#ccc"/></svg>
<div class="a" style="left:1159px;top:913.5px;width:29px;height:28px;background:#5a8ad0;border-radius:3px;"></div>
<svg class="a" style="left:1161.5px;top:915.5px;" width="24" height="24" viewBox="0 0 24 24"><path d="M3 10 Q3 20 12 20 Q21 20 21 10Z" fill="#ddd"/><path d="M10 8 H14" stroke="#ddd" stroke-width="2"/><circle cx="17" cy="16" r="4.5" fill="#f2a81a"/><circle cx="17" cy="16" r="1.8" fill="#5a8ad0"/></svg>
<svg class="a" style="left:1193.5px;top:915.5px;" width="24" height="24" viewBox="0 0 24 24"><rect x="1" y="3" width="22" height="18" fill="#3bbcbc"/><rect x="1" y="3" width="22" height="4" fill="#ddd"/><path d="M5 12 Q5 19 12 19 Q19 19 19 12Z" fill="#ddd"/></svg>
<svg class="a" style="left:1226.0px;top:915.5px;" width="24" height="24" viewBox="0 0 24 24"><path d="M3 10 Q3 20 12 20 Q21 20 21 10Z" fill="#ddd"/><path d="M16 8 L12 15 H16 L13 22" stroke="#3bbcbc" stroke-width="2" fill="none"/><path d="M20 24 L24 20 V24Z" fill="#ccc"/></svg>
<svg class="a" style="left:1258.0px;top:915.5px;" width="24" height="24" viewBox="0 0 24 24"><path d="M3 10 Q3 18 12 18 Q21 18 21 10Z" fill="#ddd"/><path d="M8 21 Q8 16 13 16 Q15 12 19 15 Q23 16 22 21Z" fill="#3bbcbc"/></svg>
<svg class="a" style="left:1290.0px;top:915.5px;" width="24" height="24" viewBox="0 0 24 24"><rect x="2" y="2" width="9" height="9" fill="#ddd"/><rect x="13" y="2" width="9" height="9" fill="#ddd"/><rect x="2" y="13" width="9" height="9" fill="#ddd"/><rect x="13" y="13" width="9" height="9" fill="#ddd"/><path d="M3 10 L6 5 L10 10 M14 10 L17 5 L21 10 M3 21 L6 16 L10 21 M14 21 L17 16 L21 21" stroke="#444" fill="none"/></svg>
<div class="a" style="left:1330px;top:918px;width:3px;height:20px;background-image:radial-gradient(circle,#888 0.6px,transparent 0.8px);background-size:2px 2px;"></div>
<svg class="a" style="left:1340.0px;top:915.5px;" width="24" height="24" viewBox="0 0 24 24"><circle cx="10" cy="10" r="9" fill="#8aa0b0"/><rect x="9" y="11" width="14" height="11" fill="#ddd" stroke="#555"/><path d="M11 14 H21 M11 17 H21" stroke="#3a7ad0"/></svg>
<div class="a" style="left:1372px;top:918px;width:1.5px;height:20px;background:#151515;"></div>
<svg class="a" style="left:1379.5px;top:915.5px;" width="24" height="24" viewBox="0 0 24 24"><defs><radialGradient id="sp1" cx="0.4" cy="0.35"><stop offset="0" stop-color="#eee"/><stop offset="1" stop-color="#333"/></radialGradient></defs><circle cx="12" cy="14" r="7" fill="url(#sp1)"/><path d="M20 24 L24 20 V24Z" fill="#ccc"/></svg>
<svg class="a" style="left:1412.0px;top:915.5px;" width="24" height="24" viewBox="0 0 24 24"><path d="M7 3 L2 7 L5 11 L7 10 V21 H17 V10 L19 11 L22 7 L17 3 Q12 6 7 3Z" fill="#eee"/></svg>
<svg class="a" style="left:1443.5px;top:915.5px;" width="24" height="24" viewBox="0 0 24 24"><path d="M4 8 L18 15" stroke="#aaa" stroke-width="7" stroke-linecap="round"/><path d="M11 12 L18 15" stroke="#2a7ad0" stroke-width="7" stroke-linecap="round"/></svg>
<svg class="a" style="left:1475.5px;top:915.5px;" width="24" height="24" viewBox="0 0 24 24"><path d="M4 12 L10 10 L8 18 M10 10 L16 14 M6 6 L12 8" stroke="#ddd" stroke-width="1" fill="none"/><path d="M18 2 L19 6 L23 7 L19 8 L18 12 L17 8 L13 7 L17 6Z" fill="#f2a81a"/></svg>
<div class="a" style="left:1508px;top:918px;width:1.5px;height:20px;background:#151515;"></div>
<svg class="a" style="left:1516.0px;top:915.5px;" width="24" height="24" viewBox="0 0 24 24"><path d="M4 12 L8 6 H20 V18 H8Z" fill="#ddd"/><rect x="11" y="8" width="2.5" height="8" fill="#3bbcbc"/><rect x="15" y="8" width="2.5" height="8" fill="#3bbcbc"/></svg>
<svg class="a" style="left:1547.0px;top:915.5px;" width="24" height="24" viewBox="0 0 24 24"><path d="M3 4 H16 L21 8 V16 L16 20 H3Z" fill="#aaa"/><path d="M8 7 L15 12 L8 17Z" fill="#444"/></svg>
<div class="t" style="left:1577px;top:921.84px;font-size:12px;line-height:12px;color:#d0d0d0;font-family:'Liberation Sans', sans-serif;transform:scaleX(0.92);transform-origin:0 0;">Realtimer [Pro] sfx Rope C</div>
<div class="a" style="left:1703px;top:913px;width:5px;height:28px;background:#444444;"></div>
<div class="a" style="left:1707px;top:918px;width:3px;height:20px;background-image:radial-gradient(circle,#888 0.6px,transparent 0.8px);background-size:2px 2px;"></div>
<div class="a" style="left:1714px;top:913px;width:157px;height:28.700000000000045px;background:#5b5b5b;"></div>
<div class="t" style="left:1718px;top:921.27px;font-size:12.5px;line-height:12.5px;color:#d0d0d0;font-family:'Liberation Sans', sans-serif;transform:scaleX(0.87);transform-origin:0 0;">C:\Users\CO...ds Max 2020</div>
<svg class="a" style="left:1859px;top:924.35px;" width="8" height="6" viewBox="0 0 8 6"><path d="M0.5 0.5 H7.5 L4 5Z" fill="#d8d8d8"/></svg>
<svg class="a" style="left:1876.0px;top:915.5px;" width="24" height="24" viewBox="0 0 24 24"><path d="M3 4 H13 V18 H3Z" fill="#ccc"/><circle cx="15" cy="17" r="4" fill="#f2a81a"/></svg>
<svg class="a" style="left:1906.0px;top:915.5px;" width="24" height="24" viewBox="0 0 24 24"><path d="M3 4 H13 V18 H3Z" fill="#ccc"/><rect x="10" y="12" width="10" height="8" fill="#f2a81a"/></svg>
<svg class="a" style="left:1934.0px;top:915.5px;" width="24" height="24" viewBox="0 0 24 24"><path d="M4 6 L10 12 L4 18 M11 6 L17 12 L11 18" stroke="#ccc" stroke-width="1.8" fill="none"/></svg>
<div class="a" style="left:1961.6px;top:918px;width:3px;height:20px;background-image:radial-gradient(circle,#888 0.6px,transparent 0.8px);background-size:2px 2px;"></div>
<svg class="a" style="left:1971.0px;top:915.5px;" width="24" height="24" viewBox="0 0 24 24"><rect x="2" y="2" width="20" height="20" fill="#ddd"/><path d="M5 10 L12 7 L19 10 L12 13Z M5 14 L12 17 L19 14 M5 18 L12 21 L19 18" stroke="#333" stroke-width="1.5" fill="none"/></svg>
<div class="a" style="left:1999px;top:914.6px;width:206px;height:22.4px;background:#5b5b5b;"></div>
<svg class="a" style="left:2003px;top:920px;" width="46" height="10" viewBox="0 0 46 10"><path d="M0 5 H10 M14 5 H24" stroke="#888" stroke-width="1.2"/><path d="M32 2 H42 V8 H32Z" fill="#bbb"/></svg>
<div class="a" style="left:2052px;top:919px;width:10px;height:10px;background:#4a8ad8;border:1px solid #222;"></div>
<div class="t" style="left:2065px;top:918.84px;font-size:12px;line-height:12px;color:#ddd;font-family:'Liberation Sans', sans-serif;transform:scaleX(0.93);transform-origin:0 0;">0 (default)</div>
<svg class="a" style="left:2191px;top:923px;" width="8" height="6" viewBox="0 0 8 6"><path d="M0.5 0.5 H7.5 L4 5Z" fill="#ccc"/></svg>
<svg class="a" style="left:2210.0px;top:915.5px;" width="24" height="24" viewBox="0 0 24 24"><path d="M4 12 H14 M9 7 V17" stroke="#ddd" stroke-width="2.5"/><path d="M10 14 L17 11 L23 14 L17 17Z M10 18 L17 21 L23 18" stroke="#f2a81a" stroke-width="1.8" fill="#f2a81a"/></svg>
<svg class="a" style="left:2243.0px;top:915.5px;" width="24" height="24" viewBox="0 0 24 24"><path d="M3 12 L12 8 L21 12 L12 16Z" fill="#3bbcbc"/><path d="M3 16 L12 20 L21 16" stroke="#3bbcbc" stroke-width="2" fill="none"/><path d="M12 2 V10 M9 7 L12 10 L15 7" stroke="#ddd" stroke-width="2" fill="none"/></svg>
<svg class="a" style="left:2275.0px;top:915.5px;" width="24" height="24" viewBox="0 0 24 24"><rect x="3" y="3" width="14" height="14" fill="#ddd"/><path d="M13 12 L21 18 L17 19 L18 23 L16 23 L15 20 L12 22Z" fill="#f2a81a"/></svg>
<svg class="a" style="left:2307.0px;top:915.5px;" width="24" height="24" viewBox="0 0 24 24"><path d="M3 9 L12 5 L21 9 L12 13Z M3 13 L12 17 L21 13 M3 17 L12 21 L21 17" stroke="#3bbcbc" stroke-width="2" fill="none"/><path d="M15 12 L22 18 L18 19 Z" fill="#ddd"/></svg>
<div class="a" style="left:4.6px;top:951px;width:1.5px;height:18px;background:#151515;"></div>
<svg class="a" style="left:12.0px;top:948.0px;" width="24" height="24" viewBox="0 0 24 24"><rect x="2" y="22" width="20" height="1.2" fill="#8a8a8a"/><path d="M4.6 21 C2.6 15 6.7 9 5.2 3" stroke="#d9cc8c" stroke-width="1.4" fill="none"/><path d="M8.8 21 C7.1 15 10.5 9 8.7 3" stroke="#d9cc8c" stroke-width="1.4" fill="none"/><path d="M13.2 21 C11.2 15 15.1 9 12.3 3" stroke="#d9cc8c" stroke-width="1.4" fill="none"/><path d="M16.5 21 C14.5 15 18.6 9 16.4 3" stroke="#d9cc8c" stroke-width="1.4" fill="none"/><rect x="13" y="11" width="9" height="8" fill="#aaa"/><path d="M15 11 V8 A2.5 2.5 0 0 1 20 8 V11" stroke="#aaa" stroke-width="1.6" fill="none"/></svg>
<svg class="a" style="left:44.0px;top:948.0px;" width="24" height="24" viewBox="0 0 24 24"><rect x="2" y="22" width="20" height="1.2" fill="#8a8a8a"/><path d="M5.5 21 C3.3 15 7.6 9 4.6 3" stroke="#d9cc8c" stroke-width="1.4" fill="none"/><path d="M8.6 21 C6.5 15 10.6 9 9.1 3" stroke="#d9cc8c" stroke-width="1.4" fill="none"/><path d="M13.2 21 C11.7 15 14.7 9 13.4 3" stroke="#d9cc8c" stroke-width="1.4" fill="none"/><path d="M17.1 21 C15.3 15 18.9 9 16.4 3" stroke="#d9cc8c" stroke-width="1.4" fill="none"/><path d="M6 21 V12 M3 15 L6 11 L9 15 M12 21 V12 M9 15 L12 11 L15 15 M18 21 V12 M15 15 L18 11 L21 15" stroke="#ccc" stroke-width="1.4" fill="none"/></svg>
<div class="a" style="left:76.5px;top:951px;width:1.5px;height:18px;background:#151515;"></div>
<svg class="a" style="left:84.0px;top:948.0px;" width="24" height="24" viewBox="0 0 24 24"><rect x="2" y="22" width="20" height="1.2" fill="#8a8a8a"/><path d="M5.1 21 C3.4 15 6.7 9 5.2 3" stroke="#d9cc8c" stroke-width="1.4" fill="none"/><path d="M8.7 21 C6.7 15 10.7 9 9.4 3" stroke="#d9cc8c" stroke-width="1.4" fill="none"/><path d="M13.2 21 C11.8 15 14.5 9 13.2 3" stroke="#d9cc8c" stroke-width="1.4" fill="none"/><path d="M16.8 21 C15.4 15 18.3 9 17.7 3" stroke="#d9cc8c" stroke-width="1.4" fill="none"/><path d="M5 21 Q4 10 4 3 M8 21 Q8 10 10 3 M11 21 Q12 12 15 4" stroke="#e0681e" stroke-width="1.6" fill="none"/><circle cx="18" cy="14" r="4.5" fill="none" stroke="#ddd" stroke-width="1.3"/><circle cx="18" cy="14" r="0.8" fill="#ddd"/></svg>
<svg class="a" style="left:116.0px;top:948.0px;" width="24" height="24" viewBox="0 0 24 24"><rect x="2" y="22" width="20" height="1.2" fill="#8a8a8a"/><path d="M5.0 21 C3.2 15 6.7 9 5.8 3" stroke="#d9cc8c" stroke-width="1.4" fill="none"/><path d="M9.0 21 C7.3 15 10.7 9 9.1 3" stroke="#d9cc8c" stroke-width="1.4" fill="none"/><path d="M12.7 21 C11.0 15 14.4 9 12.9 3" stroke="#d9cc8c" stroke-width="1.4" fill="none"/><path d="M17.3 21 C16.0 15 18.6 9 16.9 3" stroke="#d9cc8c" stroke-width="1.4" fill="none"/></svg>
<svg class="a" style="left:148.0px;top:948.0px;" width="24" height="24" viewBox="0 0 24 24"><rect x="2" y="22" width="20" height="1.2" fill="#8a8a8a"/><path d="M5.0 21 C3.1 15 6.8 9 5.3 3" stroke="#d9cc8c" stroke-width="1.4" fill="none"/><path d="M8.6 21 C7.4 15 9.9 9 8.4 3" stroke="#d9cc8c" stroke-width="1.4" fill="none"/><path d="M12.8 21 C10.8 15 14.8 9 13.2 3" stroke="#d9cc8c" stroke-width="1.4" fill="none"/><path d="M17.1 21 C15.3 15 18.9 9 17.4 3" stroke="#d9cc8c" stroke-width="1.4" fill="none"/></svg>
<svg class="a" style="left:180.0px;top:948.0px;" width="24" height="24" viewBox="0 0 24 24"><rect x="2" y="22" width="20" height="1.2" fill="#8a8a8a"/><path d="M4.8 21 C2.9 15 6.6 9 5.1 3" stroke="#d9cc8c" stroke-width="1.4" fill="none"/><path d="M9.3 21 C8.0 15 10.7 9 8.8 3" stroke="#d9cc8c" stroke-width="1.4" fill="none"/><path d="M12.6 21 C11.2 15 14.1 9 13.1 3" stroke="#d9cc8c" stroke-width="1.4" fill="none"/><path d="M16.6 21 C14.9 15 18.4 9 16.1 3" stroke="#d9cc8c" stroke-width="1.4" fill="none"/><path d="M5 21 Q4 10 4 3 M8 21 Q8 10 10 3 M11 21 Q12 12 15 4" stroke="#e0681e" stroke-width="1.6" fill="none"/><circle cx="18" cy="14" r="4.5" fill="none" stroke="#ddd" stroke-width="1.3"/><circle cx="18" cy="14" r="0.8" fill="#ddd"/></svg>
<svg class="a" style="left:212.0px;top:948.0px;" width="24" height="24" viewBox="0 0 24 24"><rect x="2" y="22" width="20" height="1.2" fill="#8a8a8a"/><path d="M4.6 21 C2.7 15 6.5 9 4.9 3" stroke="#d9cc8c" stroke-width="1.4" fill="none"/><path d="M9.4 21 C8.0 15 10.9 9 9.0 3" stroke="#d9cc8c" stroke-width="1.4" fill="none"/><path d="M13.2 21 C11.4 15 15.1 9 12.8 3" stroke="#d9cc8c" stroke-width="1.4" fill="none"/><path d="M17.2 21 C15.6 15 18.8 9 17.7 3" stroke="#d9cc8c" stroke-width="1.4" fill="none"/></svg>
<svg class="a" style="left:244.0px;top:948.0px;" width="24" height="24" viewBox="0 0 24 24"><rect x="2" y="22" width="20" height="1.2" fill="#8a8a8a"/><path d="M5.5 21 C4.3 15 6.7 9 5.9 3" stroke="#d9cc8c" stroke-width="1.4" fill="none"/><path d="M8.7 21 C6.5 15 10.8 9 7.7 3" stroke="#d9cc8c" stroke-width="1.4" fill="none"/><path d="M13.4 21 C11.5 15 15.3 9 14.1 3" stroke="#d9cc8c" stroke-width="1.4" fill="none"/><path d="M17.5 21 C16.1 15 18.9 9 17.2 3" stroke="#d9cc8c" stroke-width="1.4" fill="none"/></svg>
<svg class="a" style="left:276.0px;top:948.0px;" width="24" height="24" viewBox="0 0 24 24"><rect x="2" y="22" width="20" height="1.2" fill="#8a8a8a"/><path d="M4.9 21 C3.2 15 6.5 9 4.7 3" stroke="#d9cc8c" stroke-width="1.4" fill="none"/><path d="M8.9 21 C7.3 15 10.6 9 9.3 3" stroke="#d9cc8c" stroke-width="1.4" fill="none"/><path d="M12.8 21 C10.9 15 14.6 9 11.8 3" stroke="#d9cc8c" stroke-width="1.4" fill="none"/><path d="M16.8 21 C15.3 15 18.3 9 16.1 3" stroke="#d9cc8c" stroke-width="1.4" fill="none"/><path d="M9 13 H16 M13 10 L16 13 L13 16" stroke="#fff" stroke-width="1.8" fill="none"/></svg>
<svg class="a" style="left:308.0px;top:948.0px;" width="24" height="24" viewBox="0 0 24 24"><rect x="2" y="22" width="20" height="1.2" fill="#8a8a8a"/><path d="M5.0 21 C3.0 15 7.0 9 5.9 3" stroke="#d9cc8c" stroke-width="1.4" fill="none"/><path d="M8.8 21 C6.8 15 10.8 9 9.2 3" stroke="#d9cc8c" stroke-width="1.4" fill="none"/><path d="M13.2 21 C11.9 15 14.5 9 12.2 3" stroke="#d9cc8c" stroke-width="1.4" fill="none"/><path d="M16.9 21 C14.9 15 18.8 9 16.4 3" stroke="#d9cc8c" stroke-width="1.4" fill="none"/><path d="M18 5 V18 M15 15 L18 19 L21 15" stroke="#ddd" stroke-width="1.5" fill="none"/></svg>
<svg class="a" style="left:340.0px;top:948.0px;" width="24" height="24" viewBox="0 0 24 24"><rect x="2" y="22" width="20" height="1.2" fill="#8a8a8a"/><path d="M4.7 21 C2.8 15 6.5 9 4.4 3" stroke="#d9cc8c" stroke-width="1.4" fill="none"/><path d="M8.7 21 C7.0 15 10.4 9 8.7 3" stroke="#d9cc8c" stroke-width="1.4" fill="none"/><path d="M13.0 21 C11.3 15 14.6 9 12.5 3" stroke="#d9cc8c" stroke-width="1.4" fill="none"/><path d="M16.8 21 C14.9 15 18.6 9 16.4 3" stroke="#d9cc8c" stroke-width="1.4" fill="none"/></svg>
<svg class="a" style="left:372.0px;top:948.0px;" width="24" height="24" viewBox="0 0 24 24"><rect x="2" y="22" width="20" height="1.2" fill="#8a8a8a"/><path d="M5.2 21 C3.2 15 7.2 9 5.2 3" stroke="#d9cc8c" stroke-width="1.4" fill="none"/><path d="M9.0 21 C7.4 15 10.6 9 10.0 3" stroke="#d9cc8c" stroke-width="1.4" fill="none"/><path d="M12.8 21 C11.4 15 14.1 9 12.3 3" stroke="#d9cc8c" stroke-width="1.4" fill="none"/><path d="M16.8 21 C15.2 15 18.3 9 16.3 3" stroke="#d9cc8c" stroke-width="1.4" fill="none"/><path d="M9 13 H16 M13 10 L16 13 L13 16" stroke="#fff" stroke-width="1.8" fill="none"/></svg>
<svg class="a" style="left:404.0px;top:948.0px;" width="24" height="24" viewBox="0 0 24 24"><rect x="2" y="22" width="20" height="1.2" fill="#8a8a8a"/><path d="M5.4 21 C3.5 15 7.3 9 5.9 3" stroke="#d9cc8c" stroke-width="1.4" fill="none"/><path d="M9.4 21 C7.9 15 10.9 9 9.7 3" stroke="#d9cc8c" stroke-width="1.4" fill="none"/><path d="M13.4 21 C11.3 15 15.5 9 13.6 3" stroke="#d9cc8c" stroke-width="1.4" fill="none"/><path d="M16.7 21 C15.1 15 18.3 9 17.7 3" stroke="#d9cc8c" stroke-width="1.4" fill="none"/><path d="M14 20 V4 M11 7 L14 3 L17 7" stroke="#ccc" stroke-width="1.5" fill="none"/></svg>
<svg class="a" style="left:436.0px;top:948.0px;" width="24" height="24" viewBox="0 0 24 24"><rect x="2" y="22" width="20" height="1.2" fill="#8a8a8a"/><path d="M4.7 21 C2.8 15 6.6 9 4.9 3" stroke="#d9cc8c" stroke-width="1.4" fill="none"/><path d="M9.0 21 C7.6 15 10.4 9 9.6 3" stroke="#d9cc8c" stroke-width="1.4" fill="none"/><path d="M13.3 21 C11.6 15 15.0 9 13.3 3" stroke="#d9cc8c" stroke-width="1.4" fill="none"/><path d="M16.7 21 C15.5 15 17.9 9 16.5 3" stroke="#d9cc8c" stroke-width="1.4" fill="none"/><path d="M9 13 H16 M13 10 L16 13 L13 16" stroke="#fff" stroke-width="1.8" fill="none"/></svg>
<svg class="a" style="left:468.0px;top:948.0px;" width="24" height="24" viewBox="0 0 24 24"><rect x="2" y="22" width="20" height="1.2" fill="#8a8a8a"/><path d="M5.5 21 C4.1 15 6.8 9 4.5 3" stroke="#d9cc8c" stroke-width="1.4" fill="none"/><path d="M9.5 21 C8.1 15 10.9 9 8.7 3" stroke="#d9cc8c" stroke-width="1.4" fill="none"/><path d="M13.2 21 C11.6 15 14.7 9 13.9 3" stroke="#d9cc8c" stroke-width="1.4" fill="none"/><path d="M16.7 21 C14.6 15 18.9 9 16.4 3" stroke="#d9cc8c" stroke-width="1.4" fill="none"/><path d="M2 16 L12 11 L22 16 L12 22Z" fill="#9a9a9a"/></svg>
<div class="a" style="left:499px;top:951px;width:1.5px;height:18px;background:#151515;"></div>
<svg class="a" style="left:505.0px;top:948.0px;" width="24" height="24" viewBox="0 0 24 24"><rect x="2" y="22" width="20" height="1.2" fill="#8a8a8a"/><path d="M5.0 21 C2.9 15 7.0 9 4.0 3" stroke="#d9cc8c" stroke-width="1.4" fill="none"/><path d="M8.8 21 C6.6 15 10.9 9 9.1 3" stroke="#d9cc8c" stroke-width="1.4" fill="none"/><path d="M12.6 21 C11.1 15 14.2 9 13.4 3" stroke="#d9cc8c" stroke-width="1.4" fill="none"/><path d="M16.9 21 C15.7 15 18.2 9 17.7 3" stroke="#d9cc8c" stroke-width="1.4" fill="none"/><rect x="2" y="11" width="10" height="10" fill="#ddd"/><circle cx="5" cy="15" r="1.5" fill="#222"/><circle cx="9" cy="18" r="1.5" fill="#222"/></svg>
<svg class="a" style="left:537.0px;top:948.0px;" width="24" height="24" viewBox="0 0 24 24"><rect x="2" y="22" width="20" height="1.2" fill="#8a8a8a"/><path d="M12 21 L5 8 M12 21 L9 7 M12 21 L15 7 M12 21 L19 8" stroke="#c0581a" stroke-width="1.6"/><path d="M4 6 Q12 0 20 6" stroke="#ddd" stroke-width="1.6" fill="none"/></svg>
<svg class="a" style="left:570.0px;top:948.0px;" width="24" height="24" viewBox="0 0 24 24"><rect x="2" y="22" width="20" height="1.2" fill="#8a8a8a"/><path d="M5.1 21 C3.9 15 6.4 9 4.7 3" stroke="#d9cc8c" stroke-width="1.4" fill="none"/><path d="M8.7 21 C6.8 15 10.7 9 9.1 3" stroke="#d9cc8c" stroke-width="1.4" fill="none"/><path d="M13.4 21 C12.1 15 14.7 9 13.2 3" stroke="#d9cc8c" stroke-width="1.4" fill="none"/><path d="M16.5 21 C15.1 15 17.9 9 16.5 3" stroke="#d9cc8c" stroke-width="1.4" fill="none"/><circle cx="12" cy="8" r="6" fill="#ccc"/></svg>
<svg class="a" style="left:602.0px;top:948.0px;" width="24" height="24" viewBox="0 0 24 24"><rect x="2" y="22" width="20" height="1.2" fill="#8a8a8a"/><path d="M4.5 21 C2.6 15 6.4 9 3.8 3" stroke="#d9cc8c" stroke-width="1.4" fill="none"/><path d="M9.0 21 C7.1 15 10.8 9 9.5 3" stroke="#d9cc8c" stroke-width="1.4" fill="none"/><path d="M13.0 21 C11.3 15 14.7 9 12.0 3" stroke="#d9cc8c" stroke-width="1.4" fill="none"/><path d="M16.9 21 C15.4 15 18.5 9 17.6 3" stroke="#d9cc8c" stroke-width="1.4" fill="none"/><path d="M11 9 H16 L17 11 H22 V18 H11Z" fill="#ddd"/></svg>
<svg class="a" style="left:633.0px;top:948.0px;" width="24" height="24" viewBox="0 0 24 24"><rect x="2" y="22" width="20" height="1.2" fill="#8a8a8a"/><path d="M4.9 21 C3.2 15 6.7 9 5.6 3" stroke="#d9cc8c" stroke-width="1.4" fill="none"/><path d="M8.7 21 C7.3 15 10.1 9 7.7 3" stroke="#d9cc8c" stroke-width="1.4" fill="none"/><path d="M12.6 21 C11.4 15 13.8 9 11.9 3" stroke="#d9cc8c" stroke-width="1.4" fill="none"/><path d="M17.0 21 C14.8 15 19.2 9 17.4 3" stroke="#d9cc8c" stroke-width="1.4" fill="none"/><path d="M4 14 L16 19 L20 15 L8 10Z" fill="#aaa"/></svg>
<div class="a" style="left:665px;top:951px;width:1.5px;height:18px;background:#151515;"></div>
<svg class="a" style="left:672.0px;top:948.0px;" width="24" height="24" viewBox="0 0 24 24"><rect x="2" y="22" width="20" height="1.2" fill="#8a8a8a"/><path d="M5.0 21 C3.5 15 6.5 9 5.3 3" stroke="#d9cc8c" stroke-width="1.4" fill="none"/><path d="M8.7 21 C7.1 15 10.4 9 9.7 3" stroke="#d9cc8c" stroke-width="1.4" fill="none"/><path d="M12.6 21 C11.1 15 14.1 9 12.9 3" stroke="#d9cc8c" stroke-width="1.4" fill="none"/><path d="M16.6 21 C15.2 15 17.9 9 17.2 3" stroke="#d9cc8c" stroke-width="1.4" fill="none"/><rect x="3" y="3" width="7" height="18" fill="#b03030"/><path d="M3 8 H10 M3 13 H10 M6.5 3 V21" stroke="#551" stroke-width="0.8"/><path d="M11 12 H16 M14 10 L16 12 L14 14" stroke="#fff" stroke-width="1.6" fill="none"/></svg>
<svg class="a" style="left:704.0px;top:948.0px;" width="24" height="24" viewBox="0 0 24 24"><path d="M3 5 H21 M3 9 H21 M3 13 H21 M3 17 H21 M6 3 V20 M10 3 V20 M14 3 V20 M18 3 V20" stroke="#d9c060" stroke-width="1.8"/></svg>
<svg class="a" style="left:736.5px;top:948.0px;" width="24" height="24" viewBox="0 0 24 24"><path d="M3 7 H21 M3 15 H21 M8 3 V21 M16 3 V21" stroke="#5a9a6a" stroke-width="1.2"/><circle cx="8" cy="7" r="1.5" fill="#6c6"/><circle cx="16" cy="15" r="1.5" fill="#6c6"/></svg>
<svg class="a" style="left:768.0px;top:948.0px;" width="24" height="24" viewBox="0 0 24 24"><path d="M3 21 Q10 16 12 11 T21 3" stroke="#e0681e" stroke-width="4" stroke-dasharray="3 1" fill="none"/><rect x="2" y="22" width="20" height="1.2" fill="#8a8a8a"/></svg>
<div class="a" style="left:800px;top:951px;width:1.5px;height:18px;background:#151515;"></div>
<svg class="a" style="left:806.0px;top:948.0px;" width="24" height="24" viewBox="0 0 24 24"><rect x="2" y="22" width="20" height="1.2" fill="#8a8a8a"/><path d="M4.8 21 C3.0 15 6.6 9 4.3 3" stroke="#d9cc8c" stroke-width="1.4" fill="none"/><path d="M9.3 21 C7.6 15 11.0 9 9.0 3" stroke="#d9cc8c" stroke-width="1.4" fill="none"/><path d="M13.4 21 C11.4 15 15.4 9 14.1 3" stroke="#d9cc8c" stroke-width="1.4" fill="none"/><path d="M17.2 21 C15.8 15 18.6 9 16.9 3" stroke="#d9cc8c" stroke-width="1.4" fill="none"/><path d="M4 20 Q6 10 5 3 M10 20 Q12 10 10 3" stroke="#e0681e" stroke-width="1.5" stroke-dasharray="2 1.5" fill="none"/><path d="M9 12 H15 M13 10 L15 12 L13 14" stroke="#fff" stroke-width="1.6" fill="none"/></svg>
<svg class="a" style="left:838.0px;top:948.0px;" width="24" height="24" viewBox="0 0 24 24"><rect x="2" y="22" width="20" height="1.2" fill="#8a8a8a"/><path d="M5.0 21 C3.2 15 6.8 9 5.6 3" stroke="#d9cc8c" stroke-width="1.4" fill="none"/><path d="M8.8 21 C7.3 15 10.3 9 9.2 3" stroke="#d9cc8c" stroke-width="1.4" fill="none"/><path d="M13.0 21 C11.4 15 14.5 9 12.8 3" stroke="#d9cc8c" stroke-width="1.4" fill="none"/><path d="M16.8 21 C15.5 15 18.2 9 17.1 3" stroke="#d9cc8c" stroke-width="1.4" fill="none"/><path d="M5 20 Q6 10 5 3" stroke="#e0681e" stroke-width="1.5" stroke-dasharray="2 1.5" fill="none"/><path d="M8 12 H14 M12 10 L14 12 L12 14" stroke="#fff" stroke-width="1.6" fill="none"/></svg>
<svg class="a" style="left:870.5px;top:948.0px;" width="24" height="24" viewBox="0 0 24 24"><rect x="2" y="22" width="20" height="1.2" fill="#8a8a8a"/><path d="M5.4 21 C4.1 15 6.8 9 6.4 3" stroke="#d9cc8c" stroke-width="1.4" fill="none"/><path d="M8.7 21 C7.1 15 10.4 9 9.5 3" stroke="#d9cc8c" stroke-width="1.4" fill="none"/><path d="M12.9 21 C11.1 15 14.6 9 12.2 3" stroke="#d9cc8c" stroke-width="1.4" fill="none"/><path d="M17.5 21 C15.3 15 19.6 9 16.8 3" stroke="#d9cc8c" stroke-width="1.4" fill="none"/><rect x="12" y="3" width="9" height="18" fill="#b03030"/><path d="M12 8 H21 M12 13 H21 M16.5 3 V21" stroke="#551" stroke-width="0.8"/><path d="M7 12 H12 M10 10 L12 12 L10 14" stroke="#fff" stroke-width="1.6" fill="none"/></svg>
<svg class="a" style="left:902.5px;top:948.0px;" width="24" height="24" viewBox="0 0 24 24"><path d="M3 16 L12 11 L21 16 L12 21Z" fill="#888"/><path d="M6 14 V6 H18 V14 M6 6 L12 3 L18 6" stroke="#aaa" stroke-width="2" fill="none"/></svg>
<div class="a" style="left:933.6px;top:951px;width:1.5px;height:18px;background:#151515;"></div>
<svg class="a" style="left:940.0px;top:948.0px;" width="24" height="24" viewBox="0 0 24 24"><rect x="2" y="22" width="20" height="1.2" fill="#8a8a8a"/><path d="M5 21 V6 M9 21 V4 M13 21 V5 M17 21 V7" stroke="#e0681e" stroke-width="1.6" stroke-dasharray="2 1.5"/></svg>
<svg class="a" style="left:972.5px;top:948.0px;" width="24" height="24" viewBox="0 0 24 24"><rect x="2" y="22" width="20" height="1.2" fill="#8a8a8a"/><path d="M4.9 21 C3.5 15 6.4 9 5.8 3" stroke="#d9cc8c" stroke-width="1.4" fill="none"/><path d="M9.0 21 C7.7 15 10.3 9 9.5 3" stroke="#d9cc8c" stroke-width="1.4" fill="none"/><path d="M12.6 21 C11.2 15 14.0 9 11.7 3" stroke="#d9cc8c" stroke-width="1.4" fill="none"/><path d="M17.1 21 C15.1 15 19.2 9 17.4 3" stroke="#d9cc8c" stroke-width="1.4" fill="none"/><rect x="3" y="3" width="7" height="18" fill="#b03030"/><path d="M3 8 H10 M3 13 H10 M6.5 3 V21" stroke="#551" stroke-width="0.8"/><path d="M11 12 H16 M14 10 L16 12 L14 14" stroke="#fff" stroke-width="1.6" fill="none"/><path d="M18 21 V5" stroke="#e0681e" stroke-width="1.6" stroke-dasharray="2 1.5"/></svg>
<svg class="a" style="left:1005.0px;top:948.0px;" width="24" height="24" viewBox="0 0 24 24"><path d="M3 18 Q12 22 21 16" stroke="#8a9a5a" stroke-width="1.2" fill="none"/><path d="M5 18 V5 M11 20 V7 M17 18 V5" stroke="#e0681e" stroke-width="1.5" stroke-dasharray="2 1.5"/></svg>
<svg class="a" style="left:1036.5px;top:948.0px;" width="24" height="24" viewBox="0 0 24 24"><rect x="2" y="22" width="20" height="1.2" fill="#8a8a8a"/><path d="M5.0 21 C3.1 15 6.8 9 4.8 3" stroke="#d9cc8c" stroke-width="1.4" fill="none"/><path d="M9.4 21 C8.2 15 10.6 9 10.4 3" stroke="#d9cc8c" stroke-width="1.4" fill="none"/><path d="M13.2 21 C11.2 15 15.2 9 13.8 3" stroke="#d9cc8c" stroke-width="1.4" fill="none"/><path d="M16.7 21 C14.7 15 18.7 9 17.0 3" stroke="#d9cc8c" stroke-width="1.4" fill="none"/><path d="M12 21 Q14 12 20 4 M14 13 Q18 10 22 8 M13 16 Q10 10 8 6" stroke="#d9cc8c" stroke-width="1.3" fill="none"/><path d="M3 12 H9 M7 10 L9 12 L7 14" stroke="#fff" stroke-width="1.6" fill="none"/></svg>
<div class="a" style="left:1068.6px;top:951px;width:3px;height:18px;background-image:radial-gradient(circle,#888 0.6px,transparent 0.8px);background-size:2px 2px;"></div>
<div class="a" style="left:1078px;top:948px;width:24px;height:24px;background:#e08a30;border:1px solid #eee;"></div>
<div class="t" style="left:1080px;top:955.15px;font-size:14px;line-height:14px;color:#fff;font-weight:bold;font-family:'Liberation Sans', sans-serif;transform:scaleX(0.9);transform-origin:0 0;">FP</div>
<svg class="a" style="left:1110.0px;top:948.0px;" width="24" height="24" viewBox="0 0 24 24"><path d="M7 2 L1 14 H4 L1 20 H13 L10 14 H13Z" fill="#2ca02c"/><path d="M16 5 L11 15 H13 L10 21 H23 L20 15 H22Z" fill="#2ca02c"/></svg>
<svg class="a" style="left:1142.0px;top:948.0px;" width="24" height="24" viewBox="0 0 24 24"><path d="M4 20 L16 6 M20 20 L8 6" stroke="#ddd" stroke-width="2.2"/><path d="M4 4 L10 8 M14 3 L20 4" stroke="#c8483a" stroke-width="2"/></svg>
<svg class="a" style="left:1174.0px;top:948.0px;" width="24" height="24" viewBox="0 0 24 24"><rect x="1" y="2" width="22" height="21" fill="#eee"/><path d="M4 6 H20 M4 10 H20 M4 14 H20 M4 18 H20" stroke="#888" stroke-width="2"/><path d="M4 6 H7 M4 10 H7 M4 14 H7 M4 18 H7" stroke="#3c3" stroke-width="2"/></svg>
<div class="a" style="left:1206px;top:951px;width:3px;height:18px;background-image:radial-gradient(circle,#888 0.6px,transparent 0.8px);background-size:2px 2px;"></div>
<div class="a" style="left:1216px;top:948px;width:24px;height:24px;background:#3a7ac0;border:1px solid #eee;"></div>
<div class="t" style="left:1218px;top:955.15px;font-size:14px;line-height:14px;color:#fff;font-weight:bold;font-family:'Liberation Sans', sans-serif;transform:scaleX(0.9);transform-origin:0 0;">Rc</div>
<svg class="a" style="left:1248.0px;top:948.0px;" width="24" height="24" viewBox="0 0 24 24"><path d="M4 20 L16 6 M20 20 L8 6" stroke="#ddd" stroke-width="2.2"/><path d="M4 4 L10 8 M14 3 L20 4" stroke="#c8483a" stroke-width="2"/></svg>
<svg class="a" style="left:1280.0px;top:948.0px;" width="24" height="24" viewBox="0 0 24 24"><rect x="1" y="2" width="22" height="21" fill="#eee"/><path d="M4 6 H20 M4 10 H20 M4 14 H20 M4 18 H20" stroke="#888" stroke-width="2"/><path d="M4 6 H7 M4 10 H7 M4 14 H7 M4 18 H7" stroke="#3c3" stroke-width="2"/></svg>
<div class="a" style="left:0px;top:1024px;width:2709px;height:1084px;background:#b3b3b3;"></div>
<div class="a" style="left:2709px;top:1022px;width:2px;height:1088px;background:#7d6a2a;"></div>
<div class="a" style="left:0px;top:2107px;width:2711px;height:2px;background:#7d6a2a;"></div>
<div class="t" style="left:2px;top:1032.84px;font-size:12px;line-height:12px;color:#505050;font-family:'Liberation Sans', sans-serif;text-shadow:0 0 1px #e8e8e8,0 0 1px #e8e8e8;white-space:pre;transform:scaleX(0.92);transform-origin:0 0;">[Perspective ] [Standard ] [Default Shading ]</div>
<div class="a" style="left:440px;top:1060px;width:12px;height:918px;background:linear-gradient(90deg,rgba(0,0,0,0.22),rgba(0,0,0,0));"></div>
<div class="a" style="left:0px;top:1973px;width:446px;height:10px;background:linear-gradient(180deg,rgba(0,0,0,0.2),rgba(0,0,0,0));"></div>
<div class="a" style="left:0px;top:1024px;width:2709px;height:1083px;overflow:hidden;"><svg style="position:absolute;left:0;top:0" width="2709" height="1083" viewBox="0 0 2709 1083"><defs><radialGradient id="sph" cx="0.55" cy="0.4" r="0.6"><stop offset="0" stop-color="#c8e048"/><stop offset="0.45" stop-color="#8aa020"/><stop offset="1" stop-color="#1a1e04"/></radialGradient></defs><line x1="1543.4" y1="716.1" x2="1611.6" y2="815.1" stroke="#000000" stroke-width="5.9"/><line x1="1508.1" y1="755.0" x2="1508.9" y2="847.0" stroke="#57671a" stroke-width="3.4"/><line x1="1538.3" y1="748.8" x2="1571.7" y2="841.1" stroke="#000000" stroke-width="3.0"/><line x1="1489.8" y1="753.5" x2="1469.0" y2="859.7" stroke="#6f8118" stroke-width="5.3"/><line x1="1545.9" y1="746.1" x2="1598.4" y2="858.3" stroke="#000000" stroke-width="3.2"/><line x1="1570.3" y1="718.7" x2="1702.2" y2="833.9" stroke="#000000" stroke-width="6.7"/><line x1="1486.5" y1="752.1" x2="1450.0" y2="905.9" stroke="#6f8118" stroke-width="3.2"/><line x1="1448.1" y1="724.7" x2="1322.0" y2="853.8" stroke="#66781a" stroke-width="6.1"/><line x1="1542.5" y1="747.3" x2="1611.9" y2="913.2" stroke="#000000" stroke-width="4.1"/><line x1="1438.5" y1="718.0" x2="1292.9" y2="832.2" stroke="#6f8118" stroke-width="6.5"/><line x1="1439.6" y1="719.8" x2="1302.5" y2="832.9" stroke="#6f8118" stroke-width="5.4"/><line x1="1563.5" y1="741.0" x2="1672.9" y2="891.8" stroke="#000000" stroke-width="5.9"/><line x1="1457.9" y1="742.0" x2="1355.0" y2="904.5" stroke="#57671a" stroke-width="5.1"/><line x1="1433.3" y1="719.1" x2="1287.4" y2="827.6" stroke="#57671a" stroke-width="4.8"/><line x1="1593.0" y1="712.5" x2="1762.4" y2="809.1" stroke="#000000" stroke-width="4.7"/><line x1="1560.7" y1="747.5" x2="1672.0" y2="922.6" stroke="#000000" stroke-width="6.1"/><line x1="1492.1" y1="761.2" x2="1459.3" y2="967.7" stroke="#6f8118" stroke-width="4.9"/><line x1="1576.9" y1="737.2" x2="1726.0" y2="894.6" stroke="#000000" stroke-width="6.8"/><line x1="1528.0" y1="762.9" x2="1569.2" y2="961.5" stroke="#000000" stroke-width="4.8"/><line x1="1427.7" y1="720.9" x2="1256.7" y2="843.1" stroke="#6f8118" stroke-width="5.0"/><line x1="1417.9" y1="705.3" x2="1233.1" y2="790.7" stroke="#3e4a10" stroke-width="6.6"/><line x1="1537.6" y1="763.1" x2="1597.5" y2="961.1" stroke="#000000" stroke-width="4.2"/><line x1="1444.6" y1="743.5" x2="1311.0" y2="912.6" stroke="#57671a" stroke-width="4.4"/><line x1="1421.7" y1="718.6" x2="1248.3" y2="829.1" stroke="#6f8118" stroke-width="6.7"/><line x1="1442.1" y1="743.2" x2="1302.1" y2="912.9" stroke="#66781a" stroke-width="5.8"/><line x1="1460.6" y1="756.4" x2="1358.4" y2="957.9" stroke="#6f8118" stroke-width="6.7"/><line x1="1456.1" y1="755.6" x2="1349.3" y2="946.2" stroke="#6f8118" stroke-width="4.5"/><line x1="1489.0" y1="769.7" x2="1448.5" y2="1000.7" stroke="#57671a" stroke-width="2.7"/><line x1="1550.1" y1="764.2" x2="1640.7" y2="978.4" stroke="#000000" stroke-width="4.2"/><line x1="1440.5" y1="746.9" x2="1292.8" y2="930.0" stroke="#6f8118" stroke-width="4.5"/><line x1="1578.7" y1="748.8" x2="1728.5" y2="927.5" stroke="#000000" stroke-width="7.6"/><line x1="1417.7" y1="724.0" x2="1227.8" y2="851.0" stroke="#3e4a10" stroke-width="6.2"/><line x1="1437.2" y1="748.8" x2="1295.9" y2="919.1" stroke="#6f8118" stroke-width="4.8"/><line x1="1581.7" y1="750.4" x2="1744.6" y2="940.7" stroke="#000000" stroke-width="5.4"/><line x1="1501.5" y1="776.5" x2="1488.9" y2="1010.5" stroke="#57671a" stroke-width="4.2"/><line x1="1575.1" y1="756.6" x2="1723.0" y2="960.0" stroke="#000000" stroke-width="7.1"/><line x1="1427.3" y1="743.3" x2="1257.6" y2="911.1" stroke="#57671a" stroke-width="5.8"/><line x1="1479.9" y1="775.4" x2="1423.1" y2="1004.3" stroke="#6f8118" stroke-width="5.3"/><line x1="1496.3" y1="779.3" x2="1473.3" y2="1013.2" stroke="#6f8118" stroke-width="3.0"/><line x1="1460.3" y1="768.9" x2="1357.3" y2="997.7" stroke="#6f8118" stroke-width="2.8"/><line x1="1410.2" y1="723.3" x2="1199.2" y2="852.0" stroke="#6f8118" stroke-width="7.5"/><line x1="1457.8" y1="768.2" x2="1351.3" y2="991.4" stroke="#6f8118" stroke-width="5.7"/><line x1="1616.5" y1="712.9" x2="1844.2" y2="815.5" stroke="#000000" stroke-width="7.2"/><line x1="1546.3" y1="775.7" x2="1632.5" y2="1024.6" stroke="#000000" stroke-width="3.7"/><line x1="1460.1" y1="770.4" x2="1359.5" y2="996.3" stroke="#66781a" stroke-width="3.9"/><line x1="1512.1" y1="781.8" x2="1522.0" y2="1041.1" stroke="#000000" stroke-width="4.6"/><line x1="1481.9" y1="778.3" x2="1425.0" y2="1030.7" stroke="#6f8118" stroke-width="5.5"/><line x1="1440.4" y1="758.9" x2="1300.1" y2="957.0" stroke="#66781a" stroke-width="5.5"/><line x1="1456.0" y1="769.3" x2="1342.1" y2="1001.7" stroke="#6f8118" stroke-width="5.5"/><line x1="1444.3" y1="762.9" x2="1307.0" y2="977.5" stroke="#6f8118" stroke-width="4.9"/><line x1="1454.1" y1="770.0" x2="1344.0" y2="988.4" stroke="#6f8118" stroke-width="7.0"/><line x1="1399.2" y1="712.6" x2="1168.5" y2="816.3" stroke="#6f8118" stroke-width="7.0"/><line x1="1530.2" y1="784.4" x2="1576.9" y2="1033.5" stroke="#080804" stroke-width="5.6"/><line x1="1393.3" y1="704.5" x2="1142.5" y2="793.6" stroke="#57671a" stroke-width="6.7"/><line x1="1422.4" y1="753.3" x2="1228.8" y2="956.4" stroke="#66781a" stroke-width="7.8"/><line x1="1444.2" y1="770.6" x2="1304.5" y2="1005.5" stroke="#6f8118" stroke-width="7.1"/><line x1="1575.6" y1="771.5" x2="1726.8" y2="1011.1" stroke="#000000" stroke-width="6.6"/><line x1="1569.8" y1="774.9" x2="1706.9" y2="1019.9" stroke="#000000" stroke-width="6.6"/><line x1="1563.5" y1="778.6" x2="1681.6" y2="1021.3" stroke="#080804" stroke-width="5.1"/><line x1="1595.3" y1="758.8" x2="1783.1" y2="962.3" stroke="#000000" stroke-width="5.5"/><line x1="1488.4" y1="790.4" x2="1447.7" y2="1057.9" stroke="#6f8118" stroke-width="2.7"/><line x1="1617.6" y1="736.9" x2="1860.4" y2="898.4" stroke="#000000" stroke-width="6.7"/><line x1="1394.6" y1="723.4" x2="1133.3" y2="860.9" stroke="#6f8118" stroke-width="5.0"/><line x1="1635.0" y1="700.3" x2="1909.8" y2="778.9" stroke="#000000" stroke-width="7.9"/><line x1="1636.1" y1="696.5" x2="1923.0" y2="769.5" stroke="#000000" stroke-width="5.1"/><line x1="1402.8" y1="738.3" x2="1179.4" y2="896.8" stroke="#6f8118" stroke-width="7.2"/><line x1="1452.6" y1="782.1" x2="1333.3" y2="1037.6" stroke="#66781a" stroke-width="5.2"/><line x1="1426.8" y1="766.0" x2="1240.7" y2="1000.7" stroke="#66781a" stroke-width="7.0"/><line x1="1394.8" y1="728.3" x2="1154.0" y2="865.5" stroke="#66781a" stroke-width="6.8"/><line x1="1610.2" y1="750.9" x2="1839.9" y2="946.0" stroke="#000000" stroke-width="6.2"/><line x1="1479.6" y1="793.2" x2="1416.2" y2="1084.6" stroke="#66781a" stroke-width="5.1"/><line x1="1453.8" y1="784.2" x2="1338.9" y2="1040.3" stroke="#6f8118" stroke-width="3.3"/><line x1="1534.2" y1="794.9" x2="1591.9" y2="1080.1" stroke="#000000" stroke-width="4.2"/><line x1="1565.0" y1="786.0" x2="1693.5" y2="1060.3" stroke="#000000" stroke-width="4.2"/><line x1="1523.8" y1="797.6" x2="1559.9" y2="1098.3" stroke="#000000" stroke-width="3.3"/><line x1="1542.9" y1="794.3" x2="1619.9" y2="1080.3" stroke="#000000" stroke-width="4.2"/><line x1="1617.8" y1="744.0" x2="1875.6" y2="931.9" stroke="#000000" stroke-width="7.3"/><line x1="1378.4" y1="688.9" x2="1094.2" y2="743.9" stroke="#57671a" stroke-width="4.8"/><line x1="1451.4" y1="785.6" x2="1330.0" y2="1047.3" stroke="#6f8118" stroke-width="5.5"/><line x1="1465.4" y1="791.7" x2="1372.4" y2="1071.9" stroke="#66781a" stroke-width="3.1"/><line x1="1536.8" y1="797.0" x2="1604.1" y2="1104.6" stroke="#000000" stroke-width="5.5"/><line x1="1473.9" y1="794.7" x2="1398.5" y2="1086.1" stroke="#6f8118" stroke-width="3.3"/><line x1="1612.3" y1="753.2" x2="1856.3" y2="961.7" stroke="#000000" stroke-width="6.8"/><line x1="1640.1" y1="701.9" x2="1943.6" y2="789.1" stroke="#000000" stroke-width="5.2"/><line x1="1610.1" y1="756.3" x2="1844.4" y2="968.0" stroke="#000000" stroke-width="7.8"/><line x1="1491.0" y1="799.1" x2="1454.5" y2="1094.2" stroke="#6f8118" stroke-width="5.7"/><line x1="1582.3" y1="779.8" x2="1751.7" y2="1043.2" stroke="#000000" stroke-width="6.1"/><line x1="1606.4" y1="760.9" x2="1821.4" y2="972.4" stroke="#000000" stroke-width="8.1"/><line x1="1460.3" y1="792.0" x2="1356.0" y2="1073.2" stroke="#6f8118" stroke-width="6.0"/><line x1="1559.3" y1="792.5" x2="1678.9" y2="1090.7" stroke="#000000" stroke-width="5.0"/><line x1="1383.4" y1="716.6" x2="1115.2" y2="830.3" stroke="#6f8118" stroke-width="5.0"/><line x1="1643.1" y1="701.9" x2="1940.4" y2="785.3" stroke="#000000" stroke-width="5.6"/><line x1="1642.6" y1="704.5" x2="1957.4" y2="799.0" stroke="#000000" stroke-width="6.2"/><line x1="1637.3" y1="719.2" x2="1920.7" y2="840.1" stroke="#000000" stroke-width="4.8"/><line x1="1645.8" y1="693.6" x2="1956.6" y2="760.4" stroke="#000000" stroke-width="6.6"/><line x1="1478.6" y1="800.0" x2="1414.3" y2="1100.2" stroke="#6f8118" stroke-width="4.1"/><line x1="1484.1" y1="801.3" x2="1430.5" y2="1112.7" stroke="#6f8118" stroke-width="5.6"/><line x1="1594.9" y1="775.4" x2="1803.5" y2="1042.4" stroke="#000000" stroke-width="6.1"/><line x1="1440.6" y1="785.6" x2="1281.4" y2="1074.1" stroke="#6f8118" stroke-width="5.0"/><line x1="1646.6" y1="694.3" x2="1950.0" y2="760.8" stroke="#000000" stroke-width="5.5"/><line x1="1398.9" y1="749.6" x2="1149.2" y2="945.9" stroke="#6f8118" stroke-width="7.0"/><line x1="1648.7" y1="687.2" x2="1973.9" y2="740.9" stroke="#000000" stroke-width="5.9"/><line x1="1628.5" y1="741.3" x2="1915.2" y2="925.2" stroke="#000000" stroke-width="7.3"/><line x1="1608.3" y1="766.5" x2="1830.4" y2="993.1" stroke="#000000" stroke-width="4.8"/><line x1="1390.1" y1="739.3" x2="1129.8" y2="905.9" stroke="#6f8118" stroke-width="6.6"/><line x1="1583.9" y1="785.5" x2="1754.8" y2="1058.5" stroke="#000000" stroke-width="7.2"/><line x1="1369.7" y1="682.1" x2="1033.9" y2="726.2" stroke="#66781a" stroke-width="7.2"/><line x1="1485.3" y1="804.7" x2="1434.5" y2="1122.1" stroke="#6f8118" stroke-width="6.5"/><line x1="1382.4" y1="728.1" x2="1096.2" y2="874.5" stroke="#6f8118" stroke-width="5.8"/><line x1="1582.8" y1="787.6" x2="1763.8" y2="1086.1" stroke="#000000" stroke-width="4.9"/><line x1="1474.8" y1="803.1" x2="1401.7" y2="1110.9" stroke="#6f8118" stroke-width="6.1"/><line x1="1376.1" y1="716.9" x2="1070.6" y2="839.7" stroke="#66781a" stroke-width="5.0"/><line x1="1404.0" y1="762.1" x2="1170.7" y2="982.4" stroke="#57671a" stroke-width="7.5"/><line x1="1373.3" y1="710.5" x2="1050.1" y2="822.3" stroke="#3e4a10" stroke-width="7.5"/><line x1="1434.5" y1="788.6" x2="1262.9" y2="1080.1" stroke="#6f8118" stroke-width="6.8"/><line x1="1466.5" y1="803.3" x2="1366.2" y2="1141.1" stroke="#6f8118" stroke-width="5.9"/><line x1="1389.5" y1="745.7" x2="1105.5" y2="942.0" stroke="#6f8118" stroke-width="5.8"/><line x1="1440.1" y1="792.2" x2="1286.9" y2="1082.3" stroke="#6f8118" stroke-width="8.4"/><line x1="1549.9" y1="804.7" x2="1646.4" y2="1128.2" stroke="#000000" stroke-width="4.9"/><line x1="1473.4" y1="805.5" x2="1390.7" y2="1144.9" stroke="#6f8118" stroke-width="5.9"/><line x1="1602.1" y1="777.7" x2="1823.8" y2="1045.4" stroke="#000000" stroke-width="8.1"/><line x1="1429.3" y1="786.0" x2="1244.6" y2="1073.0" stroke="#6f8118" stroke-width="5.9"/><line x1="1492.6" y1="809.8" x2="1457.1" y2="1148.6" stroke="#3e4a10" stroke-width="5.6"/><line x1="1387.4" y1="744.5" x2="1107.9" y2="931.4" stroke="#6f8118" stroke-width="7.7"/><line x1="1485.6" y1="809.3" x2="1430.6" y2="1168.3" stroke="#3e4a10" stroke-width="3.0"/><line x1="1563.1" y1="801.6" x2="1690.8" y2="1120.3" stroke="#000000" stroke-width="5.1"/><line x1="1427.6" y1="786.0" x2="1242.9" y2="1066.4" stroke="#66781a" stroke-width="7.2"/><line x1="1580.5" y1="793.5" x2="1745.4" y2="1087.8" stroke="#000000" stroke-width="5.5"/><line x1="1447.8" y1="797.6" x2="1310.7" y2="1102.2" stroke="#6f8118" stroke-width="5.0"/><line x1="1377.4" y1="727.7" x2="1050.6" y2="887.5" stroke="#66781a" stroke-width="7.7"/><line x1="1518.8" y1="811.6" x2="1543.8" y2="1151.8" stroke="#000000" stroke-width="4.0"/><line x1="1399.7" y1="762.2" x2="1153.0" y2="985.9" stroke="#6f8118" stroke-width="5.3"/><line x1="1370.7" y1="712.3" x2="1047.0" y2="826.5" stroke="#57671a" stroke-width="7.2"/><line x1="1617.2" y1="766.3" x2="1866.4" y2="999.7" stroke="#000000" stroke-width="6.5"/><line x1="1569.1" y1="800.3" x2="1710.8" y2="1115.8" stroke="#080804" stroke-width="5.7"/><line x1="1376.0" y1="726.6" x2="1064.0" y2="874.9" stroke="#6f8118" stroke-width="5.6"/><line x1="1609.5" y1="774.5" x2="1843.5" y2="1029.3" stroke="#000000" stroke-width="8.1"/><line x1="1622.0" y1="762.2" x2="1884.3" y2="988.3" stroke="#000000" stroke-width="7.3"/><line x1="1474.3" y1="808.7" x2="1390.7" y2="1168.4" stroke="#3e4a10" stroke-width="2.9"/><line x1="1611.1" y1="773.8" x2="1876.2" y2="1056.2" stroke="#000000" stroke-width="8.1"/><line x1="1363.1" y1="686.0" x2="1026.9" y2="737.1" stroke="#6f8118" stroke-width="6.7"/><line x1="1532.4" y1="811.8" x2="1592.1" y2="1173.2" stroke="#000000" stroke-width="5.7"/><line x1="1493.4" y1="812.5" x2="1457.1" y2="1184.2" stroke="#57671a" stroke-width="4.3"/><line x1="1635.0" y1="745.6" x2="1933.9" y2="937.6" stroke="#000000" stroke-width="8.6"/><line x1="1451.9" y1="801.6" x2="1310.7" y2="1148.3" stroke="#66781a" stroke-width="6.7"/><line x1="1567.6" y1="802.1" x2="1718.7" y2="1152.3" stroke="#000000" stroke-width="4.7"/><line x1="1410.6" y1="775.3" x2="1175.2" y2="1044.3" stroke="#6f8118" stroke-width="6.8"/><line x1="1426.4" y1="787.9" x2="1234.4" y2="1079.8" stroke="#57671a" stroke-width="6.6"/><line x1="1550.9" y1="808.2" x2="1650.4" y2="1142.8" stroke="#080804" stroke-width="3.4"/><line x1="1648.7" y1="719.8" x2="1988.6" y2="854.6" stroke="#000000" stroke-width="8.4"/><line x1="1647.4" y1="723.1" x2="1974.3" y2="861.6" stroke="#000000" stroke-width="8.3"/><line x1="1417.1" y1="781.4" x2="1197.5" y2="1065.0" stroke="#6f8118" stroke-width="5.3"/><line x1="1616.8" y1="769.2" x2="1876.7" y2="1020.1" stroke="#000000" stroke-width="6.0"/><line x1="1396.6" y1="761.6" x2="1115.9" y2="1007.8" stroke="#6f8118" stroke-width="6.8"/><line x1="1427.5" y1="789.2" x2="1229.9" y2="1096.4" stroke="#6f8118" stroke-width="6.5"/><line x1="1640.1" y1="738.7" x2="1963.0" y2="921.4" stroke="#000000" stroke-width="7.2"/><line x1="1439.7" y1="796.7" x2="1277.8" y2="1111.5" stroke="#6f8118" stroke-width="8.4"/><line x1="1440.5" y1="797.2" x2="1277.4" y2="1119.1" stroke="#66781a" stroke-width="5.4"/><line x1="1615.0" y1="771.7" x2="1870.6" y2="1028.8" stroke="#000000" stroke-width="6.8"/><line x1="1657.6" y1="690.7" x2="2012.3" y2="753.9" stroke="#000000" stroke-width="7.0"/><line x1="1373.9" y1="727.1" x2="1028.6" y2="889.7" stroke="#3e4a10" stroke-width="7.6"/><line x1="1415.8" y1="781.3" x2="1176.3" y2="1086.0" stroke="#66781a" stroke-width="5.4"/><line x1="1631.0" y1="753.5" x2="1920.8" y2="964.3" stroke="#000000" stroke-width="7.4"/><line x1="1502.8" y1="667.9" x2="1493.6" y2="676.3" stroke="#57671a" stroke-width="4.1"/><line x1="1522.1" y1="663.9" x2="1551.7" y2="664.3" stroke="#000000" stroke-width="6.5"/><line x1="1497.9" y1="664.8" x2="1479.9" y2="666.8" stroke="#6f8118" stroke-width="5.8"/><line x1="1498.9" y1="675.1" x2="1482.8" y2="696.4" stroke="#6f8118" stroke-width="6.4"/><line x1="1490.7" y1="699.1" x2="1488.2" y2="704.4" stroke="#3e4a10" stroke-width="3.2"/><line x1="1513.6" y1="647.9" x2="1526.1" y2="616.5" stroke="#000000" stroke-width="4.4"/><line x1="1522.6" y1="677.7" x2="1551.6" y2="704.2" stroke="#000000" stroke-width="6.5"/><line x1="1523.3" y1="677.1" x2="1555.5" y2="704.0" stroke="#000000" stroke-width="4.3"/><line x1="1505.7" y1="644.1" x2="1502.3" y2="604.5" stroke="#6f8118" stroke-width="5.1"/><line x1="1518.9" y1="644.2" x2="1541.6" y2="605.8" stroke="#000000" stroke-width="5.7"/><line x1="1533.2" y1="661.7" x2="1581.6" y2="657.7" stroke="#000000" stroke-width="5.5"/><line x1="1534.0" y1="674.0" x2="1586.0" y2="694.1" stroke="#000000" stroke-width="4.0"/><line x1="1535.1" y1="672.0" x2="1586.9" y2="687.3" stroke="#000000" stroke-width="6.2"/><line x1="1511.4" y1="636.9" x2="1519.4" y2="583.5" stroke="#000000" stroke-width="4.4"/><line x1="1480.8" y1="664.2" x2="1427.1" y2="665.2" stroke="#66781a" stroke-width="5.0"/><line x1="1484.4" y1="680.3" x2="1439.5" y2="712.6" stroke="#66781a" stroke-width="6.5"/><line x1="1539.2" y1="677.6" x2="1599.2" y2="703.9" stroke="#000000" stroke-width="4.5"/><line x1="1539.9" y1="678.0" x2="1602.6" y2="705.6" stroke="#000000" stroke-width="4.3"/><line x1="1477.8" y1="666.7" x2="1422.7" y2="672.0" stroke="#6f8118" stroke-width="6.4"/><line x1="1501.4" y1="632.9" x2="1489.8" y2="572.2" stroke="#66781a" stroke-width="4.1"/><line x1="1509.3" y1="631.2" x2="1513.1" y2="567.4" stroke="#6f8118" stroke-width="4.0"/><line x1="1543.6" y1="676.4" x2="1614.7" y2="701.3" stroke="#000000" stroke-width="5.7"/><line x1="1480.0" y1="645.3" x2="1424.7" y2="608.0" stroke="#66781a" stroke-width="4.0"/><line x1="1474.3" y1="658.4" x2="1411.9" y2="648.4" stroke="#6f8118" stroke-width="4.9"/><line x1="1507.4" y1="628.3" x2="1507.4" y2="557.6" stroke="#6f8118" stroke-width="6.8"/><line x1="1498.8" y1="629.6" x2="1482.5" y2="565.1" stroke="#6f8118" stroke-width="4.1"/><line x1="1475.3" y1="748.4" x2="1469.0" y2="765.0" stroke="#6f8118" stroke-width="5.4"/><line x1="1488.0" y1="634.5" x2="1448.9" y2="575.5" stroke="#6f8118" stroke-width="4.9"/><line x1="1542.7" y1="645.6" x2="1608.3" y2="611.8" stroke="#000000" stroke-width="6.1"/><line x1="1472.3" y1="662.8" x2="1402.9" y2="660.9" stroke="#3e4a10" stroke-width="5.0"/><line x1="1533.6" y1="694.8" x2="1583.6" y2="754.3" stroke="#000000" stroke-width="4.1"/><line x1="1545.8" y1="680.5" x2="1618.8" y2="712.2" stroke="#000000" stroke-width="4.8"/><line x1="1507.2" y1="625.8" x2="1506.9" y2="553.2" stroke="#57671a" stroke-width="5.8"/><line x1="1550.7" y1="668.6" x2="1636.3" y2="678.2" stroke="#000000" stroke-width="4.7"/><line x1="1545.9" y1="685.3" x2="1621.0" y2="727.1" stroke="#000000" stroke-width="4.8"/><line x1="1500.2" y1="623.3" x2="1486.0" y2="543.7" stroke="#57671a" stroke-width="4.0"/><line x1="1467.7" y1="659.6" x2="1391.0" y2="651.4" stroke="#57671a" stroke-width="6.0"/><line x1="1531.4" y1="626.7" x2="1578.1" y2="554.2" stroke="#000000" stroke-width="5.5"/><line x1="1481.3" y1="632.0" x2="1432.1" y2="572.1" stroke="#3e4a10" stroke-width="5.0"/><line x1="1481.3" y1="750.0" x2="1469.2" y2="790.0" stroke="#57671a" stroke-width="5.3"/><line x1="1552.8" y1="649.6" x2="1641.5" y2="621.9" stroke="#000000" stroke-width="4.5"/><line x1="1484.5" y1="626.7" x2="1440.0" y2="554.8" stroke="#3e4a10" stroke-width="6.4"/><line x1="1464.1" y1="662.0" x2="1378.8" y2="658.4" stroke="#3e4a10" stroke-width="4.1"/><line x1="1500.0" y1="617.3" x2="1485.3" y2="523.8" stroke="#6f8118" stroke-width="6.8"/><line x1="1540.1" y1="704.2" x2="1604.7" y2="784.1" stroke="#000000" stroke-width="4.1"/><line x1="1470.1" y1="694.4" x2="1395.1" y2="756.1" stroke="#66781a" stroke-width="5.5"/><line x1="1472.0" y1="629.2" x2="1404.3" y2="563.2" stroke="#6f8118" stroke-width="5.5"/><line x1="1474.3" y1="626.5" x2="1406.2" y2="549.9" stroke="#6f8118" stroke-width="5.2"/><line x1="1470.1" y1="630.9" x2="1397.7" y2="567.0" stroke="#66781a" stroke-width="6.8"/><line x1="1557.3" y1="639.9" x2="1657.5" y2="592.0" stroke="#080804" stroke-width="4.1"/><line x1="1561.1" y1="681.1" x2="1662.3" y2="713.6" stroke="#000000" stroke-width="4.9"/><line x1="1508.8" y1="611.4" x2="1511.4" y2="510.3" stroke="#6f8118" stroke-width="4.8"/><line x1="1470.5" y1="628.3" x2="1397.2" y2="557.8" stroke="#6f8118" stroke-width="5.9"/><line x1="1562.9" y1="676.9" x2="1672.8" y2="702.8" stroke="#000000" stroke-width="5.4"/><line x1="1551.1" y1="702.9" x2="1640.4" y2="782.9" stroke="#000000" stroke-width="6.7"/><line x1="1493.0" y1="611.7" x2="1465.4" y2="511.9" stroke="#66781a" stroke-width="6.5"/><line x1="1562.1" y1="685.6" x2="1668.9" y2="728.3" stroke="#000000" stroke-width="4.5"/><line x1="1483.6" y1="615.2" x2="1434.8" y2="515.3" stroke="#57671a" stroke-width="5.9"/><line x1="1553.8" y1="701.1" x2="1644.1" y2="773.7" stroke="#000000" stroke-width="7.1"/><line x1="1478.6" y1="617.2" x2="1419.9" y2="522.2" stroke="#57671a" stroke-width="4.0"/><line x1="1452.9" y1="666.1" x2="1348.3" y2="670.5" stroke="#6f8118" stroke-width="5.3"/><line x1="1472.3" y1="621.0" x2="1406.2" y2="540.5" stroke="#57671a" stroke-width="5.7"/><line x1="1451.7" y1="658.2" x2="1346.2" y2="647.6" stroke="#6f8118" stroke-width="5.5"/><line x1="1569.1" y1="669.4" x2="1686.9" y2="680.1" stroke="#000000" stroke-width="6.5"/><line x1="1569.3" y1="655.4" x2="1690.0" y2="639.1" stroke="#000000" stroke-width="5.2"/><line x1="1450.8" y1="655.1" x2="1336.5" y2="637.5" stroke="#66781a" stroke-width="6.1"/><line x1="1449.7" y1="655.1" x2="1336.1" y2="637.9" stroke="#66781a" stroke-width="6.3"/><line x1="1450.1" y1="652.6" x2="1338.3" y2="630.7" stroke="#6f8118" stroke-width="6.9"/><line x1="1472.9" y1="615.2" x2="1402.7" y2="516.4" stroke="#6f8118" stroke-width="6.4"/><line x1="1573.0" y1="666.1" x2="1706.5" y2="670.9" stroke="#000000" stroke-width="5.8"/><line x1="1501.9" y1="601.2" x2="1491.2" y2="481.8" stroke="#57671a" stroke-width="7.1"/><line x1="1555.3" y1="710.6" x2="1651.5" y2="804.9" stroke="#080804" stroke-width="4.8"/><line x1="1459.8" y1="705.1" x2="1361.6" y2="790.4" stroke="#57671a" stroke-width="4.4"/><line x1="1445.0" y1="664.1" x2="1326.4" y2="664.7" stroke="#57671a" stroke-width="6.4"/><line x1="1575.0" y1="672.5" x2="1713.2" y2="690.3" stroke="#000000" stroke-width="4.5"/><line x1="1535.5" y1="604.6" x2="1589.3" y2="491.4" stroke="#080804" stroke-width="4.8"/><line x1="1486.1" y1="603.8" x2="1444.1" y2="485.5" stroke="#66781a" stroke-width="5.0"/><line x1="1449.1" y1="638.9" x2="1328.1" y2="587.2" stroke="#6f8118" stroke-width="5.7"/><line x1="1576.2" y1="657.4" x2="1711.8" y2="644.8" stroke="#000000" stroke-width="4.9"/><line x1="1563.2" y1="623.2" x2="1669.0" y2="546.0" stroke="#000000" stroke-width="5.6"/><line x1="1443.3" y1="655.5" x2="1319.7" y2="639.6" stroke="#6f8118" stroke-width="6.4"/><line x1="1441.9" y1="656.0" x2="1316.1" y2="640.9" stroke="#6f8118" stroke-width="6.8"/><line x1="1554.8" y1="611.0" x2="1650.9" y2="504.1" stroke="#080804" stroke-width="4.2"/><line x1="1462.9" y1="613.0" x2="1370.5" y2="507.5" stroke="#6f8118" stroke-width="6.0"/><line x1="1455.2" y1="710.0" x2="1354.3" y2="799.2" stroke="#6f8118" stroke-width="6.3"/><line x1="1440.3" y1="649.0" x2="1304.5" y2="619.1" stroke="#6f8118" stroke-width="6.0"/><line x1="1482.7" y1="597.2" x2="1431.8" y2="459.9" stroke="#66781a" stroke-width="6.2"/><line x1="1446.4" y1="629.2" x2="1327.8" y2="561.9" stroke="#3e4a10" stroke-width="6.5"/><line x1="1581.6" y1="647.8" x2="1729.3" y2="615.8" stroke="#000000" stroke-width="6.8"/><line x1="1500.0" y1="591.5" x2="1484.7" y2="441.1" stroke="#6f8118" stroke-width="4.9"/><line x1="1584.3" y1="673.2" x2="1735.6" y2="691.8" stroke="#000000" stroke-width="5.6"/><line x1="1445.7" y1="627.4" x2="1327.3" y2="557.7" stroke="#6f8118" stroke-width="6.4"/><line x1="1482.6" y1="595.2" x2="1431.8" y2="455.5" stroke="#6f8118" stroke-width="6.1"/><line x1="1560.0" y1="605.8" x2="1661.5" y2="493.8" stroke="#000000" stroke-width="7.1"/><line x1="1583.4" y1="691.3" x2="1734.7" y2="745.9" stroke="#000000" stroke-width="6.2"/><line x1="1432.3" y1="665.5" x2="1282.8" y2="669.0" stroke="#57671a" stroke-width="5.4"/><line x1="1442.4" y1="626.2" x2="1315.1" y2="552.5" stroke="#3e4a10" stroke-width="4.3"/><line x1="1445.4" y1="708.4" x2="1324.2" y2="795.5" stroke="#57671a" stroke-width="6.5"/><line x1="1584.4" y1="693.0" x2="1741.9" y2="752.6" stroke="#000000" stroke-width="6.6"/><line x1="1466.7" y1="598.3" x2="1382.5" y2="462.8" stroke="#66781a" stroke-width="5.3"/><line x1="1590.0" y1="656.6" x2="1758.2" y2="642.0" stroke="#000000" stroke-width="5.2"/><line x1="1557.8" y1="599.9" x2="1660.0" y2="469.9" stroke="#000000" stroke-width="5.0"/><line x1="1456.9" y1="603.3" x2="1356.8" y2="483.6" stroke="#6f8118" stroke-width="6.8"/><line x1="1454.4" y1="605.3" x2="1343.4" y2="483.0" stroke="#66781a" stroke-width="7.0"/><line x1="1538.7" y1="586.6" x2="1599.3" y2="436.5" stroke="#080804" stroke-width="5.2"/><line x1="1586.0" y1="630.1" x2="1740.9" y2="563.5" stroke="#000000" stroke-width="6.6"/><line x1="1510.1" y1="581.0" x2="1515.7" y2="405.0" stroke="#6f8118" stroke-width="6.3"/><line x1="1468.3" y1="590.4" x2="1390.4" y2="444.5" stroke="#6f8118" stroke-width="5.8"/><line x1="1551.2" y1="589.7" x2="1635.8" y2="446.1" stroke="#000000" stroke-width="5.5"/><line x1="1426.1" y1="688.8" x2="1254.6" y2="741.5" stroke="#66781a" stroke-width="6.7"/><line x1="1596.8" y1="680.8" x2="1779.6" y2="715.6" stroke="#000000" stroke-width="6.4"/><line x1="1593.6" y1="693.8" x2="1772.2" y2="756.1" stroke="#000000" stroke-width="4.8"/><line x1="1599.3" y1="666.8" x2="1782.8" y2="672.8" stroke="#000000" stroke-width="6.4"/><line x1="1583.8" y1="614.3" x2="1735.9" y2="515.6" stroke="#000000" stroke-width="6.5"/><line x1="1586.7" y1="618.7" x2="1747.6" y2="527.2" stroke="#080804" stroke-width="4.1"/><line x1="1425.3" y1="694.4" x2="1257.5" y2="756.8" stroke="#3e4a10" stroke-width="6.3"/><line x1="1543.3" y1="581.2" x2="1619.6" y2="405.4" stroke="#000000" stroke-width="7.0"/><line x1="1599.8" y1="672.9" x2="1795.9" y2="692.4" stroke="#000000" stroke-width="6.8"/><line x1="1425.7" y1="700.4" x2="1260.2" y2="774.2" stroke="#6f8118" stroke-width="4.6"/><line x1="1580.1" y1="605.4" x2="1723.1" y2="490.3" stroke="#080804" stroke-width="7.0"/><line x1="1505.8" y1="572.7" x2="1502.4" y2="390.8" stroke="#6f8118" stroke-width="4.2"/><line x1="1600.3" y1="686.1" x2="1790.8" y2="732.0" stroke="#000000" stroke-width="7.3"/><line x1="1604.1" y1="673.6" x2="1792.6" y2="692.6" stroke="#000000" stroke-width="5.9"/><line x1="1513.3" y1="570.4" x2="1525.7" y2="371.3" stroke="#000000" stroke-width="5.2"/><line x1="1604.2" y1="654.6" x2="1799.1" y2="636.1" stroke="#000000" stroke-width="4.8"/><line x1="1505.4" y1="570.0" x2="1500.9" y2="371.2" stroke="#6f8118" stroke-width="4.2"/><line x1="1418.0" y1="642.0" x2="1241.7" y2="598.9" stroke="#3e4a10" stroke-width="5.2"/><line x1="1420.7" y1="697.5" x2="1242.6" y2="766.7" stroke="#6f8118" stroke-width="6.1"/><line x1="1448.5" y1="592.1" x2="1326.6" y2="444.1" stroke="#6f8118" stroke-width="7.1"/><line x1="1598.5" y1="701.8" x2="1785.5" y2="780.0" stroke="#000000" stroke-width="7.3"/><line x1="1418.4" y1="692.8" x2="1239.7" y2="750.9" stroke="#6f8118" stroke-width="7.4"/><line x1="1520.0" y1="566.7" x2="1546.0" y2="364.7" stroke="#000000" stroke-width="5.5"/><line x1="1418.7" y1="626.6" x2="1230.8" y2="548.0" stroke="#6f8118" stroke-width="4.7"/><line x1="1548.2" y1="572.9" x2="1629.8" y2="390.6" stroke="#000000" stroke-width="5.2"/><line x1="1523.5" y1="565.7" x2="1557.0" y2="358.7" stroke="#000000" stroke-width="7.2"/><line x1="1525.1" y1="565.6" x2="1561.6" y2="361.4" stroke="#000000" stroke-width="7.4"/><line x1="1410.7" y1="649.2" x2="1219.2" y2="620.3" stroke="#57671a" stroke-width="5.8"/><line x1="1513.8" y1="562.3" x2="1526.9" y2="352.2" stroke="#000000" stroke-width="6.0"/><line x1="1569.3" y1="580.4" x2="1692.1" y2="414.4" stroke="#000000" stroke-width="4.3"/><line x1="1518.8" y1="562.0" x2="1542.1" y2="349.6" stroke="#080804" stroke-width="4.4"/><line x1="1505.8" y1="561.4" x2="1502.0" y2="340.9" stroke="#6f8118" stroke-width="6.8"/><line x1="1474.1" y1="566.4" x2="1405.0" y2="365.1" stroke="#6f8118" stroke-width="5.3"/><line x1="1577.1" y1="584.0" x2="1722.4" y2="417.2" stroke="#000000" stroke-width="5.6"/><line x1="1507.5" y1="558.9" x2="1507.2" y2="336.3" stroke="#57671a" stroke-width="4.7"/><line x1="1610.2" y1="628.6" x2="1833.0" y2="552.1" stroke="#000000" stroke-width="6.9"/><line x1="1551.3" y1="566.1" x2="1638.6" y2="371.1" stroke="#000000" stroke-width="5.6"/><line x1="1476.2" y1="563.4" x2="1410.8" y2="353.4" stroke="#66781a" stroke-width="5.4"/><line x1="1614.4" y1="691.8" x2="1836.8" y2="749.9" stroke="#000000" stroke-width="4.3"/><line x1="1558.3" y1="568.4" x2="1661.7" y2="374.2" stroke="#000000" stroke-width="7.4"/><line x1="1608.7" y1="618.8" x2="1828.0" y2="521.2" stroke="#000000" stroke-width="5.4"/><line x1="1561.9" y1="568.7" x2="1673.5" y2="373.3" stroke="#000000" stroke-width="4.4"/><line x1="1400.4" y1="653.9" x2="1170.6" y2="632.6" stroke="#6f8118" stroke-width="7.0"/><line x1="1399.9" y1="662.1" x2="1164.6" y2="658.4" stroke="#6f8118" stroke-width="4.8"/><line x1="1467.5" y1="562.8" x2="1383.5" y2="351.2" stroke="#3e4a10" stroke-width="7.1"/><line x1="1620.5" y1="655.8" x2="1857.7" y2="639.0" stroke="#000000" stroke-width="4.5"/><line x1="1558.4" y1="564.3" x2="1663.7" y2="358.1" stroke="#000000" stroke-width="5.9"/><line x1="1401.1" y1="639.3" x2="1167.0" y2="585.3" stroke="#3e4a10" stroke-width="4.6"/><line x1="1455.8" y1="566.6" x2="1351.6" y2="370.7" stroke="#6f8118" stroke-width="5.4"/><line x1="1589.0" y1="584.4" x2="1766.7" y2="411.1" stroke="#000000" stroke-width="4.5"/><line x1="1575.4" y1="572.8" x2="1726.3" y2="370.0" stroke="#000000" stroke-width="5.2"/><line x1="1538.1" y1="555.2" x2="1600.9" y2="330.8" stroke="#000000" stroke-width="7.0"/><line x1="1593.9" y1="587.7" x2="1772.3" y2="430.3" stroke="#000000" stroke-width="5.2"/><line x1="1619.5" y1="697.2" x2="1867.6" y2="771.3" stroke="#000000" stroke-width="4.6"/><line x1="1622.9" y1="646.1" x2="1865.3" y2="608.8" stroke="#080804" stroke-width="6.3"/><line x1="1409.2" y1="609.4" x2="1189.9" y2="488.0" stroke="#6f8118" stroke-width="7.0"/><line x1="1594.3" y1="585.7" x2="1776.9" y2="421.0" stroke="#000000" stroke-width="5.0"/><line x1="1396.1" y1="684.8" x2="1159.2" y2="729.3" stroke="#3e4a10" stroke-width="5.9"/><line x1="1394.6" y1="652.9" x2="1142.8" y2="628.4" stroke="#6f8118" stroke-width="6.6"/><line x1="1540.4" y1="552.5" x2="1611.4" y2="311.3" stroke="#000000" stroke-width="5.7"/><line x1="1435.7" y1="574.6" x2="1275.2" y2="375.3" stroke="#6f8118" stroke-width="4.5"/><line x1="1395.9" y1="692.3" x2="1152.1" y2="754.3" stroke="#6f8118" stroke-width="4.8"/><line x1="1627.4" y1="680.1" x2="1896.1" y2="716.5" stroke="#000000" stroke-width="5.9"/><line x1="1481.9" y1="549.6" x2="1429.3" y2="316.3" stroke="#66781a" stroke-width="5.7"/><line x1="1517.2" y1="545.4" x2="1537.9" y2="290.1" stroke="#080804" stroke-width="6.4"/><line x1="1416.0" y1="591.1" x2="1216.2" y2="432.4" stroke="#6f8118" stroke-width="7.1"/><line x1="1389.5" y1="677.3" x2="1122.3" y2="707.6" stroke="#66781a" stroke-width="6.2"/><line x1="1596.3" y1="579.1" x2="1779.1" y2="404.0" stroke="#000000" stroke-width="7.3"/><line x1="1573.2" y1="560.7" x2="1721.3" y2="327.6" stroke="#000000" stroke-width="7.5"/><line x1="1568.2" y1="557.4" x2="1694.3" y2="335.8" stroke="#000000" stroke-width="5.4"/><line x1="1630.6" y1="685.0" x2="1898.3" y2="731.1" stroke="#000000" stroke-width="7.1"/><line x1="1406.8" y1="599.8" x2="1186.8" y2="459.9" stroke="#6f8118" stroke-width="5.2"/><line x1="1580.4" y1="564.6" x2="1738.3" y2="348.9" stroke="#000000" stroke-width="6.7"/><line x1="1391.0" y1="692.8" x2="1140.5" y2="754.9" stroke="#66781a" stroke-width="7.5"/><line x1="1542.9" y1="546.3" x2="1618.8" y2="293.1" stroke="#000000" stroke-width="6.8"/><line x1="1389.7" y1="639.8" x2="1129.3" y2="586.8" stroke="#66781a" stroke-width="7.2"/><line x1="1626.1" y1="623.1" x2="1873.1" y2="538.2" stroke="#000000" stroke-width="6.6"/><line x1="1629.6" y1="634.1" x2="1904.4" y2="566.9" stroke="#000000" stroke-width="6.5"/><line x1="1619.0" y1="606.4" x2="1871.3" y2="476.1" stroke="#000000" stroke-width="5.3"/><line x1="1493.5" y1="542.4" x2="1463.5" y2="285.9" stroke="#6f8118" stroke-width="6.6"/><line x1="1604.9" y1="585.2" x2="1806.4" y2="422.0" stroke="#000000" stroke-width="4.8"/><line x1="1463.7" y1="549.4" x2="1369.7" y2="304.5" stroke="#57671a" stroke-width="7.2"/><line x1="1474.7" y1="545.1" x2="1402.8" y2="286.0" stroke="#57671a" stroke-width="4.9"/><line x1="1635.2" y1="660.0" x2="1904.7" y2="651.9" stroke="#000000" stroke-width="4.8"/><line x1="1384.8" y1="672.5" x2="1111.1" y2="691.7" stroke="#6f8118" stroke-width="7.4"/><line x1="1614.4" y1="594.4" x2="1854.7" y2="437.9" stroke="#000000" stroke-width="5.3"/><line x1="1513.4" y1="538.1" x2="1526.3" y2="254.4" stroke="#000000" stroke-width="7.5"/><line x1="1501.9" y1="537.6" x2="1488.9" y2="256.7" stroke="#66781a" stroke-width="6.6"/><line x1="1632.1" y1="625.3" x2="1905.1" y2="540.5" stroke="#000000" stroke-width="5.6"/><line x1="1492.3" y1="537.8" x2="1457.4" y2="251.4" stroke="#66781a" stroke-width="5.5"/><line x1="1638.9" y1="658.6" x2="1935.0" y2="646.8" stroke="#080804" stroke-width="5.9"/><line x1="1512.0" y1="535.8" x2="1521.2" y2="262.5" stroke="#000000" stroke-width="5.8"/><line x1="1619.2" y1="595.8" x2="1875.0" y2="439.7" stroke="#000000" stroke-width="7.9"/><line x1="1539.6" y1="538.4" x2="1613.7" y2="246.9" stroke="#080804" stroke-width="7.7"/><line x1="1437.3" y1="556.6" x2="1275.5" y2="310.1" stroke="#66781a" stroke-width="6.6"/><line x1="1637.5" y1="632.8" x2="1935.3" y2="561.3" stroke="#000000" stroke-width="4.6"/><line x1="1390.4" y1="610.7" x2="1141.7" y2="498.0" stroke="#57671a" stroke-width="5.5"/><line x1="1639.9" y1="688.0" x2="1938.5" y2="742.5" stroke="#000000" stroke-width="7.1"/><line x1="1521.3" y1="533.2" x2="1551.6" y2="240.7" stroke="#000000" stroke-width="5.6"/><line x1="1637.6" y1="629.8" x2="1914.2" y2="557.1" stroke="#000000" stroke-width="5.8"/><line x1="1424.8" y1="563.7" x2="1230.3" y2="329.0" stroke="#6f8118" stroke-width="5.6"/><line x1="1426.5" y1="562.2" x2="1251.8" y2="343.4" stroke="#6f8118" stroke-width="7.7"/><line x1="1517.1" y1="532.1" x2="1537.9" y2="237.9" stroke="#000000" stroke-width="5.7"/><line x1="1606.8" y1="573.4" x2="1826.9" y2="372.1" stroke="#000000" stroke-width="8.0"/><line x1="1380.9" y1="633.1" x2="1107.8" y2="566.7" stroke="#57671a" stroke-width="5.8"/><line x1="1643.8" y1="658.4" x2="1953.6" y2="645.9" stroke="#000000" stroke-width="6.7"/><line x1="1477.5" y1="535.1" x2="1409.4" y2="245.2" stroke="#6f8118" stroke-width="5.6"/><line x1="1638.0" y1="625.3" x2="1942.7" y2="534.9" stroke="#000000" stroke-width="6.8"/><line x1="1558.9" y1="540.1" x2="1678.2" y2="251.2" stroke="#000000" stroke-width="6.6"/><line x1="1415.1" y1="570.4" x2="1206.5" y2="360.2" stroke="#66781a" stroke-width="5.1"/><line x1="1476.1" y1="535.2" x2="1407.9" y2="257.9" stroke="#6f8118" stroke-width="7.5"/><line x1="1641.7" y1="634.4" x2="1953.5" y2="565.6" stroke="#000000" stroke-width="4.8"/><line x1="1541.5" y1="533.5" x2="1617.1" y2="241.7" stroke="#000000" stroke-width="6.8"/><line x1="1644.7" y1="651.6" x2="1952.3" y2="624.0" stroke="#000000" stroke-width="6.0"/><line x1="1645.4" y1="673.8" x2="1967.5" y2="697.0" stroke="#000000" stroke-width="6.5"/><line x1="1375.0" y1="650.3" x2="1075.3" y2="619.4" stroke="#6f8118" stroke-width="4.9"/><line x1="1454.7" y1="540.5" x2="1339.0" y2="271.3" stroke="#6f8118" stroke-width="5.3"/><line x1="1625.9" y1="592.1" x2="1887.3" y2="433.3" stroke="#000000" stroke-width="6.9"/><line x1="1385.4" y1="609.2" x2="1115.6" y2="488.5" stroke="#6f8118" stroke-width="6.9"/><line x1="1516.8" y1="528.3" x2="1536.4" y2="234.8" stroke="#000000" stroke-width="8.0"/><line x1="1531.5" y1="529.6" x2="1587.6" y2="212.3" stroke="#000000" stroke-width="6.9"/><line x1="1590.9" y1="554.0" x2="1771.6" y2="314.9" stroke="#000000" stroke-width="5.4"/><line x1="1380.4" y1="620.6" x2="1101.2" y2="525.7" stroke="#66781a" stroke-width="6.5"/><line x1="1611.7" y1="571.8" x2="1838.1" y2="371.0" stroke="#000000" stroke-width="6.2"/><line x1="1643.9" y1="630.7" x2="1945.6" y2="557.1" stroke="#000000" stroke-width="5.6"/><line x1="1372.0" y1="670.1" x2="1055.7" y2="684.6" stroke="#6f8118" stroke-width="5.6"/><line x1="1648.5" y1="667.5" x2="1986.6" y2="676.3" stroke="#000000" stroke-width="4.6"/><line x1="1542.5" y1="529.8" x2="1620.6" y2="228.5" stroke="#000000" stroke-width="6.6"/><line x1="1626.3" y1="588.1" x2="1892.8" y2="417.5" stroke="#000000" stroke-width="5.4"/><line x1="1529.0" y1="526.8" x2="1579.2" y2="202.5" stroke="#000000" stroke-width="7.4"/><line x1="1596.1" y1="555.0" x2="1797.5" y2="306.8" stroke="#000000" stroke-width="7.5"/><line x1="1608.5" y1="566.0" x2="1840.1" y2="340.7" stroke="#000000" stroke-width="8.2"/><line x1="1620.0" y1="578.7" x2="1864.5" y2="393.0" stroke="#000000" stroke-width="4.7"/><line x1="1612.6" y1="569.6" x2="1841.7" y2="363.6" stroke="#000000" stroke-width="6.6"/><line x1="1527.9" y1="526.0" x2="1572.8" y2="218.5" stroke="#000000" stroke-width="7.8"/><line x1="1574.8" y1="539.9" x2="1727.2" y2="258.0" stroke="#000000" stroke-width="4.9"/><line x1="1650.8" y1="670.0" x2="1971.6" y2="683.6" stroke="#000000" stroke-width="4.7"/><line x1="1377.5" y1="617.3" x2="1075.3" y2="509.2" stroke="#66781a" stroke-width="6.2"/><line x1="1651.3" y1="664.6" x2="1977.0" y2="666.1" stroke="#000000" stroke-width="7.4"/><line x1="1600.9" y1="556.7" x2="1810.4" y2="315.6" stroke="#000000" stroke-width="5.2"/><line x1="1619.1" y1="574.4" x2="1882.4" y2="362.6" stroke="#000000" stroke-width="5.7"/><line x1="1647.6" y1="630.3" x2="1967.1" y2="553.3" stroke="#000000" stroke-width="7.3"/><line x1="1368.8" y1="655.8" x2="1038.2" y2="636.5" stroke="#57671a" stroke-width="6.9"/><line x1="1507.7" y1="522.9" x2="1507.4" y2="197.3" stroke="#6f8118" stroke-width="4.8"/><line x1="1637.0" y1="600.7" x2="1945.4" y2="449.9" stroke="#000000" stroke-width="5.2"/><line x1="1650.0" y1="638.6" x2="1996.8" y2="576.7" stroke="#000000" stroke-width="6.9"/><line x1="1526.8" y1="523.3" x2="1570.7" y2="198.1" stroke="#000000" stroke-width="6.5"/><line x1="1594.1" y1="549.7" x2="1785.2" y2="296.6" stroke="#000000" stroke-width="8.3"/><line x1="1418.2" y1="556.0" x2="1211.4" y2="306.8" stroke="#6f8118" stroke-width="5.8"/><line x1="1448.1" y1="536.0" x2="1314.4" y2="250.1" stroke="#6f8118" stroke-width="6.3"/><line x1="1653.3" y1="662.4" x2="1993.4" y2="658.8" stroke="#000000" stroke-width="6.4"/><line x1="1652.4" y1="647.7" x2="1980.4" y2="610.8" stroke="#080804" stroke-width="7.9"/><line x1="1368.9" y1="640.7" x2="1056.5" y2="588.4" stroke="#57671a" stroke-width="6.0"/><line x1="1465.8" y1="528.5" x2="1364.5" y2="201.9" stroke="#57671a" stroke-width="7.3"/><line x1="1653.6" y1="667.8" x2="1994.7" y2="676.7" stroke="#000000" stroke-width="6.8"/><line x1="1366.9" y1="651.3" x2="1032.6" y2="621.2" stroke="#6f8118" stroke-width="6.5"/><line x1="1366.6" y1="676.2" x2="1033.9" y2="705.2" stroke="#6f8118" stroke-width="4.9"/><line x1="1366.3" y1="673.4" x2="1029.3" y2="695.7" stroke="#3e4a10" stroke-width="6.5"/><line x1="1584.5" y1="541.2" x2="1764.1" y2="253.7" stroke="#000000" stroke-width="4.8"/><line x1="1642.9" y1="608.2" x2="1948.6" y2="481.9" stroke="#000000" stroke-width="6.5"/><line x1="1366.2" y1="654.8" x2="1049.3" y2="634.3" stroke="#6f8118" stroke-width="7.1"/><line x1="1638.6" y1="598.8" x2="1939.7" y2="448.6" stroke="#000000" stroke-width="7.4"/><line x1="1652.1" y1="637.5" x2="1991.6" y2="575.4" stroke="#000000" stroke-width="8.0"/><line x1="1365.9" y1="655.4" x2="1049.4" y2="636.3" stroke="#6f8118" stroke-width="5.7"/><line x1="1571.7" y1="533.9" x2="1729.4" y2="212.8" stroke="#000000" stroke-width="5.8"/><line x1="1548.4" y1="524.7" x2="1639.8" y2="210.7" stroke="#000000" stroke-width="8.3"/><line x1="1575.0" y1="534.6" x2="1730.2" y2="235.3" stroke="#000000" stroke-width="5.9"/><line x1="1655.9" y1="669.3" x2="2014.5" y2="682.3" stroke="#000000" stroke-width="8.1"/><line x1="1364.7" y1="653.4" x2="1016.7" y2="627.7" stroke="#6f8118" stroke-width="8.3"/><line x1="1450.7" y1="531.5" x2="1318.1" y2="224.4" stroke="#6f8118" stroke-width="6.9"/><line x1="1401.8" y1="566.9" x2="1143.6" y2="330.7" stroke="#66781a" stroke-width="5.3"/><line x1="1434.5" y1="539.7" x2="1265.7" y2="253.9" stroke="#3e4a10" stroke-width="7.0"/><line x1="1446.4" y1="533.0" x2="1306.9" y2="236.5" stroke="#6f8118" stroke-width="6.0"/><line x1="1373.1" y1="613.2" x2="1035.4" y2="486.0" stroke="#6f8118" stroke-width="7.1"/><line x1="1363.5" y1="665.5" x2="1011.6" y2="669.4" stroke="#6f8118" stroke-width="5.8"/><line x1="1363.6" y1="659.0" x2="1029.7" y2="647.4" stroke="#6f8118" stroke-width="5.6"/><line x1="1481.0" y1="521.1" x2="1417.7" y2="185.2" stroke="#6f8118" stroke-width="5.2"/><line x1="1532.7" y1="519.8" x2="1595.6" y2="155.1" stroke="#000000" stroke-width="7.9"/><line x1="1588.2" y1="540.1" x2="1788.1" y2="231.8" stroke="#000000" stroke-width="7.8"/><line x1="1622.1" y1="569.2" x2="1890.8" y2="346.3" stroke="#000000" stroke-width="6.2"/><line x1="1370.8" y1="617.3" x2="1054.1" y2="509.4" stroke="#6f8118" stroke-width="5.6"/><line x1="1384.3" y1="588.5" x2="1091.2" y2="409.5" stroke="#6f8118" stroke-width="5.4"/><line x1="1644.7" y1="604.2" x2="1989.5" y2="453.6" stroke="#000000" stroke-width="8.6"/><line x1="1638.7" y1="592.2" x2="1970.5" y2="410.1" stroke="#000000" stroke-width="6.8"/><line x1="1646.3" y1="607.1" x2="1962.9" y2="477.0" stroke="#000000" stroke-width="7.6"/><line x1="1610.6" y1="556.2" x2="1856.1" y2="298.5" stroke="#000000" stroke-width="5.4"/><line x1="1380.4" y1="594.1" x2="1076.8" y2="427.8" stroke="#66781a" stroke-width="8.3"/><line x1="1628.9" y1="576.3" x2="1923.4" y2="363.1" stroke="#000000" stroke-width="4.9"/><line x1="1572.0" y1="530.1" x2="1733.0" y2="193.9" stroke="#000000" stroke-width="5.8"/><line x1="1609.1" y1="554.3" x2="1864.5" y2="277.3" stroke="#000000" stroke-width="8.4"/><line x1="1658.5" y1="663.9" x2="2042.8" y2="663.8" stroke="#000000" stroke-width="5.7"/><line x1="1514.1" y1="516.5" x2="1529.8" y2="139.0" stroke="#000000" stroke-width="6.5"/><line x1="1615.4" y1="560.2" x2="1880.9" y2="304.0" stroke="#000000" stroke-width="8.0"/><line x1="1457.1" y1="526.2" x2="1328.7" y2="177.9" stroke="#6f8118" stroke-width="7.2"/><line x1="1378.6" y1="596.1" x2="1075.8" y2="437.3" stroke="#57671a" stroke-width="7.6"/><line x1="1592.3" y1="541.0" x2="1802.6" y2="234.3" stroke="#000000" stroke-width="6.7"/><line x1="1654.6" y1="629.8" x2="1992.8" y2="550.9" stroke="#000000" stroke-width="7.7"/><line x1="1547.5" y1="521.0" x2="1647.0" y2="160.9" stroke="#000000" stroke-width="6.9"/><line x1="1550.2" y1="521.5" x2="1651.7" y2="179.1" stroke="#000000" stroke-width="4.9"/><line x1="1570.7" y1="528.9" x2="1724.5" y2="198.0" stroke="#000000" stroke-width="7.1"/><line x1="1652.6" y1="621.3" x2="2007.0" y2="516.7" stroke="#000000" stroke-width="8.2"/><line x1="1365.3" y1="630.0" x2="1003.6" y2="543.6" stroke="#6f8118" stroke-width="7.7"/><line x1="1495.4" y1="516.5" x2="1463.0" y2="137.5" stroke="#6f8118" stroke-width="5.5"/><line x1="1361.1" y1="665.5" x2="987.0" y2="669.4" stroke="#66781a" stroke-width="7.3"/><line x1="1642.9" y1="596.8" x2="1976.7" y2="430.6" stroke="#000000" stroke-width="5.5"/><line x1="1658.0" y1="644.1" x2="2027.2" y2="595.0" stroke="#000000" stroke-width="7.3"/><line x1="1571.5" y1="528.6" x2="1736.2" y2="177.5" stroke="#000000" stroke-width="6.4"/><line x1="1405.2" y1="558.5" x2="1160.2" y2="307.3" stroke="#6f8118" stroke-width="5.3"/><line x1="1581.3" y1="533.2" x2="1759.8" y2="214.8" stroke="#000000" stroke-width="6.5"/><line x1="1368.6" y1="616.4" x2="1026.7" y2="499.5" stroke="#3e4a10" stroke-width="5.3"/><line x1="1640.8" y1="591.3" x2="1961.9" y2="415.5" stroke="#000000" stroke-width="5.9"/><circle cx="1508" cy="664" r="165" fill="url(#sph)"/><line x1="1484.9" y1="812.7" x2="1430.5" y2="1162.9" stroke="#66781a" stroke-width="4.7"/><line x1="1600.4" y1="784.7" x2="1825.7" y2="1079.3" stroke="#000000" stroke-width="8.9"/><line x1="1657.8" y1="691.6" x2="2046.1" y2="763.0" stroke="#000000" stroke-width="6.2"/><line x1="1481.1" y1="812.0" x2="1410.9" y2="1198.6" stroke="#6f8118" stroke-width="3.7"/><line x1="1648.6" y1="723.4" x2="1986.2" y2="866.1" stroke="#000000" stroke-width="6.8"/><line x1="1621.3" y1="765.9" x2="1916.1" y2="1031.0" stroke="#000000" stroke-width="6.1"/><line x1="1640.7" y1="739.4" x2="1968.2" y2="925.6" stroke="#080804" stroke-width="8.7"/><line x1="1419.7" y1="784.8" x2="1195.6" y2="1091.2" stroke="#66781a" stroke-width="5.7"/><line x1="1362.8" y1="694.8" x2="1012.0" y2="769.1" stroke="#3e4a10" stroke-width="7.2"/><line x1="1650.1" y1="720.1" x2="1990.2" y2="854.5" stroke="#000000" stroke-width="6.7"/><line x1="1367.0" y1="710.8" x2="1023.2" y2="824.7" stroke="#6f8118" stroke-width="6.8"/><line x1="1485.8" y1="813.2" x2="1427.8" y2="1203.6" stroke="#66781a" stroke-width="6.5"/><line x1="1360.5" y1="679.3" x2="988.1" y2="717.7" stroke="#6f8118" stroke-width="5.7"/><line x1="1359.8" y1="669.8" x2="963.2" y2="685.4" stroke="#57671a" stroke-width="6.8"/><line x1="1576.6" y1="799.9" x2="1747.9" y2="1139.7" stroke="#000000" stroke-width="7.6"/><line x1="1439.7" y1="797.8" x2="1261.5" y2="1146.1" stroke="#3e4a10" stroke-width="8.4"/><line x1="1637.2" y1="745.6" x2="1955.6" y2="946.7" stroke="#000000" stroke-width="6.5"/><line x1="1456.7" y1="805.5" x2="1321.0" y2="1178.9" stroke="#3e4a10" stroke-width="4.8"/><line x1="1394.9" y1="761.6" x2="1093.0" y2="1021.9" stroke="#3e4a10" stroke-width="6.2"/><line x1="1360.8" y1="682.7" x2="997.6" y2="728.6" stroke="#6f8118" stroke-width="7.3"/><line x1="1408.0" y1="775.3" x2="1145.6" y2="1067.0" stroke="#57671a" stroke-width="9.0"/><line x1="1613.5" y1="774.3" x2="1870.4" y2="1042.8" stroke="#000000" stroke-width="6.9"/><line x1="1486.4" y1="813.4" x2="1431.5" y2="1191.5" stroke="#6f8118" stroke-width="3.8"/><line x1="1360.1" y1="675.2" x2="967.2" y2="705.0" stroke="#57671a" stroke-width="7.8"/><line x1="1499.5" y1="814.9" x2="1478.8" y2="1180.6" stroke="#6f8118" stroke-width="5.9"/><line x1="1645.0" y1="731.8" x2="1989.6" y2="902.4" stroke="#000000" stroke-width="6.2"/><line x1="1366.5" y1="709.3" x2="1015.4" y2="821.7" stroke="#6f8118" stroke-width="9.1"/><line x1="1598.5" y1="786.6" x2="1831.3" y2="1102.2" stroke="#000000" stroke-width="8.9"/><line x1="1396.2" y1="762.9" x2="1116.1" y2="1010.6" stroke="#66781a" stroke-width="5.4"/><line x1="1397.0" y1="763.8" x2="1122.1" y2="1010.6" stroke="#6f8118" stroke-width="5.4"/><line x1="1482.0" y1="812.5" x2="1413.0" y2="1205.4" stroke="#6f8118" stroke-width="4.9"/><line x1="1538.6" y1="812.5" x2="1621.3" y2="1215.1" stroke="#000000" stroke-width="3.7"/><line x1="1582.4" y1="796.7" x2="1764.7" y2="1122.2" stroke="#000000" stroke-width="5.2"/><line x1="1532.8" y1="813.4" x2="1596.7" y2="1198.7" stroke="#000000" stroke-width="5.6"/><line x1="1436.2" y1="795.6" x2="1250.9" y2="1135.0" stroke="#66781a" stroke-width="6.5"/><line x1="1550.7" y1="809.4" x2="1663.5" y2="1193.9" stroke="#000000" stroke-width="7.1"/><line x1="1503.7" y1="814.8" x2="1491.9" y2="1223.2" stroke="#6f8118" stroke-width="3.6"/><line x1="1578.1" y1="798.7" x2="1752.2" y2="1133.5" stroke="#000000" stroke-width="6.5"/><line x1="1413.3" y1="779.4" x2="1158.2" y2="1090.0" stroke="#6f8118" stroke-width="7.4"/><line x1="1655.2" y1="703.5" x2="2056.5" y2="811.2" stroke="#000000" stroke-width="6.9"/><line x1="1362.3" y1="689.6" x2="993.1" y2="754.3" stroke="#6f8118" stroke-width="5.4"/><line x1="1455.5" y1="804.4" x2="1322.6" y2="1158.5" stroke="#6f8118" stroke-width="3.3"/><line x1="1659.5" y1="678.4" x2="2055.7" y2="716.0" stroke="#000000" stroke-width="6.5"/><line x1="1440.3" y1="797.4" x2="1268.6" y2="1134.9" stroke="#6f8118" stroke-width="7.8"/><line x1="1584.7" y1="794.8" x2="1795.8" y2="1155.3" stroke="#000000" stroke-width="9.1"/><line x1="1465.2" y1="807.7" x2="1347.9" y2="1200.8" stroke="#6f8118" stroke-width="6.1"/><line x1="1656.3" y1="697.6" x2="2034.3" y2="783.4" stroke="#000000" stroke-width="6.9"/><line x1="1397.7" y1="763.5" x2="1099.2" y2="1032.0" stroke="#6f8118" stroke-width="6.0"/><line x1="1629.0" y1="755.7" x2="1954.1" y2="1002.3" stroke="#000000" stroke-width="6.5"/><line x1="1659.8" y1="665.1" x2="2063.2" y2="667.9" stroke="#000000" stroke-width="8.3"/><line x1="1608.5" y1="777.4" x2="1873.1" y2="1076.1" stroke="#000000" stroke-width="6.3"/><line x1="1454.8" y1="803.2" x2="1311.0" y2="1178.0" stroke="#6f8118" stroke-width="5.6"/><line x1="1402.8" y1="768.1" x2="1136.6" y2="1030.8" stroke="#57671a" stroke-width="9.5"/><line x1="1659.1" y1="665.1" x2="2043.4" y2="667.7" stroke="#000000" stroke-width="8.4"/><line x1="1438.9" y1="795.4" x2="1261.9" y2="1130.9" stroke="#6f8118" stroke-width="7.5"/><line x1="1475.0" y1="809.4" x2="1386.3" y2="1198.2" stroke="#6f8118" stroke-width="5.8"/><line x1="1569.9" y1="801.0" x2="1741.3" y2="1181.1" stroke="#000000" stroke-width="4.8"/><line x1="1461.6" y1="805.2" x2="1342.9" y2="1164.9" stroke="#6f8118" stroke-width="4.8"/><line x1="1362.6" y1="680.7" x2="964.5" y2="726.3" stroke="#6f8118" stroke-width="9.2"/><line x1="1488.1" y1="811.6" x2="1435.6" y2="1198.4" stroke="#6f8118" stroke-width="6.2"/><line x1="1657.7" y1="681.1" x2="2081.0" y2="729.4" stroke="#000000" stroke-width="9.1"/><line x1="1473.7" y1="808.5" x2="1381.6" y2="1194.5" stroke="#6f8118" stroke-width="5.0"/><line x1="1617.4" y1="767.2" x2="1899.0" y2="1033.0" stroke="#000000" stroke-width="8.3"/><line x1="1589.7" y1="789.8" x2="1806.4" y2="1123.7" stroke="#000000" stroke-width="9.3"/><line x1="1376.3" y1="728.1" x2="1034.9" y2="893.9" stroke="#3e4a10" stroke-width="8.2"/><line x1="1623.6" y1="759.8" x2="1947.8" y2="1028.5" stroke="#000000" stroke-width="8.1"/><line x1="1632.6" y1="748.0" x2="1984.4" y2="985.3" stroke="#000000" stroke-width="8.7"/><line x1="1616.4" y1="767.6" x2="1925.1" y2="1062.8" stroke="#000000" stroke-width="6.2"/><line x1="1584.0" y1="792.8" x2="1801.3" y2="1161.6" stroke="#000000" stroke-width="9.3"/><line x1="1478.7" y1="809.0" x2="1400.5" y2="1193.2" stroke="#66781a" stroke-width="6.6"/><line x1="1380.0" y1="734.3" x2="1022.0" y2="930.5" stroke="#66781a" stroke-width="5.6"/><line x1="1479.0" y1="809.0" x2="1400.5" y2="1199.4" stroke="#66781a" stroke-width="6.3"/><line x1="1481.4" y1="809.4" x2="1410.9" y2="1192.9" stroke="#57671a" stroke-width="6.9"/><line x1="1525.9" y1="811.4" x2="1575.1" y2="1219.0" stroke="#000000" stroke-width="5.7"/><line x1="1512.2" y1="812.1" x2="1523.2" y2="1218.4" stroke="#000000" stroke-width="4.3"/><line x1="1363.6" y1="678.1" x2="974.6" y2="715.8" stroke="#3e4a10" stroke-width="6.0"/><line x1="1366.8" y1="697.9" x2="994.6" y2="787.0" stroke="#6f8118" stroke-width="5.7"/><line x1="1570.1" y1="799.2" x2="1737.1" y2="1163.9" stroke="#000000" stroke-width="5.8"/><line x1="1373.7" y1="719.6" x2="1004.9" y2="872.1" stroke="#6f8118" stroke-width="6.2"/><line x1="1434.7" y1="790.7" x2="1241.5" y2="1123.7" stroke="#6f8118" stroke-width="7.9"/><line x1="1652.8" y1="699.5" x2="2070.8" y2="802.0" stroke="#000000" stroke-width="8.8"/><line x1="1488.7" y1="809.9" x2="1433.9" y2="1219.3" stroke="#57671a" stroke-width="6.6"/><line x1="1383.4" y1="738.6" x2="1023.7" y2="953.5" stroke="#6f8118" stroke-width="5.5"/><line x1="1530.2" y1="809.9" x2="1590.3" y2="1208.1" stroke="#000000" stroke-width="7.2"/><line x1="1480.4" y1="808.2" x2="1407.2" y2="1188.6" stroke="#6f8118" stroke-width="3.8"/><line x1="1643.2" y1="726.1" x2="2023.4" y2="900.7" stroke="#000000" stroke-width="6.4"/><line x1="1604.2" y1="777.0" x2="1854.5" y2="1071.7" stroke="#000000" stroke-width="6.2"/><line x1="1363.9" y1="666.6" x2="950.9" y2="673.9" stroke="#6f8118" stroke-width="6.5"/><line x1="1504.1" y1="810.7" x2="1492.3" y2="1234.1" stroke="#57671a" stroke-width="4.9"/><line x1="1504.8" y1="810.7" x2="1495.3" y2="1218.1" stroke="#6f8118" stroke-width="6.2"/><line x1="1419.5" y1="779.2" x2="1178.5" y2="1092.0" stroke="#66781a" stroke-width="9.0"/><line x1="1632.1" y1="745.0" x2="1964.9" y2="962.3" stroke="#000000" stroke-width="7.2"/><line x1="1401.5" y1="761.7" x2="1092.2" y2="1044.7" stroke="#6f8118" stroke-width="5.8"/><line x1="1655.8" y1="667.2" x2="2064.1" y2="675.9" stroke="#000000" stroke-width="5.9"/><line x1="1458.6" y1="800.9" x2="1315.1" y2="1196.6" stroke="#57671a" stroke-width="6.1"/><line x1="1581.3" y1="791.8" x2="1770.6" y2="1122.8" stroke="#000000" stroke-width="6.7"/><line x1="1401.3" y1="761.3" x2="1095.3" y2="1039.7" stroke="#6f8118" stroke-width="6.8"/><line x1="1471.6" y1="804.9" x2="1366.1" y2="1210.8" stroke="#6f8118" stroke-width="3.8"/><line x1="1462.0" y1="801.7" x2="1330.9" y2="1192.7" stroke="#6f8118" stroke-width="6.4"/><line x1="1630.1" y1="746.5" x2="1956.3" y2="967.1" stroke="#000000" stroke-width="9.8"/><line x1="1644.0" y1="720.7" x2="1999.9" y2="869.2" stroke="#000000" stroke-width="9.4"/><line x1="1366.2" y1="647.9" x2="951.6" y2="600.5" stroke="#6f8118" stroke-width="6.8"/><line x1="1655.2" y1="665.6" x2="2049.1" y2="669.6" stroke="#000000" stroke-width="7.9"/><line x1="1384.4" y1="736.8" x2="1024.4" y2="948.0" stroke="#6f8118" stroke-width="8.1"/><line x1="1645.2" y1="717.1" x2="2020.2" y2="862.2" stroke="#000000" stroke-width="9.8"/><line x1="1584.8" y1="788.7" x2="1810.5" y2="1155.9" stroke="#000000" stroke-width="8.6"/><line x1="1654.7" y1="660.9" x2="2051.7" y2="652.1" stroke="#000000" stroke-width="6.6"/><line x1="1405.1" y1="763.3" x2="1112.4" y2="1045.2" stroke="#6f8118" stroke-width="7.2"/><line x1="1388.6" y1="741.0" x2="1065.6" y2="948.7" stroke="#6f8118" stroke-width="6.6"/><line x1="1652.2" y1="643.9" x2="2075.2" y2="584.5" stroke="#000000" stroke-width="5.8"/><line x1="1606.5" y1="771.0" x2="1869.1" y2="1056.8" stroke="#000000" stroke-width="7.0"/><line x1="1559.8" y1="799.2" x2="1706.7" y2="1183.7" stroke="#080804" stroke-width="5.5"/><line x1="1499.6" y1="807.6" x2="1476.5" y2="1189.7" stroke="#3e4a10" stroke-width="4.8"/><line x1="1367.4" y1="674.3" x2="970.5" y2="702.9" stroke="#6f8118" stroke-width="9.4"/><line x1="1606.5" y1="770.5" x2="1899.1" y2="1087.5" stroke="#000000" stroke-width="6.9"/><line x1="1651.9" y1="683.0" x2="2072.8" y2="738.4" stroke="#000000" stroke-width="6.2"/><line x1="1438.4" y1="788.0" x2="1251.7" y2="1119.5" stroke="#3e4a10" stroke-width="8.3"/><line x1="1528.8" y1="806.1" x2="1588.0" y2="1215.5" stroke="#000000" stroke-width="7.0"/><line x1="1422.0" y1="776.4" x2="1177.3" y2="1095.1" stroke="#6f8118" stroke-width="8.6"/><line x1="1369.3" y1="645.5" x2="956.9" y2="590.5" stroke="#57671a" stroke-width="7.3"/><line x1="1581.4" y1="787.5" x2="1785.8" y2="1132.1" stroke="#000000" stroke-width="7.6"/><line x1="1403.7" y1="758.2" x2="1112.4" y2="1020.5" stroke="#66781a" stroke-width="7.1"/><line x1="1648.3" y1="695.3" x2="2039.1" y2="782.3" stroke="#000000" stroke-width="5.9"/><line x1="1404.8" y1="758.8" x2="1114.2" y2="1024.9" stroke="#6f8118" stroke-width="6.5"/><line x1="1378.5" y1="715.3" x2="1030.8" y2="852.3" stroke="#6f8118" stroke-width="6.7"/><line x1="1403.4" y1="753.7" x2="1107.9" y2="1006.2" stroke="#6f8118" stroke-width="5.9"/><line x1="1372.1" y1="649.8" x2="959.6" y2="606.5" stroke="#6f8118" stroke-width="7.3"/><line x1="1645.4" y1="695.5" x2="2025.3" y2="782.4" stroke="#000000" stroke-width="9.0"/><line x1="1374.6" y1="692.5" x2="1000.0" y2="771.9" stroke="#6f8118" stroke-width="8.7"/><line x1="1438.3" y1="782.8" x2="1235.2" y2="1127.3" stroke="#66781a" stroke-width="6.8"/><line x1="1480.4" y1="798.9" x2="1400.5" y2="1184.8" stroke="#66781a" stroke-width="5.0"/><line x1="1379.5" y1="704.9" x2="1014.3" y2="820.5" stroke="#6f8118" stroke-width="8.2"/><line x1="1645.7" y1="646.6" x2="2032.4" y2="597.2" stroke="#000000" stroke-width="9.8"/><line x1="1644.1" y1="638.1" x2="2058.0" y2="558.8" stroke="#000000" stroke-width="8.6"/><line x1="1641.9" y1="700.2" x2="2032.4" y2="805.7" stroke="#000000" stroke-width="8.1"/><line x1="1378.7" y1="700.0" x2="1017.5" y2="799.8" stroke="#66781a" stroke-width="9.2"/><line x1="1470.2" y1="794.9" x2="1356.3" y2="1185.6" stroke="#3e4a10" stroke-width="4.3"/><line x1="1645.8" y1="657.2" x2="2041.8" y2="637.3" stroke="#000000" stroke-width="10.3"/><line x1="1389.5" y1="726.8" x2="1024.2" y2="919.5" stroke="#6f8118" stroke-width="7.9"/><line x1="1568.4" y1="786.7" x2="1743.8" y2="1144.7" stroke="#000000" stroke-width="7.5"/><line x1="1598.3" y1="767.1" x2="1854.4" y2="1060.1" stroke="#000000" stroke-width="6.9"/><line x1="1489.6" y1="797.0" x2="1432.3" y2="1202.1" stroke="#6f8118" stroke-width="5.4"/><line x1="1376.8" y1="673.0" x2="1013.9" y2="697.5" stroke="#6f8118" stroke-width="10.3"/><line x1="1415.0" y1="758.2" x2="1156.0" y2="1019.2" stroke="#3e4a10" stroke-width="6.4"/><line x1="1600.8" y1="762.7" x2="1883.1" y2="1063.4" stroke="#000000" stroke-width="7.4"/><line x1="1377.3" y1="655.1" x2="979.3" y2="627.6" stroke="#6f8118" stroke-width="6.5"/><line x1="1641.6" y1="647.1" x2="2038.9" y2="596.5" stroke="#000000" stroke-width="6.0"/><line x1="1380.6" y1="692.8" x2="985.2" y2="781.4" stroke="#57671a" stroke-width="8.4"/><line x1="1505.2" y1="796.9" x2="1496.3" y2="1179.8" stroke="#57671a" stroke-width="7.0"/><line x1="1642.3" y1="666.4" x2="2057.1" y2="673.3" stroke="#000000" stroke-width="10.7"/><line x1="1638.2" y1="692.0" x2="2047.1" y2="779.9" stroke="#000000" stroke-width="10.6"/><line x1="1387.3" y1="708.9" x2="1048.4" y2="834.4" stroke="#57671a" stroke-width="6.9"/><line x1="1590.8" y1="767.1" x2="1851.4" y2="1092.8" stroke="#000000" stroke-width="9.4"/><line x1="1448.9" y1="779.6" x2="1271.9" y2="1123.3" stroke="#6f8118" stroke-width="6.0"/><line x1="1487.6" y1="792.6" x2="1429.6" y2="1151.8" stroke="#66781a" stroke-width="8.1"/><line x1="1453.9" y1="781.5" x2="1292.2" y2="1129.7" stroke="#6f8118" stroke-width="5.9"/><line x1="1381.3" y1="655.9" x2="1010.3" y2="631.8" stroke="#6f8118" stroke-width="7.0"/><line x1="1625.6" y1="722.7" x2="1964.7" y2="891.9" stroke="#000000" stroke-width="7.7"/><line x1="1413.8" y1="750.4" x2="1115.7" y2="1022.0" stroke="#57671a" stroke-width="9.7"/><line x1="1466.5" y1="786.1" x2="1349.0" y2="1128.9" stroke="#66781a" stroke-width="4.7"/><line x1="1476.9" y1="789.2" x2="1381.5" y2="1168.7" stroke="#57671a" stroke-width="7.1"/><line x1="1597.1" y1="759.8" x2="1873.4" y2="1057.6" stroke="#000000" stroke-width="7.9"/><line x1="1384.5" y1="639.1" x2="1016.9" y2="564.7" stroke="#57671a" stroke-width="9.7"/><line x1="1385.8" y1="633.9" x2="1011.4" y2="541.3" stroke="#6f8118" stroke-width="10.5"/><line x1="1464.1" y1="783.9" x2="1329.9" y2="1147.7" stroke="#6f8118" stroke-width="4.0"/><line x1="1634.0" y1="635.0" x2="2026.5" y2="543.9" stroke="#000000" stroke-width="8.1"/><line x1="1387.9" y1="629.8" x2="1025.6" y2="526.6" stroke="#6f8118" stroke-width="8.2"/><line x1="1562.6" y1="780.5" x2="1726.9" y2="1133.3" stroke="#000000" stroke-width="5.7"/><line x1="1392.6" y1="712.4" x2="1024.1" y2="866.1" stroke="#6f8118" stroke-width="9.9"/><line x1="1415.1" y1="748.1" x2="1129.0" y2="1005.7" stroke="#6f8118" stroke-width="7.0"/><line x1="1591.9" y1="760.5" x2="1855.1" y2="1064.4" stroke="#000000" stroke-width="7.0"/><line x1="1635.8" y1="659.9" x2="2023.5" y2="647.1" stroke="#000000" stroke-width="7.1"/><line x1="1619.7" y1="726.2" x2="1966.6" y2="919.6" stroke="#000000" stroke-width="10.7"/><line x1="1470.4" y1="783.9" x2="1361.1" y2="1128.7" stroke="#57671a" stroke-width="8.3"/><line x1="1635.5" y1="658.2" x2="2004.2" y2="640.8" stroke="#000000" stroke-width="7.7"/><line x1="1566.6" y1="776.6" x2="1748.9" y2="1128.8" stroke="#080804" stroke-width="9.6"/><line x1="1391.5" y1="704.5" x2="1038.3" y2="826.4" stroke="#57671a" stroke-width="7.3"/><line x1="1411.2" y1="740.9" x2="1126.5" y2="965.5" stroke="#6f8118" stroke-width="10.9"/><line x1="1534.1" y1="787.0" x2="1613.8" y2="1166.9" stroke="#000000" stroke-width="6.0"/><line x1="1405.8" y1="732.6" x2="1093.8" y2="940.7" stroke="#57671a" stroke-width="10.7"/><line x1="1431.1" y1="760.7" x2="1194.9" y2="1056.2" stroke="#66781a" stroke-width="7.3"/><line x1="1591.0" y1="758.4" x2="1828.6" y2="1029.1" stroke="#000000" stroke-width="9.5"/><line x1="1469.3" y1="780.4" x2="1353.1" y2="1126.4" stroke="#57671a" stroke-width="5.7"/><line x1="1394.2" y1="628.2" x2="1021.8" y2="510.9" stroke="#57671a" stroke-width="8.0"/><line x1="1456.7" y1="773.3" x2="1302.0" y2="1100.4" stroke="#6f8118" stroke-width="6.7"/><line x1="1612.8" y1="727.7" x2="1937.5" y2="925.3" stroke="#000000" stroke-width="9.2"/><line x1="1548.8" y1="778.5" x2="1677.5" y2="1142.3" stroke="#000000" stroke-width="3.9"/><line x1="1391.0" y1="652.1" x2="1041.4" y2="616.1" stroke="#6f8118" stroke-width="10.4"/><line x1="1612.8" y1="726.2" x2="1924.6" y2="911.5" stroke="#000000" stroke-width="6.4"/><line x1="1477.8" y1="778.0" x2="1376.5" y2="1154.0" stroke="#57671a" stroke-width="5.3"/><line x1="1428.1" y1="749.0" x2="1185.9" y2="1004.8" stroke="#66781a" stroke-width="7.6"/><line x1="1447.0" y1="763.3" x2="1264.8" y2="1057.3" stroke="#6f8118" stroke-width="10.1"/><line x1="1551.5" y1="774.3" x2="1682.0" y2="1108.1" stroke="#000000" stroke-width="4.5"/><line x1="1529.2" y1="780.3" x2="1593.4" y2="1138.7" stroke="#000000" stroke-width="5.5"/><line x1="1620.7" y1="702.2" x2="1969.0" y2="820.3" stroke="#000000" stroke-width="8.0"/><line x1="1498.7" y1="780.8" x2="1469.9" y2="1126.0" stroke="#6f8118" stroke-width="7.4"/><line x1="1535.7" y1="778.2" x2="1620.9" y2="1134.7" stroke="#000000" stroke-width="7.1"/><line x1="1464.4" y1="770.5" x2="1318.3" y2="1123.1" stroke="#6f8118" stroke-width="4.5"/><line x1="1622.4" y1="672.8" x2="1975.9" y2="699.7" stroke="#000000" stroke-width="8.3"/><line x1="1622.0" y1="677.3" x2="1957.6" y2="716.1" stroke="#080804" stroke-width="8.3"/><line x1="1421.8" y1="733.4" x2="1132.0" y2="964.7" stroke="#57671a" stroke-width="7.3"/><line x1="1451.5" y1="759.9" x2="1274.4" y2="1057.6" stroke="#6f8118" stroke-width="10.6"/><line x1="1405.3" y1="702.9" x2="1090.7" y2="820.9" stroke="#66781a" stroke-width="8.7"/><line x1="1492.5" y1="774.7" x2="1440.9" y2="1131.2" stroke="#57671a" stroke-width="7.6"/><line x1="1586.1" y1="745.9" x2="1841.8" y2="1015.3" stroke="#000000" stroke-width="10.7"/><line x1="1618.6" y1="655.2" x2="1982.7" y2="625.3" stroke="#000000" stroke-width="11.0"/><line x1="1563.8" y1="758.8" x2="1730.5" y2="1043.8" stroke="#000000" stroke-width="10.5"/><line x1="1412.6" y1="710.2" x2="1098.1" y2="861.2" stroke="#57671a" stroke-width="7.2"/><line x1="1616.6" y1="679.3" x2="1982.2" y2="730.4" stroke="#000000" stroke-width="9.3"/><line x1="1527.6" y1="770.5" x2="1586.4" y2="1096.4" stroke="#080804" stroke-width="4.2"/><line x1="1469.1" y1="763.7" x2="1351.3" y2="1061.6" stroke="#6f8118" stroke-width="5.6"/><line x1="1541.3" y1="766.8" x2="1651.0" y2="1110.5" stroke="#000000" stroke-width="8.2"/><line x1="1571.2" y1="752.2" x2="1768.6" y2="1029.1" stroke="#000000" stroke-width="7.6"/><line x1="1419.8" y1="719.2" x2="1155.5" y2="883.3" stroke="#6f8118" stroke-width="8.3"/><line x1="1554.0" y1="758.9" x2="1707.1" y2="1077.6" stroke="#000000" stroke-width="8.9"/><line x1="1413.9" y1="626.8" x2="1107.6" y2="505.8" stroke="#6f8118" stroke-width="8.7"/><line x1="1407.8" y1="678.5" x2="1084.2" y2="724.7" stroke="#6f8118" stroke-width="7.8"/><line x1="1442.1" y1="742.5" x2="1220.1" y2="1004.4" stroke="#6f8118" stroke-width="7.0"/><line x1="1598.2" y1="718.7" x2="1878.4" y2="888.9" stroke="#080804" stroke-width="8.1"/><line x1="1576.9" y1="741.5" x2="1802.2" y2="996.4" stroke="#000000" stroke-width="8.1"/><line x1="1479.2" y1="761.5" x2="1386.5" y2="1070.5" stroke="#6f8118" stroke-width="5.7"/><line x1="1410.9" y1="644.9" x2="1081.9" y2="579.8" stroke="#6f8118" stroke-width="6.6"/><line x1="1504.4" y1="765.6" x2="1491.9" y2="1077.2" stroke="#3e4a10" stroke-width="3.9"/><line x1="1576.3" y1="740.5" x2="1804.5" y2="997.3" stroke="#000000" stroke-width="9.0"/><line x1="1417.1" y1="700.9" x2="1121.6" y2="819.6" stroke="#3e4a10" stroke-width="7.3"/><line x1="1496.7" y1="763.5" x2="1461.4" y2="1062.1" stroke="#6f8118" stroke-width="6.8"/><line x1="1414.5" y1="638.4" x2="1097.9" y2="551.5" stroke="#66781a" stroke-width="10.7"/><line x1="1607.1" y1="658.2" x2="1920.5" y2="639.3" stroke="#000000" stroke-width="8.4"/><line x1="1416.8" y1="639.5" x2="1110.3" y2="557.0" stroke="#6f8118" stroke-width="11.3"/><line x1="1444.7" y1="735.8" x2="1226.0" y2="981.3" stroke="#66781a" stroke-width="11.2"/><line x1="1425.4" y1="620.3" x2="1165.4" y2="482.9" stroke="#3e4a10" stroke-width="10.3"/><line x1="1561.7" y1="744.7" x2="1725.1" y2="992.0" stroke="#000000" stroke-width="10.2"/><line x1="1455.8" y1="742.6" x2="1276.4" y2="1009.0" stroke="#6f8118" stroke-width="7.7"/><line x1="1525.3" y1="758.0" x2="1582.9" y2="1080.8" stroke="#000000" stroke-width="7.2"/><line x1="1552.7" y1="748.5" x2="1695.5" y2="1021.1" stroke="#000000" stroke-width="7.2"/><line x1="1593.8" y1="705.9" x2="1886.0" y2="848.8" stroke="#000000" stroke-width="8.7"/><line x1="1419.9" y1="653.1" x2="1140.6" y2="618.0" stroke="#57671a" stroke-width="9.1"/><line x1="1419.5" y1="662.6" x2="1131.1" y2="657.6" stroke="#3e4a10" stroke-width="7.4"/><line x1="1492.0" y1="753.6" x2="1438.1" y2="1045.1" stroke="#3e4a10" stroke-width="4.9"/><line x1="1581.7" y1="612.7" x2="1835.5" y2="434.2" stroke="#000000" stroke-width="9.8"/><line x1="1479.6" y1="750.2" x2="1388.6" y2="1020.9" stroke="#66781a" stroke-width="4.6"/><line x1="1429.3" y1="698.3" x2="1168.0" y2="810.6" stroke="#6f8118" stroke-width="9.5"/><line x1="1571.6" y1="727.2" x2="1770.9" y2="926.4" stroke="#000000" stroke-width="9.7"/><line x1="1596.0" y1="650.7" x2="1877.0" y2="607.4" stroke="#000000" stroke-width="9.3"/><line x1="1468.1" y1="740.3" x2="1343.9" y2="974.6" stroke="#6f8118" stroke-width="7.7"/><line x1="1595.7" y1="653.9" x2="1896.6" y2="618.5" stroke="#000000" stroke-width="8.2"/><line x1="1436.0" y1="626.1" x2="1196.2" y2="500.1" stroke="#66781a" stroke-width="8.1"/><line x1="1592.2" y1="649.2" x2="1886.0" y2="596.6" stroke="#000000" stroke-width="11.8"/><line x1="1469.4" y1="747.6" x2="1361.7" y2="976.7" stroke="#6f8118" stroke-width="8.0"/><line x1="1436.1" y1="697.1" x2="1188.3" y2="809.8" stroke="#6f8118" stroke-width="7.4"/><line x1="1435.7" y1="692.6" x2="1197.4" y2="785.5" stroke="#57671a" stroke-width="6.9"/><line x1="1586.8" y1="683.0" x2="1863.3" y2="749.2" stroke="#000000" stroke-width="12.0"/><line x1="1433.2" y1="652.8" x2="1185.9" y2="615.2" stroke="#6f8118" stroke-width="8.5"/><line x1="1586.7" y1="654.9" x2="1835.7" y2="625.5" stroke="#000000" stroke-width="10.2"/><line x1="1521.8" y1="753.5" x2="1556.3" y2="985.3" stroke="#000000" stroke-width="7.7"/><line x1="1434.3" y1="659.8" x2="1180.9" y2="644.7" stroke="#3e4a10" stroke-width="9.1"/><line x1="1564.4" y1="612.5" x2="1754.8" y2="435.9" stroke="#000000" stroke-width="10.8"/><line x1="1470.4" y1="727.4" x2="1351.4" y2="924.8" stroke="#57671a" stroke-width="7.6"/><line x1="1567.6" y1="711.3" x2="1763.9" y2="867.7" stroke="#000000" stroke-width="7.9"/><line x1="1475.4" y1="749.6" x2="1394.8" y2="957.6" stroke="#66781a" stroke-width="9.2"/><line x1="1447.6" y1="631.5" x2="1249.7" y2="525.2" stroke="#6f8118" stroke-width="8.6"/><line x1="1561.9" y1="713.0" x2="1745.4" y2="880.6" stroke="#000000" stroke-width="10.5"/><line x1="1442.5" y1="677.5" x2="1203.5" y2="725.6" stroke="#6f8118" stroke-width="10.1"/><line x1="1540.9" y1="748.0" x2="1615.4" y2="941.5" stroke="#000000" stroke-width="4.7"/><line x1="1472.2" y1="748.6" x2="1393.3" y2="931.7" stroke="#6f8118" stroke-width="4.7"/><line x1="1573.0" y1="655.7" x2="1796.7" y2="626.3" stroke="#000000" stroke-width="6.9"/><line x1="1466.2" y1="709.0" x2="1329.6" y2="853.4" stroke="#6f8118" stroke-width="9.0"/><line x1="1561.7" y1="629.9" x2="1741.5" y2="513.5" stroke="#000000" stroke-width="11.9"/><line x1="1481.0" y1="719.5" x2="1392.3" y2="897.5" stroke="#57671a" stroke-width="10.7"/><line x1="1475.0" y1="747.9" x2="1408.4" y2="913.7" stroke="#6f8118" stroke-width="6.8"/><line x1="1450.5" y1="677.8" x2="1257.8" y2="722.8" stroke="#6f8118" stroke-width="9.1"/><line x1="1560.4" y1="630.7" x2="1735.3" y2="517.5" stroke="#000000" stroke-width="7.9"/><line x1="1549.3" y1="710.0" x2="1682.7" y2="859.8" stroke="#000000" stroke-width="11.0"/><line x1="1464.0" y1="701.4" x2="1321.0" y2="820.4" stroke="#6f8118" stroke-width="11.7"/><line x1="1461.5" y1="635.2" x2="1295.7" y2="533.2" stroke="#66781a" stroke-width="9.1"/><line x1="1566.0" y1="674.7" x2="1755.1" y2="709.2" stroke="#000000" stroke-width="7.8"/><line x1="1555.3" y1="641.5" x2="1712.1" y2="565.1" stroke="#000000" stroke-width="12.3"/><line x1="1560.3" y1="658.0" x2="1726.9" y2="638.1" stroke="#000000" stroke-width="8.7"/><line x1="1476.4" y1="628.9" x2="1370.7" y2="512.8" stroke="#6f8118" stroke-width="7.4"/><line x1="1461.6" y1="660.2" x2="1299.8" y2="646.5" stroke="#6f8118" stroke-width="9.9"/><line x1="1468.5" y1="687.7" x2="1329.8" y2="768.9" stroke="#57671a" stroke-width="8.9"/><line x1="1501.9" y1="619.6" x2="1477.9" y2="459.9" stroke="#6f8118" stroke-width="10.7"/><line x1="1465.6" y1="663.9" x2="1321.1" y2="662.7" stroke="#6f8118" stroke-width="12.3"/><line x1="1539.0" y1="698.2" x2="1644.0" y2="815.8" stroke="#000000" stroke-width="11.8"/><line x1="1550.8" y1="677.8" x2="1690.6" y2="722.8" stroke="#000000" stroke-width="10.3"/><line x1="1545.5" y1="649.6" x2="1669.7" y2="600.2" stroke="#080804" stroke-width="7.4"/><line x1="1494.5" y1="631.1" x2="1448.7" y2="523.7" stroke="#57671a" stroke-width="8.9"/><line x1="1478.4" y1="681.2" x2="1380.3" y2="736.3" stroke="#6f8118" stroke-width="7.6"/><line x1="1529.3" y1="693.4" x2="1602.1" y2="796.3" stroke="#000000" stroke-width="11.9"/><line x1="1479.4" y1="672.5" x2="1382.9" y2="699.9" stroke="#3e4a10" stroke-width="10.3"/><line x1="1493.7" y1="753.2" x2="1485.3" y2="803.7" stroke="#66781a" stroke-width="7.7"/><line x1="1516.0" y1="636.7" x2="1542.6" y2="537.2" stroke="#080804" stroke-width="11.3"/><line x1="1490.0" y1="685.1" x2="1422.7" y2="760.5" stroke="#66781a" stroke-width="10.4"/><line x1="1484.3" y1="664.1" x2="1399.8" y2="663.4" stroke="#6f8118" stroke-width="8.8"/><line x1="1529.1" y1="674.2" x2="1595.8" y2="706.7" stroke="#000000" stroke-width="7.2"/><line x1="1507.7" y1="646.5" x2="1504.2" y2="582.7" stroke="#6f8118" stroke-width="12.0"/><line x1="1494.4" y1="657.0" x2="1448.2" y2="633.4" stroke="#3e4a10" stroke-width="10.3"/><line x1="1512.5" y1="653.0" x2="1525.6" y2="615.1" stroke="#000000" stroke-width="8.2"/><line x1="1504.7" y1="656.1" x2="1490.7" y2="627.1" stroke="#6f8118" stroke-width="12.5"/><line x1="1509.6" y1="658.7" x2="1512.8" y2="638.8" stroke="#66781a" stroke-width="11.7"/><g stroke="#4a4a4a" stroke-width="1" fill="none"><line x1="899.0" y1="642.0" x2="1769.0" y2="1042.0"/><line x1="899.0" y1="642.0" x2="1653.0" y2="408.0"/><line x1="952.9" y1="625.3" x2="1824.4" y2="1016.5"/><line x1="961.1" y1="670.6" x2="1716.7" y2="427.8"/><line x1="1006.7" y1="608.6" x2="1879.9" y2="991.0"/><line x1="1023.3" y1="699.1" x2="1780.4" y2="447.6"/><line x1="1060.6" y1="591.9" x2="1935.3" y2="965.5"/><line x1="1085.4" y1="727.7" x2="1844.1" y2="467.4"/><line x1="1114.4" y1="575.1" x2="1990.7" y2="940.0"/><line x1="1147.6" y1="756.3" x2="1907.9" y2="487.1"/><line x1="1168.3" y1="558.4" x2="2046.1" y2="914.5"/><line x1="1209.7" y1="784.9" x2="1971.6" y2="506.9"/><line x1="1222.1" y1="541.7" x2="2101.6" y2="889.0"/><line x1="1271.9" y1="813.4" x2="2035.3" y2="526.7"/><line x1="1276.0" y1="525.0" x2="2157.0" y2="863.5"/><line x1="1334.0" y1="842.0" x2="2099.0" y2="546.5"/><line x1="1329.9" y1="508.3" x2="2212.4" y2="838.0"/><line x1="1396.1" y1="870.6" x2="2162.7" y2="566.3"/><line x1="1383.7" y1="491.6" x2="2267.9" y2="812.5"/><line x1="1458.3" y1="899.1" x2="2226.4" y2="586.1"/><line x1="1437.6" y1="474.9" x2="2323.3" y2="787.0"/><line x1="1520.4" y1="927.7" x2="2290.1" y2="605.9"/><line x1="1491.4" y1="458.1" x2="2378.7" y2="761.5"/><line x1="1582.6" y1="956.3" x2="2353.9" y2="625.6"/><line x1="1545.3" y1="441.4" x2="2434.1" y2="736.0"/><line x1="1644.7" y1="984.9" x2="2417.6" y2="645.4"/><line x1="1599.1" y1="424.7" x2="2489.6" y2="710.5"/><line x1="1706.9" y1="1013.4" x2="2481.3" y2="665.2"/><line x1="1653.0" y1="408.0" x2="2545.0" y2="685.0"/><line x1="1769.0" y1="1042.0" x2="2545.0" y2="685.0"/></g><line x1="1398.9" y1="564.2" x2="1123.2" y2="312.0" stroke="#6f8118" stroke-width="7.5"/><line x1="1496.6" y1="515.3" x2="1468.9" y2="156.5" stroke="#57671a" stroke-width="8.7"/><line x1="1589.1" y1="537.0" x2="1788.1" y2="225.6" stroke="#000000" stroke-width="5.6"/><line x1="1635.0" y1="581.2" x2="1945.0" y2="379.2" stroke="#000000" stroke-width="8.5"/><line x1="1411.6" y1="551.4" x2="1163.7" y2="261.9" stroke="#6f8118" stroke-width="7.3"/><line x1="1498.2" y1="515.0" x2="1473.5" y2="141.4" stroke="#57671a" stroke-width="5.5"/><line x1="1643.5" y1="595.2" x2="1983.7" y2="422.4" stroke="#000000" stroke-width="5.6"/><line x1="1567.2" y1="525.7" x2="1721.4" y2="164.9" stroke="#000000" stroke-width="9.0"/><line x1="1461.5" y1="522.6" x2="1348.6" y2="179.6" stroke="#3e4a10" stroke-width="8.0"/><line x1="1588.3" y1="536.3" x2="1788.6" y2="218.0" stroke="#000000" stroke-width="8.2"/><line x1="1567.3" y1="525.7" x2="1712.9" y2="186.1" stroke="#000000" stroke-width="7.5"/><line x1="1653.4" y1="618.6" x2="2009.5" y2="507.3" stroke="#000000" stroke-width="5.6"/><line x1="1439.2" y1="532.2" x2="1268.8" y2="205.8" stroke="#66781a" stroke-width="5.6"/><line x1="1600.1" y1="544.2" x2="1846.1" y2="224.0" stroke="#000000" stroke-width="7.4"/><line x1="1655.3" y1="625.0" x2="2043.4" y2="522.1" stroke="#080804" stroke-width="7.9"/><line x1="1649.2" y1="607.2" x2="2007.4" y2="463.2" stroke="#000000" stroke-width="6.0"/><line x1="1561.1" y1="523.2" x2="1697.4" y2="161.9" stroke="#000000" stroke-width="6.6"/><line x1="1612.5" y1="554.5" x2="1885.5" y2="268.4" stroke="#000000" stroke-width="6.2"/><line x1="1660.6" y1="659.6" x2="2034.0" y2="648.9" stroke="#000000" stroke-width="6.3"/><line x1="1562.9" y1="523.9" x2="1695.6" y2="185.2" stroke="#000000" stroke-width="8.4"/><line x1="1584.7" y1="534.0" x2="1789.1" y2="187.3" stroke="#000000" stroke-width="7.3"/><line x1="1530.6" y1="515.7" x2="1588.0" y2="137.6" stroke="#000000" stroke-width="9.2"/><line x1="1360.7" y1="647.5" x2="1005.4" y2="607.6" stroke="#57671a" stroke-width="5.1"/><line x1="1391.8" y1="572.0" x2="1106.9" y2="346.5" stroke="#6f8118" stroke-width="6.2"/><line x1="1628.4" y1="571.6" x2="1938.6" y2="333.4" stroke="#000000" stroke-width="7.4"/><line x1="1465.0" y1="521.3" x2="1349.3" y2="137.1" stroke="#6f8118" stroke-width="8.2"/><line x1="1633.3" y1="578.3" x2="1966.3" y2="350.2" stroke="#080804" stroke-width="6.8"/><line x1="1365.0" y1="625.3" x2="988.5" y2="523.5" stroke="#66781a" stroke-width="6.8"/><line x1="1524.8" y1="515.1" x2="1567.2" y2="137.2" stroke="#000000" stroke-width="7.2"/><line x1="1416.5" y1="547.2" x2="1184.8" y2="251.7" stroke="#6f8118" stroke-width="7.4"/><line x1="1403.4" y1="559.1" x2="1121.2" y2="276.1" stroke="#6f8118" stroke-width="7.7"/><line x1="1493.3" y1="515.5" x2="1455.3" y2="134.1" stroke="#6f8118" stroke-width="7.1"/><line x1="1660.0" y1="652.8" x2="2047.0" y2="624.3" stroke="#080804" stroke-width="7.7"/><line x1="1425.8" y1="540.5" x2="1203.7" y2="206.9" stroke="#6f8118" stroke-width="8.2"/><line x1="1379.6" y1="590.7" x2="1061.1" y2="409.2" stroke="#57671a" stroke-width="5.9"/><line x1="1444.3" y1="529.9" x2="1286.7" y2="198.2" stroke="#6f8118" stroke-width="6.8"/><line x1="1653.2" y1="619.0" x2="2052.9" y2="495.0" stroke="#000000" stroke-width="7.4"/><line x1="1496.2" y1="515.3" x2="1464.6" y2="118.4" stroke="#6f8118" stroke-width="9.3"/><line x1="1491.6" y1="515.9" x2="1446.3" y2="109.1" stroke="#6f8118" stroke-width="8.3"/><line x1="1364.0" y1="631.0" x2="985.0" y2="544.1" stroke="#6f8118" stroke-width="5.4"/><line x1="1421.0" y1="544.2" x2="1183.6" y2="217.3" stroke="#6f8118" stroke-width="6.7"/><line x1="1367.5" y1="618.5" x2="991.9" y2="497.0" stroke="#6f8118" stroke-width="5.7"/><line x1="1452.6" y1="526.3" x2="1300.7" y2="149.1" stroke="#66781a" stroke-width="5.7"/><line x1="1553.1" y1="521.1" x2="1673.5" y2="138.4" stroke="#000000" stroke-width="7.1"/><line x1="1631.2" y1="576.2" x2="1954.0" y2="345.9" stroke="#000000" stroke-width="7.0"/><line x1="1639.1" y1="588.3" x2="1973.7" y2="394.8" stroke="#000000" stroke-width="7.7"/><line x1="1391.6" y1="573.2" x2="1089.7" y2="338.0" stroke="#66781a" stroke-width="6.1"/><line x1="1432.1" y1="537.0" x2="1231.1" y2="201.2" stroke="#6f8118" stroke-width="5.4"/><line x1="1405.1" y1="558.2" x2="1141.5" y2="287.1" stroke="#66781a" stroke-width="6.8"/><line x1="1636.1" y1="583.7" x2="1989.5" y2="361.9" stroke="#000000" stroke-width="6.8"/><line x1="1402.3" y1="561.1" x2="1133.3" y2="299.5" stroke="#6f8118" stroke-width="8.9"/><line x1="1654.5" y1="625.0" x2="2044.1" y2="521.2" stroke="#080804" stroke-width="5.5"/><line x1="1496.5" y1="515.9" x2="1467.2" y2="140.2" stroke="#57671a" stroke-width="6.3"/><line x1="1527.7" y1="516.3" x2="1581.4" y2="110.5" stroke="#000000" stroke-width="5.9"/><line x1="1658.8" y1="648.9" x2="2058.2" y2="608.9" stroke="#000000" stroke-width="8.4"/><line x1="1650.2" y1="612.4" x2="2004.2" y2="483.8" stroke="#000000" stroke-width="7.0"/><line x1="1381.0" y1="589.7" x2="1061.7" y2="402.8" stroke="#3e4a10" stroke-width="5.9"/><line x1="1376.6" y1="598.3" x2="1042.9" y2="431.4" stroke="#3e4a10" stroke-width="7.6"/><line x1="1390.7" y1="575.7" x2="1059.7" y2="326.4" stroke="#6f8118" stroke-width="7.6"/><line x1="1378.8" y1="594.9" x2="1039.7" y2="413.7" stroke="#6f8118" stroke-width="8.8"/><line x1="1429.9" y1="539.7" x2="1224.7" y2="213.7" stroke="#66781a" stroke-width="7.6"/><line x1="1579.9" y1="533.8" x2="1780.2" y2="170.2" stroke="#080804" stroke-width="9.3"/><line x1="1477.6" y1="520.0" x2="1397.0" y2="140.4" stroke="#66781a" stroke-width="5.7"/><line x1="1365.3" y1="632.8" x2="1002.3" y2="553.5" stroke="#6f8118" stroke-width="5.5"/><line x1="1390.8" y1="576.7" x2="1079.8" y2="345.2" stroke="#57671a" stroke-width="6.5"/><line x1="1392.4" y1="574.9" x2="1069.0" y2="325.9" stroke="#6f8118" stroke-width="6.3"/><line x1="1445.9" y1="531.7" x2="1285.1" y2="189.9" stroke="#6f8118" stroke-width="8.6"/><line x1="1615.7" y1="561.2" x2="1914.5" y2="275.6" stroke="#000000" stroke-width="8.6"/><line x1="1493.6" y1="518.1" x2="1455.9" y2="140.8" stroke="#3e4a10" stroke-width="6.7"/><line x1="1526.5" y1="518.3" x2="1574.0" y2="139.7" stroke="#000000" stroke-width="6.9"/><line x1="1466.9" y1="524.4" x2="1352.3" y2="137.5" stroke="#57671a" stroke-width="5.6"/><line x1="1455.7" y1="528.4" x2="1307.7" y2="146.0" stroke="#66781a" stroke-width="8.3"/><line x1="1648.2" y1="614.7" x2="2016.2" y2="484.8" stroke="#000000" stroke-width="9.6"/><line x1="1425.0" y1="546.1" x2="1196.2" y2="221.5" stroke="#6f8118" stroke-width="8.7"/><line x1="1555.9" y1="526.2" x2="1685.2" y2="152.4" stroke="#080804" stroke-width="9.4"/><line x1="1523.9" y1="519.5" x2="1564.3" y2="146.3" stroke="#000000" stroke-width="6.3"/><line x1="1620.9" y1="569.9" x2="1935.8" y2="306.5" stroke="#000000" stroke-width="9.6"/><line x1="1644.9" y1="609.0" x2="2024.9" y2="456.1" stroke="#000000" stroke-width="8.3"/><line x1="1648.7" y1="619.5" x2="2055.4" y2="490.6" stroke="#000000" stroke-width="7.2"/><line x1="1474.8" y1="523.7" x2="1378.8" y2="120.7" stroke="#66781a" stroke-width="8.0"/><line x1="1637.0" y1="594.5" x2="2015.4" y2="390.1" stroke="#000000" stroke-width="6.3"/><line x1="1374.7" y1="613.3" x2="989.6" y2="466.8" stroke="#6f8118" stroke-width="9.4"/><line x1="1450.3" y1="533.0" x2="1284.9" y2="158.2" stroke="#6f8118" stroke-width="6.0"/><line x1="1506.6" y1="520.1" x2="1501.9" y2="103.6" stroke="#6f8118" stroke-width="7.4"/><line x1="1581.9" y1="539.1" x2="1789.5" y2="186.6" stroke="#000000" stroke-width="10.0"/><line x1="1610.9" y1="561.1" x2="1908.0" y2="263.0" stroke="#000000" stroke-width="6.7"/><line x1="1615.6" y1="566.3" x2="1909.7" y2="298.4" stroke="#000000" stroke-width="6.1"/><line x1="1383.4" y1="596.2" x2="1051.4" y2="415.7" stroke="#6f8118" stroke-width="9.0"/><line x1="1437.5" y1="540.4" x2="1234.6" y2="185.7" stroke="#66781a" stroke-width="6.4"/><line x1="1497.1" y1="521.4" x2="1464.3" y2="100.4" stroke="#66781a" stroke-width="6.3"/><line x1="1614.5" y1="565.5" x2="1911.0" y2="290.3" stroke="#000000" stroke-width="7.3"/><line x1="1377.7" y1="609.5" x2="1028.0" y2="463.3" stroke="#66781a" stroke-width="8.6"/><line x1="1539.7" y1="524.3" x2="1630.9" y2="119.5" stroke="#000000" stroke-width="7.9"/><line x1="1456.9" y1="531.6" x2="1312.3" y2="158.9" stroke="#66781a" stroke-width="9.6"/><line x1="1411.5" y1="561.0" x2="1145.0" y2="277.0" stroke="#57671a" stroke-width="7.1"/><line x1="1492.9" y1="522.8" x2="1447.5" y2="106.0" stroke="#3e4a10" stroke-width="7.8"/><line x1="1635.4" y1="596.0" x2="1985.6" y2="408.7" stroke="#080804" stroke-width="7.1"/><line x1="1535.1" y1="524.2" x2="1607.0" y2="149.8" stroke="#000000" stroke-width="6.9"/><line x1="1545.5" y1="526.5" x2="1653.1" y2="128.6" stroke="#000000" stroke-width="8.3"/><line x1="1624.7" y1="579.5" x2="1956.4" y2="338.5" stroke="#000000" stroke-width="6.4"/><line x1="1504.7" y1="522.8" x2="1495.1" y2="138.1" stroke="#6f8118" stroke-width="10.0"/><line x1="1549.6" y1="528.3" x2="1672.2" y2="125.9" stroke="#000000" stroke-width="7.8"/><line x1="1377.9" y1="612.9" x2="1030.4" y2="476.4" stroke="#57671a" stroke-width="8.3"/><line x1="1382.2" y1="603.1" x2="1030.7" y2="433.1" stroke="#6f8118" stroke-width="6.8"/><line x1="1475.4" y1="527.7" x2="1382.5" y2="141.3" stroke="#57671a" stroke-width="9.2"/><line x1="1397.8" y1="579.9" x2="1102.0" y2="354.2" stroke="#66781a" stroke-width="8.0"/><line x1="1499.8" y1="524.3" x2="1476.3" y2="137.3" stroke="#66781a" stroke-width="7.1"/><line x1="1645.6" y1="626.4" x2="2044.9" y2="516.9" stroke="#000000" stroke-width="9.6"/><line x1="1470.2" y1="530.2" x2="1360.2" y2="143.6" stroke="#6f8118" stroke-width="7.8"/><line x1="1530.2" y1="525.9" x2="1595.5" y2="114.4" stroke="#000000" stroke-width="8.8"/><line x1="1421.5" y1="556.3" x2="1176.4" y2="251.6" stroke="#6f8118" stroke-width="7.0"/><line x1="1513.5" y1="525.4" x2="1528.6" y2="127.1" stroke="#080804" stroke-width="9.8"/><line x1="1505.1" y1="525.5" x2="1495.5" y2="105.5" stroke="#66781a" stroke-width="9.3"/><line x1="1547.3" y1="531.3" x2="1654.0" y2="168.8" stroke="#080804" stroke-width="8.9"/><line x1="1377.8" y1="625.0" x2="988.5" y2="508.5" stroke="#3e4a10" stroke-width="6.5"/><line x1="1634.4" y1="605.5" x2="2005.2" y2="433.0" stroke="#000000" stroke-width="9.2"/><line x1="1433.6" y1="550.7" x2="1218.9" y2="224.6" stroke="#66781a" stroke-width="8.4"/><line x1="1620.2" y1="582.7" x2="1941.7" y2="348.8" stroke="#000000" stroke-width="9.9"/><line x1="1546.1" y1="532.5" x2="1657.8" y2="144.3" stroke="#080804" stroke-width="10.4"/><line x1="1562.4" y1="538.5" x2="1710.8" y2="194.2" stroke="#000000" stroke-width="8.4"/><line x1="1582.3" y1="548.8" x2="1806.3" y2="199.3" stroke="#000000" stroke-width="7.2"/><line x1="1420.4" y1="562.2" x2="1156.0" y2="255.9" stroke="#3e4a10" stroke-width="7.2"/><line x1="1622.6" y1="589.1" x2="1947.9" y2="375.5" stroke="#000000" stroke-width="7.0"/><line x1="1415.7" y1="568.1" x2="1151.4" y2="294.0" stroke="#66781a" stroke-width="6.2"/><line x1="1556.5" y1="538.3" x2="1700.3" y2="162.9" stroke="#000000" stroke-width="6.2"/><line x1="1626.3" y1="600.0" x2="1991.4" y2="401.3" stroke="#000000" stroke-width="8.8"/><line x1="1452.2" y1="545.4" x2="1296.4" y2="215.7" stroke="#6f8118" stroke-width="7.1"/><line x1="1410.9" y1="577.0" x2="1122.3" y2="319.3" stroke="#57671a" stroke-width="9.9"/><line x1="1432.8" y1="557.5" x2="1222.8" y2="261.3" stroke="#57671a" stroke-width="10.0"/><line x1="1401.9" y1="590.8" x2="1090.8" y2="376.2" stroke="#6f8118" stroke-width="10.1"/><line x1="1624.8" y1="601.3" x2="1988.5" y2="405.1" stroke="#000000" stroke-width="9.9"/><line x1="1483.3" y1="536.9" x2="1412.2" y2="175.5" stroke="#6f8118" stroke-width="7.8"/><line x1="1479.7" y1="537.9" x2="1397.0" y2="174.0" stroke="#3e4a10" stroke-width="9.9"/><line x1="1449.8" y1="549.3" x2="1267.8" y2="192.1" stroke="#6f8118" stroke-width="10.4"/><line x1="1548.8" y1="541.8" x2="1664.8" y2="191.2" stroke="#000000" stroke-width="7.7"/><line x1="1633.1" y1="626.3" x2="2013.6" y2="510.7" stroke="#000000" stroke-width="9.5"/><line x1="1464.2" y1="544.9" x2="1326.7" y2="173.5" stroke="#66781a" stroke-width="9.8"/><line x1="1523.3" y1="537.4" x2="1565.5" y2="178.2" stroke="#000000" stroke-width="9.2"/><line x1="1511.6" y1="537.4" x2="1521.0" y2="168.1" stroke="#000000" stroke-width="8.3"/><line x1="1434.4" y1="562.8" x2="1210.1" y2="255.3" stroke="#6f8118" stroke-width="9.2"/><line x1="1575.1" y1="555.8" x2="1784.1" y2="216.2" stroke="#000000" stroke-width="7.2"/><line x1="1389.9" y1="625.4" x2="1054.8" y2="515.7" stroke="#66781a" stroke-width="6.5"/><line x1="1502.9" y1="540.8" x2="1487.3" y2="189.8" stroke="#6f8118" stroke-width="9.9"/><line x1="1401.1" y1="607.4" x2="1087.4" y2="441.3" stroke="#3e4a10" stroke-width="6.7"/><line x1="1618.9" y1="608.2" x2="1958.1" y2="436.3" stroke="#000000" stroke-width="10.9"/><line x1="1524.9" y1="543.9" x2="1573.2" y2="191.6" stroke="#000000" stroke-width="7.9"/><line x1="1549.4" y1="549.5" x2="1682.1" y2="178.2" stroke="#000000" stroke-width="9.4"/><line x1="1525.5" y1="544.2" x2="1575.5" y2="194.6" stroke="#080804" stroke-width="10.8"/><line x1="1418.9" y1="585.1" x2="1144.0" y2="342.4" stroke="#6f8118" stroke-width="7.3"/><line x1="1594.1" y1="578.1" x2="1869.4" y2="301.8" stroke="#000000" stroke-width="7.9"/><line x1="1469.7" y1="553.1" x2="1345.3" y2="195.8" stroke="#6f8118" stroke-width="6.7"/><line x1="1447.5" y1="566.1" x2="1252.4" y2="252.2" stroke="#57671a" stroke-width="9.1"/><line x1="1493.3" y1="549.9" x2="1445.8" y2="192.5" stroke="#66781a" stroke-width="9.5"/><line x1="1441.5" y1="572.0" x2="1233.8" y2="286.2" stroke="#6f8118" stroke-width="8.2"/><line x1="1565.8" y1="563.8" x2="1749.3" y2="242.8" stroke="#000000" stroke-width="10.6"/><line x1="1567.3" y1="566.4" x2="1751.7" y2="260.0" stroke="#000000" stroke-width="8.4"/><line x1="1483.4" y1="555.2" x2="1402.8" y2="204.2" stroke="#6f8118" stroke-width="9.5"/><line x1="1478.1" y1="557.4" x2="1388.7" y2="243.0" stroke="#66781a" stroke-width="8.7"/><line x1="1516.7" y1="553.0" x2="1542.9" y2="198.4" stroke="#000000" stroke-width="9.7"/><line x1="1600.9" y1="599.6" x2="1883.4" y2="402.5" stroke="#000000" stroke-width="6.5"/><line x1="1466.0" y1="563.2" x2="1330.6" y2="241.2" stroke="#6f8118" stroke-width="6.7"/><line x1="1540.2" y1="558.2" x2="1638.4" y2="230.1" stroke="#000000" stroke-width="10.5"/><line x1="1603.4" y1="610.3" x2="1912.1" y2="435.0" stroke="#000000" stroke-width="6.8"/><line x1="1434.5" y1="589.5" x2="1207.6" y2="360.5" stroke="#66781a" stroke-width="10.2"/><line x1="1546.0" y1="565.5" x2="1668.8" y2="243.0" stroke="#000000" stroke-width="7.7"/><line x1="1524.1" y1="560.8" x2="1573.0" y2="238.3" stroke="#000000" stroke-width="10.8"/><line x1="1486.6" y1="563.7" x2="1412.3" y2="222.9" stroke="#6f8118" stroke-width="7.4"/><line x1="1469.7" y1="569.6" x2="1348.7" y2="274.2" stroke="#3e4a10" stroke-width="8.0"/><line x1="1488.9" y1="564.5" x2="1423.5" y2="231.3" stroke="#6f8118" stroke-width="9.4"/><line x1="1536.9" y1="567.2" x2="1632.3" y2="241.5" stroke="#000000" stroke-width="9.9"/><line x1="1585.4" y1="600.4" x2="1851.0" y2="380.2" stroke="#000000" stroke-width="10.3"/><line x1="1585.2" y1="601.1" x2="1841.5" y2="390.6" stroke="#000000" stroke-width="6.6"/><line x1="1544.6" y1="572.7" x2="1658.1" y2="284.9" stroke="#000000" stroke-width="6.5"/><line x1="1443.6" y1="602.2" x2="1232.8" y2="400.9" stroke="#6f8118" stroke-width="11.0"/><line x1="1575.4" y1="600.8" x2="1789.9" y2="397.4" stroke="#000000" stroke-width="8.7"/><line x1="1463.3" y1="586.7" x2="1321.4" y2="343.3" stroke="#66781a" stroke-width="7.1"/><line x1="1464.0" y1="591.5" x2="1308.5" y2="337.9" stroke="#6f8118" stroke-width="7.8"/><line x1="1556.9" y1="592.4" x2="1720.6" y2="349.3" stroke="#000000" stroke-width="11.5"/><line x1="1478.3" y1="585.0" x2="1383.2" y2="335.6" stroke="#6f8118" stroke-width="9.0"/><line x1="1547.6" y1="588.4" x2="1683.4" y2="324.6" stroke="#000000" stroke-width="8.9"/><line x1="1540.6" y1="585.4" x2="1649.5" y2="317.5" stroke="#000000" stroke-width="9.5"/><line x1="1483.5" y1="587.6" x2="1397.7" y2="326.2" stroke="#6f8118" stroke-width="9.1"/><line x1="1474.7" y1="591.6" x2="1364.1" y2="354.3" stroke="#66781a" stroke-width="11.8"/><line x1="1490.6" y1="586.0" x2="1434.6" y2="341.3" stroke="#6f8118" stroke-width="8.5"/><line x1="1506.0" y1="584.3" x2="1497.1" y2="310.8" stroke="#57671a" stroke-width="9.1"/><line x1="1454.8" y1="606.3" x2="1284.6" y2="423.1" stroke="#6f8118" stroke-width="7.5"/><line x1="1492.4" y1="590.1" x2="1439.6" y2="347.9" stroke="#57671a" stroke-width="6.9"/><line x1="1507.9" y1="596.6" x2="1505.9" y2="381.4" stroke="#57671a" stroke-width="8.0"/><line x1="1531.0" y1="603.6" x2="1608.9" y2="393.4" stroke="#000000" stroke-width="8.0"/><path d="M1508 664 L1448 637 M1508 664 L1578 634" stroke="#d02010" stroke-width="1.2"/><path d="M1508 664 V569" stroke="#303030" stroke-width="1"/></svg></div>
<div class="a" style="left:0px;top:1055px;width:440px;height:30px;background:#ffffff;"></div>
<svg class="a" style="left:5px;top:1061px;" width="16" height="18" viewBox="0 0 16 18"><rect x="0" y="0" width="15" height="17" rx="2" fill="#3aa8a8"/><text x="3" y="12" font-size="11" font-weight="bold" fill="#fff" font-family="Liberation Sans">3</text><rect x="0" y="13" width="15" height="4" fill="#2a7f7f"/></svg>
<div class="t" style="left:26px;top:1064.00px;font-size:13px;line-height:13px;color:#000;font-family:'Liberation Sans', sans-serif;transform:scaleX(0.88);transform-origin:0 0;">Render Setup: OctaneRender 2020.2.5 - 11.11</div>
<svg class="a" style="left:315px;top:1060px;" width="120" height="20" viewBox="0 0 120 20"><line x1="5" y1="9.5" x2="15" y2="9.5" stroke="#000" stroke-width="1"/><rect x="50.5" y="4.5" width="9" height="9" fill="none" stroke="#ccc"/><line x1="96" y1="4" x2="106" y2="14" stroke="#000" stroke-width="1.1"/><line x1="106" y1="4" x2="96" y2="14" stroke="#000" stroke-width="1.1"/></svg>
<div class="a" style="left:0px;top:1085px;width:440px;height:888px;background:#444444;"></div>
<div class="t" style="left:4px;top:1098.84px;font-size:12px;line-height:12px;color:#e0e0e0;font-family:'Liberation Sans', sans-serif;transform:scaleX(0.93);transform-origin:0 0;">Target:</div>
<div class="a" style="left:92px;top:1094px;width:198px;height:20px;background:#656565;"></div>
<div class="t" style="left:96px;top:1098.16px;font-size:12px;line-height:12px;color:#d8d8d8;font-family:'Liberation Sans', sans-serif;transform:scaleX(0.87);transform-origin:0 0;">Production Rendering Mode</div>
<svg class="a" style="left:278px;top:1101.0px;" width="8" height="6" viewBox="0 0 8 6"><path d="M0.5 0.5 H7.5 L4 5Z" fill="#d8d8d8"/></svg>
<div class="t" style="left:4px;top:1126.84px;font-size:12px;line-height:12px;color:#e0e0e0;font-family:'Liberation Sans', sans-serif;transform:scaleX(0.93);transform-origin:0 0;">Preset:</div>
<div class="a" style="left:92px;top:1122px;width:198px;height:20px;background:#656565;"></div>
<div class="t" style="left:96px;top:1126.16px;font-size:12px;line-height:12px;color:#8a8a8a;font-family:'Liberation Sans', sans-serif;transform:scaleX(0.87);transform-origin:0 0;">No preset selected</div>
<svg class="a" style="left:278px;top:1129.0px;" width="8" height="6" viewBox="0 0 8 6"><path d="M0.5 0.5 H7.5 L4 5Z" fill="#d8d8d8"/></svg>
<div class="t" style="left:4px;top:1154.84px;font-size:12px;line-height:12px;color:#e0e0e0;font-family:'Liberation Sans', sans-serif;transform:scaleX(0.93);transform-origin:0 0;">Renderer:</div>
<div class="a" style="left:92px;top:1150px;width:198px;height:20px;background:#656565;"></div>
<div class="t" style="left:96px;top:1154.16px;font-size:12px;line-height:12px;color:#d8d8d8;font-family:'Liberation Sans', sans-serif;transform:scaleX(0.87);transform-origin:0 0;">OctaneRender 2020.2.5 - 11.11</div>
<svg class="a" style="left:278px;top:1157.0px;" width="8" height="6" viewBox="0 0 8 6"><path d="M0.5 0.5 H7.5 L4 5Z" fill="#d8d8d8"/></svg>
<div class="a" style="left:298px;top:1094px;width:132px;height:48px;background:#555555;border-radius:4px;"></div>
<div class="t" style="left:64.0px;width:600px;text-align:center;top:1112.16px;font-size:12px;line-height:12px;color:#d8d8d8;transform:scaleX(0.88);transform-origin:50% 0;">Render</div>
<div class="a" style="left:298px;top:1154px;width:10px;height:10px;background:#5a5a5a;"></div>
<div class="t" style="left:310px;top:1154.84px;font-size:12px;line-height:12px;color:#e0e0e0;font-family:'Liberation Sans', sans-serif;transform:scaleX(0.93);transform-origin:0 0;">Save File</div>
<div class="t" style="left:413px;top:1154.84px;font-size:12px;line-height:12px;color:#e0e0e0;font-family:'Liberation Sans', sans-serif;transform:scaleX(0.93);transform-origin:0 0;">...</div>
<div class="t" style="left:4px;top:1187.84px;font-size:12px;line-height:12px;color:#e0e0e0;font-family:'Liberation Sans', sans-serif;transform:scaleX(0.93);transform-origin:0 0;">View to Render:</div>
<div class="a" style="left:92px;top:1183px;width:310px;height:20px;background:#656565;"></div>
<div class="t" style="left:96px;top:1187.16px;font-size:12px;line-height:12px;color:#d8d8d8;font-family:'Liberation Sans', sans-serif;transform:scaleX(0.87);transform-origin:0 0;">Quad 4 - Perspective</div>
<svg class="a" style="left:390px;top:1190.0px;" width="8" height="6" viewBox="0 0 8 6"><path d="M0.5 0.5 H7.5 L4 5Z" fill="#d8d8d8"/></svg>
<svg class="a" style="left:413px;top:1186px;" width="12" height="15" viewBox="0 0 12 15"><path d="M3 7 V4.5 A3 3 0 0 1 9 4.5 V7" stroke="#ddd" stroke-width="1.8" fill="none"/><rect x="1" y="7" width="10" height="8" rx="1" fill="#ddd"/><rect x="5" y="9.5" width="2" height="3" fill="#444"/></svg>
<div class="a" style="left:0px;top:1238px;width:439px;height:1px;background:#222;"></div>
<div class="a" style="left:-2px;top:1219px;width:54px;height:20px;background:#3d3d3d;border:1.5px solid #151515;border-bottom:1px solid #222;border-radius:3px 3px 0 0;"></div>
<div class="t" style="left:-274.5px;width:600px;text-align:center;top:1221.84px;font-size:12px;line-height:12px;color:#e8e8e8;transform:scaleX(0.88);transform-origin:50% 0;">Common</div>
<div class="a" style="left:52px;top:1217px;width:42px;height:23px;background:#4a4a4a;border:1.5px solid #151515;border-bottom:none;border-radius:3px 3px 0 0;"></div>
<div class="t" style="left:-226.5px;width:600px;text-align:center;top:1221.84px;font-size:12px;line-height:12px;color:#e8e8e8;transform:scaleX(0.88);transform-origin:50% 0;">Kernel</div>
<div class="a" style="left:94px;top:1219px;width:49px;height:20px;background:#3d3d3d;border:1.5px solid #151515;border-bottom:1px solid #222;border-radius:3px 3px 0 0;"></div>
<div class="t" style="left:-181.0px;width:600px;text-align:center;top:1221.84px;font-size:12px;line-height:12px;color:#e8e8e8;transform:scaleX(0.88);transform-origin:50% 0;">Camera</div>
<div class="a" style="left:143px;top:1219px;width:49px;height:20px;background:#3d3d3d;border:1.5px solid #151515;border-bottom:1px solid #222;border-radius:3px 3px 0 0;"></div>
<div class="t" style="left:-132.0px;width:600px;text-align:center;top:1221.84px;font-size:12px;line-height:12px;color:#e8e8e8;transform:scaleX(0.88);transform-origin:50% 0;">Devices</div>
<div class="a" style="left:192px;top:1219px;width:42px;height:20px;background:#3d3d3d;border:1.5px solid #151515;border-bottom:1px solid #222;border-radius:3px 3px 0 0;"></div>
<div class="t" style="left:-86.5px;width:600px;text-align:center;top:1221.84px;font-size:12px;line-height:12px;color:#e8e8e8;transform:scaleX(0.88);transform-origin:50% 0;">Tools</div>
<div class="a" style="left:234px;top:1219px;width:50px;height:20px;background:#3d3d3d;border:1.5px solid #151515;border-bottom:1px solid #222;border-radius:3px 3px 0 0;"></div>
<div class="t" style="left:-40.5px;width:600px;text-align:center;top:1221.84px;font-size:12px;line-height:12px;color:#e8e8e8;transform:scaleX(0.88);transform-origin:50% 0;">Support</div>
<div class="a" style="left:284px;top:1219px;width:51px;height:20px;background:#3d3d3d;border:1.5px solid #151515;border-bottom:1px solid #222;border-radius:3px 3px 0 0;"></div>
<div class="t" style="left:10.0px;width:600px;text-align:center;top:1221.84px;font-size:12px;line-height:12px;color:#e8e8e8;transform:scaleX(0.88);transform-origin:50% 0;">Account</div>
<div class="a" style="left:335px;top:1219px;width:93px;height:20px;background:#3d3d3d;border:1.5px solid #151515;border-bottom:1px solid #222;border-radius:3px 3px 0 0;"></div>
<div class="t" style="left:82.0px;width:600px;text-align:center;top:1221.84px;font-size:12px;line-height:12px;color:#e8e8e8;transform:scaleX(0.88);transform-origin:50% 0;">Render Elements</div>
<div class="a" style="left:428px;top:1246px;width:6px;height:722px;background:#3a3a3a;border-radius:3px;"></div>
<div class="a" style="left:428px;top:1246px;width:6px;height:130px;background:#4e4e4e;border-radius:3px;"></div>
<div class="a" style="left:2px;top:1248px;width:424px;height:333px;background:#525252;border-radius:3px;"></div>
<svg class="a" style="left:8px;top:1253px;" width="9" height="8" viewBox="0 0 9 8"><path d="M0.5 1 H8 L4.25 6.5Z" fill="#bdbdbd"/></svg>
<div class="t" style="left:21px;top:1251.42px;font-size:12.5px;line-height:12.5px;color:#f2f2f2;font-weight:bold;font-family:'Liberation Sans', sans-serif;transform:scaleX(0.94);transform-origin:0 0;">Render View Settings</div>
<svg class="a" style="left:412px;top:1252px;" width="8" height="8" viewBox="0 0 8 8"><rect x="0" y="0" width="1.2" height="1.2" fill="#888"/><rect x="0" y="3" width="1.2" height="1.2" fill="#888"/><rect x="0" y="6" width="1.2" height="1.2" fill="#888"/><rect x="3" y="0" width="1.2" height="1.2" fill="#888"/><rect x="3" y="3" width="1.2" height="1.2" fill="#888"/><rect x="3" y="6" width="1.2" height="1.2" fill="#888"/><rect x="6" y="0" width="1.2" height="1.2" fill="#888"/><rect x="6" y="3" width="1.2" height="1.2" fill="#888"/><rect x="6" y="6" width="1.2" height="1.2" fill="#888"/></svg>
<svg class="a" style="left:8px;top:1272px;overflow:hidden;" width="410" height="56" viewBox="0 0 410 56"><rect x="0" y="0" width="410" height="56" fill="#7c8240"/><rect x="0" y="0" width="410" height="10" fill="#8a8a62" opacity="0.7"/><ellipse cx="300" cy="44" rx="50" ry="9" fill="#b0a058" opacity="0.8"/><ellipse cx="150" cy="50" rx="90" ry="6" fill="#a09048" opacity="0.6"/><ellipse cx="166" cy="14" rx="2.9" ry="2.0" fill="#6a7630" opacity="0.85"/><ellipse cx="103" cy="24" rx="5.4" ry="4.4" fill="#687a2e" opacity="0.85"/><ellipse cx="201" cy="26" rx="5.1" ry="3.5" fill="#4a5e22" opacity="0.85"/><ellipse cx="337" cy="49" rx="3.1" ry="2.4" fill="#7c8838" opacity="0.85"/><ellipse cx="139" cy="53" rx="4.6" ry="4.2" fill="#b0a660" opacity="0.85"/><ellipse cx="130" cy="6" rx="4.8" ry="3.7" fill="#4a5e22" opacity="0.85"/><ellipse cx="406" cy="32" rx="4.3" ry="4.1" fill="#4a6a20" opacity="0.85"/><ellipse cx="147" cy="15" rx="6.6" ry="4.4" fill="#b0a660" opacity="0.85"/><ellipse cx="244" cy="55" rx="6.7" ry="5.8" fill="#56682a" opacity="0.85"/><ellipse cx="45" cy="13" rx="5.4" ry="4.2" fill="#84883a" opacity="0.85"/><ellipse cx="259" cy="11" rx="5.1" ry="3.8" fill="#7c8838" opacity="0.85"/><ellipse cx="215" cy="14" rx="5.9" ry="3.7" fill="#8e9444" opacity="0.85"/><ellipse cx="182" cy="32" rx="6.1" ry="4.0" fill="#b0a660" opacity="0.85"/><ellipse cx="378" cy="11" rx="6.3" ry="5.3" fill="#7c8838" opacity="0.85"/><ellipse cx="167" cy="9" rx="2.7" ry="1.8" fill="#7c8838" opacity="0.85"/><ellipse cx="168" cy="52" rx="6.4" ry="4.7" fill="#b0a660" opacity="0.85"/><ellipse cx="327" cy="48" rx="2.6" ry="2.4" fill="#7c8838" opacity="0.85"/><ellipse cx="278" cy="30" rx="2.1" ry="1.9" fill="#4a5e22" opacity="0.85"/><ellipse cx="89" cy="25" rx="6.1" ry="4.6" fill="#84883a" opacity="0.85"/><ellipse cx="334" cy="32" rx="2.9" ry="1.8" fill="#4a5e22" opacity="0.85"/><ellipse cx="163" cy="27" rx="3.6" ry="3.1" fill="#a09c52" opacity="0.85"/><ellipse cx="43" cy="40" rx="3.6" ry="3.2" fill="#8e9444" opacity="0.85"/><ellipse cx="157" cy="27" rx="6.8" ry="6.5" fill="#84883a" opacity="0.85"/><ellipse cx="395" cy="17" rx="4.5" ry="4.3" fill="#4a5e22" opacity="0.85"/><ellipse cx="219" cy="52" rx="3.3" ry="3.1" fill="#84883a" opacity="0.85"/><ellipse cx="397" cy="47" rx="2.8" ry="2.1" fill="#687a2e" opacity="0.85"/><ellipse cx="254" cy="41" rx="3.0" ry="2.2" fill="#8e9444" opacity="0.85"/><ellipse cx="142" cy="39" rx="5.5" ry="5.4" fill="#8e9444" opacity="0.85"/><ellipse cx="365" cy="39" rx="5.9" ry="4.2" fill="#84883a" opacity="0.85"/><ellipse cx="355" cy="16" rx="6.3" ry="4.7" fill="#5a7a28" opacity="0.85"/><ellipse cx="1" cy="20" rx="5.4" ry="4.8" fill="#7c8838" opacity="0.85"/><ellipse cx="210" cy="46" rx="6.7" ry="4.7" fill="#84883a" opacity="0.85"/><ellipse cx="192" cy="32" rx="5.1" ry="4.3" fill="#687a2e" opacity="0.85"/><ellipse cx="315" cy="14" rx="2.1" ry="1.4" fill="#a09c52" opacity="0.85"/><ellipse cx="31" cy="6" rx="2.3" ry="1.6" fill="#9a9048" opacity="0.85"/><ellipse cx="257" cy="41" rx="4.9" ry="3.3" fill="#6a7630" opacity="0.85"/><ellipse cx="407" cy="45" rx="4.0" ry="2.7" fill="#5a7a28" opacity="0.85"/><ellipse cx="370" cy="49" rx="5.5" ry="4.1" fill="#9a9048" opacity="0.85"/><ellipse cx="73" cy="17" rx="3.4" ry="2.8" fill="#84883a" opacity="0.85"/><ellipse cx="75" cy="51" rx="7.0" ry="5.8" fill="#b0a660" opacity="0.85"/><ellipse cx="273" cy="55" rx="4.7" ry="4.7" fill="#9a9048" opacity="0.85"/><ellipse cx="6" cy="21" rx="4.5" ry="3.3" fill="#56682a" opacity="0.85"/><ellipse cx="234" cy="32" rx="5.2" ry="4.3" fill="#84883a" opacity="0.85"/><ellipse cx="107" cy="11" rx="6.6" ry="5.0" fill="#56682a" opacity="0.85"/><ellipse cx="140" cy="16" rx="5.8" ry="3.8" fill="#b0a660" opacity="0.85"/><ellipse cx="24" cy="44" rx="3.1" ry="2.1" fill="#b0a660" opacity="0.85"/><ellipse cx="70" cy="18" rx="3.8" ry="3.2" fill="#8e9444" opacity="0.85"/><ellipse cx="318" cy="13" rx="3.8" ry="3.7" fill="#9a9048" opacity="0.85"/><ellipse cx="33" cy="39" rx="5.6" ry="5.2" fill="#7c8838" opacity="0.85"/><ellipse cx="224" cy="6" rx="4.6" ry="3.4" fill="#4a5e22" opacity="0.85"/><ellipse cx="357" cy="41" rx="5.1" ry="4.6" fill="#4a6a20" opacity="0.85"/><ellipse cx="366" cy="46" rx="4.2" ry="3.0" fill="#4a6a20" opacity="0.85"/><ellipse cx="95" cy="52" rx="6.0" ry="5.4" fill="#8e9444" opacity="0.85"/><ellipse cx="232" cy="42" rx="5.0" ry="4.8" fill="#7c8838" opacity="0.85"/><ellipse cx="359" cy="48" rx="5.9" ry="4.4" fill="#4a5e22" opacity="0.85"/><ellipse cx="240" cy="5" rx="6.7" ry="4.4" fill="#56682a" opacity="0.85"/><ellipse cx="361" cy="46" rx="3.5" ry="2.3" fill="#84883a" opacity="0.85"/><ellipse cx="17" cy="13" rx="5.4" ry="5.1" fill="#4a5e22" opacity="0.85"/><ellipse cx="330" cy="54" rx="3.9" ry="2.8" fill="#8e9444" opacity="0.85"/><ellipse cx="284" cy="5" rx="6.3" ry="4.5" fill="#84883a" opacity="0.85"/><ellipse cx="172" cy="41" rx="5.9" ry="3.9" fill="#84883a" opacity="0.85"/><ellipse cx="407" cy="15" rx="5.2" ry="3.5" fill="#4a6a20" opacity="0.85"/><ellipse cx="232" cy="5" rx="3.0" ry="2.9" fill="#7c8838" opacity="0.85"/><ellipse cx="258" cy="7" rx="6.4" ry="4.3" fill="#84883a" opacity="0.85"/><ellipse cx="61" cy="52" rx="2.2" ry="1.7" fill="#b0a660" opacity="0.85"/><ellipse cx="30" cy="35" rx="3.7" ry="2.4" fill="#687a2e" opacity="0.85"/><ellipse cx="37" cy="30" rx="3.2" ry="2.6" fill="#8e9444" opacity="0.85"/><ellipse cx="293" cy="9" rx="5.1" ry="4.9" fill="#7c8838" opacity="0.85"/><ellipse cx="55" cy="42" rx="3.2" ry="3.0" fill="#a09c52" opacity="0.85"/><ellipse cx="69" cy="31" rx="6.0" ry="5.8" fill="#9a9048" opacity="0.85"/><ellipse cx="32" cy="17" rx="3.1" ry="2.8" fill="#84883a" opacity="0.85"/><ellipse cx="215" cy="8" rx="3.3" ry="2.9" fill="#4a5e22" opacity="0.85"/><ellipse cx="203" cy="9" rx="5.1" ry="5.0" fill="#84883a" opacity="0.85"/><ellipse cx="25" cy="14" rx="2.2" ry="1.6" fill="#a09c52" opacity="0.85"/><ellipse cx="369" cy="39" rx="2.1" ry="1.7" fill="#8e9444" opacity="0.85"/><ellipse cx="47" cy="22" rx="2.7" ry="2.0" fill="#a09c52" opacity="0.85"/><ellipse cx="81" cy="7" rx="6.8" ry="5.0" fill="#7c8838" opacity="0.85"/><ellipse cx="249" cy="47" rx="3.9" ry="2.9" fill="#4a5e22" opacity="0.85"/><ellipse cx="365" cy="17" rx="2.8" ry="1.7" fill="#5a7a28" opacity="0.85"/><ellipse cx="141" cy="17" rx="6.7" ry="5.8" fill="#84883a" opacity="0.85"/><ellipse cx="47" cy="27" rx="5.5" ry="5.4" fill="#4a5e22" opacity="0.85"/><ellipse cx="204" cy="33" rx="3.9" ry="3.2" fill="#a09c52" opacity="0.85"/><ellipse cx="134" cy="22" rx="2.6" ry="2.1" fill="#6a7630" opacity="0.85"/><ellipse cx="381" cy="15" rx="3.6" ry="2.3" fill="#a09c52" opacity="0.85"/><ellipse cx="100" cy="27" rx="4.2" ry="2.6" fill="#a09c52" opacity="0.85"/><ellipse cx="32" cy="24" rx="5.7" ry="4.1" fill="#b0a660" opacity="0.85"/><ellipse cx="175" cy="52" rx="3.6" ry="3.6" fill="#687a2e" opacity="0.85"/><ellipse cx="284" cy="52" rx="6.3" ry="6.1" fill="#84883a" opacity="0.85"/><ellipse cx="318" cy="8" rx="6.6" ry="5.2" fill="#b0a660" opacity="0.85"/><ellipse cx="139" cy="35" rx="5.5" ry="3.4" fill="#6a7630" opacity="0.85"/><ellipse cx="260" cy="49" rx="3.0" ry="2.8" fill="#687a2e" opacity="0.85"/><ellipse cx="237" cy="5" rx="6.0" ry="4.1" fill="#6a7630" opacity="0.85"/><ellipse cx="5" cy="26" rx="6.7" ry="4.8" fill="#7c8838" opacity="0.85"/><ellipse cx="336" cy="40" rx="7.0" ry="6.2" fill="#5a7a28" opacity="0.85"/><ellipse cx="308" cy="24" rx="2.5" ry="1.8" fill="#9a9048" opacity="0.85"/><ellipse cx="125" cy="48" rx="5.6" ry="5.1" fill="#6a7630" opacity="0.85"/><ellipse cx="14" cy="35" rx="2.3" ry="1.9" fill="#7c8838" opacity="0.85"/><ellipse cx="364" cy="35" rx="3.1" ry="3.1" fill="#6a8a30" opacity="0.85"/><ellipse cx="103" cy="17" rx="2.9" ry="2.1" fill="#8e9444" opacity="0.85"/><ellipse cx="135" cy="11" rx="4.5" ry="3.8" fill="#687a2e" opacity="0.85"/><ellipse cx="212" cy="16" rx="4.2" ry="2.7" fill="#56682a" opacity="0.85"/><ellipse cx="138" cy="45" rx="4.0" ry="3.7" fill="#56682a" opacity="0.85"/><ellipse cx="173" cy="26" rx="2.5" ry="1.5" fill="#6a7630" opacity="0.85"/><ellipse cx="318" cy="20" rx="2.6" ry="2.3" fill="#a09c52" opacity="0.85"/><ellipse cx="71" cy="33" rx="5.2" ry="3.3" fill="#6a7630" opacity="0.85"/><ellipse cx="133" cy="54" rx="3.1" ry="2.4" fill="#9a9048" opacity="0.85"/><ellipse cx="18" cy="38" rx="3.3" ry="2.7" fill="#4a5e22" opacity="0.85"/><ellipse cx="89" cy="11" rx="5.5" ry="4.8" fill="#9a9048" opacity="0.85"/><ellipse cx="387" cy="52" rx="6.3" ry="5.8" fill="#9a9048" opacity="0.85"/><ellipse cx="295" cy="54" rx="5.0" ry="4.1" fill="#9a9048" opacity="0.85"/><ellipse cx="346" cy="32" rx="2.1" ry="1.8" fill="#6a8a30" opacity="0.85"/><ellipse cx="19" cy="32" rx="6.8" ry="5.6" fill="#4a5e22" opacity="0.85"/><ellipse cx="71" cy="21" rx="6.8" ry="5.9" fill="#9a9048" opacity="0.85"/><ellipse cx="121" cy="39" rx="3.7" ry="2.5" fill="#7c8838" opacity="0.85"/><ellipse cx="17" cy="37" rx="4.4" ry="3.4" fill="#9a9048" opacity="0.85"/><ellipse cx="223" cy="23" rx="5.2" ry="5.0" fill="#a09c52" opacity="0.85"/><ellipse cx="43" cy="15" rx="5.9" ry="3.9" fill="#a09c52" opacity="0.85"/><ellipse cx="279" cy="52" rx="3.8" ry="2.8" fill="#8e9444" opacity="0.85"/><ellipse cx="243" cy="35" rx="6.9" ry="6.9" fill="#a09c52" opacity="0.85"/><ellipse cx="167" cy="11" rx="5.3" ry="5.3" fill="#7c8838" opacity="0.85"/><ellipse cx="118" cy="40" rx="5.9" ry="5.6" fill="#56682a" opacity="0.85"/><ellipse cx="225" cy="32" rx="2.7" ry="2.1" fill="#9a9048" opacity="0.85"/><ellipse cx="53" cy="20" rx="5.7" ry="3.6" fill="#4a5e22" opacity="0.85"/><ellipse cx="12" cy="30" rx="4.4" ry="2.8" fill="#a09c52" opacity="0.85"/><ellipse cx="99" cy="30" rx="2.2" ry="1.7" fill="#6a7630" opacity="0.85"/><ellipse cx="379" cy="33" rx="2.6" ry="2.3" fill="#4a5e22" opacity="0.85"/><ellipse cx="220" cy="6" rx="2.1" ry="1.4" fill="#56682a" opacity="0.85"/><ellipse cx="185" cy="37" rx="5.8" ry="4.6" fill="#56682a" opacity="0.85"/><ellipse cx="89" cy="6" rx="3.1" ry="3.1" fill="#84883a" opacity="0.85"/><ellipse cx="76" cy="11" rx="6.3" ry="5.8" fill="#b0a660" opacity="0.85"/><ellipse cx="118" cy="36" rx="5.9" ry="5.2" fill="#56682a" opacity="0.85"/><ellipse cx="124" cy="37" rx="5.4" ry="4.5" fill="#4a5e22" opacity="0.85"/><ellipse cx="385" cy="30" rx="2.7" ry="2.2" fill="#7c8838" opacity="0.85"/><ellipse cx="13" cy="21" rx="6.1" ry="5.0" fill="#8e9444" opacity="0.85"/><ellipse cx="273" cy="54" rx="3.3" ry="2.7" fill="#b0a660" opacity="0.85"/><ellipse cx="345" cy="24" rx="4.1" ry="4.0" fill="#4a6a20" opacity="0.85"/><ellipse cx="228" cy="44" rx="2.2" ry="1.5" fill="#7c8838" opacity="0.85"/><ellipse cx="371" cy="50" rx="5.6" ry="3.4" fill="#9a9048" opacity="0.85"/><ellipse cx="123" cy="21" rx="3.8" ry="2.5" fill="#a09c52" opacity="0.85"/><ellipse cx="154" cy="13" rx="2.8" ry="2.2" fill="#a09c52" opacity="0.85"/><ellipse cx="302" cy="29" rx="3.6" ry="3.1" fill="#4a5e22" opacity="0.85"/><ellipse cx="232" cy="40" rx="2.2" ry="1.7" fill="#687a2e" opacity="0.85"/><ellipse cx="63" cy="54" rx="3.1" ry="2.0" fill="#84883a" opacity="0.85"/><ellipse cx="404" cy="44" rx="4.7" ry="3.4" fill="#8e9444" opacity="0.85"/><ellipse cx="37" cy="55" rx="5.8" ry="5.3" fill="#84883a" opacity="0.85"/><ellipse cx="64" cy="17" rx="4.0" ry="4.0" fill="#4a5e22" opacity="0.85"/><ellipse cx="33" cy="7" rx="2.3" ry="1.9" fill="#84883a" opacity="0.85"/><ellipse cx="88" cy="55" rx="4.2" ry="3.4" fill="#7c8838" opacity="0.85"/><ellipse cx="267" cy="56" rx="4.1" ry="3.9" fill="#84883a" opacity="0.85"/><ellipse cx="131" cy="42" rx="2.8" ry="2.8" fill="#b0a660" opacity="0.85"/><ellipse cx="233" cy="40" rx="2.7" ry="2.1" fill="#b0a660" opacity="0.85"/><ellipse cx="190" cy="28" rx="4.6" ry="3.9" fill="#a09c52" opacity="0.85"/><ellipse cx="220" cy="36" rx="5.9" ry="4.7" fill="#b0a660" opacity="0.85"/><ellipse cx="79" cy="22" rx="2.1" ry="1.6" fill="#4a5e22" opacity="0.85"/><ellipse cx="340" cy="42" rx="2.6" ry="2.4" fill="#4a6a20" opacity="0.85"/><ellipse cx="46" cy="35" rx="2.9" ry="2.9" fill="#a09c52" opacity="0.85"/><ellipse cx="8" cy="41" rx="2.3" ry="1.4" fill="#8e9444" opacity="0.85"/><ellipse cx="16" cy="15" rx="5.0" ry="3.4" fill="#9a9048" opacity="0.85"/><ellipse cx="309" cy="14" rx="3.3" ry="2.5" fill="#4a5e22" opacity="0.85"/><ellipse cx="142" cy="51" rx="3.2" ry="2.0" fill="#b0a660" opacity="0.85"/><ellipse cx="43" cy="34" rx="2.2" ry="2.1" fill="#8e9444" opacity="0.85"/><ellipse cx="327" cy="25" rx="6.0" ry="5.4" fill="#4a5e22" opacity="0.85"/><ellipse cx="139" cy="41" rx="4.4" ry="3.8" fill="#b0a660" opacity="0.85"/><ellipse cx="266" cy="5" rx="2.1" ry="1.7" fill="#6a7630" opacity="0.85"/><ellipse cx="136" cy="55" rx="2.1" ry="1.6" fill="#4a5e22" opacity="0.85"/><ellipse cx="283" cy="52" rx="2.0" ry="1.5" fill="#4a5e22" opacity="0.85"/><ellipse cx="242" cy="39" rx="6.8" ry="6.6" fill="#a09c52" opacity="0.85"/><ellipse cx="160" cy="35" rx="3.2" ry="2.3" fill="#9a9048" opacity="0.85"/><ellipse cx="32" cy="39" rx="2.4" ry="1.5" fill="#8e9444" opacity="0.85"/><ellipse cx="46" cy="24" rx="3.6" ry="2.5" fill="#8e9444" opacity="0.85"/><ellipse cx="22" cy="11" rx="3.3" ry="2.7" fill="#7c8838" opacity="0.85"/><ellipse cx="345" cy="4" rx="3.7" ry="2.5" fill="#5a7a28" opacity="0.85"/><ellipse cx="69" cy="41" rx="5.9" ry="5.1" fill="#56682a" opacity="0.85"/><ellipse cx="64" cy="20" rx="3.8" ry="2.5" fill="#7c8838" opacity="0.85"/><ellipse cx="118" cy="22" rx="3.3" ry="2.4" fill="#8e9444" opacity="0.85"/><ellipse cx="26" cy="17" rx="6.7" ry="6.2" fill="#6a7630" opacity="0.85"/><ellipse cx="331" cy="13" rx="5.2" ry="4.5" fill="#3e5a18" opacity="0.85"/><ellipse cx="57" cy="36" rx="6.9" ry="6.3" fill="#8e9444" opacity="0.85"/><ellipse cx="381" cy="46" rx="4.3" ry="3.3" fill="#5a7a28" opacity="0.85"/><ellipse cx="364" cy="19" rx="2.2" ry="1.5" fill="#4a5e22" opacity="0.85"/><ellipse cx="322" cy="15" rx="4.8" ry="4.2" fill="#7c8838" opacity="0.85"/><ellipse cx="13" cy="14" rx="6.3" ry="4.9" fill="#6a7630" opacity="0.85"/><ellipse cx="36" cy="5" rx="2.4" ry="1.5" fill="#6a7630" opacity="0.85"/><ellipse cx="8" cy="49" rx="3.3" ry="3.2" fill="#4a5e22" opacity="0.85"/><ellipse cx="319" cy="13" rx="3.9" ry="2.4" fill="#7c8838" opacity="0.85"/><ellipse cx="192" cy="31" rx="3.6" ry="2.3" fill="#7c8838" opacity="0.85"/><ellipse cx="282" cy="38" rx="3.5" ry="2.2" fill="#8e9444" opacity="0.85"/><ellipse cx="275" cy="6" rx="4.8" ry="4.3" fill="#8e9444" opacity="0.85"/><ellipse cx="251" cy="10" rx="6.3" ry="4.8" fill="#8e9444" opacity="0.85"/><ellipse cx="51" cy="12" rx="6.0" ry="5.5" fill="#7c8838" opacity="0.85"/><ellipse cx="83" cy="13" rx="4.1" ry="2.6" fill="#a09c52" opacity="0.85"/><ellipse cx="33" cy="17" rx="6.2" ry="5.6" fill="#9a9048" opacity="0.85"/><ellipse cx="7" cy="36" rx="5.4" ry="4.2" fill="#a09c52" opacity="0.85"/><ellipse cx="305" cy="55" rx="4.6" ry="3.0" fill="#b0a660" opacity="0.85"/><ellipse cx="220" cy="53" rx="5.8" ry="5.2" fill="#9a9048" opacity="0.85"/><ellipse cx="249" cy="10" rx="2.7" ry="2.5" fill="#6a7630" opacity="0.85"/><ellipse cx="70" cy="16" rx="6.4" ry="4.1" fill="#687a2e" opacity="0.85"/><ellipse cx="172" cy="38" rx="6.0" ry="4.3" fill="#7c8838" opacity="0.85"/><ellipse cx="275" cy="50" rx="5.0" ry="3.1" fill="#8e9444" opacity="0.85"/><ellipse cx="309" cy="43" rx="3.8" ry="3.7" fill="#b0a660" opacity="0.85"/><ellipse cx="143" cy="48" rx="6.8" ry="5.0" fill="#8e9444" opacity="0.85"/><ellipse cx="86" cy="18" rx="3.1" ry="2.5" fill="#6a7630" opacity="0.85"/><ellipse cx="300" cy="29" rx="4.9" ry="3.8" fill="#a09c52" opacity="0.85"/><ellipse cx="188" cy="49" rx="2.9" ry="2.8" fill="#a09c52" opacity="0.85"/><ellipse cx="308" cy="31" rx="3.4" ry="3.2" fill="#56682a" opacity="0.85"/><ellipse cx="316" cy="24" rx="2.6" ry="2.1" fill="#9a9048" opacity="0.85"/><ellipse cx="37" cy="24" rx="4.6" ry="3.8" fill="#7c8838" opacity="0.85"/><ellipse cx="220" cy="14" rx="6.1" ry="5.6" fill="#6a7630" opacity="0.85"/><ellipse cx="198" cy="36" rx="4.2" ry="3.6" fill="#84883a" opacity="0.85"/><ellipse cx="319" cy="50" rx="5.7" ry="5.7" fill="#687a2e" opacity="0.85"/><ellipse cx="34" cy="34" rx="4.9" ry="3.7" fill="#4a5e22" opacity="0.85"/><ellipse cx="133" cy="40" rx="2.1" ry="2.1" fill="#7c8838" opacity="0.85"/><ellipse cx="306" cy="41" rx="6.5" ry="4.4" fill="#8e9444" opacity="0.85"/><ellipse cx="232" cy="45" rx="3.5" ry="2.7" fill="#b0a660" opacity="0.85"/><ellipse cx="344" cy="52" rx="5.6" ry="3.8" fill="#6a8a30" opacity="0.85"/><ellipse cx="75" cy="27" rx="5.1" ry="3.5" fill="#84883a" opacity="0.85"/><ellipse cx="366" cy="46" rx="2.4" ry="1.5" fill="#4a5e22" opacity="0.85"/><ellipse cx="59" cy="47" rx="6.6" ry="4.2" fill="#8e9444" opacity="0.85"/><ellipse cx="210" cy="29" rx="6.3" ry="5.8" fill="#4a5e22" opacity="0.85"/><ellipse cx="241" cy="51" rx="5.0" ry="4.5" fill="#b0a660" opacity="0.85"/><ellipse cx="56" cy="16" rx="4.0" ry="3.2" fill="#4a5e22" opacity="0.85"/><ellipse cx="285" cy="22" rx="5.1" ry="3.2" fill="#b0a660" opacity="0.85"/><ellipse cx="213" cy="32" rx="4.2" ry="4.0" fill="#9a9048" opacity="0.85"/><ellipse cx="23" cy="15" rx="2.5" ry="2.1" fill="#84883a" opacity="0.85"/><ellipse cx="197" cy="14" rx="2.4" ry="1.9" fill="#84883a" opacity="0.85"/><ellipse cx="70" cy="38" rx="3.6" ry="3.1" fill="#4a5e22" opacity="0.85"/><ellipse cx="286" cy="34" rx="4.9" ry="3.8" fill="#8e9444" opacity="0.85"/><ellipse cx="169" cy="25" rx="6.0" ry="5.4" fill="#56682a" opacity="0.85"/><ellipse cx="367" cy="32" rx="3.0" ry="2.2" fill="#6a8a30" opacity="0.85"/><ellipse cx="151" cy="45" rx="6.6" ry="5.8" fill="#7c8838" opacity="0.85"/><ellipse cx="383" cy="5" rx="6.1" ry="6.0" fill="#3e5a18" opacity="0.85"/><ellipse cx="205" cy="19" rx="2.2" ry="2.0" fill="#56682a" opacity="0.85"/><ellipse cx="194" cy="12" rx="3.4" ry="2.9" fill="#4a5e22" opacity="0.85"/><ellipse cx="15" cy="39" rx="4.9" ry="4.0" fill="#687a2e" opacity="0.85"/><ellipse cx="299" cy="6" rx="5.0" ry="3.2" fill="#9a9048" opacity="0.85"/><ellipse cx="63" cy="13" rx="5.9" ry="4.3" fill="#b0a660" opacity="0.85"/><ellipse cx="205" cy="27" rx="5.6" ry="5.3" fill="#687a2e" opacity="0.85"/><ellipse cx="398" cy="7" rx="4.6" ry="3.5" fill="#5a7a28" opacity="0.85"/><ellipse cx="262" cy="5" rx="3.4" ry="2.7" fill="#8e9444" opacity="0.85"/><ellipse cx="157" cy="33" rx="6.3" ry="4.0" fill="#b0a660" opacity="0.85"/><ellipse cx="370" cy="52" rx="6.1" ry="5.3" fill="#8e9444" opacity="0.85"/><ellipse cx="52" cy="5" rx="6.0" ry="3.9" fill="#9a9048" opacity="0.85"/><ellipse cx="3" cy="31" rx="5.9" ry="5.7" fill="#84883a" opacity="0.85"/><ellipse cx="295" cy="48" rx="6.4" ry="5.8" fill="#6a7630" opacity="0.85"/><ellipse cx="141" cy="41" rx="5.1" ry="3.3" fill="#6a7630" opacity="0.85"/><ellipse cx="332" cy="32" rx="4.0" ry="2.9" fill="#a09c52" opacity="0.85"/><ellipse cx="61" cy="8" rx="5.3" ry="3.8" fill="#9a9048" opacity="0.85"/><ellipse cx="35" cy="49" rx="4.6" ry="3.3" fill="#6a7630" opacity="0.85"/><ellipse cx="370" cy="28" rx="2.8" ry="1.8" fill="#4a5e22" opacity="0.85"/><ellipse cx="134" cy="30" rx="6.4" ry="5.0" fill="#8e9444" opacity="0.85"/><ellipse cx="361" cy="56" rx="5.8" ry="5.1" fill="#4a5e22" opacity="0.85"/><ellipse cx="222" cy="18" rx="7.0" ry="5.6" fill="#6a7630" opacity="0.85"/><ellipse cx="246" cy="12" rx="2.2" ry="2.1" fill="#4a5e22" opacity="0.85"/><ellipse cx="210" cy="31" rx="6.4" ry="5.5" fill="#84883a" opacity="0.85"/><ellipse cx="288" cy="13" rx="4.5" ry="3.3" fill="#b0a660" opacity="0.85"/><ellipse cx="356" cy="4" rx="4.9" ry="3.6" fill="#a09c52" opacity="0.85"/><ellipse cx="123" cy="42" rx="6.5" ry="5.4" fill="#6a7630" opacity="0.85"/><ellipse cx="134" cy="52" rx="3.7" ry="3.5" fill="#7c8838" opacity="0.85"/><ellipse cx="93" cy="26" rx="2.9" ry="1.8" fill="#56682a" opacity="0.85"/><ellipse cx="298" cy="4" rx="2.2" ry="1.7" fill="#a09c52" opacity="0.85"/><ellipse cx="291" cy="14" rx="3.1" ry="2.4" fill="#687a2e" opacity="0.85"/><ellipse cx="112" cy="39" rx="6.4" ry="4.1" fill="#56682a" opacity="0.85"/><ellipse cx="1" cy="8" rx="5.0" ry="4.2" fill="#84883a" opacity="0.85"/><ellipse cx="75" cy="32" rx="6.8" ry="6.3" fill="#8e9444" opacity="0.85"/><ellipse cx="143" cy="50" rx="4.0" ry="2.8" fill="#8e9444" opacity="0.85"/><ellipse cx="184" cy="24" rx="5.9" ry="4.1" fill="#b0a660" opacity="0.85"/><ellipse cx="350" cy="45" rx="5.0" ry="3.5" fill="#b0a660" opacity="0.85"/><ellipse cx="226" cy="23" rx="4.9" ry="4.7" fill="#84883a" opacity="0.85"/><ellipse cx="356" cy="54" rx="4.2" ry="3.0" fill="#3e5a18" opacity="0.85"/><ellipse cx="71" cy="9" rx="2.3" ry="2.2" fill="#687a2e" opacity="0.85"/><ellipse cx="79" cy="27" rx="6.2" ry="4.0" fill="#7c8838" opacity="0.85"/><ellipse cx="160" cy="55" rx="5.0" ry="3.4" fill="#56682a" opacity="0.85"/><ellipse cx="231" cy="34" rx="5.4" ry="4.6" fill="#56682a" opacity="0.85"/><ellipse cx="44" cy="20" rx="4.6" ry="3.9" fill="#8e9444" opacity="0.85"/><ellipse cx="281" cy="41" rx="3.7" ry="3.4" fill="#6a7630" opacity="0.85"/><ellipse cx="40" cy="28" rx="6.4" ry="4.4" fill="#8e9444" opacity="0.85"/><ellipse cx="269" cy="4" rx="4.8" ry="4.5" fill="#9a9048" opacity="0.85"/><ellipse cx="88" cy="56" rx="2.8" ry="1.9" fill="#56682a" opacity="0.85"/><ellipse cx="150" cy="18" rx="2.3" ry="1.9" fill="#a09c52" opacity="0.85"/><ellipse cx="166" cy="50" rx="6.4" ry="4.3" fill="#a09c52" opacity="0.85"/><ellipse cx="157" cy="50" rx="2.4" ry="1.9" fill="#6a7630" opacity="0.85"/><ellipse cx="138" cy="4" rx="6.2" ry="5.9" fill="#4a5e22" opacity="0.85"/><ellipse cx="57" cy="47" rx="4.2" ry="3.1" fill="#84883a" opacity="0.85"/><ellipse cx="76" cy="29" rx="3.6" ry="3.0" fill="#84883a" opacity="0.85"/><ellipse cx="77" cy="29" rx="2.6" ry="1.7" fill="#7c8838" opacity="0.85"/><ellipse cx="202" cy="52" rx="2.8" ry="2.7" fill="#9a9048" opacity="0.85"/><ellipse cx="159" cy="5" rx="6.6" ry="4.1" fill="#6a7630" opacity="0.85"/><ellipse cx="238" cy="7" rx="3.9" ry="2.8" fill="#4a5e22" opacity="0.85"/><ellipse cx="270" cy="10" rx="5.2" ry="4.0" fill="#6a7630" opacity="0.85"/><ellipse cx="176" cy="15" rx="2.7" ry="1.7" fill="#b0a660" opacity="0.85"/><ellipse cx="0" cy="18" rx="7.0" ry="4.3" fill="#7c8838" opacity="0.85"/><ellipse cx="13" cy="34" rx="3.6" ry="3.2" fill="#8e9444" opacity="0.85"/><ellipse cx="263" cy="38" rx="5.7" ry="5.4" fill="#6a7630" opacity="0.85"/><ellipse cx="211" cy="41" rx="2.3" ry="2.3" fill="#7c8838" opacity="0.85"/><ellipse cx="147" cy="35" rx="7.0" ry="5.4" fill="#687a2e" opacity="0.85"/><ellipse cx="278" cy="13" rx="2.5" ry="1.5" fill="#a09c52" opacity="0.85"/><ellipse cx="330" cy="43" rx="6.4" ry="6.1" fill="#3e5a18" opacity="0.85"/><ellipse cx="349" cy="5" rx="3.5" ry="2.9" fill="#84883a" opacity="0.85"/><ellipse cx="23" cy="45" rx="6.6" ry="5.5" fill="#6a7630" opacity="0.85"/><ellipse cx="346" cy="36" rx="5.2" ry="4.3" fill="#3e5a18" opacity="0.85"/><ellipse cx="117" cy="44" rx="2.4" ry="1.5" fill="#84883a" opacity="0.85"/><ellipse cx="290" cy="53" rx="5.4" ry="3.7" fill="#a09c52" opacity="0.85"/><ellipse cx="199" cy="42" rx="6.7" ry="4.4" fill="#7c8838" opacity="0.85"/><ellipse cx="170" cy="41" rx="2.1" ry="1.8" fill="#7c8838" opacity="0.85"/><ellipse cx="220" cy="25" rx="2.9" ry="1.9" fill="#84883a" opacity="0.85"/><ellipse cx="216" cy="31" rx="5.4" ry="3.8" fill="#84883a" opacity="0.85"/><ellipse cx="344" cy="10" rx="3.1" ry="2.9" fill="#8e9444" opacity="0.85"/><ellipse cx="248" cy="29" rx="4.5" ry="4.4" fill="#56682a" opacity="0.85"/><ellipse cx="207" cy="31" rx="3.5" ry="3.1" fill="#56682a" opacity="0.85"/><ellipse cx="47" cy="13" rx="4.5" ry="2.7" fill="#8e9444" opacity="0.85"/><ellipse cx="103" cy="14" rx="3.1" ry="2.8" fill="#7c8838" opacity="0.85"/><ellipse cx="176" cy="53" rx="5.6" ry="3.7" fill="#4a5e22" opacity="0.85"/><ellipse cx="100" cy="26" rx="4.5" ry="4.1" fill="#8e9444" opacity="0.85"/><ellipse cx="283" cy="51" rx="6.2" ry="4.0" fill="#56682a" opacity="0.85"/><ellipse cx="283" cy="29" rx="5.9" ry="5.6" fill="#a09c52" opacity="0.85"/><ellipse cx="40" cy="17" rx="3.3" ry="2.8" fill="#56682a" opacity="0.85"/><ellipse cx="226" cy="42" rx="6.0" ry="4.5" fill="#6a7630" opacity="0.85"/><ellipse cx="188" cy="14" rx="4.3" ry="2.8" fill="#9a9048" opacity="0.85"/><ellipse cx="335" cy="53" rx="2.4" ry="1.8" fill="#6a8a30" opacity="0.85"/><ellipse cx="46" cy="49" rx="3.6" ry="2.2" fill="#b0a660" opacity="0.85"/><ellipse cx="183" cy="16" rx="5.4" ry="5.1" fill="#b0a660" opacity="0.85"/><ellipse cx="172" cy="10" rx="6.2" ry="3.9" fill="#6a7630" opacity="0.85"/><ellipse cx="27" cy="39" rx="2.7" ry="2.4" fill="#687a2e" opacity="0.85"/><ellipse cx="396" cy="37" rx="6.3" ry="6.1" fill="#5a7a28" opacity="0.85"/><ellipse cx="98" cy="6" rx="4.4" ry="4.2" fill="#84883a" opacity="0.85"/><ellipse cx="67" cy="38" rx="4.4" ry="3.6" fill="#a09c52" opacity="0.85"/><ellipse cx="287" cy="38" rx="3.4" ry="2.2" fill="#6a7630" opacity="0.85"/><ellipse cx="87" cy="27" rx="4.2" ry="3.8" fill="#687a2e" opacity="0.85"/><ellipse cx="334" cy="35" rx="6.5" ry="4.7" fill="#84883a" opacity="0.85"/><ellipse cx="10" cy="47" rx="6.7" ry="6.0" fill="#84883a" opacity="0.85"/><ellipse cx="188" cy="18" rx="3.7" ry="2.5" fill="#a09c52" opacity="0.85"/><ellipse cx="370" cy="36" rx="4.0" ry="2.6" fill="#6a8a30" opacity="0.85"/><ellipse cx="26" cy="27" rx="6.5" ry="6.4" fill="#7c8838" opacity="0.85"/><ellipse cx="221" cy="22" rx="4.3" ry="3.9" fill="#7c8838" opacity="0.85"/><ellipse cx="14" cy="38" rx="4.8" ry="4.5" fill="#8e9444" opacity="0.85"/><ellipse cx="166" cy="46" rx="2.4" ry="1.7" fill="#56682a" opacity="0.85"/><ellipse cx="344" cy="51" rx="7.0" ry="4.9" fill="#4a6a20" opacity="0.85"/><ellipse cx="184" cy="36" rx="5.9" ry="4.0" fill="#9a9048" opacity="0.85"/><ellipse cx="4" cy="11" rx="5.7" ry="4.9" fill="#4a5e22" opacity="0.85"/><ellipse cx="201" cy="10" rx="2.3" ry="1.4" fill="#7c8838" opacity="0.85"/><ellipse cx="241" cy="54" rx="5.2" ry="4.3" fill="#56682a" opacity="0.85"/><ellipse cx="40" cy="20" rx="6.1" ry="6.1" fill="#8e9444" opacity="0.85"/><ellipse cx="121" cy="13" rx="5.6" ry="3.6" fill="#b0a660" opacity="0.85"/><ellipse cx="340" cy="53" rx="2.2" ry="2.0" fill="#56682a" opacity="0.85"/><ellipse cx="216" cy="12" rx="3.8" ry="3.3" fill="#8e9444" opacity="0.85"/><ellipse cx="38" cy="6" rx="2.6" ry="2.4" fill="#56682a" opacity="0.85"/><ellipse cx="197" cy="20" rx="6.1" ry="4.8" fill="#b0a660" opacity="0.85"/><ellipse cx="403" cy="46" rx="3.1" ry="2.3" fill="#7c8838" opacity="0.85"/><ellipse cx="4" cy="31" rx="6.9" ry="6.8" fill="#b0a660" opacity="0.85"/><ellipse cx="397" cy="48" rx="4.4" ry="3.8" fill="#56682a" opacity="0.85"/><ellipse cx="263" cy="34" rx="3.7" ry="2.6" fill="#8e9444" opacity="0.85"/><ellipse cx="142" cy="26" rx="5.6" ry="3.8" fill="#56682a" opacity="0.85"/><ellipse cx="211" cy="23" rx="3.7" ry="3.5" fill="#9a9048" opacity="0.85"/><ellipse cx="154" cy="32" rx="5.8" ry="5.0" fill="#687a2e" opacity="0.85"/><ellipse cx="273" cy="4" rx="3.1" ry="2.7" fill="#687a2e" opacity="0.85"/><ellipse cx="277" cy="22" rx="4.8" ry="4.1" fill="#9a9048" opacity="0.85"/><ellipse cx="41" cy="14" rx="6.3" ry="5.0" fill="#9a9048" opacity="0.85"/><ellipse cx="330" cy="19" rx="6.2" ry="4.8" fill="#b0a660" opacity="0.85"/><ellipse cx="277" cy="17" rx="3.1" ry="2.9" fill="#a09c52" opacity="0.85"/><ellipse cx="329" cy="42" rx="2.2" ry="1.6" fill="#b0a660" opacity="0.85"/><ellipse cx="4" cy="11" rx="3.2" ry="2.6" fill="#b0a660" opacity="0.85"/><ellipse cx="209" cy="17" rx="6.5" ry="6.1" fill="#a09c52" opacity="0.85"/><ellipse cx="355" cy="41" rx="6.7" ry="4.6" fill="#7c8838" opacity="0.85"/><ellipse cx="328" cy="48" rx="3.9" ry="3.1" fill="#9a9048" opacity="0.85"/><ellipse cx="283" cy="27" rx="2.6" ry="1.7" fill="#b0a660" opacity="0.85"/><ellipse cx="122" cy="35" rx="4.1" ry="4.0" fill="#84883a" opacity="0.85"/><ellipse cx="266" cy="43" rx="5.5" ry="4.5" fill="#b0a660" opacity="0.85"/><ellipse cx="49" cy="33" rx="3.4" ry="2.8" fill="#7c8838" opacity="0.85"/><ellipse cx="134" cy="17" rx="3.7" ry="2.3" fill="#8e9444" opacity="0.85"/><ellipse cx="294" cy="25" rx="6.9" ry="6.5" fill="#4a5e22" opacity="0.85"/><ellipse cx="400" cy="27" rx="4.9" ry="3.9" fill="#6a8a30" opacity="0.85"/><ellipse cx="321" cy="49" rx="3.6" ry="2.3" fill="#84883a" opacity="0.85"/><ellipse cx="136" cy="7" rx="3.6" ry="2.2" fill="#7c8838" opacity="0.85"/><ellipse cx="216" cy="35" rx="2.9" ry="1.9" fill="#7c8838" opacity="0.85"/><ellipse cx="228" cy="10" rx="4.0" ry="2.5" fill="#6a7630" opacity="0.85"/><ellipse cx="203" cy="12" rx="4.6" ry="3.2" fill="#a09c52" opacity="0.85"/><ellipse cx="290" cy="31" rx="5.9" ry="5.0" fill="#84883a" opacity="0.85"/><ellipse cx="178" cy="53" rx="3.0" ry="2.0" fill="#9a9048" opacity="0.85"/><ellipse cx="233" cy="10" rx="4.6" ry="3.2" fill="#a09c52" opacity="0.85"/><ellipse cx="352" cy="29" rx="5.3" ry="4.7" fill="#6a8a30" opacity="0.85"/><ellipse cx="192" cy="21" rx="6.7" ry="4.7" fill="#84883a" opacity="0.85"/><ellipse cx="310" cy="52" rx="5.1" ry="4.6" fill="#84883a" opacity="0.85"/><ellipse cx="323" cy="53" rx="4.3" ry="3.8" fill="#9a9048" opacity="0.85"/><ellipse cx="377" cy="17" rx="5.2" ry="4.3" fill="#5a7a28" opacity="0.85"/><ellipse cx="64" cy="31" rx="3.1" ry="2.2" fill="#a09c52" opacity="0.85"/><ellipse cx="295" cy="21" rx="4.4" ry="3.1" fill="#b0a660" opacity="0.85"/><ellipse cx="396" cy="38" rx="5.3" ry="3.5" fill="#7c8838" opacity="0.85"/><ellipse cx="111" cy="27" rx="6.5" ry="6.3" fill="#b0a660" opacity="0.85"/><ellipse cx="259" cy="45" rx="5.4" ry="3.8" fill="#a09c52" opacity="0.85"/><ellipse cx="300" cy="32" rx="3.5" ry="3.4" fill="#687a2e" opacity="0.85"/><ellipse cx="387" cy="6" rx="5.5" ry="4.9" fill="#56682a" opacity="0.85"/><ellipse cx="19" cy="4" rx="2.1" ry="1.4" fill="#8e9444" opacity="0.85"/><ellipse cx="169" cy="36" rx="5.3" ry="3.3" fill="#6a7630" opacity="0.85"/><ellipse cx="43" cy="27" rx="6.2" ry="5.0" fill="#a09c52" opacity="0.85"/><ellipse cx="364" cy="44" rx="6.2" ry="4.5" fill="#6a8a30" opacity="0.85"/><ellipse cx="182" cy="49" rx="2.3" ry="2.2" fill="#a09c52" opacity="0.85"/><ellipse cx="281" cy="34" rx="6.7" ry="5.9" fill="#687a2e" opacity="0.85"/><ellipse cx="345" cy="35" rx="3.0" ry="1.8" fill="#5a7a28" opacity="0.85"/><ellipse cx="285" cy="32" rx="4.8" ry="3.5" fill="#4a5e22" opacity="0.85"/><ellipse cx="142" cy="10" rx="5.3" ry="4.8" fill="#7c8838" opacity="0.85"/><ellipse cx="337" cy="47" rx="2.4" ry="2.0" fill="#84883a" opacity="0.85"/><ellipse cx="288" cy="43" rx="6.3" ry="4.7" fill="#9a9048" opacity="0.85"/><ellipse cx="273" cy="14" rx="5.3" ry="3.3" fill="#84883a" opacity="0.85"/><ellipse cx="122" cy="55" rx="5.4" ry="3.6" fill="#7c8838" opacity="0.85"/><ellipse cx="353" cy="5" rx="2.3" ry="1.9" fill="#4a6a20" opacity="0.85"/><ellipse cx="273" cy="38" rx="6.4" ry="4.1" fill="#6a7630" opacity="0.85"/><ellipse cx="287" cy="24" rx="6.1" ry="4.6" fill="#4a5e22" opacity="0.85"/><ellipse cx="341" cy="10" rx="6.8" ry="5.9" fill="#a09c52" opacity="0.85"/><ellipse cx="324" cy="26" rx="4.8" ry="4.4" fill="#84883a" opacity="0.85"/><ellipse cx="228" cy="45" rx="6.7" ry="4.1" fill="#8e9444" opacity="0.85"/><ellipse cx="359" cy="46" rx="2.2" ry="1.6" fill="#8e9444" opacity="0.85"/><ellipse cx="368" cy="15" rx="5.3" ry="3.7" fill="#4a6a20" opacity="0.85"/><ellipse cx="39" cy="14" rx="4.9" ry="3.0" fill="#56682a" opacity="0.85"/><ellipse cx="30" cy="55" rx="6.0" ry="5.0" fill="#84883a" opacity="0.85"/><ellipse cx="269" cy="36" rx="4.0" ry="2.8" fill="#56682a" opacity="0.85"/><ellipse cx="39" cy="4" rx="3.8" ry="3.3" fill="#7c8838" opacity="0.85"/><ellipse cx="28" cy="28" rx="4.3" ry="4.3" fill="#8e9444" opacity="0.85"/><ellipse cx="129" cy="39" rx="3.0" ry="2.8" fill="#b0a660" opacity="0.85"/><ellipse cx="73" cy="29" rx="5.5" ry="4.7" fill="#56682a" opacity="0.85"/><ellipse cx="280" cy="43" rx="6.1" ry="5.2" fill="#4a5e22" opacity="0.85"/><ellipse cx="234" cy="55" rx="3.3" ry="2.5" fill="#7c8838" opacity="0.85"/><ellipse cx="260" cy="33" rx="3.1" ry="2.0" fill="#56682a" opacity="0.85"/><ellipse cx="97" cy="40" rx="5.4" ry="4.2" fill="#56682a" opacity="0.85"/><ellipse cx="365" cy="8" rx="5.7" ry="4.8" fill="#a09c52" opacity="0.85"/><ellipse cx="324" cy="34" rx="6.8" ry="4.2" fill="#687a2e" opacity="0.85"/><ellipse cx="115" cy="5" rx="5.2" ry="4.2" fill="#b0a660" opacity="0.85"/><ellipse cx="316" cy="12" rx="4.3" ry="3.3" fill="#a09c52" opacity="0.85"/><ellipse cx="17" cy="18" rx="6.1" ry="5.2" fill="#a09c52" opacity="0.85"/><ellipse cx="269" cy="41" rx="5.8" ry="4.5" fill="#9a9048" opacity="0.85"/><ellipse cx="133" cy="12" rx="3.9" ry="2.5" fill="#7c8838" opacity="0.85"/><ellipse cx="199" cy="14" rx="5.8" ry="4.5" fill="#84883a" opacity="0.85"/><ellipse cx="195" cy="6" rx="6.1" ry="5.6" fill="#8e9444" opacity="0.85"/><ellipse cx="100" cy="23" rx="5.0" ry="4.9" fill="#84883a" opacity="0.85"/><ellipse cx="194" cy="14" rx="6.8" ry="5.7" fill="#8e9444" opacity="0.85"/><ellipse cx="110" cy="32" rx="6.9" ry="5.9" fill="#7c8838" opacity="0.85"/><ellipse cx="261" cy="24" rx="4.1" ry="2.5" fill="#9a9048" opacity="0.85"/><ellipse cx="44" cy="30" rx="3.7" ry="3.0" fill="#9a9048" opacity="0.85"/><ellipse cx="122" cy="48" rx="2.5" ry="2.4" fill="#4a5e22" opacity="0.85"/><ellipse cx="206" cy="48" rx="2.1" ry="1.8" fill="#9a9048" opacity="0.85"/><ellipse cx="264" cy="20" rx="5.6" ry="5.5" fill="#a09c52" opacity="0.85"/><ellipse cx="116" cy="48" rx="2.1" ry="2.0" fill="#8e9444" opacity="0.85"/><ellipse cx="52" cy="50" rx="6.0" ry="5.8" fill="#687a2e" opacity="0.85"/><ellipse cx="153" cy="6" rx="6.3" ry="5.6" fill="#56682a" opacity="0.85"/><ellipse cx="370" cy="7" rx="5.0" ry="3.9" fill="#56682a" opacity="0.85"/><ellipse cx="128" cy="56" rx="5.3" ry="5.1" fill="#84883a" opacity="0.85"/><ellipse cx="358" cy="5" rx="4.0" ry="3.6" fill="#8e9444" opacity="0.85"/><ellipse cx="327" cy="21" rx="3.6" ry="2.3" fill="#9a9048" opacity="0.85"/><ellipse cx="293" cy="38" rx="5.5" ry="4.5" fill="#8e9444" opacity="0.85"/><ellipse cx="379" cy="46" rx="4.8" ry="3.2" fill="#9a9048" opacity="0.85"/><ellipse cx="391" cy="40" rx="4.6" ry="3.3" fill="#687a2e" opacity="0.85"/><ellipse cx="196" cy="45" rx="6.4" ry="3.8" fill="#b0a660" opacity="0.85"/><ellipse cx="384" cy="28" rx="2.6" ry="2.5" fill="#6a8a30" opacity="0.85"/><ellipse cx="293" cy="16" rx="5.7" ry="4.1" fill="#9a9048" opacity="0.85"/><ellipse cx="236" cy="10" rx="3.3" ry="3.1" fill="#7c8838" opacity="0.85"/><ellipse cx="360" cy="22" rx="6.2" ry="4.7" fill="#3e5a18" opacity="0.85"/><ellipse cx="148" cy="29" rx="6.9" ry="5.6" fill="#a09c52" opacity="0.85"/><ellipse cx="9" cy="55" rx="4.5" ry="3.4" fill="#4a5e22" opacity="0.85"/><ellipse cx="266" cy="49" rx="2.3" ry="2.1" fill="#a09c52" opacity="0.85"/><ellipse cx="242" cy="6" rx="3.9" ry="3.0" fill="#4a5e22" opacity="0.85"/><ellipse cx="177" cy="19" rx="3.5" ry="2.7" fill="#8e9444" opacity="0.85"/><ellipse cx="271" cy="10" rx="2.6" ry="1.8" fill="#56682a" opacity="0.85"/><ellipse cx="240" cy="25" rx="5.8" ry="4.5" fill="#b0a660" opacity="0.85"/><ellipse cx="114" cy="11" rx="6.5" ry="5.2" fill="#7c8838" opacity="0.85"/><ellipse cx="288" cy="51" rx="2.0" ry="2.0" fill="#84883a" opacity="0.85"/><ellipse cx="52" cy="35" rx="2.6" ry="2.2" fill="#9a9048" opacity="0.85"/><ellipse cx="315" cy="34" rx="5.3" ry="5.3" fill="#687a2e" opacity="0.85"/><ellipse cx="21" cy="5" rx="2.0" ry="1.5" fill="#687a2e" opacity="0.85"/><ellipse cx="83" cy="40" rx="4.2" ry="3.8" fill="#8e9444" opacity="0.85"/><ellipse cx="246" cy="21" rx="3.7" ry="3.5" fill="#9a9048" opacity="0.85"/><ellipse cx="30" cy="39" rx="5.1" ry="4.0" fill="#7c8838" opacity="0.85"/><ellipse cx="245" cy="24" rx="3.4" ry="2.4" fill="#6a7630" opacity="0.85"/><ellipse cx="293" cy="22" rx="5.6" ry="4.6" fill="#7c8838" opacity="0.85"/><ellipse cx="285" cy="12" rx="6.6" ry="5.8" fill="#84883a" opacity="0.85"/><ellipse cx="253" cy="52" rx="4.8" ry="4.0" fill="#687a2e" opacity="0.85"/><ellipse cx="317" cy="10" rx="4.6" ry="3.7" fill="#687a2e" opacity="0.85"/><ellipse cx="213" cy="16" rx="3.4" ry="3.0" fill="#56682a" opacity="0.85"/><ellipse cx="189" cy="48" rx="2.3" ry="1.5" fill="#56682a" opacity="0.85"/><ellipse cx="157" cy="13" rx="4.9" ry="3.4" fill="#4a5e22" opacity="0.85"/><ellipse cx="320" cy="30" rx="6.5" ry="5.2" fill="#8e9444" opacity="0.85"/><ellipse cx="70" cy="12" rx="2.5" ry="2.5" fill="#4a5e22" opacity="0.85"/><ellipse cx="248" cy="34" rx="3.6" ry="3.2" fill="#6a7630" opacity="0.85"/><ellipse cx="252" cy="11" rx="5.8" ry="5.7" fill="#7c8838" opacity="0.85"/><ellipse cx="56" cy="19" rx="6.7" ry="4.8" fill="#6a7630" opacity="0.85"/><ellipse cx="157" cy="46" rx="2.0" ry="1.6" fill="#7c8838" opacity="0.85"/><ellipse cx="184" cy="54" rx="3.5" ry="2.5" fill="#9a9048" opacity="0.85"/><ellipse cx="192" cy="54" rx="2.5" ry="2.2" fill="#a09c52" opacity="0.85"/><ellipse cx="60" cy="22" rx="4.7" ry="2.8" fill="#7c8838" opacity="0.85"/><ellipse cx="317" cy="44" rx="5.9" ry="5.4" fill="#687a2e" opacity="0.85"/><ellipse cx="14" cy="14" rx="5.6" ry="5.0" fill="#8e9444" opacity="0.85"/><ellipse cx="35" cy="49" rx="2.6" ry="1.7" fill="#687a2e" opacity="0.85"/><ellipse cx="293" cy="53" rx="4.5" ry="4.2" fill="#7c8838" opacity="0.85"/><ellipse cx="282" cy="52" rx="4.4" ry="3.1" fill="#9a9048" opacity="0.85"/><ellipse cx="215" cy="35" rx="4.9" ry="4.7" fill="#687a2e" opacity="0.85"/><ellipse cx="294" cy="24" rx="3.5" ry="2.5" fill="#9a9048" opacity="0.85"/><ellipse cx="339" cy="41" rx="5.9" ry="3.7" fill="#4a6a20" opacity="0.85"/><ellipse cx="19" cy="26" rx="4.6" ry="3.8" fill="#4a5e22" opacity="0.85"/><ellipse cx="71" cy="18" rx="5.5" ry="4.2" fill="#9a9048" opacity="0.85"/><ellipse cx="333" cy="27" rx="3.8" ry="3.6" fill="#84883a" opacity="0.85"/><ellipse cx="385" cy="42" rx="5.6" ry="5.6" fill="#b0a660" opacity="0.85"/><ellipse cx="151" cy="26" rx="2.8" ry="2.6" fill="#6a7630" opacity="0.85"/><ellipse cx="38" cy="7" rx="6.0" ry="4.7" fill="#7c8838" opacity="0.85"/><ellipse cx="125" cy="41" rx="3.9" ry="2.4" fill="#8e9444" opacity="0.85"/><ellipse cx="289" cy="16" rx="4.8" ry="3.9" fill="#4a5e22" opacity="0.85"/><ellipse cx="180" cy="27" rx="3.1" ry="2.9" fill="#84883a" opacity="0.85"/><ellipse cx="307" cy="22" rx="6.2" ry="6.1" fill="#9a9048" opacity="0.85"/><ellipse cx="400" cy="25" rx="4.6" ry="4.2" fill="#6a8a30" opacity="0.85"/><ellipse cx="177" cy="22" rx="3.3" ry="2.3" fill="#a09c52" opacity="0.85"/><ellipse cx="297" cy="16" rx="5.5" ry="4.2" fill="#56682a" opacity="0.85"/><ellipse cx="90" cy="6" rx="2.6" ry="2.2" fill="#84883a" opacity="0.85"/><ellipse cx="157" cy="43" rx="4.1" ry="3.8" fill="#a09c52" opacity="0.85"/><ellipse cx="200" cy="25" rx="6.0" ry="3.7" fill="#b0a660" opacity="0.85"/><ellipse cx="12" cy="11" rx="6.9" ry="5.7" fill="#4a5e22" opacity="0.85"/><ellipse cx="233" cy="17" rx="3.1" ry="2.3" fill="#8e9444" opacity="0.85"/><ellipse cx="380" cy="34" rx="6.2" ry="3.9" fill="#a09c52" opacity="0.85"/><ellipse cx="409" cy="10" rx="4.3" ry="3.8" fill="#687a2e" opacity="0.85"/><ellipse cx="110" cy="8" rx="5.4" ry="4.3" fill="#6a7630" opacity="0.85"/><ellipse cx="47" cy="43" rx="2.1" ry="1.8" fill="#84883a" opacity="0.85"/><ellipse cx="209" cy="16" rx="3.5" ry="2.8" fill="#b0a660" opacity="0.85"/><ellipse cx="263" cy="8" rx="4.9" ry="3.4" fill="#8e9444" opacity="0.85"/><ellipse cx="107" cy="35" rx="4.6" ry="3.9" fill="#9a9048" opacity="0.85"/></svg>
<svg class="a" style="left:14px;top:1281px;" width="36" height="40" viewBox="0 0 36 40"><path d="M13 16 Q12 6 20 2 L24 3 Q17 8 19 15 Z" fill="#f2f2f2" transform="rotate(0 18 20)"/><path d="M13 16 Q12 6 20 2 L24 3 Q17 8 19 15 Z" fill="#f2f2f2" transform="rotate(60 18 20)"/><path d="M13 16 Q12 6 20 2 L24 3 Q17 8 19 15 Z" fill="#f2f2f2" transform="rotate(120 18 20)"/><path d="M13 16 Q12 6 20 2 L24 3 Q17 8 19 15 Z" fill="#f2f2f2" transform="rotate(180 18 20)"/><path d="M13 16 Q12 6 20 2 L24 3 Q17 8 19 15 Z" fill="#f2f2f2" transform="rotate(240 18 20)"/><path d="M13 16 Q12 6 20 2 L24 3 Q17 8 19 15 Z" fill="#f2f2f2" transform="rotate(300 18 20)"/></svg>
<div class="t" style="left:54px;top:1286.22px;font-size:21px;line-height:21px;color:#f4f4f4;font-family:'Liberation Sans', sans-serif;transform:scaleX(0.93);transform-origin:0 0;">OctaneRender</div>
<div class="t" style="left:180px;top:1285.23px;font-size:8px;line-height:8px;color:#f4f4f4;font-family:'Liberation Sans', sans-serif;">TM</div>
<div class="t" style="left:57px;top:1309.54px;font-size:10px;line-height:10px;color:#f4f4f4;font-family:'Liberation Sans', sans-serif;">for use with Autodesk® 3ds max® Design Software</div>
<div class="t" style="left:320px;top:1296.57px;font-size:13.5px;line-height:13.5px;color:#f4f4f4;font-family:'Liberation Sans', sans-serif;">® 2011 - 2021</div>
<div class="t" style="left:387px;top:1312.11px;font-size:10.5px;line-height:10.5px;color:#f4f4f4;font-weight:bold;font-family:'Liberation Sans', sans-serif;">otoy</div>
<svg class="a" style="left:372px;top:1311px;" width="13" height="13" viewBox="0 0 13 13"><path d="M6.5 0 L13 6.5 L6.5 13 L0 6.5Z" fill="#f4f4f4"/><circle cx="6.5" cy="6.5" r="2.5" fill="#6a7a2a"/></svg>
<div class="a" style="left:24px;top:1336px;width:376px;height:21px;background:#595959;border-radius:3px;"></div>
<div class="t" style="left:-88.0px;width:600px;text-align:center;top:1340.66px;font-size:12px;line-height:12px;color:#c8c8c8;transform:scaleX(0.88);transform-origin:50% 0;">Open OctaneRender viewport</div>
<div class="t" style="left:7px;top:1367.27px;font-size:11.5px;line-height:11.5px;color:#e4e4e4;font-family:'Liberation Sans', sans-serif;transform:scaleX(0.93);transform-origin:0 0;">Use window resolution</div>
<div class="a" style="left:183px;top:1368px;width:10px;height:10px;background:#5a5a5a;"></div>
<div class="t" style="left:7px;top:1387.27px;font-size:11.5px;line-height:11.5px;color:#e4e4e4;font-family:'Liberation Sans', sans-serif;transform:scaleX(0.93);transform-origin:0 0;">Use production resolution</div>
<div class="a" style="left:183px;top:1388px;width:10px;height:10px;background:#5a5a5a;"></div>
<div class="t" style="left:7px;top:1408.27px;font-size:11.5px;line-height:11.5px;color:#e4e4e4;font-family:'Liberation Sans', sans-serif;transform:scaleX(0.93);transform-origin:0 0;">Render width</div>
<div class="a" style="left:131px;top:1406px;width:64px;height:14px;background:#5e5e5e;"></div>
<div class="t" style="left:135px;top:1407.41px;font-size:11.5px;line-height:11.5px;color:#d0d0d0;font-family:'Liberation Sans', sans-serif;transform:scaleX(0.87);transform-origin:0 0;">800</div>
<svg class="a" style="left:185px;top:1407.0px;" width="7" height="12" viewBox="0 0 7 12"><path d="M0.5 5 L3.5 1 L6.5 5Z M0.5 7 L3.5 11 L6.5 7Z" fill="#d8d8d8"/></svg>
<div class="t" style="left:7px;top:1427.27px;font-size:11.5px;line-height:11.5px;color:#e4e4e4;font-family:'Liberation Sans', sans-serif;transform:scaleX(0.93);transform-origin:0 0;">Render height</div>
<div class="a" style="left:131px;top:1425px;width:64px;height:14px;background:#5e5e5e;"></div>
<div class="t" style="left:135px;top:1426.41px;font-size:11.5px;line-height:11.5px;color:#d0d0d0;font-family:'Liberation Sans', sans-serif;transform:scaleX(0.87);transform-origin:0 0;">600</div>
<svg class="a" style="left:185px;top:1426.0px;" width="7" height="12" viewBox="0 0 7 12"><path d="M0.5 5 L3.5 1 L6.5 5Z M0.5 7 L3.5 11 L6.5 7Z" fill="#d8d8d8"/></svg>
<div class="t" style="left:7px;top:1447.27px;font-size:11.5px;line-height:11.5px;color:#e4e4e4;font-family:'Liberation Sans', sans-serif;transform:scaleX(0.93);transform-origin:0 0;">Image aspect</div>
<div class="a" style="left:131px;top:1445px;width:64px;height:14px;background:#5e5e5e;"></div>
<div class="t" style="left:135px;top:1446.41px;font-size:11.5px;line-height:11.5px;color:#d0d0d0;font-family:'Liberation Sans', sans-serif;transform:scaleX(0.87);transform-origin:0 0;">1.0</div>
<svg class="a" style="left:185px;top:1446.0px;" width="7" height="12" viewBox="0 0 7 12"><path d="M0.5 5 L3.5 1 L6.5 5Z M0.5 7 L3.5 11 L6.5 7Z" fill="#d8d8d8"/></svg>
<div class="t" style="left:7px;top:1466.27px;font-size:11.5px;line-height:11.5px;color:#e4e4e4;font-family:'Liberation Sans', sans-serif;transform:scaleX(0.93);transform-origin:0 0;">Lock image aspect</div>
<div class="a" style="left:183px;top:1467px;width:10px;height:10px;background:#5a5a5a;"></div>
<div class="t" style="left:223px;top:1367.27px;font-size:11.5px;line-height:11.5px;color:#e4e4e4;font-family:'Liberation Sans', sans-serif;transform:scaleX(0.93);transform-origin:0 0;">Use viewport background</div>
<div class="a" style="left:408px;top:1368px;width:10px;height:10px;background:#5a5a5a;"></div>
<div class="t" style="left:223px;top:1387.27px;font-size:11.5px;line-height:11.5px;color:#e4e4e4;font-family:'Liberation Sans', sans-serif;transform:scaleX(0.93);transform-origin:0 0;">Autoupdate movable proxy</div>
<div class="a" style="left:408px;top:1388px;width:10px;height:10px;background:#5a5a5a;"></div>
<svg class="a" style="left:408px;top:1388px;" width="10" height="10" viewBox="0 0 10 10"><path d="M2 5 L4.2 7.5 L8.5 2" stroke="#e8e8e8" stroke-width="1.8" fill="none"/></svg>
<div class="t" style="left:223px;top:1408.27px;font-size:11.5px;line-height:11.5px;color:#e4e4e4;font-family:'Liberation Sans', sans-serif;transform:scaleX(0.93);transform-origin:0 0;">Refresh time (ms)</div>
<div class="a" style="left:356px;top:1406px;width:64px;height:14px;background:#5e5e5e;"></div>
<div class="t" style="left:360px;top:1407.41px;font-size:11.5px;line-height:11.5px;color:#d0d0d0;font-family:'Liberation Sans', sans-serif;transform:scaleX(0.87);transform-origin:0 0;">5</div>
<svg class="a" style="left:410px;top:1407.0px;" width="7" height="12" viewBox="0 0 7 12"><path d="M0.5 5 L3.5 1 L6.5 5Z M0.5 7 L3.5 11 L6.5 7Z" fill="#d8d8d8"/></svg>
<div class="t" style="left:223px;top:1428.27px;font-size:11.5px;line-height:11.5px;color:#e4e4e4;font-family:'Liberation Sans', sans-serif;transform:scaleX(0.93);transform-origin:0 0;">Quick mode</div>
<div class="a" style="left:408px;top:1429px;width:10px;height:10px;background:#5a5a5a;"></div>
<svg class="a" style="left:408px;top:1429px;" width="10" height="10" viewBox="0 0 10 10"><path d="M2 5 L4.2 7.5 L8.5 2" stroke="#e8e8e8" stroke-width="1.8" fill="none"/></svg>
<div class="t" style="left:223px;top:1465.27px;font-size:11.5px;line-height:11.5px;color:#e4e4e4;font-family:'Liberation Sans', sans-serif;transform:scaleX(0.93);transform-origin:0 0;">Enable stats in viewport</div>
<div class="a" style="left:408px;top:1466px;width:10px;height:10px;background:#5a5a5a;"></div>
<svg class="a" style="left:408px;top:1466px;" width="10" height="10" viewBox="0 0 10 10"><path d="M2 5 L4.2 7.5 L8.5 2" stroke="#e8e8e8" stroke-width="1.8" fill="none"/></svg>
<div class="a" style="left:9px;top:1494px;width:410px;height:80px;border:1px solid #343434;border-radius:3px;"></div>
<div class="t" style="left:14px;top:1489.27px;font-size:11.5px;line-height:11.5px;color:#e8e8e8;background:#525252;padding:0 3px;transform:scaleX(0.93);transform-origin:0 0;">Render statistic customization</div>
<div class="t" style="left:15.5px;top:1512.27px;font-size:11.5px;line-height:11.5px;color:#e4e4e4;font-family:'Liberation Sans', sans-serif;transform:scaleX(0.93);transform-origin:0 0;">Samp/pix</div>
<div class="a" style="left:104px;top:1512px;width:10px;height:10px;background:#5a5a5a;"></div>
<svg class="a" style="left:104px;top:1512px;" width="10" height="10" viewBox="0 0 10 10"><path d="M2 5 L4.2 7.5 L8.5 2" stroke="#e8e8e8" stroke-width="1.8" fill="none"/></svg>
<div class="t" style="left:15.5px;top:1531.27px;font-size:11.5px;line-height:11.5px;color:#e4e4e4;font-family:'Liberation Sans', sans-serif;transform:scaleX(0.93);transform-origin:0 0;">Samp/sec</div>
<div class="a" style="left:104px;top:1531px;width:10px;height:10px;background:#5a5a5a;"></div>
<svg class="a" style="left:104px;top:1531px;" width="10" height="10" viewBox="0 0 10 10"><path d="M2 5 L4.2 7.5 L8.5 2" stroke="#e8e8e8" stroke-width="1.8" fill="none"/></svg>
<div class="t" style="left:15.5px;top:1551.27px;font-size:11.5px;line-height:11.5px;color:#e4e4e4;font-family:'Liberation Sans', sans-serif;transform:scaleX(0.93);transform-origin:0 0;">Render size</div>
<div class="a" style="left:104px;top:1551px;width:10px;height:10px;background:#5a5a5a;"></div>
<svg class="a" style="left:104px;top:1551px;" width="10" height="10" viewBox="0 0 10 10"><path d="M2 5 L4.2 7.5 L8.5 2" stroke="#e8e8e8" stroke-width="1.8" fill="none"/></svg>
<div class="t" style="left:154px;top:1512.27px;font-size:11.5px;line-height:11.5px;color:#e4e4e4;font-family:'Liberation Sans', sans-serif;transform:scaleX(0.93);transform-origin:0 0;">Time elaps/total</div>
<div class="a" style="left:245px;top:1512px;width:10px;height:10px;background:#5a5a5a;"></div>
<svg class="a" style="left:245px;top:1512px;" width="10" height="10" viewBox="0 0 10 10"><path d="M2 5 L4.2 7.5 L8.5 2" stroke="#e8e8e8" stroke-width="1.8" fill="none"/></svg>
<div class="t" style="left:154px;top:1531.27px;font-size:11.5px;line-height:11.5px;color:#e4e4e4;font-family:'Liberation Sans', sans-serif;transform:scaleX(0.93);transform-origin:0 0;">Time elaps/left</div>
<div class="a" style="left:245px;top:1531px;width:10px;height:10px;background:#5a5a5a;"></div>
<svg class="a" style="left:245px;top:1531px;" width="10" height="10" viewBox="0 0 10 10"><path d="M2 5 L4.2 7.5 L8.5 2" stroke="#e8e8e8" stroke-width="1.8" fill="none"/></svg>
<div class="t" style="left:154px;top:1551.27px;font-size:11.5px;line-height:11.5px;color:#e4e4e4;font-family:'Liberation Sans', sans-serif;transform:scaleX(0.93);transform-origin:0 0;">Zoom</div>
<div class="a" style="left:245px;top:1551px;width:10px;height:10px;background:#5a5a5a;"></div>
<svg class="a" style="left:245px;top:1551px;" width="10" height="10" viewBox="0 0 10 10"><path d="M2 5 L4.2 7.5 L8.5 2" stroke="#e8e8e8" stroke-width="1.8" fill="none"/></svg>
<div class="t" style="left:304px;top:1512.27px;font-size:11.5px;line-height:11.5px;color:#e4e4e4;font-family:'Liberation Sans', sans-serif;transform:scaleX(0.93);transform-origin:0 0;">Textures</div>
<div class="a" style="left:400px;top:1512px;width:10px;height:10px;background:#5a5a5a;"></div>
<svg class="a" style="left:400px;top:1512px;" width="10" height="10" viewBox="0 0 10 10"><path d="M2 5 L4.2 7.5 L8.5 2" stroke="#e8e8e8" stroke-width="1.8" fill="none"/></svg>
<div class="t" style="left:304px;top:1531.27px;font-size:11.5px;line-height:11.5px;color:#e4e4e4;font-family:'Liberation Sans', sans-serif;transform:scaleX(0.93);transform-origin:0 0;">Memory</div>
<div class="a" style="left:400px;top:1531px;width:10px;height:10px;background:#5a5a5a;"></div>
<svg class="a" style="left:400px;top:1531px;" width="10" height="10" viewBox="0 0 10 10"><path d="M2 5 L4.2 7.5 L8.5 2" stroke="#e8e8e8" stroke-width="1.8" fill="none"/></svg>
<div class="t" style="left:304px;top:1551.27px;font-size:11.5px;line-height:11.5px;color:#e4e4e4;font-family:'Liberation Sans', sans-serif;transform:scaleX(0.93);transform-origin:0 0;">Poly/objects</div>
<div class="a" style="left:400px;top:1551px;width:10px;height:10px;background:#5a5a5a;"></div>
<svg class="a" style="left:400px;top:1551px;" width="10" height="10" viewBox="0 0 10 10"><path d="M2 5 L4.2 7.5 L8.5 2" stroke="#e8e8e8" stroke-width="1.8" fill="none"/></svg>
<div class="a" style="left:2px;top:1585px;width:424px;height:383px;background:#525252;border-radius:3px 3px 0 0;"></div>
<svg class="a" style="left:8px;top:1590px;" width="9" height="8" viewBox="0 0 9 8"><path d="M0.5 1 H8 L4.25 6.5Z" fill="#bdbdbd"/></svg>
<div class="t" style="left:21px;top:1588.42px;font-size:12.5px;line-height:12.5px;color:#f2f2f2;font-weight:bold;font-family:'Liberation Sans', sans-serif;transform:scaleX(0.94);transform-origin:0 0;">Render Settings</div>
<svg class="a" style="left:412px;top:1589px;" width="8" height="8" viewBox="0 0 8 8"><rect x="0" y="0" width="1.2" height="1.2" fill="#888"/><rect x="0" y="3" width="1.2" height="1.2" fill="#888"/><rect x="0" y="6" width="1.2" height="1.2" fill="#888"/><rect x="3" y="0" width="1.2" height="1.2" fill="#888"/><rect x="3" y="3" width="1.2" height="1.2" fill="#888"/><rect x="3" y="6" width="1.2" height="1.2" fill="#888"/><rect x="6" y="0" width="1.2" height="1.2" fill="#888"/><rect x="6" y="3" width="1.2" height="1.2" fill="#888"/><rect x="6" y="6" width="1.2" height="1.2" fill="#888"/></svg>
<div class="a" style="left:6px;top:1613px;width:118px;height:14px;background:#595959;border-radius:3px;"></div>
<div class="t" style="left:-235.0px;width:600px;text-align:center;top:1614.41px;font-size:11.5px;line-height:11.5px;color:#cfcfcf;transform:scaleX(0.88);transform-origin:50% 0;">AOV Settings</div>
<div class="t" style="left:8px;top:1633.27px;font-size:11.5px;line-height:11.5px;color:#e4e4e4;font-family:'Liberation Sans', sans-serif;transform:scaleX(0.93);transform-origin:0 0;">Viewport Tone mapping</div>
<div class="a" style="left:130px;top:1633px;width:88px;height:19px;background:#5e5e5e;"></div>
<div class="t" style="left:134px;top:1636.66px;font-size:12px;line-height:12px;color:#c8c8c8;font-family:'Liberation Sans', sans-serif;transform:scaleX(0.87);transform-origin:0 0;">LDR</div>
<svg class="a" style="left:206px;top:1639.5px;" width="8" height="6" viewBox="0 0 8 6"><path d="M0.5 0.5 H7.5 L4 5Z" fill="#d8d8d8"/></svg>
<div class="t" style="left:239px;top:1633.27px;font-size:11.5px;line-height:11.5px;color:#e4e4e4;font-family:'Liberation Sans', sans-serif;transform:scaleX(0.93);transform-origin:0 0;">Rend. Tone mapping</div>
<div class="a" style="left:351px;top:1633px;width:71px;height:19px;background:#5e5e5e;"></div>
<div class="t" style="left:355px;top:1636.66px;font-size:12px;line-height:12px;color:#c8c8c8;font-family:'Liberation Sans', sans-serif;transform:scaleX(0.87);transform-origin:0 0;">HDR</div>
<svg class="a" style="left:410px;top:1639.5px;" width="8" height="6" viewBox="0 0 8 6"><path d="M0.5 0.5 H7.5 L4 5Z" fill="#d8d8d8"/></svg>
<div class="t" style="left:8px;top:1655.27px;font-size:11.5px;line-height:11.5px;color:#e4e4e4;font-family:'Liberation Sans', sans-serif;transform:scaleX(0.93);transform-origin:0 0;">Clay mode</div>
<div class="a" style="left:130px;top:1657px;width:10px;height:10px;background:#5a5a5a;"></div>
<div class="t" style="left:239px;top:1655.27px;font-size:11.5px;line-height:11.5px;color:#e4e4e4;font-family:'Liberation Sans', sans-serif;transform:scaleX(0.93);transform-origin:0 0;">Update static geo.</div>
<div class="a" style="left:351px;top:1657px;width:10px;height:10px;background:#5a5a5a;"></div>
<div class="t" style="left:8px;top:1675.27px;font-size:11.5px;line-height:11.5px;color:#e4e4e4;font-family:'Liberation Sans', sans-serif;transform:scaleX(0.93);transform-origin:0 0;">Notify objects on render</div>
<div class="a" style="left:130px;top:1675px;width:88px;height:19px;background:#5e5e5e;"></div>
<div class="t" style="left:134px;top:1678.66px;font-size:12px;line-height:12px;color:#c8c8c8;font-family:'Liberation Sans', sans-serif;transform:scaleX(0.87);transform-origin:0 0;">Never</div>
<svg class="a" style="left:206px;top:1681.5px;" width="8" height="6" viewBox="0 0 8 6"><path d="M0.5 0.5 H7.5 L4 5Z" fill="#d8d8d8"/></svg>
<div class="t" style="left:239px;top:1675.27px;font-size:11.5px;line-height:11.5px;color:#e4e4e4;font-family:'Liberation Sans', sans-serif;transform:scaleX(0.93);transform-origin:0 0;">Enable displacement</div>
<div class="a" style="left:351px;top:1676px;width:10px;height:10px;background:#5a5a5a;"></div>
<svg class="a" style="left:351px;top:1676px;" width="10" height="10" viewBox="0 0 10 10"><path d="M2 5 L4.2 7.5 L8.5 2" stroke="#e8e8e8" stroke-width="1.8" fill="none"/></svg>
<div class="t" style="left:8px;top:1696.27px;font-size:11.5px;line-height:11.5px;color:#e4e4e4;font-family:'Liberation Sans', sans-serif;transform:scaleX(0.93);transform-origin:0 0;">Subsampling</div>
<div class="a" style="left:130px;top:1697px;width:60px;height:14px;background:#5e5e5e;"></div>
<div class="t" style="left:134px;top:1698.41px;font-size:11.5px;line-height:11.5px;color:#d0d0d0;font-family:'Liberation Sans', sans-serif;transform:scaleX(0.87);transform-origin:0 0;">1</div>
<svg class="a" style="left:180px;top:1698.0px;" width="7" height="12" viewBox="0 0 7 12"><path d="M0.5 5 L3.5 1 L6.5 5Z M0.5 7 L3.5 11 L6.5 7Z" fill="#d8d8d8"/></svg>
<div class="t" style="left:239px;top:1695.27px;font-size:11.5px;line-height:11.5px;color:#e4e4e4;font-family:'Liberation Sans', sans-serif;transform:scaleX(0.93);transform-origin:0 0;">3ds Max gamma hack</div>
<div class="a" style="left:351px;top:1696px;width:10px;height:10px;background:#5a5a5a;"></div>
<svg class="a" style="left:351px;top:1696px;" width="10" height="10" viewBox="0 0 10 10"><path d="M2 5 L4.2 7.5 L8.5 2" stroke="#e8e8e8" stroke-width="1.8" fill="none"/></svg>
<div class="a" style="left:9px;top:1727px;width:411px;height:55px;border:1px solid #343434;border-radius:3px;"></div>
<div class="t" style="left:14px;top:1721.27px;font-size:11.5px;line-height:11.5px;color:#e8e8e8;background:#525252;padding:0 3px;transform:scaleX(0.93);transform-origin:0 0;">Out of Core settings</div>
<div class="t" style="left:16px;top:1741.27px;font-size:11.5px;line-height:11.5px;color:#e4e4e4;font-family:'Liberation Sans', sans-serif;transform:scaleX(0.93);transform-origin:0 0;">Enable Out of Core data</div>
<div class="a" style="left:148px;top:1743px;width:10px;height:10px;background:#5a5a5a;"></div>
<svg class="a" style="left:148px;top:1743px;" width="10" height="10" viewBox="0 0 10 10"><path d="M2 5 L4.2 7.5 L8.5 2" stroke="#e8e8e8" stroke-width="1.8" fill="none"/></svg>
<div class="t" style="left:16px;top:1761.27px;font-size:11.5px;line-height:11.5px;color:#e4e4e4;font-family:'Liberation Sans', sans-serif;transform:scaleX(0.93);transform-origin:0 0;">RAM memory limit [GB]</div>
<div class="a" style="left:148px;top:1761px;width:55px;height:14px;background:#5e5e5e;"></div>
<div class="t" style="left:152px;top:1762.41px;font-size:11.5px;line-height:11.5px;color:#d0d0d0;font-family:'Liberation Sans', sans-serif;transform:scaleX(0.87);transform-origin:0 0;">8.0</div>
<svg class="a" style="left:193px;top:1762.0px;" width="7" height="12" viewBox="0 0 7 12"><path d="M0.5 5 L3.5 1 L6.5 5Z M0.5 7 L3.5 11 L6.5 7Z" fill="#d8d8d8"/></svg>
<div class="t" style="left:8px;top:1793.27px;font-size:11.5px;line-height:11.5px;color:#e4e4e4;font-family:'Liberation Sans', sans-serif;transform:scaleX(0.93);transform-origin:0 0;">GPU head room [MB]</div>
<div class="a" style="left:130px;top:1793px;width:55px;height:14px;background:#5e5e5e;"></div>
<div class="t" style="left:134px;top:1794.41px;font-size:11.5px;line-height:11.5px;color:#d0d0d0;font-family:'Liberation Sans', sans-serif;transform:scaleX(0.87);transform-origin:0 0;">512.0</div>
<svg class="a" style="left:175px;top:1794.0px;" width="7" height="12" viewBox="0 0 7 12"><path d="M0.5 5 L3.5 1 L6.5 5Z M0.5 7 L3.5 11 L6.5 7Z" fill="#d8d8d8"/></svg>
<div class="t" style="left:8px;top:1813.27px;font-size:11.5px;line-height:11.5px;color:#e4e4e4;font-family:'Liberation Sans', sans-serif;transform:scaleX(0.93);transform-origin:0 0;">Mat. preview spp</div>
<div class="a" style="left:130px;top:1813px;width:55px;height:14px;background:#5e5e5e;"></div>
<div class="t" style="left:134px;top:1814.41px;font-size:11.5px;line-height:11.5px;color:#d0d0d0;font-family:'Liberation Sans', sans-serif;transform:scaleX(0.87);transform-origin:0 0;">32</div>
<svg class="a" style="left:175px;top:1814.0px;" width="7" height="12" viewBox="0 0 7 12"><path d="M0.5 5 L3.5 1 L6.5 5Z M0.5 7 L3.5 11 L6.5 7Z" fill="#d8d8d8"/></svg>
<div class="t" style="left:8px;top:1833.27px;font-size:11.5px;line-height:11.5px;color:#e4e4e4;font-family:'Liberation Sans', sans-serif;transform:scaleX(0.93);transform-origin:0 0;">Mat. preview W/H</div>
<div class="a" style="left:130px;top:1833px;width:45px;height:14px;background:#5e5e5e;"></div>
<div class="t" style="left:134px;top:1834.41px;font-size:11.5px;line-height:11.5px;color:#d0d0d0;font-family:'Liberation Sans', sans-serif;transform:scaleX(0.87);transform-origin:0 0;">256</div>
<svg class="a" style="left:165px;top:1834.0px;" width="7" height="12" viewBox="0 0 7 12"><path d="M0.5 5 L3.5 1 L6.5 5Z M0.5 7 L3.5 11 L6.5 7Z" fill="#d8d8d8"/></svg>
<div class="a" style="left:181px;top:1833px;width:46px;height:14px;background:#5e5e5e;"></div>
<div class="t" style="left:185px;top:1834.41px;font-size:11.5px;line-height:11.5px;color:#d0d0d0;font-family:'Liberation Sans', sans-serif;transform:scaleX(0.87);transform-origin:0 0;">256</div>
<svg class="a" style="left:217px;top:1834.0px;" width="7" height="12" viewBox="0 0 7 12"><path d="M0.5 5 L3.5 1 L6.5 5Z M0.5 7 L3.5 11 L6.5 7Z" fill="#d8d8d8"/></svg>
<div class="t" style="left:8px;top:1861.27px;font-size:11.5px;line-height:11.5px;color:#e4e4e4;font-family:'Liberation Sans', sans-serif;transform:scaleX(0.93);transform-origin:0 0;">Broadcast Render mode</div>
<div class="a" style="left:130px;top:1861px;width:290px;height:19px;background:#5e5e5e;"></div>
<div class="t" style="left:134px;top:1864.66px;font-size:12px;line-height:12px;color:#c8c8c8;font-family:'Liberation Sans', sans-serif;transform:scaleX(0.87);transform-origin:0 0;">Normal (pre and post render)</div>
<svg class="a" style="left:408px;top:1867.5px;" width="8" height="6" viewBox="0 0 8 6"><path d="M0.5 0.5 H7.5 L4 5Z" fill="#d8d8d8"/></svg>
<div class="t" style="left:8px;top:1886.27px;font-size:11.5px;line-height:11.5px;color:#e4e4e4;font-family:'Liberation Sans', sans-serif;transform:scaleX(0.93);transform-origin:0 0;">Broadcast Frame mode</div>
<div class="a" style="left:130px;top:1886px;width:290px;height:19px;background:#5e5e5e;"></div>
<div class="t" style="left:134px;top:1889.66px;font-size:12px;line-height:12px;color:#c8c8c8;font-family:'Liberation Sans', sans-serif;transform:scaleX(0.87);transform-origin:0 0;">Normal (pre and post frame render)</div>
<svg class="a" style="left:408px;top:1892.5px;" width="8" height="6" viewBox="0 0 8 6"><path d="M0.5 0.5 H7.5 L4 5Z" fill="#d8d8d8"/></svg>
<div class="t" style="left:8px;top:1911.27px;font-size:11.5px;line-height:11.5px;color:#e4e4e4;font-family:'Liberation Sans', sans-serif;transform:scaleX(0.93);transform-origin:0 0;">Broadcast Pre Eval</div>
<div class="a" style="left:130px;top:1911px;width:290px;height:19px;background:#5e5e5e;"></div>
<div class="t" style="left:134px;top:1914.66px;font-size:12px;line-height:12px;color:#c8c8c8;font-family:'Liberation Sans', sans-serif;transform:scaleX(0.87);transform-origin:0 0;">Never</div>
<svg class="a" style="left:408px;top:1917.5px;" width="8" height="6" viewBox="0 0 8 6"><path d="M0.5 0.5 H7.5 L4 5Z" fill="#d8d8d8"/></svg>
<div class="t" style="left:8px;top:1936.27px;font-size:11.5px;line-height:11.5px;color:#e4e4e4;font-family:'Liberation Sans', sans-serif;transform:scaleX(0.93);transform-origin:0 0;">Broadcast frame change</div>
<div class="a" style="left:130px;top:1936px;width:290px;height:19px;background:#5e5e5e;"></div>
<div class="t" style="left:134px;top:1939.66px;font-size:12px;line-height:12px;color:#c8c8c8;font-family:'Liberation Sans', sans-serif;transform:scaleX(0.87);transform-origin:0 0;">Same as Kernel 'broadcast render'</div>
<svg class="a" style="left:408px;top:1942.5px;" width="8" height="6" viewBox="0 0 8 6"><path d="M0.5 0.5 H7.5 L4 5Z" fill="#d8d8d8"/></svg>
<div class="t" style="left:14px;top:1962.27px;font-size:11.5px;line-height:11.5px;color:#e4e4e4;font-family:'Liberation Sans', sans-serif;transform:scaleX(0.93);transform-origin:0 0;">IES distribution visualization</div>
<div class="a" style="left:0px;top:1968px;width:440px;height:5px;background:#444444;"></div>
<div class="a" style="left:2711px;top:1022px;width:598px;height:1087px;background:#444444;"></div>
<div class="a" style="left:2711px;top:2108px;width:598px;height:1px;background:#383838;"></div>
<div class="a" style="left:2711px;top:1022px;width:5px;height:1087px;background:#3d3d3d;"></div>
<div class="a" style="left:2717px;top:1025px;width:592px;height:2px;background-image:linear-gradient(90deg,#9a9a9a 50%,transparent 50%);background-size:2px 2px;"></div>
<div class="a" style="left:2716.5px;top:1031.5px;width:29.0px;height:25.5px;background:#3b3b3b;border-radius:4px 4px 0 0;"></div>
<div class="a" style="left:2748px;top:1031.5px;width:29px;height:25.5px;background:#474747;border-radius:4px 4px 0 0;"></div>
<div class="a" style="left:2780px;top:1031.5px;width:29px;height:25.5px;background:#3b3b3b;border-radius:4px 4px 0 0;"></div>
<div class="a" style="left:2812px;top:1031.5px;width:29px;height:25.5px;background:#3b3b3b;border-radius:4px 4px 0 0;"></div>
<div class="a" style="left:2843.5px;top:1031.5px;width:29.5px;height:25.5px;background:#3b3b3b;border-radius:4px 4px 0 0;"></div>
<div class="a" style="left:2875.5px;top:1031.5px;width:30.0px;height:25.5px;background:#3b3b3b;border-radius:4px 4px 0 0;"></div>
<svg class="a" style="left:2716px;top:1032px;" width="192" height="25" viewBox="0 0 192 25"><path d="M8 12.5 H22 M15 5.5 V19.5" stroke="#bdbdbd" stroke-width="2"/><g stroke="#3bb8b8" stroke-width="1.5" fill="none"><rect x="38.5" y="4.5" width="16" height="15"/><path d="M41 17 Q42 8 52 7" stroke="#ccc" stroke-width="2"/></g><g fill="#3bb8b8"><rect x="37" y="3" width="3" height="3"/><rect x="53" y="3" width="3" height="3"/><rect x="37" y="18" width="3" height="3"/><rect x="53" y="18" width="3" height="3"/></g><rect x="71" y="4" width="12" height="5" fill="#bdbdbd"/><path d="M77 9 V13 M69 13 H86 M69 13 V19 M86 13 V19" stroke="#3bb8b8" stroke-width="1.5" fill="none"/><rect x="67" y="17" width="4" height="4" fill="#3bb8b8"/><rect x="84" y="17" width="4" height="4" fill="#3bb8b8"/><circle cx="118" cy="12.5" r="7" fill="#bdbdbd"/><path d="M110 6 A8 8 0 0 0 110 19" stroke="#3bb8b8" stroke-width="1.5" fill="none"/><path d="M107 7 A8 8 0 0 0 107 18" stroke="#3bb8b8" stroke-width="1" fill="none"/><rect x="139" y="6" width="17" height="11" fill="#bdbdbd"/><rect x="144" y="19" width="7" height="1.5" fill="#bdbdbd"/><path d="M172 7 L184 19" stroke="#bdbdbd" stroke-width="2.5"/><circle cx="171" cy="6" r="3.5" fill="none" stroke="#bdbdbd" stroke-width="2"/></svg>
<div class="a" style="left:2917px;top:1272px;width:6px;height:833px;background:#3c3c3c;border-radius:3px;"></div>
<div class="a" style="left:3121px;top:1062px;width:7px;height:1043px;background:#3c3c3c;border-radius:3px;"></div>
<div class="a" style="left:2721px;top:1066px;width:177px;height:18px;background:#5e5e5e;"></div>
<div class="t" style="left:2726px;top:1069.84px;font-size:12px;line-height:12px;color:#d8d8d8;font-family:'Liberation Sans', sans-serif;transform:scaleX(0.88);transform-origin:0 0;">Sphere001_Hair</div>
<div class="a" style="left:2904px;top:1065.5px;width:16px;height:18.5px;background:#8fad1c;border-left:1px solid #222;border-top:1px solid #222;"></div>
<div class="a" style="left:2721px;top:1095px;width:201px;height:19px;background:#5e5e5e;"></div>
<div class="t" style="left:2725px;top:1099.66px;font-size:12px;line-height:12px;color:#d0d0d0;font-family:'Liberation Sans', sans-serif;transform:scaleX(0.87);transform-origin:0 0;">Modifier List</div>
<svg class="a" style="left:2910px;top:1101.5px;" width="8" height="6" viewBox="0 0 8 6"><path d="M0.5 0.5 H7.5 L4 5Z" fill="#d8d8d8"/></svg>
<div class="a" style="left:2720px;top:1119.5px;width:202px;height:98px;background:#3b3b3b;border:1.5px solid #f4f4f4;"></div>
<div class="a" style="left:2722px;top:1137.5px;width:198px;height:1px;background:#5a5a5a;"></div>
<div class="a" style="left:2722px;top:1154.5px;width:198px;height:1px;background:#5a5a5a;"></div>
<div class="a" style="left:2722px;top:1171.5px;width:198px;height:1px;background:#5a5a5a;"></div>
<div class="a" style="left:2722px;top:1196.5px;width:198px;height:1px;background:#5a5a5a;"></div>
<div class="a" style="left:2762px;top:1121px;width:158px;height:16.5px;background:#5c8ac6;"></div>
<div class="a" style="left:2722px;top:1172px;width:198px;height:7.5px;background:#cacaca;"></div>
<svg class="a" style="left:2727px;top:1124px;" width="14" height="10" viewBox="0 0 14 10"><path d="M0.5 5 Q7 -1 13.5 5 Q7 11 0.5 5Z" fill="#dcdcdc"/><circle cx="7" cy="5" r="2.6" fill="#3b3b3b"/><circle cx="7" cy="5" r="1" fill="#dcdcdc"/></svg>
<svg class="a" style="left:2727px;top:1141px;" width="14" height="10" viewBox="0 0 14 10"><path d="M0.5 5 Q7 -1 13.5 5 Q7 11 0.5 5Z" fill="#dcdcdc"/><circle cx="7" cy="5" r="2.6" fill="#3b3b3b"/><circle cx="7" cy="5" r="1" fill="#dcdcdc"/></svg>
<svg class="a" style="left:2727px;top:1158px;" width="14" height="10" viewBox="0 0 14 10"><path d="M0.5 5 Q7 -1 13.5 5 Q7 11 0.5 5Z" fill="#dcdcdc"/><circle cx="7" cy="5" r="2.6" fill="#3b3b3b"/><circle cx="7" cy="5" r="1" fill="#dcdcdc"/></svg>
<svg class="a" style="left:2749px;top:1125px;" width="7" height="9" viewBox="0 0 7 9"><path d="M0.5 0.5 L6 4.5 L0.5 8.5Z" fill="#dcdcdc"/></svg>
<svg class="a" style="left:2749px;top:1142px;" width="7" height="9" viewBox="0 0 7 9"><path d="M0.5 0.5 L6 4.5 L0.5 8.5Z" fill="#dcdcdc"/></svg>
<div class="t" style="left:2764px;top:1124.84px;font-size:12px;line-height:12px;color:#f0f0f0;font-family:'Liberation Sans', sans-serif;transform:scaleX(0.88);transform-origin:0 0;">Ox Hair from Guides</div>
<div class="t" style="left:2764px;top:1141.84px;font-size:12px;line-height:12px;color:#f0f0f0;font-family:'Liberation Sans', sans-serif;transform:scaleX(0.88);transform-origin:0 0;">Ox Edit Guides</div>
<div class="t" style="left:2764px;top:1158.84px;font-size:12px;line-height:12px;color:#f0f0f0;font-family:'Liberation Sans', sans-serif;transform:scaleX(0.88);transform-origin:0 0;">Ox Guides from Surface</div>
<div class="t" style="left:2744px;top:1183.42px;font-size:12.5px;line-height:12.5px;color:#f6f6f6;font-weight:bold;font-family:'Liberation Sans', sans-serif;transform:scaleX(0.93);transform-origin:0 0;">Sphere</div>
<svg class="a" style="left:2725px;top:1228px;" width="14" height="15" viewBox="0 0 14 15"><path d="M1 14 L6 9" stroke="#bbb" stroke-width="1.5"/><path d="M5 6 L9 2 L13 6 L9 10Z" fill="#ccc"/><path d="M4 7 L8 11" stroke="#ccc" stroke-width="2"/></svg>
<div class="a" style="left:2750px;top:1227px;width:1.5px;height:15px;background:#111;"></div>
<div class="a" style="left:2757px;top:1224px;width:22px;height:21.5px;background:#5c8ac6;border-radius:3px;"></div>
<svg class="a" style="left:2763px;top:1227px;" width="10" height="16" viewBox="0 0 10 16"><rect x="1" y="0" width="8" height="2" fill="#ddd"/><rect x="2.5" y="2" width="5" height="13" fill="#ddd"/><rect x="3.7" y="3" width="2.6" height="11" fill="#3bb8b8"/></svg>
<div class="a" style="left:2786px;top:1227px;width:1.5px;height:15px;background:#111;"></div>
<svg class="a" style="left:2796px;top:1227px;" width="16" height="16" viewBox="0 0 16 16"><circle cx="5" cy="5" r="4" fill="#555" stroke="#888"/><circle cx="10" cy="10" r="5" fill="#3a3a3a" stroke="#777"/></svg>
<svg class="a" style="left:2823px;top:1227px;" width="11" height="15" viewBox="0 0 11 15"><rect x="0" y="2" width="11" height="2" fill="#ccc"/><rect x="3" y="0" width="5" height="2" fill="#ccc"/><path d="M1.5 5 H9.5 V15 H1.5Z M4 6 V14 M7 6 V14" stroke="#ccc" stroke-width="1.2" fill="none"/></svg>
<div class="a" style="left:2846px;top:1227px;width:1.5px;height:15px;background:#111;"></div>
<svg class="a" style="left:2856px;top:1226px;" width="16" height="16" viewBox="0 0 16 16"><rect x="0.5" y="1.5" width="13" height="14" fill="none" stroke="#ddd" stroke-width="1.3"/><path d="M1 8 H13 M7 2 V15" stroke="#ddd"/><path d="M6 10 L14 1" stroke="#f2a818" stroke-width="2.5"/></svg>
<div class="a" style="left:2727px;top:1265px;width:82px;height:1px;background:#5a5a5a;"></div>
<div class="a" style="left:2831px;top:1265px;width:81px;height:1px;background:#5a5a5a;"></div>
<div class="a" style="left:2814px;top:1263px;width:13px;height:4px;background-image:radial-gradient(circle,#aaa 0.6px,transparent 0.8px);background-size:2px 2px;"></div>
<div class="a" style="left:2720px;top:1272px;width:194px;height:713px;background:#525252;border-radius:3px;"></div>
<svg class="a" style="left:2726px;top:1277px;" width="9" height="8" viewBox="0 0 9 8"><path d="M0.5 1 H8 L4.25 6.5Z" fill="#bdbdbd"/></svg>
<div class="t" style="left:2739px;top:1276.42px;font-size:12.5px;line-height:12.5px;color:#f2f2f2;font-weight:bold;font-family:'Liberation Sans', sans-serif;transform:scaleX(0.94);transform-origin:0 0;">Root Distribution</div>
<svg class="a" style="left:2900px;top:1276px;" width="8" height="8" viewBox="0 0 8 8"><rect x="0" y="0" width="1.2" height="1.2" fill="#888"/><rect x="0" y="3" width="1.2" height="1.2" fill="#888"/><rect x="0" y="6" width="1.2" height="1.2" fill="#888"/><rect x="3" y="0" width="1.2" height="1.2" fill="#888"/><rect x="3" y="3" width="1.2" height="1.2" fill="#888"/><rect x="3" y="6" width="1.2" height="1.2" fill="#888"/><rect x="6" y="0" width="1.2" height="1.2" fill="#888"/><rect x="6" y="3" width="1.2" height="1.2" fill="#888"/><rect x="6" y="6" width="1.2" height="1.2" fill="#888"/></svg>
<svg class="a" style="left:2741px;top:1300.5px;" width="48" height="48" viewBox="0 0 48 48"><rect x="-2" y="-2" width="52" height="52" fill="#3e3e3e"/><rect x="0.5" y="0.5" width="47" height="47" fill="#c4c4c6" stroke="#9a9a9a" stroke-width="1"/><path d="M2 2 L18 2 L24 38 L2 46 M18 2 L46 8 L24 38 L46 46 L2 46 M2 2 L24 38 M46 8 L46 46" stroke="#6a6a6a" stroke-width="0.8" fill="none"/><circle cx="6.0" cy="8.0" r="1.4" fill="#222"/><circle cx="13.5" cy="8.0" r="1.4" fill="#222"/><circle cx="21.0" cy="8.0" r="1.4" fill="#222"/><circle cx="28.5" cy="8.0" r="1.4" fill="#222"/><circle cx="36.0" cy="8.0" r="1.4" fill="#222"/><circle cx="43.5" cy="8.0" r="1.4" fill="#222"/><circle cx="6.0" cy="16.0" r="1.4" fill="#222"/><circle cx="13.5" cy="16.0" r="1.4" fill="#222"/><circle cx="21.0" cy="16.0" r="1.4" fill="#222"/><circle cx="28.5" cy="16.0" r="1.4" fill="#222"/><circle cx="36.0" cy="16.0" r="1.4" fill="#222"/><circle cx="43.5" cy="16.0" r="1.4" fill="#222"/><circle cx="6.0" cy="24.0" r="1.4" fill="#222"/><circle cx="13.5" cy="24.0" r="1.4" fill="#222"/><circle cx="21.0" cy="24.0" r="1.4" fill="#222"/><circle cx="28.5" cy="24.0" r="1.4" fill="#222"/><circle cx="36.0" cy="24.0" r="1.4" fill="#222"/><circle cx="43.5" cy="24.0" r="1.4" fill="#222"/><circle cx="6.0" cy="32.0" r="1.4" fill="#222"/><circle cx="13.5" cy="32.0" r="1.4" fill="#222"/><circle cx="21.0" cy="32.0" r="1.4" fill="#222"/><circle cx="28.5" cy="32.0" r="1.4" fill="#222"/><circle cx="36.0" cy="32.0" r="1.4" fill="#222"/><circle cx="43.5" cy="32.0" r="1.4" fill="#222"/><circle cx="6.0" cy="40.0" r="1.4" fill="#222"/><circle cx="13.5" cy="40.0" r="1.4" fill="#222"/><circle cx="21.0" cy="40.0" r="1.4" fill="#222"/><circle cx="28.5" cy="40.0" r="1.4" fill="#222"/><circle cx="36.0" cy="40.0" r="1.4" fill="#222"/><circle cx="43.5" cy="40.0" r="1.4" fill="#222"/></svg>
<svg class="a" style="left:2794px;top:1300.5px;" width="48" height="48" viewBox="0 0 48 48"><rect x="-2" y="-2" width="52" height="52" fill="#3e3e3e"/><rect x="0.5" y="0.5" width="47" height="47" fill="#c4c4c6" stroke="#9a9a9a" stroke-width="1"/><path d="M2 2 L18 2 L24 38 L2 46 M18 2 L46 8 L24 38 L46 46 L2 46 M2 2 L24 38 M46 8 L46 46" stroke="#6a6a6a" stroke-width="0.8" fill="none"/><circle cx="26.7" cy="21.3" r="1.4" fill="#222"/><circle cx="27.0" cy="12.8" r="1.4" fill="#222"/><circle cx="35.9" cy="36.3" r="1.4" fill="#222"/><circle cx="29.8" cy="11.1" r="1.4" fill="#222"/><circle cx="24.8" cy="17.5" r="1.4" fill="#222"/><circle cx="14.5" cy="41.2" r="1.4" fill="#222"/><circle cx="42.9" cy="6.7" r="1.4" fill="#222"/><circle cx="37.7" cy="27.9" r="1.4" fill="#222"/><circle cx="19.5" cy="15.8" r="1.4" fill="#222"/><circle cx="30.6" cy="22.4" r="1.4" fill="#222"/><circle cx="31.1" cy="30.2" r="1.4" fill="#222"/><circle cx="10.1" cy="34.2" r="1.4" fill="#222"/><circle cx="42.3" cy="41.8" r="1.4" fill="#222"/><circle cx="28.3" cy="6.7" r="1.4" fill="#222"/><circle cx="5.2" cy="10.1" r="1.4" fill="#222"/><circle cx="40.8" cy="16.5" r="1.4" fill="#222"/><circle cx="18.9" cy="39.1" r="1.4" fill="#222"/><circle cx="16.9" cy="25.9" r="1.4" fill="#222"/><circle cx="21.6" cy="7.5" r="1.4" fill="#222"/><circle cx="27.2" cy="37.1" r="1.4" fill="#222"/><circle cx="10.9" cy="13.5" r="1.4" fill="#222"/><circle cx="20.7" cy="6.4" r="1.4" fill="#222"/><circle cx="23.9" cy="36.1" r="1.4" fill="#222"/><circle cx="30.0" cy="25.3" r="1.4" fill="#222"/><circle cx="37.5" cy="10.7" r="1.4" fill="#222"/><circle cx="26.6" cy="19.2" r="1.4" fill="#222"/><circle cx="27.8" cy="9.3" r="1.4" fill="#222"/><circle cx="34.5" cy="8.7" r="1.4" fill="#222"/><circle cx="11.3" cy="35.7" r="1.4" fill="#222"/><circle cx="41.0" cy="21.5" r="1.4" fill="#222"/><rect x="28" y="36" width="18" height="11" rx="5" fill="#555"/><text x="30" y="45" font-size="9" font-weight="bold" fill="#ddd" font-family="Liberation Sans">UV</text></svg>
<svg class="a" style="left:2846px;top:1300.5px;" width="48" height="48" viewBox="0 0 48 48"><rect x="-2" y="-2" width="52" height="52" fill="#3e3e3e"/><rect x="0.5" y="0.5" width="47" height="47" fill="#c4c4c6" stroke="#9a9a9a" stroke-width="1"/><path d="M2 2 L18 2 L24 38 L2 46 M18 2 L46 8 L24 38 L46 46 L2 46 M2 2 L24 38 M46 8 L46 46" stroke="#6a6a6a" stroke-width="0.8" fill="none"/><circle cx="24.8" cy="35.7" r="1.4" fill="#222"/><circle cx="41.5" cy="16.0" r="1.4" fill="#222"/><circle cx="34.1" cy="31.8" r="1.4" fill="#222"/><circle cx="30.1" cy="9.2" r="1.4" fill="#222"/><circle cx="6.0" cy="19.6" r="1.4" fill="#222"/><circle cx="33.4" cy="14.6" r="1.4" fill="#222"/><circle cx="24.1" cy="17.1" r="1.4" fill="#222"/><circle cx="37.2" cy="40.9" r="1.4" fill="#222"/><circle cx="20.3" cy="42.9" r="1.4" fill="#222"/><circle cx="7.4" cy="35.9" r="1.4" fill="#222"/><circle cx="38.3" cy="10.7" r="1.4" fill="#222"/><circle cx="31.8" cy="26.2" r="1.4" fill="#222"/><circle cx="41.3" cy="13.0" r="1.4" fill="#222"/><circle cx="25.5" cy="38.5" r="1.4" fill="#222"/><circle cx="29.3" cy="16.7" r="1.4" fill="#222"/><circle cx="8.1" cy="40.7" r="1.4" fill="#222"/></svg>
<svg class="a" style="left:2741px;top:1357.5px;" width="48" height="48" viewBox="0 0 48 48"><rect x="-2" y="-2" width="52" height="52" fill="#3e3e3e"/><rect x="0.5" y="0.5" width="47" height="47" fill="#c4c4c6" stroke="#9a9a9a" stroke-width="1"/><path d="M2 2 L18 2 L24 38 L2 46 M18 2 L46 8 L24 38 L46 46 L2 46 M2 2 L24 38 M46 8 L46 46" stroke="#6a6a6a" stroke-width="0.8" fill="none"/><circle cx="32.1" cy="36.9" r="1.4" fill="#222"/><circle cx="11.9" cy="42.9" r="1.4" fill="#222"/><circle cx="12.4" cy="30.5" r="1.4" fill="#222"/><circle cx="8.5" cy="33.8" r="1.4" fill="#222"/><circle cx="10.7" cy="31.8" r="1.4" fill="#222"/><circle cx="32.5" cy="34.1" r="1.4" fill="#222"/><circle cx="21.8" cy="37.9" r="1.4" fill="#222"/><circle cx="42.5" cy="9.4" r="1.4" fill="#222"/><circle cx="24.6" cy="41.4" r="1.4" fill="#222"/><circle cx="33.1" cy="21.9" r="1.4" fill="#222"/><circle cx="16.6" cy="41.2" r="1.4" fill="#222"/><circle cx="8.2" cy="33.9" r="1.4" fill="#222"/><circle cx="37.0" cy="11.0" r="1.4" fill="#222"/><circle cx="17.4" cy="16.6" r="1.4" fill="#222"/><circle cx="25.6" cy="18.9" r="1.4" fill="#222"/><circle cx="39.0" cy="40.1" r="1.4" fill="#222"/><circle cx="17.0" cy="39.0" r="1.4" fill="#222"/><circle cx="7.6" cy="8.7" r="1.4" fill="#222"/><circle cx="30.3" cy="35.4" r="1.4" fill="#222"/><circle cx="36.1" cy="42.7" r="1.4" fill="#222"/><circle cx="37.7" cy="15.1" r="1.4" fill="#222"/><circle cx="33.2" cy="40.1" r="1.4" fill="#222"/><circle cx="8.6" cy="23.8" r="1.4" fill="#222"/><circle cx="10.9" cy="10.4" r="1.4" fill="#222"/><circle cx="23.2" cy="30.5" r="1.4" fill="#222"/><circle cx="42.0" cy="10.0" r="1.4" fill="#222"/><circle cx="24.2" cy="42.9" r="1.4" fill="#222"/><circle cx="34.1" cy="25.2" r="1.4" fill="#222"/><circle cx="14.2" cy="29.0" r="1.4" fill="#222"/><circle cx="14.9" cy="29.5" r="1.4" fill="#222"/></svg>
<svg class="a" style="left:2794px;top:1357.5px;" width="48" height="48" viewBox="0 0 48 48"><rect x="-2" y="-2" width="52" height="52" fill="#3e3e3e"/><rect x="0.5" y="0.5" width="47" height="47" fill="#c4c4c6" stroke="#9a9a9a" stroke-width="1"/><path d="M2 2 L18 2 L24 38 L2 46 M18 2 L46 8 L24 38 L46 46 L2 46 M2 2 L24 38 M46 8 L46 46" stroke="#6a6a6a" stroke-width="0.8" fill="none"/><circle cx="5.5" cy="9.3" r="1.4" fill="#222"/><circle cx="19.9" cy="31.0" r="1.4" fill="#222"/><circle cx="10.3" cy="9.3" r="1.4" fill="#222"/><circle cx="13.8" cy="33.8" r="1.4" fill="#222"/><circle cx="10.6" cy="33.1" r="1.4" fill="#222"/><circle cx="30.2" cy="10.2" r="1.4" fill="#222"/></svg>
<svg class="a" style="left:2846px;top:1357.5px;" width="48" height="48" viewBox="0 0 48 48"><rect x="-2" y="-2" width="52" height="52" fill="#3e3e3e"/><rect x="0.5" y="0.5" width="47" height="47" fill="#c4c4c6" stroke="#9a9a9a" stroke-width="1"/><path d="M2 2 L18 2 L24 38 L2 46 M18 2 L46 8 L24 38 L46 46 L2 46 M2 2 L24 38 M46 8 L46 46" stroke="#6a6a6a" stroke-width="0.8" fill="none"/><circle cx="29.3" cy="21.3" r="1.4" fill="#222"/><circle cx="32.5" cy="7.5" r="1.4" fill="#222"/><circle cx="31.5" cy="19.2" r="1.4" fill="#222"/><circle cx="28.1" cy="11.5" r="1.4" fill="#222"/></svg>
<svg class="a" style="left:2741px;top:1413.5px;" width="48" height="48" viewBox="0 0 48 48"><rect x="-2" y="-2" width="52" height="52" fill="#3e3e3e"/><rect x="0.5" y="0.5" width="47" height="47" fill="#c4c4c6" stroke="#9a9a9a" stroke-width="1"/><path d="M2 2 L18 2 L24 38 L2 46 M18 2 L46 8 L24 38 L46 46 L2 46 M2 2 L24 38 M46 8 L46 46" stroke="#6a6a6a" stroke-width="0.8" fill="none"/><circle cx="15.3" cy="23.5" r="1.4" fill="#222"/><circle cx="8.1" cy="17.9" r="1.4" fill="#222"/><circle cx="7.7" cy="5.4" r="1.4" fill="#222"/><circle cx="15.8" cy="9.5" r="1.4" fill="#222"/><circle cx="16.8" cy="33.3" r="1.4" fill="#222"/><circle cx="6.4" cy="28.7" r="1.4" fill="#222"/><circle cx="10.1" cy="35.2" r="1.4" fill="#222"/><circle cx="33.0" cy="13.0" r="1.4" fill="#222"/></svg>
<svg class="a" style="left:2794px;top:1413.5px;" width="48" height="48" viewBox="0 0 48 48"><rect x="-2" y="-2" width="52" height="52" fill="#3e3e3e"/><rect x="0.5" y="0.5" width="47" height="47" fill="#f4ee1c" stroke="#4a7ad0" stroke-width="2"/><path d="M2 2 L18 2 L24 38 L2 46 M18 2 L46 8 L24 38 L46 46 L2 46 M2 2 L24 38 M46 8 L46 46" stroke="#6a6a6a" stroke-width="0.8" fill="none"/><circle cx="42.2" cy="7.1" r="6" fill="none" stroke="#3aa8d8" stroke-width="1.2" stroke-dasharray="2 1.5"/><circle cx="42.2" cy="7.1" r="1.4" fill="#222"/><circle cx="32.6" cy="23.4" r="6" fill="none" stroke="#3aa8d8" stroke-width="1.2" stroke-dasharray="2 1.5"/><circle cx="32.6" cy="23.4" r="1.4" fill="#222"/><circle cx="40.8" cy="20.5" r="6" fill="none" stroke="#3aa8d8" stroke-width="1.2" stroke-dasharray="2 1.5"/><circle cx="40.8" cy="20.5" r="1.4" fill="#222"/><circle cx="39.9" cy="11.0" r="6" fill="none" stroke="#3aa8d8" stroke-width="1.2" stroke-dasharray="2 1.5"/><circle cx="39.9" cy="11.0" r="1.4" fill="#222"/><circle cx="42.8" cy="20.7" r="6" fill="none" stroke="#3aa8d8" stroke-width="1.2" stroke-dasharray="2 1.5"/><circle cx="42.8" cy="20.7" r="1.4" fill="#222"/><circle cx="12.0" cy="18.2" r="6" fill="none" stroke="#3aa8d8" stroke-width="1.2" stroke-dasharray="2 1.5"/><circle cx="12.0" cy="18.2" r="1.4" fill="#222"/><circle cx="29.0" cy="6.3" r="6" fill="none" stroke="#3aa8d8" stroke-width="1.2" stroke-dasharray="2 1.5"/><circle cx="29.0" cy="6.3" r="1.4" fill="#222"/><circle cx="19.7" cy="5.4" r="6" fill="none" stroke="#3aa8d8" stroke-width="1.2" stroke-dasharray="2 1.5"/><circle cx="19.7" cy="5.4" r="1.4" fill="#222"/><circle cx="7.6" cy="11.5" r="6" fill="none" stroke="#3aa8d8" stroke-width="1.2" stroke-dasharray="2 1.5"/><circle cx="7.6" cy="11.5" r="1.4" fill="#222"/></svg>
<div class="t" style="left:2743px;top:1475.27px;font-size:11.5px;line-height:11.5px;color:#e4e4e4;font-family:'Liberation Sans', sans-serif;transform:scaleX(0.93);transform-origin:0 0;">UV Channel:</div>
<div class="a" style="left:2830px;top:1474px;width:57px;height:14px;background:#5e5e5e;"></div>
<div class="t" style="left:2834px;top:1476.41px;font-size:11.5px;line-height:11.5px;color:#d0d0d0;font-family:'Liberation Sans', sans-serif;transform:scaleX(0.87);transform-origin:0 0;">1</div>
<svg class="a" style="left:2877px;top:1475.0px;" width="7" height="12" viewBox="0 0 7 12"><path d="M0.5 5 L3.5 1 L6.5 5Z M0.5 7 L3.5 11 L6.5 7Z" fill="#d8d8d8"/></svg>
<div class="a" style="left:2739px;top:1503px;width:156px;height:159px;border:1px solid #343434;border-radius:3px;"></div>
<div class="t" style="left:2744px;top:1499.27px;font-size:11.5px;line-height:11.5px;color:#e8e8e8;background:#525252;padding:0 3px;transform:scaleX(0.93);transform-origin:0 0;">Distribution Parameters</div>
<div class="t" style="left:2749px;top:1521.27px;font-size:11.5px;line-height:11.5px;color:#e4e4e4;font-family:'Liberation Sans', sans-serif;transform:scaleX(0.93);transform-origin:0 0;">View. Count:</div>
<div class="a" style="left:2830px;top:1520px;width:57px;height:14px;background:#5e5e5e;"></div>
<div class="t" style="left:2834px;top:1522.41px;font-size:11.5px;line-height:11.5px;color:#d0d0d0;font-family:'Liberation Sans', sans-serif;transform:scaleX(0.87);transform-origin:0 0;">1000</div>
<svg class="a" style="left:2877px;top:1521.0px;" width="7" height="12" viewBox="0 0 7 12"><path d="M0.5 5 L3.5 1 L6.5 5Z M0.5 7 L3.5 11 L6.5 7Z" fill="#d8d8d8"/></svg>
<div class="a" style="left:2749px;top:1544px;width:10px;height:10px;background:#5a5a5a;"></div>
<div class="t" style="left:2761px;top:1544.27px;font-size:11.5px;line-height:11.5px;color:#e4e4e4;font-family:'Liberation Sans', sans-serif;transform:scaleX(0.93);transform-origin:0 0;">Use Material ID</div>
<div class="t" style="left:2749px;top:1568.27px;font-size:11.5px;line-height:11.5px;color:#e4e4e4;font-family:'Liberation Sans', sans-serif;transform:scaleX(0.93);transform-origin:0 0;">Material ID:</div>
<div class="a" style="left:2830px;top:1567px;width:57px;height:14px;background:#5e5e5e;"></div>
<div class="t" style="left:2834px;top:1569.41px;font-size:11.5px;line-height:11.5px;color:#d0d0d0;font-family:'Liberation Sans', sans-serif;transform:scaleX(0.87);transform-origin:0 0;">2</div>
<svg class="a" style="left:2877px;top:1568.0px;" width="7" height="12" viewBox="0 0 7 12"><path d="M0.5 5 L3.5 1 L6.5 5Z M0.5 7 L3.5 11 L6.5 7Z" fill="#d8d8d8"/></svg>
<div class="a" style="left:2749px;top:1595px;width:10px;height:10px;background:#5a5a5a;"></div>
<div class="t" style="left:2761px;top:1596.27px;font-size:11.5px;line-height:11.5px;color:#e4e4e4;font-family:'Liberation Sans', sans-serif;transform:scaleX(0.93);transform-origin:0 0;">Use Sub-Selection</div>
<div class="t" style="left:2746px;top:1619.27px;font-size:11.5px;line-height:11.5px;color:#e4e4e4;font-family:'Liberation Sans', sans-serif;transform:scaleX(0.93);transform-origin:0 0;">Uniform Rand.:</div>
<div class="a" style="left:2830px;top:1617px;width:57px;height:14px;background:#5e5e5e;"></div>
<div class="t" style="left:2834px;top:1619.41px;font-size:11.5px;line-height:11.5px;color:#d0d0d0;font-family:'Liberation Sans', sans-serif;transform:scaleX(0.87);transform-origin:0 0;">0.0</div>
<svg class="a" style="left:2877px;top:1618.0px;" width="7" height="12" viewBox="0 0 7 12"><path d="M0.5 5 L3.5 1 L6.5 5Z M0.5 7 L3.5 11 L6.5 7Z" fill="#d8d8d8"/></svg>
<div class="t" style="left:2747px;top:1641.27px;font-size:11.5px;line-height:11.5px;color:#e4e4e4;font-family:'Liberation Sans', sans-serif;transform:scaleX(0.93);transform-origin:0 0;">Seed:</div>
<div class="a" style="left:2830px;top:1640px;width:57px;height:14px;background:#5e5e5e;"></div>
<div class="t" style="left:2834px;top:1642.41px;font-size:11.5px;line-height:11.5px;color:#d0d0d0;font-family:'Liberation Sans', sans-serif;transform:scaleX(0.87);transform-origin:0 0;">2</div>
<svg class="a" style="left:2877px;top:1641.0px;" width="7" height="12" viewBox="0 0 7 12"><path d="M0.5 5 L3.5 1 L6.5 5Z M0.5 7 L3.5 11 L6.5 7Z" fill="#d8d8d8"/></svg>
<div class="a" style="left:2739px;top:1674px;width:156px;height:60px;border:1px solid #343434;border-radius:3px;"></div>
<div class="t" style="left:2744px;top:1670.27px;font-size:11.5px;line-height:11.5px;color:#e8e8e8;background:#525252;padding:0 3px;transform:scaleX(0.93);transform-origin:0 0;">Root Orientation</div>
<div class="a" style="left:2749px;top:1691px;width:10px;height:10px;background:#5a5a5a;"></div>
<svg class="a" style="left:2749px;top:1691px;" width="10" height="10" viewBox="0 0 10 10"><path d="M2 5 L4.2 7.5 L8.5 2" stroke="#e8e8e8" stroke-width="1.8" fill="none"/></svg>
<div class="t" style="left:2761px;top:1692.27px;font-size:11.5px;line-height:11.5px;color:#e4e4e4;font-family:'Liberation Sans', sans-serif;transform:scaleX(0.93);transform-origin:0 0;">Topology-Based</div>
<div class="a" style="left:2749px;top:1710px;width:10px;height:10px;background:#5a5a5a;"></div>
<div class="t" style="left:2761px;top:1711.27px;font-size:11.5px;line-height:11.5px;color:#e4e4e4;font-family:'Liberation Sans', sans-serif;transform:scaleX(0.93);transform-origin:0 0;">Global Seg. Orient.</div>
<div class="a" style="left:2739px;top:1747px;width:156px;height:89px;border:1px solid #343434;border-radius:3px;"></div>
<div class="t" style="left:2744px;top:1743.27px;font-size:11.5px;line-height:11.5px;color:#e8e8e8;background:#525252;padding:0 3px;transform:scaleX(0.93);transform-origin:0 0;">Surface Displacement</div>
<div class="a" style="left:2746px;top:1760px;width:124px;height:21px;background:#5b5b5b;border-radius:3px;"></div>
<div class="t" style="left:2508.0px;width:600px;text-align:center;top:1765.66px;font-size:12px;line-height:12px;color:#cfcfcf;transform:scaleX(0.88);transform-origin:50% 0;">No Map</div>
<div class="a" style="left:2872px;top:1759px;width:17px;height:22px;background:#3e3e3e;border-radius:2px;"></div>
<svg class="a" style="left:2873px;top:1762px;" width="15" height="15" viewBox="0 0 15 15"><rect x="0" y="0" width="15" height="15" fill="#000"/><path d="M0 0 H15 L0 15Z" fill="#fff"/></svg>
<div class="t" style="left:2750px;top:1792.27px;font-size:11.5px;line-height:11.5px;color:#e4e4e4;font-family:'Liberation Sans', sans-serif;transform:scaleX(0.93);transform-origin:0 0;">Offset:</div>
<div class="a" style="left:2830px;top:1791px;width:57px;height:14px;background:#5e5e5e;"></div>
<div class="t" style="left:2834px;top:1793.41px;font-size:11.5px;line-height:11.5px;color:#d0d0d0;font-family:'Liberation Sans', sans-serif;transform:scaleX(0.87);transform-origin:0 0;">0.0</div>
<svg class="a" style="left:2877px;top:1792.0px;" width="7" height="12" viewBox="0 0 7 12"><path d="M0.5 5 L3.5 1 L6.5 5Z M0.5 7 L3.5 11 L6.5 7Z" fill="#d8d8d8"/></svg>
<div class="t" style="left:2750px;top:1810.27px;font-size:11.5px;line-height:11.5px;color:#e4e4e4;font-family:'Liberation Sans', sans-serif;transform:scaleX(0.93);transform-origin:0 0;">Min. Value:</div>
<div class="a" style="left:2830px;top:1809px;width:57px;height:14px;background:#5e5e5e;"></div>
<div class="t" style="left:2834px;top:1811.41px;font-size:11.5px;line-height:11.5px;color:#d0d0d0;font-family:'Liberation Sans', sans-serif;transform:scaleX(0.87);transform-origin:0 0;">0.0</div>
<svg class="a" style="left:2877px;top:1810.0px;" width="7" height="12" viewBox="0 0 7 12"><path d="M0.5 5 L3.5 1 L6.5 5Z M0.5 7 L3.5 11 L6.5 7Z" fill="#d8d8d8"/></svg>
<div class="a" style="left:2739px;top:1851px;width:156px;height:120px;border:1px solid #343434;border-radius:3px;"></div>
<div class="t" style="left:2744px;top:1847.27px;font-size:11.5px;line-height:11.5px;color:#e8e8e8;background:#525252;padding:0 3px;transform:scaleX(0.93);transform-origin:0 0;">Root Caching</div>
<div class="a" style="left:2746px;top:1866px;width:141px;height:24px;background:#5b5b5b;border-radius:3px;"></div>
<div class="t" style="left:2516.5px;width:600px;text-align:center;top:1873.16px;font-size:12px;line-height:12px;color:#d8d8d8;transform:scaleX(0.88);transform-origin:50% 0;">Remember Roots</div>
<div class="a" style="left:2744.5px;top:1895px;width:145.5px;height:18px;background:#5b5b5b;border-radius:2px;"></div>
<div class="a" style="left:2745px;top:1916px;width:145px;height:18px;background:#5b5b5b;border-radius:3px;"></div>
<div class="t" style="left:2517.5px;width:600px;text-align:center;top:1920.16px;font-size:12px;line-height:12px;color:#d8d8d8;transform:scaleX(0.88);transform-origin:50% 0;">Browse...</div>
<div class="a" style="left:2745px;top:1942px;width:145px;height:22px;background:#5b5b5b;border-radius:3px;"></div>
<div class="t" style="left:2517.5px;width:600px;text-align:center;top:1948.16px;font-size:12px;line-height:12px;color:#d8d8d8;transform:scaleX(0.88);transform-origin:50% 0;">Detach Roots</div>
<div class="a" style="left:2924px;top:1062px;width:194px;height:206px;background:#525252;border-radius:3px;"></div>
<svg class="a" style="left:2930px;top:1067px;" width="9" height="8" viewBox="0 0 9 8"><path d="M0.5 1 H8 L4.25 6.5Z" fill="#bdbdbd"/></svg>
<div class="t" style="left:2943px;top:1066.42px;font-size:12.5px;line-height:12.5px;color:#f2f2f2;font-weight:bold;font-family:'Liberation Sans', sans-serif;transform:scaleX(0.94);transform-origin:0 0;">Additional Root Data</div>
<svg class="a" style="left:3104px;top:1066px;" width="8" height="8" viewBox="0 0 8 8"><rect x="0" y="0" width="1.2" height="1.2" fill="#888"/><rect x="0" y="3" width="1.2" height="1.2" fill="#888"/><rect x="0" y="6" width="1.2" height="1.2" fill="#888"/><rect x="3" y="0" width="1.2" height="1.2" fill="#888"/><rect x="3" y="3" width="1.2" height="1.2" fill="#888"/><rect x="3" y="6" width="1.2" height="1.2" fill="#888"/><rect x="6" y="0" width="1.2" height="1.2" fill="#888"/><rect x="6" y="3" width="1.2" height="1.2" fill="#888"/><rect x="6" y="6" width="1.2" height="1.2" fill="#888"/></svg>
<div class="a" style="left:2942px;top:1092.5px;width:158px;height:167.0px;border:1px solid #343434;border-radius:3px;"></div>
<div class="t" style="left:2947px;top:1088.27px;font-size:11.5px;line-height:11.5px;color:#e8e8e8;background:#525252;padding:0 3px;transform:scaleX(0.93);transform-origin:0 0;">Data Stored in Hair</div>
<div class="a" style="left:2952px;top:1109.6px;width:10px;height:10px;background:#5a5a5a;"></div>
<div class="t" style="left:2964px;top:1110.87px;font-size:11.5px;line-height:11.5px;color:#e4e4e4;font-family:'Liberation Sans', sans-serif;transform:scaleX(0.93);transform-origin:0 0;">Use Per-Root Topology</div>
<div class="a" style="left:2952px;top:1130.5px;width:10px;height:10px;background:#5a5a5a;"></div>
<svg class="a" style="left:2952px;top:1130.5px;" width="10" height="10" viewBox="0 0 10 10"><path d="M2 5 L4.2 7.5 L8.5 2" stroke="#e8e8e8" stroke-width="1.8" fill="none"/></svg>
<div class="t" style="left:2964px;top:1131.77px;font-size:11.5px;line-height:11.5px;color:#e4e4e4;font-family:'Liberation Sans', sans-serif;transform:scaleX(0.93);transform-origin:0 0;">Use Strand Transforms</div>
<div class="a" style="left:2952px;top:1151.7px;width:10px;height:10px;background:#5a5a5a;"></div>
<svg class="a" style="left:2952px;top:1151.7px;" width="10" height="10" viewBox="0 0 10 10"><path d="M2 5 L4.2 7.5 L8.5 2" stroke="#e8e8e8" stroke-width="1.8" fill="none"/></svg>
<div class="t" style="left:2964px;top:1152.97px;font-size:11.5px;line-height:11.5px;color:#e4e4e4;font-family:'Liberation Sans', sans-serif;transform:scaleX(0.93);transform-origin:0 0;">Keep Surf. Dependency</div>
<div class="a" style="left:2952px;top:1173px;width:10px;height:10px;background:#5a5a5a;"></div>
<svg class="a" style="left:2952px;top:1173px;" width="10" height="10" viewBox="0 0 10 10"><path d="M2 5 L4.2 7.5 L8.5 2" stroke="#e8e8e8" stroke-width="1.8" fill="none"/></svg>
<div class="t" style="left:2964px;top:1174.27px;font-size:11.5px;line-height:11.5px;color:#e4e4e4;font-family:'Liberation Sans', sans-serif;transform:scaleX(0.93);transform-origin:0 0;">Keep Guide Dependency</div>
<div class="a" style="left:2952px;top:1194.5px;width:10px;height:10px;background:#5a5a5a;"></div>
<svg class="a" style="left:2952px;top:1194.5px;" width="10" height="10" viewBox="0 0 10 10"><path d="M2 5 L4.2 7.5 L8.5 2" stroke="#e8e8e8" stroke-width="1.8" fill="none"/></svg>
<div class="t" style="left:2964px;top:1195.77px;font-size:11.5px;line-height:11.5px;color:#e4e4e4;font-family:'Liberation Sans', sans-serif;transform:scaleX(0.93);transform-origin:0 0;">Keep Per-Strand Data</div>
<div class="a" style="left:2952px;top:1216px;width:10px;height:10px;background:#5a5a5a;"></div>
<div class="t" style="left:2964px;top:1217.27px;font-size:11.5px;line-height:11.5px;color:#e4e4e4;font-family:'Liberation Sans', sans-serif;transform:scaleX(0.93);transform-origin:0 0;">Keep Per-Vertex Data</div>
<div class="a" style="left:2952px;top:1235px;width:10px;height:10px;background:#5a5a5a;"></div>
<svg class="a" style="left:2952px;top:1235px;" width="10" height="10" viewBox="0 0 10 10"><path d="M2 5 L4.2 7.5 L8.5 2" stroke="#e8e8e8" stroke-width="1.8" fill="none"/></svg>
<div class="t" style="left:2964px;top:1236.27px;font-size:11.5px;line-height:11.5px;color:#e4e4e4;font-family:'Liberation Sans', sans-serif;transform:scaleX(0.93);transform-origin:0 0;">Keep Rotations</div>
<div class="a" style="left:3128px;top:1062px;width:181px;height:1019px;background:#525252;border-radius:3px 0 0 3px;"></div>
<svg class="a" style="left:3134px;top:1067px;" width="9" height="8" viewBox="0 0 9 8"><path d="M0.5 1 H8 L4.25 6.5Z" fill="#bdbdbd"/></svg>
<div class="t" style="left:3147px;top:1066.42px;font-size:12.5px;line-height:12.5px;color:#f2f2f2;font-weight:bold;font-family:'Liberation Sans', sans-serif;transform:scaleX(0.94);transform-origin:0 0;">Dense Hair Settings</div>
<svg class="a" style="left:3316px;top:1066px;" width="8" height="8" viewBox="0 0 8 8"><rect x="0" y="0" width="1.2" height="1.2" fill="#888"/><rect x="0" y="3" width="1.2" height="1.2" fill="#888"/><rect x="0" y="6" width="1.2" height="1.2" fill="#888"/><rect x="3" y="0" width="1.2" height="1.2" fill="#888"/><rect x="3" y="3" width="1.2" height="1.2" fill="#888"/><rect x="3" y="6" width="1.2" height="1.2" fill="#888"/><rect x="6" y="0" width="1.2" height="1.2" fill="#888"/><rect x="6" y="3" width="1.2" height="1.2" fill="#888"/><rect x="6" y="6" width="1.2" height="1.2" fill="#888"/></svg>
<div class="t" style="left:3151px;top:1091.27px;font-size:11.5px;line-height:11.5px;color:#e4e4e4;font-family:'Liberation Sans', sans-serif;transform:scaleX(0.93);transform-origin:0 0;">Group:</div>
<div class="a" style="left:3186px;top:1089px;width:115px;height:19px;background:#5b5b5b;"></div>
<div class="a" style="left:3147px;top:1120.5px;width:155px;height:81.0px;border:1px solid #343434;border-radius:3px;"></div>
<div class="t" style="left:3152px;top:1116.27px;font-size:11.5px;line-height:11.5px;color:#e8e8e8;background:#525252;padding:0 3px;transform:scaleX(0.93);transform-origin:0 0;">Hair Count</div>
<div class="a" style="left:3154px;top:1139px;width:10px;height:10px;background:#5a5a5a;"></div>
<div class="t" style="left:3166px;top:1140.27px;font-size:11.5px;line-height:11.5px;color:#e4e4e4;font-family:'Liberation Sans', sans-serif;transform:scaleX(0.93);transform-origin:0 0;">View Count from Render</div>
<div class="t" style="left:3152px;top:1159.27px;font-size:11.5px;line-height:11.5px;color:#8c8c8c;font-family:'Liberation Sans', sans-serif;transform:scaleX(0.93);transform-origin:0 0;">Percentage:</div>
<div class="a" style="left:3237.5px;top:1158px;width:57.5px;height:14px;background:#555;"></div>
<div class="t" style="left:3241.5px;top:1160.41px;font-size:11.5px;line-height:11.5px;color:#888;font-family:'Liberation Sans', sans-serif;transform:scaleX(0.87);transform-origin:0 0;">10.0</div>
<svg class="a" style="left:3285px;top:1159.0px;" width="7" height="12" viewBox="0 0 7 12"><path d="M0.5 5 L3.5 1 L6.5 5Z M0.5 7 L3.5 11 L6.5 7Z" fill="#d8d8d8"/></svg>
<div class="t" style="left:3152px;top:1181.27px;font-size:11.5px;line-height:11.5px;color:#e4e4e4;font-family:'Liberation Sans', sans-serif;transform:scaleX(0.93);transform-origin:0 0;">Render Count:</div>
<div class="a" style="left:3237.5px;top:1180px;width:57.5px;height:14px;background:#5e5e5e;"></div>
<div class="t" style="left:3241.5px;top:1182.41px;font-size:11.5px;line-height:11.5px;color:#d0d0d0;font-family:'Liberation Sans', sans-serif;transform:scaleX(0.87);transform-origin:0 0;">10000</div>
<svg class="a" style="left:3285px;top:1181.0px;" width="7" height="12" viewBox="0 0 7 12"><path d="M0.5 5 L3.5 1 L6.5 5Z M0.5 7 L3.5 11 L6.5 7Z" fill="#d8d8d8"/></svg>
<div class="a" style="left:3147px;top:1214px;width:155px;height:39px;border:1px solid #343434;border-radius:3px;"></div>
<div class="t" style="left:3152px;top:1210.27px;font-size:11.5px;line-height:11.5px;color:#e8e8e8;background:#525252;padding:0 3px;transform:scaleX(0.93);transform-origin:0 0;">Export Object Type</div>
<div class="a" style="left:3159px;top:1227px;width:66px;height:18px;background:#5b5b5b;border-radius:3px;"></div>
<div class="t" style="left:2892.0px;width:600px;text-align:center;top:1231.16px;font-size:12px;line-height:12px;color:#cfcfcf;transform:scaleX(0.88);transform-origin:50% 0;">Hair</div>
<div class="a" style="left:3228px;top:1227px;width:66px;height:18px;background:#5b5b5b;border-radius:3px;"></div>
<div class="t" style="left:2961.0px;width:600px;text-align:center;top:1231.16px;font-size:12px;line-height:12px;color:#cfcfcf;transform:scaleX(0.88);transform-origin:50% 0;">Guides</div>
<div class="a" style="left:3147px;top:1266.5px;width:155px;height:161.5px;border:1px solid #343434;border-radius:3px;"></div>
<div class="t" style="left:3152px;top:1262.27px;font-size:11.5px;line-height:11.5px;color:#e8e8e8;background:#525252;padding:0 3px;transform:scaleX(0.93);transform-origin:0 0;">Dense Distribution Settings</div>
<div class="t" style="left:3154px;top:1279.77px;font-size:11.5px;line-height:11.5px;color:#e4e4e4;font-family:'Liberation Sans', sans-serif;transform:scaleX(0.93);transform-origin:0 0;">Distribution Map:</div>
<div class="a" style="left:3154px;top:1300px;width:105px;height:21px;background:#5b5b5b;border-radius:3px;"></div>
<div class="t" style="left:2906.5px;width:600px;text-align:center;top:1305.66px;font-size:12px;line-height:12px;color:#cfcfcf;transform:scaleX(0.88);transform-origin:50% 0;">No Map</div>
<div class="a" style="left:3261px;top:1300px;width:17px;height:21px;background:#3e3e3e;border-radius:2px;"></div>
<svg class="a" style="left:3262.5px;top:1303px;" width="14" height="14" viewBox="0 0 14 14"><rect x="0" y="0" width="14" height="14" fill="#000"/><path d="M0 0 H14 L0 14Z" fill="#fff"/></svg>
<div class="a" style="left:3279px;top:1300px;width:17px;height:21px;background:#4e4e4e;border:1px solid #3a3a3a;"></div>
<svg class="a" style="left:3280px;top:1301px;" width="16" height="12" viewBox="0 0 16 12"><path d="M8 3 L13 0 L14 2 L10 6 Z" fill="#e00"/><path d="M3 6 Q6 2 10 5 Q8 9 6 10Z" fill="#e00" stroke="#000" stroke-width="0.6"/></svg>
<div class="a" style="left:3154px;top:1333px;width:10px;height:10px;background:#5a5a5a;"></div>
<svg class="a" style="left:3154px;top:1333px;" width="10" height="10" viewBox="0 0 10 10"><path d="M2 5 L4.2 7.5 L8.5 2" stroke="#e8e8e8" stroke-width="1.8" fill="none"/></svg>
<div class="t" style="left:3168px;top:1334.27px;font-size:11.5px;line-height:11.5px;color:#e4e4e4;font-family:'Liberation Sans', sans-serif;transform:scaleX(0.93);transform-origin:0 0;">Guide Proximity</div>
<div class="t" style="left:3152px;top:1353.27px;font-size:11.5px;line-height:11.5px;color:#e4e4e4;font-family:'Liberation Sans', sans-serif;transform:scaleX(0.93);transform-origin:0 0;">Distance:</div>
<div class="a" style="left:3237.5px;top:1352px;width:57.5px;height:14px;background:#5e5e5e;"></div>
<div class="t" style="left:3241.5px;top:1354.41px;font-size:11.5px;line-height:11.5px;color:#d0d0d0;font-family:'Liberation Sans', sans-serif;transform:scaleX(0.87);transform-origin:0 0;">1.27m</div>
<svg class="a" style="left:3285px;top:1353.0px;" width="7" height="12" viewBox="0 0 7 12"><path d="M0.5 5 L3.5 1 L6.5 5Z M0.5 7 L3.5 11 L6.5 7Z" fill="#d8d8d8"/></svg>
<div class="a" style="left:3154px;top:1380px;width:10px;height:10px;background:#5a5a5a;"></div>
<div class="t" style="left:3168px;top:1381.27px;font-size:11.5px;line-height:11.5px;color:#e4e4e4;font-family:'Liberation Sans', sans-serif;transform:scaleX(0.93);transform-origin:0 0;">Use Guide Faces</div>
<div class="t" style="left:3152px;top:1402.27px;font-size:11.5px;line-height:11.5px;color:#e4e4e4;font-family:'Liberation Sans', sans-serif;transform:scaleX(0.93);transform-origin:0 0;">Iterations:</div>
<div class="a" style="left:3237.5px;top:1401px;width:57.5px;height:14px;background:#5e5e5e;"></div>
<div class="t" style="left:3241.5px;top:1403.41px;font-size:11.5px;line-height:11.5px;color:#d0d0d0;font-family:'Liberation Sans', sans-serif;transform:scaleX(0.87);transform-origin:0 0;">1</div>
<svg class="a" style="left:3285px;top:1402.0px;" width="7" height="12" viewBox="0 0 7 12"><path d="M0.5 5 L3.5 1 L6.5 5Z M0.5 7 L3.5 11 L6.5 7Z" fill="#d8d8d8"/></svg>
<div class="a" style="left:3147px;top:1440.5px;width:155px;height:41.5px;border:1px solid #343434;border-radius:3px;"></div>
<div class="t" style="left:3152px;top:1436.27px;font-size:11.5px;line-height:11.5px;color:#e8e8e8;background:#525252;padding:0 3px;transform:scaleX(0.93);transform-origin:0 0;">Strand Instancing</div>
<div class="a" style="left:3154px;top:1458px;width:10px;height:10px;background:#5a5a5a;"></div>
<div class="t" style="left:3168px;top:1459.27px;font-size:11.5px;line-height:11.5px;color:#e4e4e4;font-family:'Liberation Sans', sans-serif;transform:scaleX(0.93);transform-origin:0 0;">Instanced Strands</div>
<div class="a" style="left:3147px;top:1497px;width:155px;height:211px;border:1px solid #343434;border-radius:3px;"></div>
<div class="t" style="left:3152px;top:1493.27px;font-size:11.5px;line-height:11.5px;color:#e8e8e8;background:#525252;padding:0 3px;transform:scaleX(0.93);transform-origin:0 0;">Interpolation Guide Selection</div>
<svg class="a" style="left:3157px;top:1513px;" width="30" height="30" viewBox="0 0 30 30"><rect x="-2" y="-2" width="34" height="34" fill="#3e3e3e"/><rect x="0" y="0" width="30" height="30" fill="#c6c6c8"/><circle cx="7" cy="9" r="1.3" fill="#444"/><circle cx="24" cy="5" r="1.3" fill="#444"/><circle cx="7" cy="24" r="1.3" fill="#444"/><circle cx="24" cy="26" r="1.3" fill="#444"/><circle cx="15" cy="16" r="1.6" fill="#e00"/><path d="M7 9 L15 16 L7 24" stroke="#555" fill="none"/></svg>
<svg class="a" style="left:3191px;top:1513px;" width="30" height="30" viewBox="0 0 30 30"><rect x="-2" y="-2" width="34" height="34" fill="#3e3e3e"/><rect x="0" y="0" width="30" height="30" fill="#f4ee00"/><rect x="0.5" y="0.5" width="29" height="29" fill="none" stroke="#4a7ad0" stroke-width="1.5"/><circle cx="7" cy="9" r="1.3" fill="#444"/><circle cx="24" cy="5" r="1.3" fill="#444"/><circle cx="7" cy="24" r="1.3" fill="#444"/><circle cx="24" cy="26" r="1.3" fill="#444"/><circle cx="15" cy="16" r="1.6" fill="#e00"/><path d="M7 9 L15 16 L24 16 L7 27 Z M15 16 L7 27" stroke="#444" fill="none"/></svg>
<svg class="a" style="left:3226px;top:1513px;" width="30" height="30" viewBox="0 0 30 30"><rect x="-2" y="-2" width="34" height="34" fill="#3e3e3e"/><rect x="0" y="0" width="30" height="30" fill="#c6c6c8"/><circle cx="7" cy="9" r="1.3" fill="#444"/><circle cx="24" cy="5" r="1.3" fill="#444"/><circle cx="7" cy="24" r="1.3" fill="#444"/><circle cx="24" cy="26" r="1.3" fill="#444"/><circle cx="15" cy="16" r="1.6" fill="#e00"/><circle cx="15" cy="16" r="12" fill="none" stroke="#777" stroke-width="0.7"/></svg>
<div class="a" style="left:3153.5px;top:1553px;width:143.0px;height:43px;border:1px solid #343434;border-radius:3px;"></div>
<div class="t" style="left:3158.5px;top:1548.87px;font-size:11.5px;line-height:11.5px;color:#e8e8e8;background:#525252;padding:0 3px;transform:scaleX(0.93);transform-origin:0 0;">Barycentric guide area</div>
<div class="a" style="left:3161.5px;top:1570px;width:127.5px;height:19px;background:#5e5e5e;"></div>
<div class="t" style="left:3165.5px;top:1574.66px;font-size:12px;line-height:12px;color:#d0d0d0;font-family:'Liberation Sans', sans-serif;transform:scaleX(0.87);transform-origin:0 0;">Nearest N...ngulation</div>
<svg class="a" style="left:3277px;top:1576.5px;" width="8" height="6" viewBox="0 0 8 6"><path d="M0.5 0.5 H7.5 L4 5Z" fill="#d8d8d8"/></svg>
<div class="a" style="left:3153.5px;top:1617.5px;width:143.0px;height:57.5px;border:1px solid #343434;border-radius:3px;"></div>
<div class="t" style="left:3158.5px;top:1613.27px;font-size:11.5px;line-height:11.5px;color:#e8e8e8;background:#525252;padding:0 3px;transform:scaleX(0.93);transform-origin:0 0;">Circle guide area</div>
<div class="a" style="left:3163px;top:1632.5px;width:10px;height:10px;background:#5a5a5a;"></div>
<svg class="a" style="left:3163px;top:1632.5px;" width="10" height="10" viewBox="0 0 10 10"><path d="M2 5 L4.2 7.5 L8.5 2" stroke="#e8e8e8" stroke-width="1.8" fill="none"/></svg>
<div class="t" style="left:3176px;top:1633.27px;font-size:11.5px;line-height:11.5px;color:#e4e4e4;font-family:'Liberation Sans', sans-serif;transform:scaleX(0.93);transform-origin:0 0;">Through nearest</div>
<div class="t" style="left:3160px;top:1654.27px;font-size:11.5px;line-height:11.5px;color:#e4e4e4;font-family:'Liberation Sans', sans-serif;transform:scaleX(0.93);transform-origin:0 0;">Radius:</div>
<div class="a" style="left:3228px;top:1654px;width:56px;height:14px;background:#5e5e5e;"></div>
<div class="t" style="left:3232px;top:1656.41px;font-size:11.5px;line-height:11.5px;color:#d0d0d0;font-family:'Liberation Sans', sans-serif;transform:scaleX(0.87);transform-origin:0 0;">0.127m</div>
<svg class="a" style="left:3274px;top:1655.0px;" width="7" height="12" viewBox="0 0 7 12"><path d="M0.5 5 L3.5 1 L6.5 5Z M0.5 7 L3.5 11 L6.5 7Z" fill="#d8d8d8"/></svg>
<div class="a" style="left:3154px;top:1687px;width:10px;height:10px;background:#5a5a5a;"></div>
<div class="t" style="left:3168px;top:1688.27px;font-size:11.5px;line-height:11.5px;color:#e4e4e4;font-family:'Liberation Sans', sans-serif;transform:scaleX(0.93);transform-origin:0 0;">Use UV Coords</div>
<div class="a" style="left:3147px;top:1716.5px;width:155px;height:83.5px;border:1px solid #343434;border-radius:3px;"></div>
<div class="t" style="left:3152px;top:1712.27px;font-size:11.5px;line-height:11.5px;color:#e8e8e8;background:#525252;padding:0 3px;transform:scaleX(0.93);transform-origin:0 0;">Strand Interpolation</div>
<svg class="a" style="left:3157px;top:1732px;" width="30" height="30" viewBox="0 0 30 30"><rect x="-2" y="-2" width="34" height="34" fill="#3e3e3e"/><rect x="0" y="0" width="30" height="30" fill="#c6c6c8"/><rect x="0" y="22" width="30" height="8" fill="#777"/><path d="M4.0 24 Q6.0 14 4.0 8" stroke="#c03030" stroke-width="0.8" fill="none"/><path d="M7.6 24 Q9.6 14 7.6 8" stroke="#c03030" stroke-width="0.8" fill="none"/><path d="M11.2 24 Q13.2 14 11.2 8" stroke="#c03030" stroke-width="0.8" fill="none"/><path d="M14.8 24 Q16.8 14 14.8 8" stroke="#c03030" stroke-width="0.8" fill="none"/><path d="M18.4 24 Q20.4 14 18.4 8" stroke="#c03030" stroke-width="0.8" fill="none"/><path d="M22.0 24 Q24.0 14 22.0 8" stroke="#c03030" stroke-width="0.8" fill="none"/><path d="M25.6 24 Q27.6 14 25.6 8" stroke="#c03030" stroke-width="0.8" fill="none"/><path d="M8 24 V6 M22 24 V6" stroke="#111" stroke-width="1.2"/></svg>
<svg class="a" style="left:3191px;top:1732px;" width="30" height="30" viewBox="0 0 30 30"><rect x="-2" y="-2" width="34" height="34" fill="#3e3e3e"/><rect x="0" y="0" width="30" height="30" fill="#f4ee00"/><rect x="0.5" y="0.5" width="29" height="29" fill="none" stroke="#4a7ad0" stroke-width="1.5"/><rect x="0" y="22" width="30" height="8" fill="#777"/><path d="M4.0 24 Q6.0 14 4.0 8" stroke="#c03030" stroke-width="0.8" fill="none"/><path d="M7.6 24 Q9.6 14 7.6 8" stroke="#c03030" stroke-width="0.8" fill="none"/><path d="M11.2 24 Q13.2 14 11.2 8" stroke="#c03030" stroke-width="0.8" fill="none"/><path d="M14.8 24 Q16.8 14 14.8 8" stroke="#c03030" stroke-width="0.8" fill="none"/><path d="M18.4 24 Q20.4 14 18.4 8" stroke="#c03030" stroke-width="0.8" fill="none"/><path d="M22.0 24 Q24.0 14 22.0 8" stroke="#c03030" stroke-width="0.8" fill="none"/><path d="M25.6 24 Q27.6 14 25.6 8" stroke="#c03030" stroke-width="0.8" fill="none"/><path d="M8 24 V6 M22 24 V6" stroke="#111" stroke-width="1.2"/></svg>
<svg class="a" style="left:3226px;top:1732px;" width="30" height="30" viewBox="0 0 30 30"><rect x="-2" y="-2" width="34" height="34" fill="#3e3e3e"/><rect x="0" y="0" width="30" height="30" fill="#c6c6c8"/><rect x="0" y="22" width="30" height="8" fill="#777"/><path d="M4.0 24 Q6.0 14 4.0 8" stroke="#c03030" stroke-width="0.8" fill="none"/><path d="M7.6 24 Q9.6 14 7.6 8" stroke="#c03030" stroke-width="0.8" fill="none"/><path d="M11.2 24 Q13.2 14 11.2 8" stroke="#c03030" stroke-width="0.8" fill="none"/><path d="M14.8 24 Q16.8 14 14.8 8" stroke="#c03030" stroke-width="0.8" fill="none"/><path d="M18.4 24 Q20.4 14 18.4 8" stroke="#c03030" stroke-width="0.8" fill="none"/><path d="M22.0 24 Q24.0 14 22.0 8" stroke="#c03030" stroke-width="0.8" fill="none"/><path d="M25.6 24 Q27.6 14 25.6 8" stroke="#c03030" stroke-width="0.8" fill="none"/><path d="M8 24 V6 M22 24 V6" stroke="#111" stroke-width="1.2"/></svg>
<div class="a" style="left:3154px;top:1778.5px;width:10px;height:10px;background:#5a5a5a;"></div>
<svg class="a" style="left:3154px;top:1778.5px;" width="10" height="10" viewBox="0 0 10 10"><path d="M2 5 L4.2 7.5 L8.5 2" stroke="#e8e8e8" stroke-width="1.8" fill="none"/></svg>
<div class="t" style="left:3168px;top:1779.27px;font-size:11.5px;line-height:11.5px;color:#e4e4e4;font-family:'Liberation Sans', sans-serif;transform:scaleX(0.93);transform-origin:0 0;">Interpolate Length</div>
<div class="a" style="left:3147px;top:1815px;width:155px;height:91px;border:1px solid #343434;border-radius:3px;"></div>
<div class="t" style="left:3152px;top:1811.27px;font-size:11.5px;line-height:11.5px;color:#e8e8e8;background:#525252;padding:0 3px;transform:scaleX(0.93);transform-origin:0 0;">Interpolation Guide Count</div>
<svg class="a" style="left:3157px;top:1833px;" width="30" height="30" viewBox="0 0 30 30"><rect x="-2" y="-2" width="34" height="34" fill="#3e3e3e"/><rect x="0" y="0" width="30" height="30" fill="#c6c6c8"/><rect x="0" y="22" width="30" height="8" fill="#777"/><path d="M4 24 Q7 14 4 5" stroke="#333" stroke-width="0.9" fill="none"/><circle cx="5" cy="6" r="1.2" fill="#e00"/><path d="M8 24 Q11 14 8 5" stroke="#333" stroke-width="0.9" fill="none"/><circle cx="9" cy="8" r="1.2" fill="#e00"/><path d="M12 24 Q15 14 12 5" stroke="#333" stroke-width="0.9" fill="none"/><circle cx="13" cy="10" r="1.2" fill="#e00"/><path d="M16 24 Q19 14 16 5" stroke="#333" stroke-width="0.9" fill="none"/><circle cx="17" cy="12" r="1.2" fill="#e00"/><path d="M20 24 Q23 14 20 5" stroke="#333" stroke-width="0.9" fill="none"/><circle cx="21" cy="14" r="1.2" fill="#e00"/><path d="M24 24 Q27 14 24 5" stroke="#333" stroke-width="0.9" fill="none"/><circle cx="25" cy="16" r="1.2" fill="#e00"/></svg>
<svg class="a" style="left:3191px;top:1833px;" width="30" height="30" viewBox="0 0 30 30"><rect x="-2" y="-2" width="34" height="34" fill="#3e3e3e"/><rect x="0" y="0" width="30" height="30" fill="#c6c6c8"/><rect x="0" y="22" width="30" height="8" fill="#777"/><path d="M4 24 Q7 14 4 5" stroke="#333" stroke-width="0.9" fill="none"/><circle cx="5" cy="6" r="1.2" fill="#e00"/><path d="M8 24 Q11 14 8 5" stroke="#333" stroke-width="0.9" fill="none"/><circle cx="9" cy="8" r="1.2" fill="#e00"/><path d="M12 24 Q15 14 12 5" stroke="#333" stroke-width="0.9" fill="none"/><circle cx="13" cy="10" r="1.2" fill="#e00"/><path d="M16 24 Q19 14 16 5" stroke="#333" stroke-width="0.9" fill="none"/><circle cx="17" cy="12" r="1.2" fill="#e00"/><path d="M20 24 Q23 14 20 5" stroke="#333" stroke-width="0.9" fill="none"/><circle cx="21" cy="14" r="1.2" fill="#e00"/><path d="M24 24 Q27 14 24 5" stroke="#333" stroke-width="0.9" fill="none"/><circle cx="25" cy="16" r="1.2" fill="#e00"/></svg>
<svg class="a" style="left:3226px;top:1833px;" width="30" height="30" viewBox="0 0 30 30"><rect x="-2" y="-2" width="34" height="34" fill="#3e3e3e"/><rect x="0" y="0" width="30" height="30" fill="#f4ee00"/><rect x="0.5" y="0.5" width="29" height="29" fill="none" stroke="#4a7ad0" stroke-width="1.5"/><rect x="0" y="22" width="30" height="8" fill="#777"/><path d="M4 24 Q7 14 4 5" stroke="#333" stroke-width="0.9" fill="none"/><circle cx="5" cy="6" r="1.2" fill="#e00"/><path d="M8 24 Q11 14 8 5" stroke="#333" stroke-width="0.9" fill="none"/><circle cx="9" cy="8" r="1.2" fill="#e00"/><path d="M12 24 Q15 14 12 5" stroke="#333" stroke-width="0.9" fill="none"/><circle cx="13" cy="10" r="1.2" fill="#e00"/><path d="M16 24 Q19 14 16 5" stroke="#333" stroke-width="0.9" fill="none"/><circle cx="17" cy="12" r="1.2" fill="#e00"/><path d="M20 24 Q23 14 20 5" stroke="#333" stroke-width="0.9" fill="none"/><circle cx="21" cy="14" r="1.2" fill="#e00"/><path d="M24 24 Q27 14 24 5" stroke="#333" stroke-width="0.9" fill="none"/><circle cx="25" cy="16" r="1.2" fill="#e00"/></svg>
<div class="t" style="left:3154px;top:1879.27px;font-size:11.5px;line-height:11.5px;color:#e4e4e4;font-family:'Liberation Sans', sans-serif;transform:scaleX(0.93);transform-origin:0 0;">Guide Weights Chan.:</div>
<div class="a" style="left:3276.5px;top:1873px;width:18.5px;height:20px;background:#4e4e4e;border:1px solid #3a3a3a;border-radius:2px;"></div>
<svg class="a" style="left:3278px;top:1874px;" width="16" height="12" viewBox="0 0 16 12"><path d="M8 3 L13 0 L14 2 L10 6 Z" fill="#e00"/><path d="M3 6 Q6 2 10 5 Q8 9 6 10Z" fill="#e00" stroke="#000" stroke-width="0.6"/></svg>
<div class="a" style="left:3147px;top:1920px;width:155px;height:150px;border:1px solid #343434;border-radius:3px;"></div>
<div class="t" style="left:3152px;top:1914.27px;font-size:11.5px;line-height:11.5px;color:#e8e8e8;background:#525252;padding:0 3px;transform:scaleX(0.93);transform-origin:0 0;">Automatic Partings</div>
<div class="a" style="left:3154px;top:1939.5px;width:10px;height:10px;background:#5a5a5a;"></div>
<div class="t" style="left:3168px;top:1939.27px;font-size:11.5px;line-height:11.5px;color:#e4e4e4;font-family:'Liberation Sans', sans-serif;transform:scaleX(0.93);transform-origin:0 0;">Auto-Part Hair</div>
<div class="t" style="left:3153px;top:1959.27px;font-size:11.5px;line-height:11.5px;color:#e4e4e4;font-family:'Liberation Sans', sans-serif;transform:scaleX(0.93);transform-origin:0 0;">Angle Threshold:</div>
<div class="a" style="left:3237.5px;top:1958px;width:57.5px;height:14px;background:#5e5e5e;"></div>
<div class="t" style="left:3241.5px;top:1960.41px;font-size:11.5px;line-height:11.5px;color:#d0d0d0;font-family:'Liberation Sans', sans-serif;transform:scaleX(0.87);transform-origin:0 0;">0.7</div>
<svg class="a" style="left:3285px;top:1959.0px;" width="7" height="12" viewBox="0 0 7 12"><path d="M0.5 5 L3.5 1 L6.5 5Z M0.5 7 L3.5 11 L6.5 7Z" fill="#d8d8d8"/></svg>
<div class="t" style="left:3152px;top:1982.27px;font-size:11.5px;line-height:11.5px;color:#e4e4e4;font-family:'Liberation Sans', sans-serif;transform:scaleX(0.93);transform-origin:0 0;">Dist. Threshold:</div>
<div class="a" style="left:3237.5px;top:1981px;width:57.5px;height:14px;background:#5e5e5e;"></div>
<div class="t" style="left:3241.5px;top:1983.41px;font-size:11.5px;line-height:11.5px;color:#d0d0d0;font-family:'Liberation Sans', sans-serif;transform:scaleX(0.87);transform-origin:0 0;">25.3746</div>
<svg class="a" style="left:3285px;top:1982.0px;" width="7" height="12" viewBox="0 0 7 12"><path d="M0.5 5 L3.5 1 L6.5 5Z M0.5 7 L3.5 11 L6.5 7Z" fill="#d8d8d8"/></svg>
<div class="a" style="left:3154px;top:2004px;width:10px;height:10px;background:#5a5a5a;"></div>
<div class="t" style="left:3168px;top:2004.87px;font-size:11.5px;line-height:11.5px;color:#e4e4e4;font-family:'Liberation Sans', sans-serif;transform:scaleX(0.93);transform-origin:0 0;">Use Groups as Parts</div>
<div class="t" style="left:3154px;top:2026.27px;font-size:11.5px;line-height:11.5px;color:#e4e4e4;font-family:'Liberation Sans', sans-serif;transform:scaleX(0.93);transform-origin:0 0;">Parting Groups Map:</div>
<div class="a" style="left:3153px;top:2041px;width:120px;height:21px;background:#5b5b5b;border-radius:3px;"></div>
<div class="t" style="left:2913.0px;width:600px;text-align:center;top:2046.66px;font-size:12px;line-height:12px;color:#cfcfcf;transform:scaleX(0.88);transform-origin:50% 0;">No Map</div>
<div class="a" style="left:3276px;top:2041px;width:19px;height:21px;background:#4e4e4e;border:1px solid #3a3a3a;border-radius:2px;"></div>
<svg class="a" style="left:3278px;top:2042px;" width="16" height="12" viewBox="0 0 16 12"><path d="M8 3 L13 0 L14 2 L10 6 Z" fill="#e00"/><path d="M3 6 Q6 2 10 5 Q8 9 6 10Z" fill="#e00" stroke="#000" stroke-width="0.6"/></svg>
<svg class="a" style="left:2440px;top:2218px;" width="14" height="13" viewBox="0 0 14 13"><path d="M0 3 V0 H3 M11 0 H14 V3 M0 10 V13 H3 M11 13 H14 V10" stroke="#ccc" fill="none"/><rect x="4" y="3.5" width="6" height="6" fill="#3bbcbc"/></svg>
<svg class="a" style="left:2468px;top:2216px;" width="12" height="14" viewBox="0 0 12 14"><path d="M3 6 V4 A3 3 0 0 1 9 4 V6" stroke="#ccc" stroke-width="1.6" fill="none"/><rect x="1.5" y="6" width="9" height="8" fill="#ccc"/></svg>
<svg class="a" style="left:2494px;top:2216px;" width="14" height="14" viewBox="0 0 14 14"><rect x="0.5" y="0.5" width="13" height="13" fill="none" stroke="#ccc"/><circle cx="7" cy="7" r="4" fill="none" stroke="#ccc"/><path d="M7 0 V14 M0 7 H14" stroke="#ccc" stroke-width="0.8"/></svg>
<div class="t" style="left:2516px;top:2219.84px;font-size:12px;line-height:12px;color:#ddd;font-family:'Liberation Sans', sans-serif;transform:scaleX(0.92);transform-origin:0 0;">X:</div>
<div class="a" style="left:2530px;top:2217px;width:57px;height:13px;background:#555555;"></div>
<div class="t" style="left:2534px;top:2219.84px;font-size:12px;line-height:12px;color:#888;font-family:'Liberation Sans', sans-serif;transform:scaleX(0.92);transform-origin:0 0;">-2.2385m</div>
<div class="t" style="left:2600px;top:2219.84px;font-size:12px;line-height:12px;color:#ddd;font-family:'Liberation Sans', sans-serif;transform:scaleX(0.92);transform-origin:0 0;">Y:</div>
<div class="a" style="left:2613.5px;top:2217px;width:57px;height:13px;background:#555555;"></div>
<div class="t" style="left:2617px;top:2219.84px;font-size:12px;line-height:12px;color:#888;font-family:'Liberation Sans', sans-serif;transform:scaleX(0.92);transform-origin:0 0;">0.498m</div>
<div class="t" style="left:2684px;top:2219.84px;font-size:12px;line-height:12px;color:#ddd;font-family:'Liberation Sans', sans-serif;transform:scaleX(0.92);transform-origin:0 0;">Z:</div>
<div class="a" style="left:2698px;top:2217px;width:56.5px;height:13px;background:#555555;"></div>
<div class="t" style="left:2702px;top:2219.84px;font-size:12px;line-height:12px;color:#888;font-family:'Liberation Sans', sans-serif;transform:scaleX(0.92);transform-origin:0 0;">0.0m</div>
<div class="t" style="left:2770px;top:2219.84px;font-size:12px;line-height:12px;color:#ddd;font-family:'Liberation Sans', sans-serif;transform:scaleX(0.92);transform-origin:0 0;">Grid = 0.254m</div>
<svg class="a" style="left:2884px;top:2218px;" width="115" height="12" viewBox="0 0 115 12"><path d="M1 0 V12 M11 1 L5 6 L11 11Z M15 1 L9 6 L15 11Z" fill="#ccc" stroke="#ccc"/><path d="M40 1 L34 6 L40 11Z" fill="#ccc"/><rect x="41" y="0" width="1.5" height="12" fill="#ccc"/><rect x="44" y="0" width="1.5" height="12" fill="#ccc"/><path d="M50 0 L62 6 L50 12Z" fill="#ddd"/><rect x="71" y="0" width="1.5" height="12" fill="#ccc"/><rect x="74" y="0" width="1.5" height="12" fill="#ccc"/><path d="M77 1 L83 6 L77 11Z" fill="#ccc"/><path d="M97 1 L103 6 L97 11Z M101 1 L107 6 L101 11Z" fill="#ccc"/><rect x="108" y="0" width="1.5" height="12" fill="#ccc"/><rect x="27" y="0" width="1" height="12" fill="#111"/><rect x="89" y="0" width="1" height="12" fill="#111"/></svg>
<div class="a" style="left:3013px;top:2216px;width:41px;height:14px;background:#5a5a5a;border-radius:3px 3px 0 0;"></div>
<div class="a" style="left:3031px;top:2222px;width:5px;height:8px;background:#ddd;"></div>
<div class="a" style="left:3059px;top:2216px;width:45.5px;height:14px;background:#5a5a5a;border-radius:3px 3px 0 0;"></div>
<div class="t" style="left:3062px;top:2219.84px;font-size:12px;line-height:12px;color:#ccc;font-family:'Liberation Sans', sans-serif;transform:scaleX(0.92);transform-origin:0 0;">Auto Key</div>
<div class="a" style="left:3110px;top:2216px;width:113px;height:14px;background:#5a5a5a;border-radius:3px 3px 0 0;"></div>
<div class="t" style="left:3115px;top:2219.84px;font-size:12px;line-height:12px;color:#ddd;font-family:'Liberation Sans', sans-serif;transform:scaleX(0.92);transform-origin:0 0;">Selected</div>
<svg class="a" style="left:3210px;top:2222px;" width="8" height="6" viewBox="0 0 8 6"><path d="M0.5 0.5 H7.5 L4 5Z" fill="#ccc"/></svg>
<svg class="a" style="left:3236px;top:2217px;" width="14" height="13" viewBox="0 0 14 13"><circle cx="8" cy="6" r="5" fill="none" stroke="#ddd" stroke-width="1.6"/><path d="M4 10 L0 14" stroke="#ddd" stroke-width="2"/></svg>
<svg class="a" style="left:3262px;top:2217px;" width="14" height="13" viewBox="0 0 14 13"><rect x="5" y="0" width="6" height="6" fill="#3bbcbc"/><rect x="0" y="6" width="6" height="6" fill="none" stroke="#ccc"/><path d="M7 8 H13 V13" stroke="#ccc" fill="none"/></svg>
<svg class="a" style="left:3282px;top:2217px;" width="16" height="13" viewBox="0 0 16 13"><path d="M8 2 L14 5 V11 L8 14 L2 11 V5Z" fill="#3bbcbc"/><path d="M0 4 V0 H4 M12 0 H16 V4" stroke="#ccc" fill="none"/></svg>
</body></html>
